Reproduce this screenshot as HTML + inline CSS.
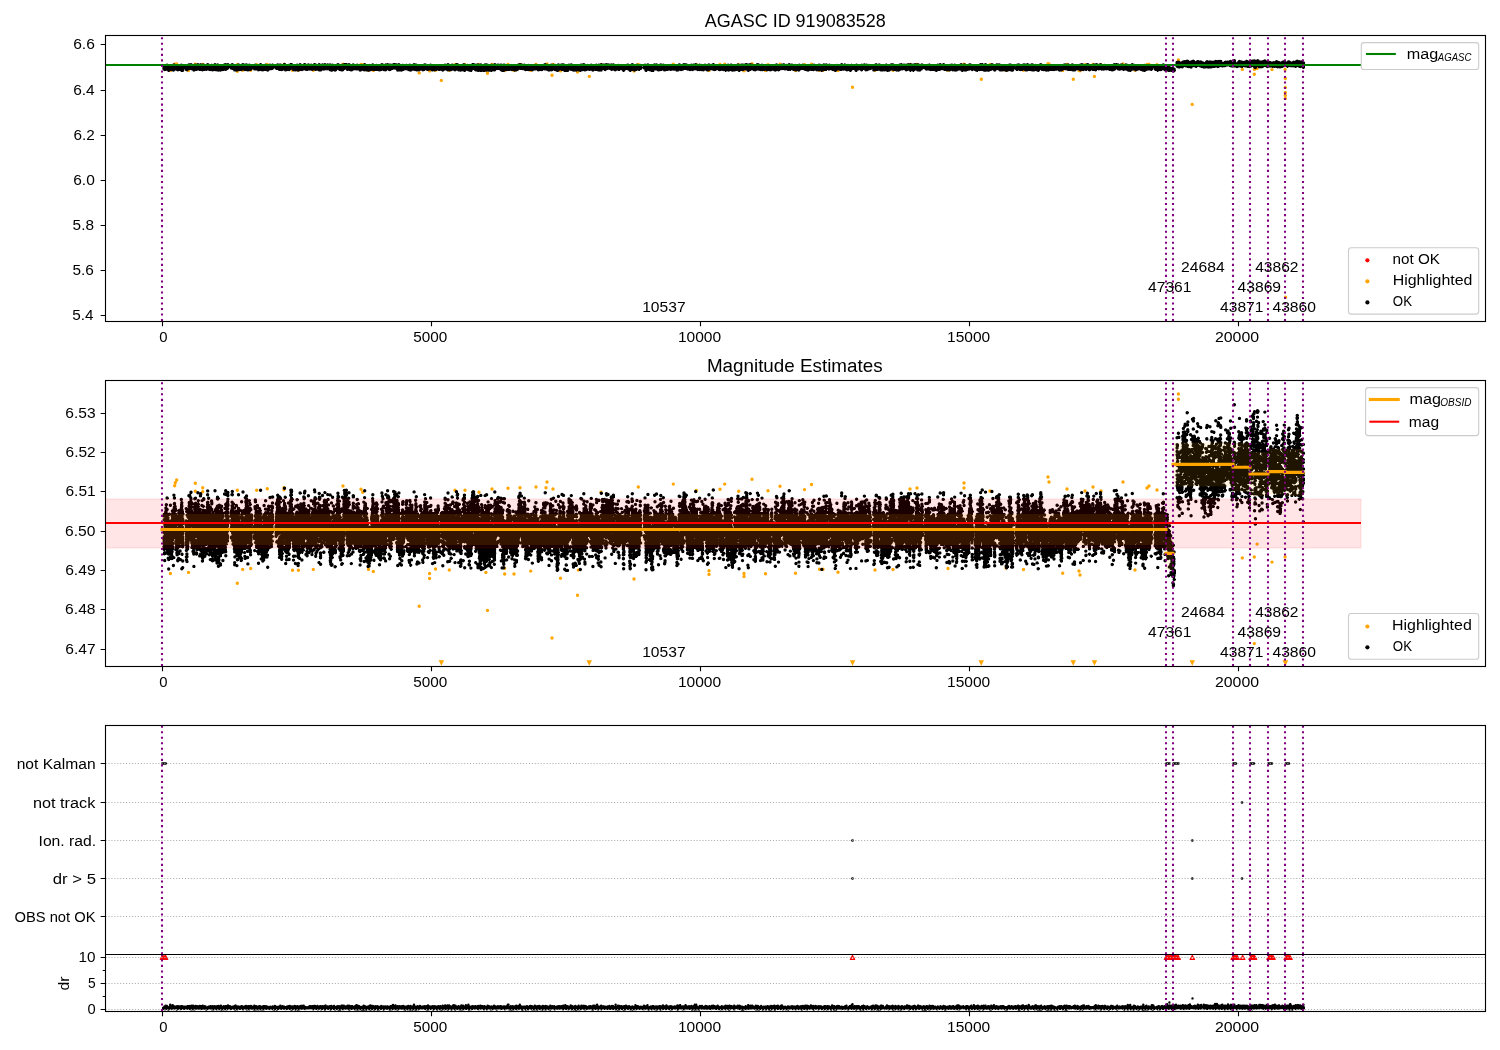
<!DOCTYPE html>
<html><head><meta charset="utf-8"><title>AGASC ID 919083528</title>
<style>html,body{margin:0;padding:0;background:#fff;overflow:hidden}svg{display:block;font-family:"Liberation Sans",sans-serif;will-change:transform}</style>
</head><body>
<svg width="1500" height="1050" viewBox="0 0 1500 1050">
<rect width="1500" height="1050" fill="#fff"/>
<text x="704.67" y="27.17" font-size="17.66" textLength="181.02" lengthAdjust="spacingAndGlyphs" fill="#000">AGASC ID 919083528</text>
<clipPath id="c1"><rect x="105.5" y="35.5" width="1380.0" height="286.0"/></clipPath>
<g clip-path="url(#c1)"><path d="M170.4 70.6h0m4.3-6.3h0m.6-.2h0m1.4-.2h0m11.8 6.6h0m6.8-6.4h0m0 .6h0m7.4-.3h0m0 .3h0m34.6-.1h0m0 6.7h0m5.4-1h0m8-.1h0m6-5.6h0m10.6-.1h0m16.7-.1h0m0 .2h0m8.5 5.7h0m5.9 0h0m14.9 0h0m29.7-6h0m18 .2h0m1.7 .2h0m5.8 5.6h0m4.8 .1h0m45.9 2.5h0m10.4-2.3h0m0 .3h0m5.9-.7h0m5.8 10.2h0m8-10.1h0m5.7-5.7h0m10 0h0m14 .1h0m6.9 5.8h0m1.6 2.7h0m4.5-8.7h0m12.7 5.7h0m0 .4h0m3.3-6.1h0m6 6.1h0m6-6.2h0m10.7 6h0m5.3-6h0m10 0h0m1-.4h0m5 11.2h0m1-10.7h0m7.5 6.4h0m17 1.2h0m.8-1.8h0m11 6.1h0m11.7-11.7h0m33 6.3h0m4.3-6.6h0m35-.2h0m23 .4h0m12.7 5.8h0m0 .2h0m11-6.1h0m4.7-.3h0m14 .5h0m5.3 5.9h0m0 .2h0m8-7h0m13.5 6.8h0m2.5-6h0m12-.3h0m15.5 6.3h0m9-6h0m7-.4h0m8 6.1h0m3.5 0h0m15 .2h0m14.5 16.8h0m22.5-17h0m18 0h0m17-5.8h0m7-.1h0m31 5.8h0m16-6.1h0m0 .3h0m17.3 14.9h0m8.7-14.6h0m16 5.5h0m17.5 .1h0m24.5-6.7h0m1 .4h0m13.7 6.6h0m4.3-6.1h0m6.3 14.8h0m5.7-8.9h0m1 .3h0m5-6h0m8-.3h0m1.4 12h0m6.6-11.7h0m22-.7h0m12 6.3h0m12-5.9h0m2-.1h0m8 .3h0m21.4-4.6h0m0 .3h0m13.8 44.1h0m50.1-35h0m12 0h0m0 4.9h0m2.8-5.7h0m14.9 1h0m13.1-.2h0m.2 9.1h0m0 8.9h0m0 5h0m0 3.1h0m0 2.9h0m.3 198.9h0" stroke="#ffa500" stroke-width="3.4" stroke-linecap="round" fill="none"/><path d="M163 66h479v1h-479zM163 67h1010v1h-1010zM163 68h66v1h-66zM163 69h21v1h-21zM164 65h20v1h-20zM164 70h2v1h-2zM167 64h1v1h-1zM168 70h7v1h-7zM168 71h1v1h-1zM173 64h2v1h-2zM177 70h7v1h-7zM181 64h1v1h-1zM181 71h2v1h-2zM185 65h44v1h-44zM185 69h43v1h-43zM186 70h2v1h-2zM188 64h4v1h-4zM193 70h4v1h-4zM194 64h11v1h-11zM199 70h6v1h-6zM206 70h1v1h-1zM207 64h2v1h-2zM209 70h15v1h-15zM211 64h1v1h-1zM214 64h5v1h-5zM223 64h6v1h-6zM225 70h1v1h-1zM230 68h44v1h-44zM231 64h3v1h-3zM231 65h21v1h-21zM232 69h20v1h-20zM234 70h8v1h-8zM238 64h2v1h-2zM241 64h7v1h-7zM244 70h2v1h-2zM247 70h4v1h-4zM249 64h1v1h-1zM254 65h20v1h-20zM254 69h19v1h-19zM255 64h1v1h-1zM258 70h2v1h-2zM259 64h3v1h-3zM260 63h1v1h-1zM261 70h8v1h-8zM265 64h1v1h-1zM269 64h5v1h-5zM275 65h93v1h-93zM275 68h367v1h-367zM276 64h6v1h-6zM276 69h15v1h-15zM279 70h4v1h-4zM283 64h3v1h-3zM284 63h1v1h-1zM285 70h2v1h-2zM288 64h5v1h-5zM288 70h2v1h-2zM290 63h2v1h-2zM292 69h45v1h-45zM293 70h7v1h-7zM297 64h1v1h-1zM299 64h3v1h-3zM301 70h2v1h-2zM303 64h3v1h-3zM306 70h2v1h-2zM307 64h2v1h-2zM311 64h1v1h-1zM312 70h1v1h-1zM313 64h8v1h-8zM314 63h1v1h-1zM315 70h1v1h-1zM318 70h4v1h-4zM322 64h12v1h-12zM329 70h8v1h-8zM337 64h3v1h-3zM338 69h7v1h-7zM339 70h5v1h-5zM342 64h8v1h-8zM344 63h1v1h-1zM346 63h1v1h-1zM346 69h47v1h-47zM347 70h1v1h-1zM349 70h3v1h-3zM352 64h2v1h-2zM356 64h3v1h-3zM359 70h3v1h-3zM363 64h3v1h-3zM363 70h9v1h-9zM371 65h8v1h-8zM372 64h2v1h-2zM373 70h9v1h-9zM375 64h3v1h-3zM381 64h3v1h-3zM381 65h59v1h-59zM383 70h4v1h-4zM385 64h15v1h-15zM389 70h2v1h-2zM396 69h123v1h-123zM397 70h7v1h-7zM402 64h2v1h-2zM406 64h2v1h-2zM408 70h4v1h-4zM409 64h2v1h-2zM413 64h4v1h-4zM414 70h6v1h-6zM422 70h3v1h-3zM424 64h3v1h-3zM427 70h1v1h-1zM430 64h2v1h-2zM432 70h5v1h-5zM439 70h1v1h-1zM441 65h98v1h-98zM442 70h2v1h-2zM444 64h5v1h-5zM447 70h5v1h-5zM451 64h3v1h-3zM454 70h2v1h-2zM455 64h5v1h-5zM458 70h8v1h-8zM462 64h4v1h-4zM464 71h1v1h-1zM467 64h1v1h-1zM467 70h5v1h-5zM469 64h13v1h-13zM471 71h1v1h-1zM475 70h21v1h-21zM478 71h1v1h-1zM480 71h2v1h-2zM483 71h2v1h-2zM484 64h5v1h-5zM491 64h1v1h-1zM491 71h1v1h-1zM494 64h8v1h-8zM500 70h5v1h-5zM502 71h2v1h-2zM503 64h2v1h-2zM506 70h4v1h-4zM511 70h7v1h-7zM518 64h4v1h-4zM520 69h88v1h-88zM524 64h1v1h-1zM525 70h8v1h-8zM528 64h2v1h-2zM535 64h2v1h-2zM537 70h6v1h-6zM540 65h25v1h-25zM543 64h5v1h-5zM547 70h6v1h-6zM550 64h4v1h-4zM554 70h5v1h-5zM555 64h1v1h-1zM557 64h8v1h-8zM557 71h1v1h-1zM561 70h8v1h-8zM564 71h4v1h-4zM567 65h11v1h-11zM568 64h5v1h-5zM571 70h16v1h-16zM579 65h44v1h-44zM580 64h5v1h-5zM580 71h1v1h-1zM587 64h1v1h-1zM589 70h1v1h-1zM590 64h2v1h-2zM592 70h2v1h-2zM595 70h7v1h-7zM596 64h1v1h-1zM598 64h21v1h-21zM604 70h2v1h-2zM610 69h31v1h-31zM611 70h1v1h-1zM614 70h2v1h-2zM618 70h2v1h-2zM622 70h3v1h-3zM623 71h1v1h-1zM624 65h18v1h-18zM626 64h3v1h-3zM629 70h8v1h-8zM630 71h1v1h-1zM631 64h3v1h-3zM635 64h3v1h-3zM639 70h1v1h-1zM640 64h1v1h-1zM643 65h24v1h-24zM643 66h372v1h-372zM643 68h510v1h-510zM644 64h2v1h-2zM645 69h156v1h-156zM645 70h2v1h-2zM646 71h1v1h-1zM647 64h2v1h-2zM649 70h5v1h-5zM651 71h3v1h-3zM654 64h4v1h-4zM657 70h5v1h-5zM660 64h4v1h-4zM664 70h4v1h-4zM668 65h8v1h-8zM670 70h1v1h-1zM671 64h1v1h-1zM676 70h3v1h-3zM678 64h3v1h-3zM678 65h55v1h-55zM680 70h2v1h-2zM682 64h5v1h-5zM689 70h2v1h-2zM690 64h10v1h-10zM692 70h1v1h-1zM697 70h7v1h-7zM701 64h5v1h-5zM706 70h3v1h-3zM708 64h2v1h-2zM712 64h3v1h-3zM713 63h1v1h-1zM714 70h2v1h-2zM718 64h2v1h-2zM719 70h2v1h-2zM723 70h14v1h-14zM725 64h1v1h-1zM725 71h1v1h-1zM727 64h2v1h-2zM730 64h2v1h-2zM734 65h35v1h-35zM737 64h2v1h-2zM738 70h6v1h-6zM739 71h1v1h-1zM741 64h12v1h-12zM747 70h4v1h-4zM748 71h1v1h-1zM753 70h3v1h-3zM756 64h4v1h-4zM760 70h5v1h-5zM761 64h3v1h-3zM766 70h6v1h-6zM771 65h2v1h-2zM774 65h97v1h-97zM774 70h3v1h-3zM775 64h3v1h-3zM778 70h2v1h-2zM781 64h4v1h-4zM786 64h7v1h-7zM788 70h1v1h-1zM790 70h1v1h-1zM793 70h7v1h-7zM795 64h1v1h-1zM799 64h1v1h-1zM801 64h4v1h-4zM802 69h62v1h-62zM805 70h5v1h-5zM811 70h3v1h-3zM812 64h3v1h-3zM816 70h11v1h-11zM818 64h2v1h-2zM821 71h1v1h-1zM823 64h5v1h-5zM829 64h2v1h-2zM832 70h5v1h-5zM835 71h1v1h-1zM837 64h1v1h-1zM840 70h2v1h-2zM841 64h5v1h-5zM846 70h6v1h-6zM848 64h1v1h-1zM850 71h1v1h-1zM851 64h1v1h-1zM855 70h2v1h-2zM856 64h1v1h-1zM856 71h1v1h-1zM858 64h1v1h-1zM861 64h7v1h-7zM861 70h2v1h-2zM865 69h6v1h-6zM865 70h3v1h-3zM869 64h1v1h-1zM873 65h51v1h-51zM873 69h49v1h-49zM873 70h5v1h-5zM874 64h7v1h-7zM880 70h10v1h-10zM886 64h1v1h-1zM887 71h1v1h-1zM890 64h5v1h-5zM893 70h7v1h-7zM899 64h21v1h-21zM905 70h3v1h-3zM909 70h6v1h-6zM910 71h1v1h-1zM913 71h1v1h-1zM917 70h4v1h-4zM921 64h2v1h-2zM925 64h1v1h-1zM925 65h41v1h-41zM925 69h73v1h-73zM927 64h3v1h-3zM930 70h10v1h-10zM936 71h1v1h-1zM937 64h8v1h-8zM944 70h7v1h-7zM950 64h6v1h-6zM952 70h6v1h-6zM960 64h6v1h-6zM961 70h7v1h-7zM962 71h1v1h-1zM968 64h4v1h-4zM968 65h5v1h-5zM972 70h1v1h-1zM975 70h16v1h-16zM976 65h31v1h-31zM977 64h10v1h-10zM977 71h1v1h-1zM982 63h1v1h-1zM991 64h3v1h-3zM994 70h2v1h-2zM996 64h5v1h-5zM999 69h15v2h-15zM1006 71h1v1h-1zM1008 64h4v1h-4zM1008 65h5v1h-5zM1016 64h4v1h-4zM1016 65h29v1h-29zM1016 66h154v1h-154zM1016 69h100v1h-100zM1016 70h2v1h-2zM1020 70h3v1h-3zM1023 64h7v1h-7zM1025 70h15v1h-15zM1031 64h3v1h-3zM1035 64h2v1h-2zM1038 71h1v1h-1zM1039 64h4v1h-4zM1042 70h13v1h-13zM1049 65h80v1h-80zM1058 70h5v1h-5zM1063 64h10v1h-10zM1068 70h8v1h-8zM1079 64h5v1h-5zM1080 70h4v1h-4zM1086 64h4v1h-4zM1086 70h1v1h-1zM1089 70h2v1h-2zM1092 64h6v1h-6zM1092 70h5v1h-5zM1099 64h3v1h-3zM1104 64h1v1h-1zM1109 70h5v1h-5zM1113 64h10v1h-10zM1116 63h1v1h-1zM1117 69h36v1h-36zM1123 70h1v1h-1zM1125 64h3v1h-3zM1127 70h5v1h-5zM1130 71h1v1h-1zM1131 64h4v1h-4zM1131 65h21v1h-21zM1135 70h2v1h-2zM1140 64h1v1h-1zM1141 70h6v1h-6zM1144 64h1v1h-1zM1144 71h1v1h-1zM1147 64h2v1h-2zM1151 70h1v1h-1zM1154 65h12v1h-12zM1154 68h21v2h-21zM1155 70h7v1h-7zM1157 71h1v1h-1zM1162 64h3v1h-3zM1164 70h2v1h-2zM1167 70h9v1h-9zM1168 71h2v1h-2zM1171 71h4v1h-4zM1176 62h28v1h-28zM1176 63h129v3h-129zM1176 66h22v1h-22zM1177 61h3v1h-3zM1177 67h6v1h-6zM1182 61h13v1h-13zM1186 60h3v1h-3zM1188 67h4v1h-4zM1192 60h2v1h-2zM1196 61h6v1h-6zM1196 67h1v1h-1zM1199 66h27v1h-27zM1201 67h14v1h-14zM1205 62h17v1h-17zM1206 61h16v1h-16zM1215 60h1v1h-1zM1217 67h2v1h-2zM1219 60h3v1h-3zM1223 62h13v1h-13zM1225 61h7v1h-7zM1230 60h1v1h-1zM1230 66h75v1h-75zM1233 60h3v2h-3zM1234 59h1v1h-1zM1236 67h2v1h-2zM1237 62h68v1h-68zM1238 61h30v1h-30zM1239 60h1v1h-1zM1242 67h1v1h-1zM1246 60h1v1h-1zM1247 67h3v1h-3zM1250 60h9v1h-9zM1254 67h3v1h-3zM1255 68h1v1h-1zM1258 67h5v1h-5zM1263 60h3v1h-3zM1267 67h1v1h-1zM1269 61h1v1h-1zM1272 67h1v1h-1zM1274 67h1v1h-1zM1275 61h3v1h-3zM1276 67h7v1h-7zM1282 61h4v1h-4zM1287 67h1v1h-1zM1288 61h2v1h-2zM1293 61h10v1h-10zM1295 67h1v1h-1zM1297 60h1v1h-1zM1299 67h2v1h-2zM1302 67h3v1h-3zM1303 68h1v1h-1z" fill="#000"/><path d="M164 68.6h0m0-.5h0m0 .7h0m.1-.4h0m0-1h0m0-.9h0m.1-.2h0m.2 2.8h0m.3 .5h0m1.2-3.7h0m.4 3.2h0m0-3.5h0m.8-.4h0m.2 3.7h0m0 .1h0m.1 0h0m0-.1h0m.8 .6h0m.5 .7h0m.7-3.9h0m1-.6h0m0 3.7h0m1.4 .1h0m.6-3.4h0m1 3.9h0m.4-.6h0m.1-4.5h0m.5 .3h0m.7 .6h0m.2 .2h0m0-.1h0m.2 .2h0m.3 2.7h0m.2-.1h0m0-2.2h0m.5 0h0m.5 2.6h0m.1 .1h0m.7 .5h0m.2-3.2h0m.1 3.1h0m.5-.1h0m.2-3.4h0m1.7 3.5h0m.8-4.3h0m.5 .2h0m0 4.7h0m.1-4.5h0m.5 .4h0m.2 2.6h0m.1 1h0m0 .5h0m.3-1.8h0m0-2.1h0m3.2-.4h0m0 2.6h0m.2 .4h0m0 .5h0m.1 .2h0m.2-3.5h0m.3 3.6h0m.9-1.1h0m1-3.6h0m.5 3.2h0m.3-3.2h0m.3 3.2h0m.7-3.1h0m.3-.4h0m.8 .8h0m.1 3.2h0m.4 0h0m.1 0h0m.4-.1h0m.2 .4h0m.9 1.1h0m.9-4.9h0m.7 0h0m.2 .3h0m.8 3.7h0m.2-.1h0m1.2-4.3h0m0 3.9h0m1.3 0h0m.5 .6h0m.9-4.4h0m.1 0h0m0 4.3h0m1.4-3.9h0m.3 4.4h0m.3-.2h0m.8-4.2h0m.3 0h0m0-.1h0m1 4.1h0m.3-3.2h0m0 0h0m.4 0h0m.1 3h0m0-.2h0m.9 .1h0m.1 .1h0m.8-.3h0m.2-3.9h0m.1-.3h0m.9 .6h0m.7 4h0m.9-3.4h0m.1 3.8h0m1.3-4.2h0m.2 .2h0m0-.1h0m.4 4.1h0m.3 .1h0m.5-3.6h0m.1 .3h0m.6 3.2h0m1.3-5h0m.3 4.9h0m.8 .1h0m.9 .2h0m.5-4.7h0m.3 .1h0m.3 0h0m.3 4.8h0m.3-.3h0m.6-3.9h0m0-.1h0m.7 .4h0m.2 3.8h0m.3 .1h0m.8-4h0m.2-.2h0m0-.1h0m.2 .4h0m.2 .1h0m.2 .1h0m.1 0h0m.5 0h0m.1 0h0m.1 3.3h0m.8-.6h0m0 0h0m.9-4.1h0m.1 4.1h0m.1-.1h0m.9-4.3h0m.1 4.7h0m.3-4.4h0m1.3 3.1h0m0 .2h0m.1-.3h0m0 .2h0m.2-.6h0m.2-2.5h0m0-.2h0m0 .8h0m.1 .1h0m.2 1.2h0m3.1-.6h0m0 1.7h0m.1-.5h0m0-1.4h0m.1 1.9h0m.4-3.1h0m.2 .6h0m.2-.8h0m.5 3.5h0m.3 .3h0m.3-2.9h0m.8 .3h0m.5 3.9h0m0 .1h0m1.2-3.8h0m.3-.4h0m.2 0h0m.5 4.3h0m.5-.4h0m.1 0h0m1-4.7h0m.7 4.6h0m.8-.1h0m.9-3.3h0m.3 3.5h0m.4-4.2h0m.7 3.3h0m0 0h0m.3-.1h0m0 .2h0m.4-4.1h0m.6 4h0m.5 0h0m.5 .4h0m.5 .4h0m.2-4.4h0m1.2-.1h0m1.1 4.4h0m.1-3.6h0m.2 4.1h0m1.4-4.6h0m.4 .2h0m.4 .1h0m.5 3.6h0m.2-3.2h0m.5 2.5h0m.1-2.1h0m0 .2h0m0-.1h0m3.1 1.6h0m0-.1h0m0-.1h0m.1 .1h0m.1 .9h0m0-2.1h0m.3-1h0m.1 .6h0m.2-1.1h0m.1 .1h0m.9 .5h0m.3 2.8h0m.3-2.9h0m.4-.1h0m.2 .1h0m.1 3.2h0m.9 .8h0m.4-3.7h0m.4 2.8h0m.2-3h0m.4 3.1h0m.7-4.4h0m.6 4.9h0m.2-3h0m.4 3h0m1 .2h0m.6-.2h0m0 .1h0m.3 0h0m.4-3.9h0m.9 3.7h0m.6-4.1h0m1.3 4h0m.1 .1h0m.4-3.4h0m.3 4.1h0m.9-4.4h0m.8 3h0m.6-3.6h0m.7 3.4h0m.6-.1h0m.2 .2h0m.7-.7h0m0 .3h0m.3-3.1h0m.1 2.3h0m0-.9h0m.1-1.4h0m3.3 2.8h0m.1-.2h0m0-.8h0m.2-1.3h0m.1 1h0m.3 1.7h0m.1-2.8h0m0 .1h0m.3 0h0m.3 2.7h0m.2-3h0m0 0h0m.1-.3h0m.5 3.4h0m.3 .2h0m.7-3.5h0m.3 4.3h0m.1-.2h0m.5-4.1h0m.5 .1h0m1.1 4.4h0m.5-.5h0m1.3-3.7h0m.2 3.4h0m.1-.1h0m.7-4.2h0m.7 .6h0m.5 4.8h0m.9-.3h0m.6-3.4h0m.4 2.7h0m.1-2.6h0m.2 2.7h0m.6-3.5h0m.6 4.1h0m0 0h0m0-.4h0m.4-.6h0m0 .1h0m0 0h0m0-.1h0m1-.4h0m.3-3.6h0m.7 0h0m.2 3.4h0m.3-.1h0m.1-2.7h0m.1 2.8h0m.4 .1h0m.3-2.1h0m.6 3.6h0m0-.3h0m.4-3.4h0m1.5 4h0m.3-4.2h0m1.4-.4h0m.7 .5h0m0-.1h0m.3 4.3h0m.2-.2h0m1.2-.3h0m.4-.5h0m.2-4.2h0m1.8 4.8h0m.6-3.9h0m.1 0h0m.1-.1h0m.5 3.3h0m.6-3.8h0m.4 3.5h0m.3-3.8h0m0 0h0m.4-.1h0m.4 3.9h0m.6-2.7h0m.1 3.3h0m.9 0h0m.2 .1h0m1.3-4.3h0m.7 4.1h0m1.2-.2h0m.9-3.6h0m.8 3.9h0m1.4-3.8h0m.2 .2h0m.1 3.3h0m.8-4.3h0m.3 .1h0m.9 4.6h0m.2-4.1h0m.1 3.9h0m.9-.1h0m1-3.5h0m1.1 4.3h0m.2-5h0m.3 .3h0m.4 0h0m.7 4.8h0m1.3-1.2h0m.6-3.7h0m1.3 4h0m.1 0h0m1-4.2h0m.4 3.7h0m.5 0h0m.4-3.1h0m1 3.3h0m.5-3.8h0m.4 .4h0m.7 3.2h0m.7 .5h0m.6-4.1h0m.2 4.7h0m.1 .1h0m.1 .1h0m.2 .1h0m.3 0h0m.5 .1h0m.5 0h0m.6-4.9h0m.7 .6h0m1.2 .2h0m.2 .1h0m.4 4.1h0m.1-4h0m1 2.5h0m.5-3h0m.3 2.5h0m0-.2h0m.1 .1h0m.8-3.2h0m.6 .3h0m.4 3.7h0m.5-3.4h0m.7 4h0m.6 .2h0m.2-3.5h0m.6 0h0m.1-.2h0m.1 4h0m.5 0h0m.2-4.8h0m.6 4.2h0m.2-.3h0m.1-.1h0m.1-.1h0m.9-4.2h0m.4 .2h0m.3 2.9h0m1-2.9h0m.1-.1h0m.2-.1h0m1 4.7h0m.9-.2h0m.8-4.3h0m.1 4.1h0m.3 .4h0m1.4-3.2h0m.5 3.8h0m1.7-.9h0m.2-4h0m.1 .1h0m1.6 3.4h0m.3-2.7h0m.4 2.8h0m.5 .2h0m.1 0h0m.5-3.2h0m.3 3.1h0m.2-3.4h0m.5 3.4h0m0 0h0m.5-3.1h0m.1 0h0m1.8 4.4h0m.1-3.9h0m.6 3.6h0m.2-3.6h0m.2 .3h0m.2 2.5h0m1.6-2.8h0m.1 .2h0m.4 2.9h0m.3-3.8h0m.4 4.3h0m.5-5.1h0m.7 1h0m.6 3.9h0m.2 .2h0m.3-3.8h0m.7 0h0m.9 4.2h0m.1 0h0m0-.1h0m.3-2.8h0m.4 .2h0m.2 2.6h0m0-.1h0m.3-2.4h0m.6 2.2h0m.1-.1h0m.4-2.1h0m.1 1.9h0m0 .2h0m0-.2h0m.4 0h0m.1-.1h0m.1-.1h0m.4-3.2h0m.6 3h0m.6-4.1h0m.5 .6h0m.2 .3h0m.4 3.8h0m1.4-4h0m.3 3.6h0m.6 .1h0m.2-3.8h0m.7 .1h0m.5 3.6h0m0-3.3h0m.4 .6h0m.5 2.7h0m.2 .2h0m.7-2.4h0m.1 2.9h0m.3-2.8h0m.1 0h0m.5 2.5h0m.3 0h0m.1-.1h0m0 0h0m.4-.5h0m.3-3h0m.4-1.2h0m.1 .6h0m.3-.4h0m0 3.7h0m.7-3.5h0m.6 3.7h0m.3 .6h0m.4 0h0m1.3 .2h0m.3-4.8h0m.8 3.6h0m.9-3.9h0m.5 .4h0m.6 .1h0m.3 4.1h0m.4-3.9h0m.2 4.2h0m.7-.2h0m.6-4h0m.2 3.5h0m1.6-.7h0m.9-3.4h0m.5 3.4h0m0-.2h0m.6-3.2h0m0 0h0m.3 0h0m.1 .3h0m.3 2.6h0m.8 .1h0m.2-2.8h0m.3 3.5h0m.1-3.1h0m.3 .1h0m0 3h0m.3 .5h0m.1 .1h0m.2 1h0m.1 0h0m.4-4.9h0m.7-.3h0m1 4.7h0m0 .4h0m.1-3.6h0m1.4 3.7h0m.3-.4h0m.1 .1h0m.6-.4h0m.2-3.7h0m.1-.2h0m.3 0h0m.3 3.8h0m.5-.1h0m.2-.2h0m1.6-2.6h0m.2 2.3h0m.3-3h0m0-.1h0m.6-.1h0m.9 3.5h0m0 .1h0m.5-3h0m0 .1h0m.1 0h0m.9 3.5h0m.4 .2h0m.3-4.5h0m.3 .1h0m.6 4.6h0m.7-.4h0m.5-3.7h0m.1-.2h0m.6 3.1h0m.1 0h0m0-.2h0m0 0h0m.2 .2h0m.1 0h0m.6 0h0m.5-4.1h0m.3 4.6h0m.1-.2h0m1.1-3.8h0m.7-.2h0m.6 4.8h0m.6-.2h0m.1-3.4h0m1.4 3.5h0m.8-4h0m.1 3.1h0m.7-3.2h0m.4 .2h0m0 .1h0m.3-.1h0m.4 .4h0m.5-.1h0m.4 0h0m0 3.4h0m.3 .2h0m.4-3.4h0m.1-.1h0m.7 3.1h0m.1-.1h0m.4-4.4h0m.9 .3h0m1.3 .3h0m.8 3.9h0m.7-.4h0m0-3.2h0m.8 3.3h0m1-.2h0m.5-3.7h0m1.9 4.7h0m.6-3.6h0m.2 3.1h0m.3 .1h0m.6-3.1h0m.5 3.4h0m.3-3.4h0m.5-.4h0m.2 .2h0m.2 .1h0m.2 3.1h0m.5-3h0m.9-.2h0m.3 2.2h0m.3-2.7h0m.1 .2h0m0 .2h0m.2-.1h0m.4 2.7h0m.4 .7h0m1.7-.3h0m.1-2.7h0m0 0h0m.2-.1h0m.3-.1h0m.2 .1h0m.3 0h0m.2 0h0m.1-.1h0m.5 3.8h0m1-.7h0m.2-3h0m.4-.4h0m.7-.7h0m0 0h0m.4 3.6h0m2.2 .9h0m.3-4.9h0m1.7 4.9h0m.5-4h0m.9 3.8h0m1-4.4h0m.8 .3h0m.2 3.4h0m.1 0h0m.9 .4h0m.4-3.4h0m.5 4h0m1.4-5.1h0m.4 4.2h0m.4-3.9h0m.4-.1h0m1 4.9h0m.6-4.2h0m1.1 .8h0m.1 3.6h0m.3-3.8h0m.1 3.8h0m.1-.4h0m.1 .3h0m2-4.6h0m.2 4.4h0m.2-4.5h0m.1 0h0m.8-.1h0m.1-.2h0m.3 5.3h0m.5-4.5h0m.5 3.5h0m1.6-3.7h0m.4 3.8h0m.3 0h0m.5-3.6h0m.5 4.2h0m.4 .1h0m.4-4.6h0m.8 .2h0m.3 4.6h0m.6-1h0m.3-3.7h0m.3-.3h0m.1 .1h0m.2 3.1h0m.1-3.4h0m.2-.3h0m.4 .1h0m0 0h0m.2-.1h0m.3 0h0m0 .2h0m.1 0h0m0 0h0m.3 3.6h0m1.7 1.3h0m.3-4.7h0m1.3 4.8h0m.4-4.9h0m.3 5.2h0m.5-4.9h0m1.2 4.6h0m.3 .2h0m.2 .1h0m.6-5.2h0m.1 5.2h0m.1 0h0m.1-.1h0m.1 .2h0m.4-4.7h0m.2 .2h0m.1 .3h0m.1-.1h0m.3 .1h0m.1 0h0m.1-.1h0m.9 4.2h0m1.5-.1h0m.2-5.1h0m1.2 5.1h0m.2-.4h0m.1-4.8h0m1.5 .5h0m.1 .3h0m.2 4.3h0m.7-4h0m.5 4h0m.1 0h0m.8-4.3h0m.9 4.5h0m.1-5h0m.8 .6h0m0 3.9h0m2 .2h0m.2-.3h0m.3-4.9h0m1 .9h0m.6 0h0m.5 3h0m.3-.2h0m.4-3.2h0m.7-.1h0m0 3.2h0m.1 0h0m.4-2.8h0m1.1-.1h0m.5 3.5h0m.2-3.5h0m.3-.2h0m.2 0h0m.2 4.5h0m.8 .5h0m1.2-4.7h0m.2-.3h0m.2 4.7h0m.1 .3h0m0-.3h0m.6-4.7h0m0 .3h0m1.1 3.5h0m.2 0h0m.2-.1h0m.5 .2h0m.2 .5h0m.6-3.5h0m0 0h0m.5-.1h0m.9 3.4h0m.1-3.7h0m.6 .1h0m.4 .4h0m.9 2.9h0m.1-2.7h0m0 2.6h0m.3-.1h0m0 0h0m.4-2.3h0m.4 2.6h0m.2 .3h0m.6-.2h0m.3-3.2h0m1.2 .3h0m.2 .1h0m.1 0h0m.4 3.6h0m.6-3.5h0m.4-.4h0m.1 0h0m.5 3.6h0m.1-.2h0m.4-3.2h0m.5 2.9h0m.2-3.1h0m.8 2.1h0m.4-3.2h0m0-.1h0m.2 2.9h0m.8-3h0m.3-.1h0m.5 3.6h0m.8-3.4h0m.3 .5h0m.6 .3h0m.4 2.8h0m.2-.2h0m0 .2h0m.3-2.7h0m.9 2.6h0m.2-3.3h0m.1 .4h0m0-.1h0m.1 0h0m.4 .2h0m.6 3.8h0m.2 0h0m.1 0h0m.2-.3h0m0 .1h0m.2-.2h0m.2 .3h0m.7-.1h0m.6-3.3h0m0 0h0m.1 3.2h0m.6 .4h0m.3-4.2h0m.5 3.7h0m1.6 .2h0m.2-3h0m1.3 3.5h0m.3-3.5h0m.2 0h0m.4 0h0m.1 2.4h0m.2 .1h0m.2 0h0m.3-2.7h0m.8-.3h0m0 2.9h0m.8 0h0m.2-3.2h0m.2 0h0m1.4 .5h0m.7 3.5h0m.2 .2h0m.3-.3h0m.3 .1h0m.1-.1h0m.4 .1h0m.4-.3h0m.4-2.3h0m.5-.4h0m.8 2.9h0m0-3.3h0m.1 3.5h0m1.2-1h0m.5-2.5h0m.3-.2h0m0-.3h0m0 0h0m.1-.1h0m.1 2.9h0m.2 0h0m.2 .2h0m.1-.1h0m.3 .2h0m.1 .2h0m.5-4.1h0m1.5 4.3h0m.7-3.6h0m.1 3.7h0m1.5 .8h0m1.1-3.9h0m.2-.4h0m.1-.1h0m.9-.4h0m.2 4.5h0m2-4.5h0m.6 3.7h0m0 .1h0m.6 .2h0m.8 .3h0m.3-4.1h0m1.1 4.7h0m.2-.2h0m.1 .4h0m.2-.1h0m.4 .1h0m.5-.5h0m.1-4.8h0m1.9 3.4h0m0 .2h0m.1-3.2h0m.2 3.1h0m.7 .4h0m.1 .4h0m.5-.1h0m.1-4.3h0m1 4.3h0m.5-4.2h0m.5 .8h0m.7 4.5h0m.6-3.4h0m.2-.2h0m.7 3.7h0m1.3-4.3h0m0 4.3h0m1.5-5h0m0-.2h0m.4 3.5h0m.1 0h0m.1 0h0m.9 .3h0m.3-3.7h0m.3 4h0m.2-4.3h0m.9 .5h0m.2 3.7h0m0-3.4h0m.4 0h0m.4 4.1h0m.1 0h0m.2 .2h0m1.4-.1h0m.5-4.2h0m.8 4.2h0m.1-4.3h0m.1 .3h0m.1 0h0m.1-.1h0m.2 0h0m1.1 3.7h0m1 .1h0m.5 .1h0m.2-3.6h0m0 0h0m.7 4.1h0m.6-5.1h0m.4 4.3h0m.4-4.3h0m.8 4.2h0m0 .1h0m1.3-4.7h0m.7 4.7h0m.5 .4h0m.7-4.2h0m.1 0h0m.9 3.5h0m.4-3.8h0m2.4 .9h0m0 3.1h0m.1-3.2h0m.5-.3h0m.2-.1h0m.2-.2h0m.5 3.1h0m.2-3.5h0m.5 .5h0m.5 3.6h0m.7-3.6h0m0 4.4h0m1.8-4.1h0m1 3.2h0m.7-3.9h0m.2 4.1h0m0-3.9h0m1.5 4.3h0m.9-4.5h0m.1 4.7h0m2 .1h0m.2-5.3h0m.3 3.9h0m.9-3.4h0m.8 3.1h0m.5-3.1h0m.5 0h0m.8 4.2h0m.5-4.1h0m.4 3.3h0m.4-3.9h0m.3 .1h0m.2 3.6h0m.1-.1h0m.3-.5h0m.7-3h0m.4 3.1h0m.6-2.7h0m.1 2.8h0m.2-2.5h0m.1-.1h0m.1 0h0m.1 .1h0m.3 2.7h0m.4-.2h0m.1-2.7h0m.3 3h0m.2-3.1h0m.4-.2h0m.1 0h0m.3 4.1h0m1.5-4.1h0m.2-.1h0m.4 4h0m0-.1h0m1.5 .9h0m.4-4.2h0m1.7 0h0m.6 3.4h0m.4-3.6h0m.1 3.7h0m.5 .3h0m.1-.1h0m.6-3h0m.9 2h0m.3 0h0m0-.1h0m.3 .1h0m.3-2.4h0m.7 .3h0m1.1 3.7h0m0-.7h0m.1 .3h0m.2 .7h0m.3-.3h0m.5-3.3h0m.5-.6h0m.1 2.3h0m0-.1h0m.3 .1h0m.5-.1h0m.3-.1h0m.1 .1h0m.1-2.4h0m0 2.4h0m.3 0h0m.3-2.8h0m0 2.8h0m.2-.1h0m.2 .5h0m.4-3.5h0m.6 3.4h0m.4-3h0m1 4.2h0m.2 .3h0m.2 .2h0m.1 0h0m.2-.3h0m.2 0h0m.7-.5h0m.7-4.2h0m.2 .1h0m.1-.5h0m.7 1.3h0m0 0h0m.6 3.4h0m.3-3.2h0m0 3.1h0m.6 .6h0m.3-3.7h0m.7-.7h0m.3 3.5h0m.3 .2h0m.2 0h0m.6-.2h0m0-3.8h0m1.7 3.8h0m0-.1h0m.2 .1h0m.1-2.9h0m0 3h0m.1 0h0m.1-.3h0m.5-2.8h0m.5 .2h0m0-.1h0m.1-.5h0m.1-.3h0m0 .9h0m0-.6h0m.1 .7h0m.1 .3h0m0 .1h0m.1-.1h0m0 1.7h0m.3-.6h0m0-.1h0m0-.3h0m3.4-.4h0m0 .9h0m.1-1.8h0m.1 1.8h0m.5-2.8h0m.1 3h0m.9 2.2h0m0-.5h0m.1-.1h0m.3 0h0m.3-.5h0m1.2-4.3h0m.3 4.1h0m.5-.1h0m.5 .7h0m1-3.4h0m.2 3.4h0m.8-3.7h0m.4 4.3h0m.1 0h0m.3-.1h0m.3 .2h0m.2-.2h0m.5 .2h0m.9-4.2h0m.1 2.7h0m.6-3.8h0m.8 3.7h0m.7-.1h0m.4 .1h0m0-3.8h0m.8 4.1h0m0-3.2h0m.2 3.4h0m.1 0h0m.9 .7h0m.6-4.2h0m1.4-.4h0m.3 4.2h0m0-4.5h0m2.5 .1h0m.2 3.8h0m.1-3.4h0m1 4.4h0m.3-.1h0m.2-.1h0m.2-3.9h0m.5 .2h0m.1 0h0m1.4 3.2h0m.5-2.3h0m0 2.2h0m.6-.2h0m.1 .2h0m.5-3h0m.2-.3h0m.5-.1h0m.8 3.3h0m.1 .2h0m.4-3.8h0m.7 .7h0m.1 3h0m.9-2.8h0m.8-.4h0m.2 3h0m0 .1h0m.3-.1h0m.2 .1h0m.1 0h0m.4 .1h0m.7-2.5h0m0 0h0m.4 .3h0m.2 0h0m.2 .3h0m.1 .1h0m.4-.1h0m0 0h0m.2 2.8h0m1.1-3.1h0m0 3h0m1.1-3.5h0m.1-1.4h0m.7 .1h0m1.2 4.5h0m.7-4h0m.8-.2h0m.2 3.6h0m.4-3.7h0m.3 3.1h0m.2-.2h0m.2-3.1h0m.1-.3h0m.3 .2h0m.6-.1h0m.1 3.3h0m.4-3.1h0m.9-.1h0m.5 3.2h0m0 0h0m.5 .5h0m.1 .2h0m.1-2.6h0m.1 2.8h0m.5-2.8h0m.2-.1h0m.1 .1h0m1-.5h0m.5 3.7h0m.7-3.9h0m.8-.3h0m.9 3.9h0m.2 .3h0m.2-.3h0m.4-3.7h0m0 0h0m.8-.2h0m1 3.4h0m0-.1h0m.8-3.9h0m.9 .7h0m.2 3.4h0m.8-3.4h0m.2 4.2h0m1.7-.1h0m.1-4.3h0m2 4.2h0m0 .1h0m.2-4.1h0m.5 4.1h0m.7-3.9h0m.3 4.1h0m1.8-4.5h0m.8 .5h0m.1 3.3h0m.2-3.2h0m1.3 4.1h0m.3-4.1h0m.4 4h0m.7-4.9h0m.7 4.1h0m.7-.2h0m.3-.3h0m.1 0h0m0 .1h0m0-.1h0m.1-2.2h0m.6 0h0m.7-.8h0m.2-.4h0m.3 3.4h0m0-.1h0m.1 .4h0m.3 .2h0m.3-4.4h0m1 4.9h0m.3-3.3h0m.3 3h0m.1-2.7h0m.7 0h0m.3-.1h0m.1 .1h0m.1 2.4h0m.2-2.4h0m.3 2h0m.2-2.2h0m.2-.1h0m.2 .1h0m.1 2.1h0m0-2.3h0m.1-.1h0m.1-.1h0m.8-.2h0m0-.1h0m.6 0h0m.2 .1h0m.1 3.8h0m.1-3.4h0m.5 3.4h0m1.5-3.8h0m0 3.3h0m.8-.1h0m.7 .3h0m.2-3.2h0m.4 3.6h0m1.6-4.1h0m.1 .1h0m.6 4.5h0m.9-4.4h0m.8 3.9h0m.6-4.3h0m.3 .2h0m.1 .1h0m.2 4.4h0m.9-.5h0m1.2-.1h0m0-4.1h0m.7-.1h0m.3 4.6h0m0-.1h0m.3 .2h0m0 .1h0m.4 .1h0m.2-.4h0m.4 .1h0m.6 0h0m.2-.1h0m.2 0h0m.4-3.5h0m.3 3.5h0m.5-.4h0m.2-3.2h0m.8 3.3h0m.4-3.5h0m.3 .2h0m.3-.3h0m.4-.6h0m.3-.2h0m.6 .2h0m.5 .6h0m0 4.4h0m1.1-1.1h0m.6-3.4h0m.1 .2h0m.3-.7h0m.7 0h0m.1 4.1h0m.5 .3h0m.8-4.5h0m1.4 3.6h0m.7 .1h0m.2-.3h0m.2-3.7h0m.9 0h0m1.1 4.5h0m.1 .7h0m.4 .2h0m.2-4.9h0m1.7-.5h0m.1 4.5h0m.6-.7h0m1.2-3.3h0m.4 3.2h0m.2-2.6h0m.1 2.6h0m.3-2.7h0m.8 3.8h0m.9-3.7h0m.5 3.8h0m.2-.2h0m.6-3.8h0m.1 0h0m0 0h0m.3 0h0m.2 3.3h0m.7-4.2h0m1 .2h0m.2 4h0m1-3.5h0m.9 4.1h0m1.4 0h0m.1-.1h0m0-4.3h0m.5 4.2h0m.2 .1h0m.2 .1h0m0-.1h0m.8-3.9h0m.5 3.7h0m1.5-3.6h0m.5 .2h0m.8 3.8h0m.9-3.6h0m.2 3.2h0m.3-3.3h0m.1 3.2h0m.9 .1h0m.4 .1h0m.2 .4h0m1-.3h0m.2 0h0m.3-3.2h0m0 0h0m0 0h0m.3-.3h0m1.6 1.1h0m.2-.2h0m.1 .1h0m.1 .1h0m0-.1h0m.1 .1h0m.2 2.3h0m.1 .2h0m.4 0h0m.7 .5h0m.1-4.3h0m.1-.3h0m1-.5h0m.4 .1h0m.4 3.9h0m.1-.1h0m.2-3.4h0m.9 4.3h0m.1-3.7h0m.9 2.9h0m.7-.8h0m0-2h0m.6-.2h0m.5 2.3h0m.2 0h0m.3-3.1h0m.1 3.4h0m.3-.1h0m1.4-3.5h0m.4-.1h0m.3 3.5h0m.8 .5h0m1.5-.3h0m.1-3.2h0m1.3 3.8h0m.4-3.7h0m.8-.9h0m.7 4.7h0m.4-.3h0m.7-.5h0m.4-3.1h0m.4 .2h0m.3-.4h0m.5 3.2h0m.9 .8h0m.5 .1h0m.7-.1h0m.3-3.7h0m1 4.4h0m.8-3.9h0m2.1 4.1h0m.1-.3h0m.3-4.5h0m.3 3.4h0m.1 .1h0m.1 0h0m1.1-.8h0m.5-2.4h0m.9 2.8h0m.5-3.1h0m.2 .2h0m.1 2.6h0m.5 .4h0m.2 .1h0m1-3.1h0m.7 3.9h0m1.3-3.2h0m.3 3.5h0m.1-3.8h0m.8 .4h0m.1 3.8h0m.8-.6h0m.9-3h0m.1 2.4h0m.4-2.8h0m1.2 3.3h0m.3-3.4h0m.6-.5h0m1 4.1h0m.6-4.3h0m.5 3.6h0m1-2.6h0m1.4 3.5h0m0-.3h0m.1-3.2h0m.6-.3h0m.4-.1h0m.6-.4h0m.3 4.3h0m.5-4.6h0m.7 .7h0m.1 .1h0m0 3.4h0m.2-3.5h0m.5 0h0m.5 .1h0m.3-.1h0m.1 4.4h0m.6-4.5h0m1.4 3.7h0m.1-4.5h0m.3 .3h0m.2 4.1h0m1.3 0h0m.6-4.4h0m.3 3.3h0m.4-2.8h0m1.8 3.2h0m.1 .3h0m.4-3.5h0m.2-.2h0m.4 .2h0m.5 .2h0m.4-.1h0m.2 .3h0m.2 2.6h0m0-.1h0m.2-2.3h0m.5 2.8h0m.1-2.9h0m.2 2.9h0m.2 .1h0m.2 0h0m.5 .4h0m.2-3.1h0m.2 .1h0m0 .1h0m.2 3h0m.3 0h0m.4 .2h0m.8 .5h0m.1-3.8h0m.5 3.6h0m.2-.4h0m.9-4.1h0m.6 3.4h0m.7-2.9h0m.5 .4h0m.7 2.5h0m.4-2.7h0m0 .1h0m.1 0h0m.4-.2h0m.2 3.3h0m1-.2h0m.1-4.2h0m.1-.2h0m1.9 4.3h0m.3-3.5h0m.3-.1h0m.1 0h0m.7-.3h0m.2-.1h0m.8 4.2h0m1 .5h0m1-.2h0m0-4.1h0m.8 .3h0m1.6 4.4h0m.7-.9h0m0-.1h0m.4-3.8h0m.1 .1h0m.1 .1h0m0 0h0m1.2 2.8h0m1.5-2.5h0m.9 2.8h0m.2 .4h0m.5 1.1h0m.6-5h0m.8 3.8h0m1.3-.3h0m.1-3.1h0m.4 .2h0m.1 0h0m0 0h0m.6 2.4h0m.2-2.5h0m.4-.1h0m.4 0h0m.3-.1h0m0 .1h0m0-.1h0m.2 0h0m0 0h0m.2 .1h0m0 4.1h0m.8-4.3h0m.4 3.1h0m.4-.6h0m1.2-2.9h0m.2 3h0m.2 0h0m.2-2.5h0m0-.1h0m.5 3h0m.3 .4h0m.1 .9h0m.8-4.4h0m.6 4.3h0m1-.7h0m.1-3h0m.5-.4h0m.7 .2h0m.3 .4h0m.1 .2h0m0 0h0m.2 2.3h0m.2-2.1h0m0 .4h0m0 1.4h0m0-.1h0m.1 0h0m0 0h0m.1 0h0m3-1.5h0m.1-.5h0m0 .1h0m.1 2.1h0m0 1.5h0m.4-4.1h0m.1 4.1h0m0-.3h0m.4-4.1h0m.6-.2h0m.9-.3h0m.1-.1h0m.2 4.2h0m0 0h0m0 .1h0m.2 .1h0m.9-3.7h0m.2 3.7h0m.1-.2h0m.1 0h0m.1-.1h0m.3-.3h0m.5-3.6h0m.7 0h0m.1 .1h0m.3 .3h0m0 0h0m.1 .1h0m.6 4.1h0m.2-3.5h0m.1 .1h0m.6 .2h0m.1 3.4h0m1-3.5h0m.1 0h0m.2 3.4h0m.3-3.6h0m.4 .4h0m.1-.1h0m.3-.1h0m.3 3.4h0m.3-3.4h0m1.1-.5h0m.4-.7h0m.1 0h0m.4 4.6h0m.6-4h0m.2 4.4h0m.2 0h0m1-4.2h0m.4 4.1h0m.3-4.1h0m.7-.6h0m.2 .1h0m.4 3.5h0m.5-4h0m.9 3.7h0m.1 0h0m.5-3.8h0m.1 .2h0m.1-.2h0m.3 .4h0m.4 4.2h0m.1-4.1h0m1 .6h0m.4 .3h0m.2 2.9h0m.1 0h0m.4 .3h0m.3 0h0m.1-3.3h0m.2 .1h0m.2 .1h0m.1-.3h0m.2 4h0m.6-3.8h0m1.1 3.7h0m.3-.6h0m.6-4.1h0m.1 4.1h0m.6-4.1h0m.2 0h0m.5 0h0m.3-.5h0m.1 3.8h0m.3-3.3h0m.3 0h0m0 3.5h0m.5-.2h0m.1 .2h0m1.3-3.7h0m1 3.5h0m.1-3.5h0m1.3 4.6h0m.4-.2h0m.9-4.5h0m.2 .1h0m.2 0h0m.6-.2h0m.1 .1h0m1.2 4.7h0m.6 .4h0m.1-5.3h0m2.3 .5h0m.4 4.8h0m.5-.4h0m1.3-4.9h0m.5 3.9h0m.1-.1h0m.1 .1h0m1.4-3.7h0m.8 4.9h0m.5-5h0m1.3 5.1h0m1.5-1.1h0m.7-4h0m.2 1.2h0m.1-.4h0m0 .5h0m0 1.5h0m.1-1.6h0m0 .3h0m0 0h0m0 1.4h0m.1 0h0m3 .1h0m.1-1.4h0m.2-.1h0m.1-.4h0m0-.4h0m.4 3.3h0m.1 .2h0m.3-.2h0m.5 0h0m.8-3.4h0m1.4-.4h0m.1 4h0m.1-3.8h0m.6 3.8h0m.7 .4h0m.7-3.6h0m1.5 3.5h0m0-3.4h0m1.3 0h0m.3 3.5h0m0-3.6h0m.4 .1h0m1.3 4.2h0m.7-.6h0m.8-4.5h0m1.5 4.3h0m.6-.3h0m.3-4.3h0m1.2 3.7h0m1.4 0h0m.7-3.6h0m.1-.1h0m.6 3.9h0m.1-2.7h0m.5 3.4h0m1.3-3.5h0m.8 3.9h0m.2-3.4h0m.8 .1h0m.5-.2h0m.6 0h0m.1 3.4h0m.4 .1h0m.1-4h0m.1 4h0m.5-4.3h0m0 0h0m.9 3.4h0m.5-3.7h0m.8 .2h0m.4 4.3h0m.1-.3h0m1.8-4.3h0m.4 4.9h0m1.4-.2h0m.2-.1h0m.4-3.4h0m.8-.5h0m.8 .1h0m0 .2h0m.1-.2h0m.2 3.1h0m.3-.3h0m.1 0h0m.4-2.8h0m.3-.2h0m1-.9h0m.1 4.5h0m1 .9h0m1-4.7h0m.6-.2h0m.5 4.4h0m.3-4.7h0m1.3 5h0m.2-.3h0m1.2-3h0m.1 2.5h0m.8-2.8h0m.4 2.6h0m0 0h0m.4 .1h0m.1-3.9h0m.5 0h0m.6-.1h0m.1-.2h0m.1 .5h0m.5 2.8h0m.2-2.8h0m1.1 4h0m0-.2h0m0 .4h0m.1-3.5h0m3 3.4h0m.1-.1h0m.1-2.6h0m.3 2.6h0m.3-2.7h0m.1 .1h0m.1 3.2h0m0-3.3h0m.3 3.3h0m.1-3.5h0m.1 3.4h0m.1 .2h0m.8-4.5h0m1.1 3.8h0m.9 .1h0m.2-4.2h0m.7-.5h0m1.5 4.6h0m.1-4.8h0m1.5 4.9h0m.4 .6h0m.4-.1h0m.3-.1h0m.7-5.2h0m0 5.3h0m.6 .1h0m.7-.4h0m0 .1h0m.2-4h0m.4 4h0m.6 .2h0m.4-3.8h0m.2 3.8h0m.3 0h0m.5-4.4h0m1.4 3.7h0m0-.1h0m1.1-4.5h0m.9 3.8h0m.1-3.3h0m.5 3.3h0m1.2 1.2h0m.1 .3h0m.2-.7h0m0-3.2h0m.6 0h0m.4 2.5h0m.5-3.5h0m.1 0h0m.6 3.5h0m.5-3.6h0m0 .1h0m1.7-.2h0m.4 3.8h0m.3 1h0m0-.2h0m.5 .1h0m.2-4h0m.9 .5h0m0 3.8h0m.1-3.6h0m.4 3.6h0m.5-.1h0m.7-.6h0m.5-3.3h0m1.2 3.8h0m.3-3.7h0m.8 .5h0m.1 3.5h0m.4 .2h0m.1-.2h0m.5 .1h0m.2 0h0m.1 0h0m.3-.4h0m.4-.2h0m.7-4.1h0m.7-.3h0m.2 4.4h0m.6-4.4h0m0 0h0m.3 .2h0m.5 4.3h0m.1 .1h0m.3 .4h0m.3-3.8h0m.1-.1h0m.1 3.7h0m.2 0h0m.2-.1h0m0-3.2h0m.1 3.5h0m.3-1h0m.3-.5h0m.1-.2h0m0-1.5h0m3.2 1.8h0m.1-1.6h0m0 1.7h0m.1-3.3h0m0 3.6h0m.1 .2h0m.5-.1h0m.2-.3h0m.4-3.5h0m.4-.3h0m0-.2h0m0 .2h0m.9 .2h0m.5 3.8h0m.6 .5h0m1.2-3.7h0m.4 3.3h0m.6-3.6h0m.4 3.3h0m.8-3.9h0m.4 3.7h0m.1-3.6h0m.4 .2h0m.6 0h0m.5 4.4h0m1.1 .2h0m.4-5h0m.4 .1h0m.2 0h0m.2 .3h0m.4 0h0m.2 4h0m.6-3.8h0m.9 3.8h0m1 .2h0m.6-4.5h0m.7-.1h0m.1 5h0m.8-4.4h0m.6 4.4h0m.3-4.2h0m.3 .2h0m.5 3.6h0m.8-4.1h0m.2 .2h0m1 .2h0m.1 4h0m1.1 .4h0m.2-.8h0m.1 0h0m.8-4h0m.1 3.1h0m.5-3.3h0m.1 .1h0m.7-.4h0m.1-.1h0m.2 .1h0m.6 .2h0m.4 4.1h0m0-3.7h0m.9 .6h0m.2 3.3h0m.4 .2h0m.1-3.5h0m.5-.1h0m.4 .4h0m1 3.3h0m.3-3h0m.1 .2h0m.6 3.1h0m0-2.8h0m.1 0h0m.2-.1h0m.4 .3h0m.7-.3h0m.3 2.9h0m2-.7h0m0-3.1h0m0-.1h0m1.3 3.3h0m.3-.2h0m.7-3.2h0m.1 .1h0m.5 3.2h0m.2 0h0m.4-2.7h0m.3 2.9h0m.9-3h0m0 0h0m.1-.3h0m0 0h0m.2 2.7h0m.6 .1h0m.2-2.9h0m.6 3h0m.5-.6h0m0-2.8h0m.2 2.8h0m.5 .1h0m.2-.2h0m.1 .1h0m.6 .3h0m.3 .1h0m0-2.9h0m.2 0h0m.4 4h0m1.4-4.2h0m.4 3.9h0m.3-.2h0m.1 0h0m1.4-.8h0m.5-3.2h0m.3-.2h0m.3 2.9h0m0 0h0m0 0h0m.8-3.1h0m0-.1h0m.2 3.3h0m.2-.1h0m.5 .6h0m.2-3.2h0m.4-.1h0m0-.1h0m1.6-.4h0m.1 4.4h0m1.2 0h0m.8-3.8h0m.9-.1h0m.3 3.7h0m.4-4.1h0m.4-.1h0m.7 4.9h0m1.5-.2h0m.1 .2h0m0-4.1h0m.4 .5h0m.3-.1h0m.8 2.6h0m.4 0h0m0 0h0m.6-2.6h0m0-.1h0m.5 .2h0m.5 2.5h0m1.8-3.3h0m0 0h0m.1 0h0m.5 4.3h0m1.2-5h0m1.3 .5h0m.2 4.3h0m1.7-3.7h0m.1-.2h0m.4 .1h0m0 0h0m0-.1h0m.4 3.3h0m.1 .3h0m.2-.1h0m.2-3.7h0m.1 0h0m.5-.5h0m.5-.2h0m.5 3.4h0m.3-3.2h0m.3 .1h0m.5 .5h0m.4 4.1h0m.1-.5h0m.6-3.5h0m.6 .2h0m.7-.1h0m.5 2.7h0m.8-2.9h0m0 3.7h0m.3-3.7h0m.3-.3h0m.5-.3h0m.5 4.2h0m1.3 .5h0m.1-.6h0m.2-.2h0m.4-4.1h0m1.3 .5h0m0 0h0m.6 3.3h0m.2-.1h0m.1 0h0m.2 .3h0m.7-3.1h0m1.1-.9h0m.1 .1h0m.4 .2h0m.7 4h0m.9-3.3h0m.9 3.3h0m.1-.1h0m0 0h0m.1 0h0m.2-3.2h0m.2 2.6h0m.1-2.6h0m.5-.3h0m.5 3h0m.2 0h0m.1 0h0m0 .1h0m.1-.2h0m.2-2.7h0m.3 .4h0m.2 2.3h0m.1 .1h0m.4 .2h0m.1-2.8h0m.3 .1h0m.5-.3h0m.4 2.6h0m.1 0h0m0-.2h0m.5-2.3h0m.1 .1h0m.3 2.7h0m.3-2.4h0m.4 3.2h0m.4-3.1h0m.7-.4h0m1.3 4h0m.7-3.9h0m.6 3.6h0m.8-5h0m.2 4.2h0m0 .2h0m.1-.1h0m.9-1.3h0m.7-3h0m.4 3.3h0m.3-3h0m.5 3.1h0m.6-3h0m.1 .2h0m.4 3.7h0m.5 .2h0m.9-.1h0m.5-3.6h0m.3 0h0m.7-.2h0m.3 3.3h0m.2-.1h0m.2-2.9h0m0 .1h0m.3-.2h0m.1 .1h0m.1-.1h0m.6 .3h0m.5 3.5h0m1.4-3.5h0m.8-.8h0m.2 3.8h0m.2 .2h0m.1 .1h0m0-.1h0m1 .1h0m.1-3.6h0m.8 .8h0m.1 3.8h0m1.6 .2h0m.4-.1h0m.1-.1h0m.3-.2h0m.6-3.5h0m.3 2.9h0m.6-.3h0m0-4.1h0m.7 .6h0m.7 .2h0m.1 3.2h0m.3-3.4h0m.9 3.7h0m.6 .3h0m.1 .4h0m.4-.6h0m.1-.1h0m0-3h0m.7 0h0m.1-.4h0m0 0h0m.8 0h0m.1 3.4h0m.8-.5h0m.6-2.5h0m.3 2.4h0m.6-2.9h0m1 3.8h0m1.3 0h0m0-2.8h0m.4 3.4h0m.1 0h0m.1-.1h0m1.2-4.4h0m.3 .2h0m.1 4.5h0m1-.7h0m.5-.1h0m1.1-3.8h0m.1 3.2h0m1.1-3.2h0m.5 3.3h0m.1-.1h0m.5-.2h0m0 .1h0m.4-2.9h0m.5 .1h0m.3 .4h0m0-.1h0m0 .1h0m.4 1.8h0m0 1.2h0m.1-2.7h0m.1 .1h0m.1 1.3h0m3.3-1.2h0m.1 1h0m0 .2h0m.1-1.7h0m.2 2.8h0m0-.5h0m.2-2.2h0m.5 2.8h0m.4-3.5h0m.1 .1h0m.4 .1h0m.6 .2h0m.4 4h0m.6-4.4h0m.7 3.8h0m1.2-3.1h0m.4 3.1h0m.2-.1h0m.6-3.2h0m.3 .1h0m0-.1h0m0 .1h0m.3 2.2h0m.4-3h0m.8-.6h0m.2 .6h0m0 0h0m.1 3.1h0m.2 .1h0m0-2.9h0m1.2 .5h0m.1 3.4h0m.2-3.2h0m1.9 .4h0m0 .2h0m.5 2.2h0m.3 .1h0m.7 1h0m.7-.5h0m.1-2.3h0m1.2 .5h0m.3 2.2h0m.1 0h0m.1-1.8h0m.8 .1h0m.1 1.8h0m.2 0h0m.2-1.7h0m.4 2.1h0m.4-2.1h0m.1 2.3h0m.1-.1h0m.4-1.3h0m.1 .2h0m0-.3h0m.1-.4h0m.1 1.5h0m0-.4h0m0-.1h0m.1 .2h0m2.7-5.6h0m.1-1.4h0m0 2h0m0 .7h0m0-2.9h0m0 2h0m0-2.6h0m.2 3.5h0m.5 .5h0m.6-4.3h0m.2 4.3h0m.3-4h0m.4 4.5h0m.7-3.7h0m.1 3.3h0m.2-3.2h0m1-.1h0m.5 0h0m.4 3.5h0m.1 0h0m.1-.6h0m.3-3.8h0m.2 0h0m.1 .2h0m.4-.6h0m1.3 3.1h0m.1-3.3h0m.4-.1h0m.2 3.9h0m.7 .3h0m1.1-4.8h0m.7 .5h0m.4 5h0m.4-.3h0m1.9-4h0m.5 4.7h0m1-1.8h0m.4-3.8h0m.9 .1h0m.2-.1h0m.1 4.1h0m.4-3h0m.2-.1h0m.5 .4h0m.1-.2h0m.1 .1h0m.1 0h0m.8 3.5h0m.6-3.4h0m.1-.2h0m.3-.4h0m0 3h0m.7-3.5h0m.7 .1h0m.1 3.2h0m1.7 .8h0m.1-.1h0m.5-3.8h0m1.3 4.6h0m.5-3.5h0m.3-.1h0m1.2 4.2h0m.6-3.2h0m.4 2.8h0m.4 .1h0m.3-3.7h0m1-1.2h0m.5-.1h0m.7 5.1h0m.2 .1h0m1.7-.1h0m.2-5h0m1 5h0m.8-4.7h0m1.5 4.2h0m.3-.2h0m.3-4h0m.5 4.1h0m.3 0h0m1.1-4.8h0m.9 4.3h0m1.1 .7h0m.1-4.7h0m.3-.2h0m.2 4.5h0m.7-4.7h0m0 4.2h0m1.1 0h0m.5-3.3h0m.1-.9h0m0 .5h0m0 0h0m.1 .9h0m.5 .4h0m.2 2.2h0m.6 .4h0m.2 0h0m.3 0h0m.1 0h0m1.3-2.6h0m.1-.1h0m.5 2.5h0m.5-.1h0m.5-3.4h0m1.1 2.8h0m.2-.1h0m.5-2.6h0m.3 2.5h0m.3-2.6h0m1.1 .2h0m.1 0h0m0-.1h0m.1 .1h0m.8 3.2h0m0 0h0m.3-4h0m.3 .5h0m1 1.2h0m.1 2.7h0m.3 .2h0m.3-.4h0m1.3-2.4h0m.1 2.6h0m.4-3.1h0m.1-2.2h0m.2 1.3h0m0 1h0m.4 2.9h0m.1 0h0m.5 0h0m.2-.1h0m.6 .2h0m.1 .2h0m.5 .4h0m.3-2.7h0m.1-.2h0m.1 2.7h0m.3-2.9h0m1-1.2h0m0 .3h0m.7-1.1h0m.3 4.3h0m0 0h0m.7 .4h0m1-3.8h0m.1-.1h0m.3 4h0m.8-3.7h0m.7 .1h0m.8 2.9h0m.1-3h0m.4 3h0m.1 .1h0m.8 .3h0m.3-4h0m.7-.4h0m0 0h0m.1 0h0m.4 .5h0m.6 4.2h0m.7-3.9h0m.8 3.9h0m.1 .1h0m.2 .2h0m1.1-5h0m.2 .1h0m.6 4.1h0m.8-4.4h0m1-.1h0m.1 .1h0m.7 4.4h0m.1-4.6h0m.5-.1h0m0 5.7h0m.7 .8h0m.2-.3h0m.2-.9h0m.6-.6h0m.2-4.1h0m1-.6h0m.1 0h0m.5 0h0m.5 .6h0m.5 4.8h0m.7 .3h0m.8-4.5h0m.3-.1h0m.7 4.5h0m.1-4.3h0m.3-.2h0m.3 4.5h0m.9-5h0m.7 3.9h0m1-4.5h0m.5 4.3h0m.8 .3h0m.3 .2h0m.1 .1h0m.3-3.8h0m.4 4.2h0m.1 .2h0m2.1-.6h0m.1-3.4h0m.4 3.5h0m.7-2.9h0m.3-.1h0m1.5 3.1h0m.3 .2h0m.7-3.5h0m0 0h0m1.3 3.4h0m.4-3.6h0m1.4-.8h0m.2 4.4h0m.4-4.2h0m.1 4.2h0m.3 .3h0m.1 .2h0m1.1-3.9h0m.3-.1h0m.6 .6h0m.3 3.4h0m.1 .2h0m.2-.1h0m.1-.1h0m.1 0h0m.3-.3h0m.1 0h0m.1 0h0m.7-3.4h0m.6 3.2h0m.4-3.9h0m.7 3.1h0m.3-3.3h0m.6-.3h0m.3 3.7h0m1.3-.3h0m0 0h0m0-1.8h0m.1 1.9h0m.5-2.1h0m.3 2.6h0m.5 .1h0m.2 .2h0m.4-3.5h0m.6-.6h0m.6 0h0m1 3.6h0m.1-2.8h0m0 2.7h0m1.5 0h0m.1 0h0m.1 .3h0m.5-2.6h0m.3-.2h0m.9 2.7h0m.1-3.5h0m1.2 3.5h0m0 0h0m.7 .5h0m.8-4.5h0m.7-.3h0m.2 0h0m0-.2h0m1.1 .6h0m.2 4h0m.6 .2h0m.4-4h0m.1-.1h0m.7 4.7h0m.6-.7h0m.5-4h0m1.9 5.4h0m0-4.4h0m.1 1.4h0m0-.9h0m0 1.7h0" stroke="#000" stroke-width="3.4" stroke-linecap="round" fill="none"/></g>
<path d="M105.5 65H1361" stroke="#008000" stroke-width="2.08"/>
<path d="M162 321.14V35.5M1166 321.14V35.5M1173 321.14V35.5M1233 321.14V35.5M1250 321.14V35.5M1268 321.14V35.5M1285 321.14V35.5M1303 321.14V35.5" stroke="#800080" stroke-width="2.08" stroke-dasharray="2.08 3.446" fill="none"/>
<rect x="105.5" y="35.5" width="1380.0" height="286.0" fill="none" stroke="#000" stroke-width="1.11"/>
<path d="M105.5 44.5h-4.86M105.5 90.5h-4.86M105.5 135.5h-4.86M105.5 180.5h-4.86M105.5 225.5h-4.86M105.5 270.5h-4.86M105.5 315.5h-4.86" stroke="#000" stroke-width="1.11"/>
<text x="73.18" y="48.80" font-size="14.72" textLength="21.69" lengthAdjust="spacingAndGlyphs" fill="#000">6.6</text>
<text x="73.18" y="94.80" font-size="14.72" textLength="21.55" lengthAdjust="spacingAndGlyphs" fill="#000">6.4</text>
<text x="73.48" y="139.80" font-size="14.72" textLength="21.29" lengthAdjust="spacingAndGlyphs" fill="#000">6.2</text>
<text x="73.22" y="184.80" font-size="14.72" textLength="21.57" lengthAdjust="spacingAndGlyphs" fill="#000">6.0</text>
<text x="72.62" y="229.80" font-size="14.72" textLength="21.34" lengthAdjust="spacingAndGlyphs" fill="#000">5.8</text>
<text x="72.54" y="274.80" font-size="14.72" textLength="21.41" lengthAdjust="spacingAndGlyphs" fill="#000">5.6</text>
<text x="72.34" y="319.80" font-size="14.72" textLength="21.28" lengthAdjust="spacingAndGlyphs" fill="#000">5.4</text>
<path d="M162.5 321.5v4.86M431.5 321.5v4.86M700.5 321.5v4.86M969.5 321.5v4.86M1238.5 321.5v4.86" stroke="#000" stroke-width="1.11"/>
<text x="159.31" y="342.00" font-size="14.72" textLength="8.27" lengthAdjust="spacingAndGlyphs" fill="#000">0</text>
<text x="413.29" y="342.00" font-size="14.72" textLength="34.07" lengthAdjust="spacingAndGlyphs" fill="#000">5000</text>
<text x="677.93" y="342.00" font-size="14.72" textLength="43.26" lengthAdjust="spacingAndGlyphs" fill="#000">10000</text>
<text x="947.04" y="342.00" font-size="14.72" textLength="43.16" lengthAdjust="spacingAndGlyphs" fill="#000">15000</text>
<text x="1214.96" y="342.00" font-size="14.72" textLength="44.15" lengthAdjust="spacingAndGlyphs" fill="#000">20000</text>
<text x="642.20" y="312.20" font-size="14.72" textLength="43.42" lengthAdjust="spacingAndGlyphs" fill="#000">10537</text>
<text x="1148.12" y="292.20" font-size="14.72" textLength="43.36" lengthAdjust="spacingAndGlyphs" fill="#000">47361</text>
<text x="1181.12" y="272.20" font-size="14.72" textLength="43.63" lengthAdjust="spacingAndGlyphs" fill="#000">24684</text>
<text x="1220.12" y="312.20" font-size="14.72" textLength="43.36" lengthAdjust="spacingAndGlyphs" fill="#000">43871</text>
<text x="1237.48" y="292.20" font-size="14.72" textLength="43.61" lengthAdjust="spacingAndGlyphs" fill="#000">43869</text>
<text x="1255.17" y="272.20" font-size="14.72" textLength="43.30" lengthAdjust="spacingAndGlyphs" fill="#000">43862</text>
<text x="1272.45" y="312.20" font-size="14.72" textLength="43.56" lengthAdjust="spacingAndGlyphs" fill="#000">43860</text>
<rect x="1361.3" y="42.6" width="117.40000000000009" height="26.9" rx="2.8" fill="#fff" fill-opacity="0.8" stroke="#ccc" stroke-width="1.11"/>
<path d="M1367 54h27.8" stroke="#008000" stroke-width="2.08" stroke-linecap="square"/>
<text x="1406.81" y="59.00" font-size="14.72" textLength="31.51" lengthAdjust="spacingAndGlyphs" fill="#000">mag</text>
<text x="1437.78" y="60.90" font-size="10.30" textLength="33.66" lengthAdjust="spacingAndGlyphs" font-style="italic" fill="#000">AGASC</text>
<rect x="1348.5" y="247.7" width="130.20000000000005" height="66.40000000000003" rx="2.8" fill="#fff" fill-opacity="0.8" stroke="#ccc" stroke-width="1.11"/>
<circle cx="1367.4" cy="260.3" r="2.1" fill="#f00"/><circle cx="1367.4" cy="281.3" r="2.1" fill="#ffa500"/><circle cx="1367.4" cy="302.4" r="2.1" fill="#000"/>
<text x="1392.47" y="264.20" font-size="14.72" textLength="47.44" lengthAdjust="spacingAndGlyphs" fill="#000">not OK</text>
<text x="1392.68" y="285.00" font-size="14.72" textLength="79.80" lengthAdjust="spacingAndGlyphs" fill="#000">Highlighted</text>
<text x="1392.87" y="306.00" font-size="14.72" textLength="19.20" lengthAdjust="spacingAndGlyphs" fill="#000">OK</text>
<text x="706.92" y="372.17" font-size="17.66" textLength="175.68" lengthAdjust="spacingAndGlyphs" fill="#000">Magnitude Estimates</text>
<clipPath id="c2"><rect x="105.5" y="380.5" width="1380.0" height="286.0"/></clipPath>
<g clip-path="url(#c2)"><path d="M170.4 573.5h0m4.3-87.8h0m.6-3h0m1.4-2.7h0m11.8 92.4h0m6.8-89.1h0m0 8h0m7.4-3.6h0m0 4h0m34.6-1.4h0m0 93h0m5.4-13.9h0m8-.9h0m6-78.2h0m10.6-1.6h0m16.7-1h0m0 2h0m8.5 80.6h0m5.9 0h0m14.9-.9h0m29.7-83.4h0m18 3.3h0m1.7 3h0m5.8 77.1h0m4.8 2.1h0m45.9 34.8h0m10.4-32.8h0m0 5h0m5.9-9.5h0m13.8 1h0m5.7-79.7h0m10 0h0m14 2h0m6.9 80.1h0m1.6 38h0m4.5-121.4h0m12.7 79.3h0m0 5.7h0m3.3-85.7h0m6 85.7h0m6-86.3h0m10.7 83.4h0m5.3-84.1h0m10 .7h0m1-5.7h0m5 156h0m1-149h0m7.5 89.3h0m17 17h0m.8-25.2h0m22.7-77.8h0m33 86.7h0m4.3-92h0m35-2.9h0m23 6.3h0m12.7 80.4h0m0 3.6h0m11-85.1h0m4.7-5.2h0m14 7.2h0m5.3 82.2h0m0 3h0m8-97.2h0m13.5 94.4h0m2.5-82.9h0m12-4.5h0m15.5 87h0m9-83.7h0m7-5.1h0m8 84.8h0m3.5 0h0m15 3h0m37-2.3h0m18-.5h0m17-80.5h0m7-1h0m31 80.5h0m16-85.5h0m0 5h0m26 3h0m16 77h0m17.5 1.5h0m24.5-92.5h0m1 5h0m13.7 91.3h0m4.3-84.3h0m12 82h0m1 4h0m5-84h0m8-4h0m8 4h0m22-9h0m12 88h0m12-82h0m2-2h0m8 4h0m21.4-96h0m0 5.3h0m63.9 158.6h0m12-.9h0m0 86.6h0m2.8-99.5h0m14.9 18h0m13.1-5.1h0" stroke="#ffa500" stroke-width="3.4" stroke-linecap="round" fill="none"/><path d="M163 514h14v1h-14zM163 515h7v1h-7zM163 516h5v1h-5zM163 519h6v1h-6zM163 520h21v1h-21zM163 529h20v1h-20zM163 530h21v1h-21zM163 531h66v1h-66zM163 532h21v1h-21zM163 536h21v2h-21zM163 539h11v2h-11zM163 541h10v1h-10zM163 542h11v2h-11zM163 546h11v4h-11zM163 552h10v2h-10zM164 513h4v1h-4zM164 521h20v4h-20zM164 525h18v1h-18zM164 526h13v1h-13zM164 527h20v2h-20zM164 533h20v2h-20zM164 535h19v1h-19zM164 538h20v1h-20zM164 544h10v1h-10zM164 545h9v1h-9zM164 550h1v1h-1zM164 554h2v1h-2zM164 559h1v1h-1zM164 560h2v2h-2zM165 504h3v1h-3zM165 505h2v1h-2zM165 507h2v1h-2zM165 508h3v3h-3zM165 511h2v2h-2zM165 517h4v2h-4zM166 497h2v1h-2zM166 498h3v1h-3zM166 506h1v1h-1zM166 550h7v2h-7zM167 554h6v1h-6zM167 558h8v1h-8zM168 557h7v1h-7zM168 559h5v1h-5zM168 560h2v1h-2zM168 568h2v2h-2zM169 505h3v1h-3zM169 513h1v1h-1zM170 504h1v1h-1zM170 506h1v1h-1zM170 556h3v1h-3zM171 511h5v1h-5zM171 515h12v3h-12zM171 518h13v1h-13zM171 555h2v1h-2zM172 510h11v1h-11zM172 512h3v1h-3zM172 513h4v1h-4zM172 519h12v1h-12zM172 565h3v1h-3zM173 494h2v2h-2zM173 498h3v1h-3zM173 503h3v2h-3zM173 506h3v2h-3zM173 508h4v2h-4zM173 564h1v1h-1zM173 566h1v1h-1zM174 496h1v1h-1zM174 497h2v1h-2zM174 502h1v1h-1zM174 505h2v1h-2zM175 540h9v2h-9zM175 543h9v1h-9zM175 544h5v1h-5zM175 546h9v1h-9zM175 547h5v1h-5zM175 548h4v1h-4zM175 549h3v2h-3zM176 539h8v1h-8zM176 542h8v1h-8zM176 545h8v1h-8zM176 551h5v1h-5zM176 552h4v3h-4zM176 555h2v1h-2zM177 558h4v1h-4zM177 559h5v1h-5zM177 560h7v1h-7zM177 561h2v1h-2zM178 511h6v4h-6zM178 526h5v1h-5zM178 557h1v1h-1zM179 550h2v1h-2zM180 499h3v1h-3zM180 504h3v1h-3zM180 507h3v3h-3zM181 498h1v1h-1zM181 500h1v2h-1zM181 502h2v2h-2zM181 505h2v2h-2zM181 547h3v1h-3zM181 553h2v2h-2zM181 568h3v1h-3zM181 569h2v1h-2zM182 544h2v1h-2zM182 555h1v1h-1zM182 561h2v1h-2zM182 566h1v1h-1zM182 567h2v1h-2zM185 508h3v1h-3zM185 520h45v2h-45zM185 524h44v3h-44zM185 527h6v1h-6zM185 528h43v2h-43zM185 530h44v1h-44zM185 533h43v2h-43zM185 535h44v2h-44zM185 539h11v1h-11zM185 541h4v2h-4zM185 544h4v2h-4zM185 550h3v1h-3zM185 557h3v1h-3zM185 560h3v1h-3zM186 507h1v1h-1zM186 509h6v1h-6zM186 510h7v2h-7zM186 512h25v1h-25zM186 514h38v2h-38zM186 523h43v1h-43zM186 532h42v1h-42zM186 537h43v1h-43zM186 538h9v1h-9zM186 540h43v1h-43zM186 543h3v1h-3zM186 546h3v4h-3zM186 551h1v1h-1zM186 553h2v4h-2zM186 558h1v1h-1zM186 559h2v1h-2zM186 561h2v2h-2zM187 513h24v1h-24zM187 516h37v2h-37zM187 522h43v1h-43zM188 495h3v2h-3zM188 502h5v1h-5zM188 503h11v1h-11zM188 505h4v1h-4zM188 506h12v1h-12zM188 518h35v1h-35zM189 494h2v1h-2zM189 501h3v1h-3zM189 504h11v1h-11zM189 507h4v1h-4zM189 508h3v1h-3zM189 519h4v1h-4zM190 491h2v3h-2zM190 497h2v4h-2zM191 541h38v1h-38zM191 542h36v2h-36zM191 544h37v1h-37zM191 545h16v1h-16zM191 547h10v1h-10zM191 548h25v1h-25zM192 527h36v1h-36zM192 546h9v1h-9zM192 550h3v2h-3zM193 549h1v1h-1zM193 552h5v3h-5zM193 565h2v2h-2zM194 498h3v1h-3zM194 499h2v1h-2zM194 505h5v1h-5zM194 507h5v1h-5zM194 508h7v1h-7zM194 509h8v1h-8zM194 510h7v2h-7zM194 519h29v1h-29zM194 567h1v1h-1zM195 497h1v1h-1zM195 502h2v1h-2zM196 549h31v1h-31zM196 550h2v1h-2zM197 492h2v1h-2zM197 493h5v1h-5zM197 500h3v1h-3zM197 501h2v1h-2zM197 538h32v1h-32zM197 539h31v1h-31zM198 502h1v1h-1zM199 496h3v1h-3zM199 550h28v1h-28zM199 555h7v2h-7zM200 494h2v2h-2zM200 551h12v1h-12zM200 553h8v1h-8zM200 554h4v1h-4zM201 500h3v1h-3zM201 504h1v1h-1zM201 505h3v1h-3zM201 506h4v1h-4zM201 552h6v1h-6zM201 557h4v1h-4zM201 561h3v1h-3zM202 499h3v1h-3zM202 501h1v1h-1zM202 510h11v1h-11zM202 511h9v1h-9zM202 546h2v1h-2zM202 547h4v1h-4zM202 558h2v1h-2zM202 559h1v1h-1zM202 560h2v1h-2zM203 497h1v1h-1zM203 498h2v1h-2zM203 507h1v1h-1zM203 509h1v1h-1zM205 554h17v1h-17zM206 494h3v1h-3zM206 502h3v1h-3zM206 504h3v1h-3zM206 506h5v1h-5zM206 507h6v1h-6zM207 490h2v2h-2zM207 495h2v1h-2zM207 498h3v1h-3zM207 501h2v1h-2zM207 503h2v1h-2zM207 505h3v1h-3zM207 508h6v2h-6zM207 547h9v1h-9zM208 497h1v1h-1zM208 499h1v1h-1zM208 545h18v2h-18zM208 555h2v1h-2zM209 552h18v1h-18zM209 559h11v1h-11zM210 501h3v1h-3zM210 553h13v1h-13zM210 558h10v1h-10zM210 560h10v1h-10zM211 500h2v1h-2zM211 502h2v3h-2zM211 555h6v1h-6zM211 556h11v1h-11zM212 511h11v1h-11zM212 512h2v2h-2zM212 557h1v1h-1zM212 561h2v1h-2zM213 551h14v1h-14zM214 490h2v2h-2zM214 509h5v1h-5zM214 510h9v1h-9zM214 557h2v1h-2zM215 508h7v1h-7zM215 512h8v1h-8zM215 513h14v1h-14zM216 497h3v1h-3zM216 498h4v1h-4zM216 506h7v1h-7zM216 507h6v1h-6zM216 561h4v2h-4zM216 563h6v1h-6zM217 496h1v1h-1zM217 499h2v1h-2zM217 505h6v1h-6zM217 557h3v1h-3zM217 566h3v1h-3zM218 547h9v1h-9zM218 548h4v1h-4zM218 565h4v1h-4zM218 567h1v1h-1zM219 504h1v1h-1zM219 555h3v1h-3zM219 564h3v1h-3zM220 509h3v1h-3zM222 560h2v2h-2zM223 494h6v1h-6zM223 548h3v1h-3zM223 559h1v1h-1zM224 493h5v1h-5zM224 507h4v1h-4zM224 508h5v2h-5zM224 512h5v1h-5zM225 490h2v1h-2zM225 491h4v1h-4zM225 495h4v1h-4zM225 503h4v4h-4zM225 514h3v1h-3zM225 515h4v1h-4zM225 516h18v1h-18zM225 519h4v1h-4zM225 555h2v2h-2zM226 502h3v1h-3zM226 510h2v1h-2zM226 511h3v1h-3zM226 517h3v2h-3zM227 492h2v1h-2zM227 496h2v1h-2zM227 498h2v4h-2zM230 511h21v1h-21zM230 512h10v2h-10zM230 514h23v1h-23zM230 515h9v1h-9zM230 523h14v1h-14zM230 526h22v1h-22zM230 527h43v1h-43zM230 530h23v1h-23zM230 531h44v1h-44zM230 537h22v2h-22zM231 491h3v1h-3zM231 494h3v1h-3zM231 495h2v1h-2zM231 501h2v2h-2zM231 505h3v2h-3zM231 507h5v2h-5zM231 509h3v2h-3zM231 517h22v1h-22zM231 518h9v4h-9zM231 522h21v1h-21zM231 524h13v1h-13zM231 525h22v1h-22zM231 528h42v1h-42zM231 529h43v1h-43zM231 536h21v1h-21zM232 490h1v1h-1zM232 492h1v2h-1zM232 503h3v1h-3zM232 504h5v1h-5zM232 532h41v1h-41zM232 533h21v1h-21zM232 534h20v2h-20zM232 539h20v3h-20zM232 543h20v1h-20zM232 544h15v1h-15zM233 542h19v1h-19zM233 545h14v1h-14zM233 546h19v1h-19zM233 549h13v1h-13zM234 547h17v2h-17zM234 550h9v2h-9zM234 552h12v1h-12zM234 556h8v1h-8zM234 557h2v1h-2zM234 562h2v3h-2zM234 565h4v1h-4zM235 505h3v2h-3zM235 510h17v1h-17zM236 553h6v2h-6zM236 555h5v1h-5zM236 559h3v1h-3zM236 566h2v1h-2zM237 494h3v1h-3zM237 507h2v1h-2zM237 508h3v2h-3zM237 558h6v1h-6zM237 560h2v1h-2zM238 495h2v1h-2zM238 557h4v1h-4zM240 559h2v1h-2zM240 560h3v1h-3zM240 561h2v1h-2zM241 501h2v2h-2zM241 512h9v2h-9zM241 515h2v1h-2zM241 518h12v3h-12zM241 521h11v1h-11zM242 491h2v2h-2zM244 497h3v1h-3zM244 509h8v1h-8zM244 551h1v1h-1zM244 553h1v1h-1zM244 556h4v1h-4zM244 557h5v1h-5zM244 558h4v1h-4zM245 496h3v1h-3zM245 498h3v2h-3zM245 500h6v1h-6zM245 501h5v1h-5zM245 502h3v3h-3zM245 505h6v1h-6zM245 506h4v1h-4zM245 507h6v2h-6zM245 515h8v2h-8zM245 523h8v2h-8zM245 555h1v1h-1zM245 559h1v1h-1zM246 495h2v1h-2zM246 551h5v1h-5zM247 550h5v1h-5zM247 552h1v1h-1zM247 563h2v2h-2zM248 545h4v1h-4zM249 502h2v2h-2zM249 504h3v1h-3zM249 549h2v1h-2zM249 552h3v1h-3zM249 554h3v1h-3zM250 544h3v1h-3zM250 553h1v1h-1zM250 555h2v1h-2zM253 526h20v1h-20zM253 535h20v1h-20zM253 536h21v1h-21zM253 537h20v1h-20zM253 538h19v1h-19zM254 499h2v1h-2zM254 500h3v2h-3zM254 506h5v1h-5zM254 507h6v1h-6zM254 508h7v1h-7zM254 509h3v1h-3zM254 515h7v1h-7zM254 516h20v1h-20zM254 520h8v1h-8zM254 521h20v3h-20zM254 524h8v1h-8zM254 525h19v1h-19zM254 530h20v1h-20zM254 533h19v1h-19zM254 534h18v1h-18zM254 539h18v1h-18zM254 542h18v1h-18zM254 549h1v1h-1zM254 550h2v2h-2zM255 502h2v1h-2zM255 510h7v1h-7zM255 511h6v2h-6zM255 513h7v2h-7zM255 517h19v2h-19zM255 519h7v1h-7zM255 540h18v1h-18zM255 541h19v1h-19zM255 543h17v1h-17zM255 545h14v1h-14zM256 505h3v1h-3zM256 546h17v1h-17zM256 547h16v1h-16zM256 548h14v1h-14zM257 504h1v1h-1zM257 544h16v1h-16zM257 550h12v1h-12zM257 551h11v2h-11zM257 563h3v1h-3zM258 549h11v1h-11zM258 553h2v1h-2zM258 554h11v1h-11zM258 562h1v1h-1zM258 564h1v1h-1zM259 490h3v1h-3zM259 509h2v1h-2zM260 489h1v1h-1zM260 491h1v1h-1zM260 558h5v2h-5zM261 553h6v1h-6zM261 555h8v1h-8zM261 556h7v2h-7zM262 560h3v1h-3zM262 561h2v1h-2zM263 505h2v2h-2zM263 514h11v1h-11zM263 515h4v1h-4zM263 519h11v2h-11zM263 524h11v1h-11zM264 500h3v1h-3zM264 504h1v1h-1zM264 509h6v1h-6zM264 513h9v1h-9zM265 501h2v1h-2zM265 508h5v1h-5zM265 512h4v1h-4zM267 506h7v1h-7zM267 510h3v1h-3zM267 511h2v1h-2zM267 566h2v2h-2zM267 568h1v1h-1zM268 505h5v1h-5zM268 507h6v1h-6zM268 515h6v1h-6zM269 497h5v1h-5zM269 498h2v1h-2zM270 496h1v1h-1zM270 545h2v1h-2zM271 502h3v1h-3zM271 508h3v1h-3zM271 509h2v4h-2zM272 496h2v1h-2zM272 503h2v1h-2zM275 503h5v2h-5zM275 513h19v1h-19zM275 516h37v1h-37zM275 517h67v1h-67zM275 519h57v1h-57zM275 520h56v1h-56zM275 521h93v2h-93zM275 525h93v1h-93zM275 526h95v1h-95zM275 527h367v1h-367zM275 528h13v1h-13zM275 529h12v1h-12zM275 530h70v2h-70zM275 532h198v1h-198zM275 533h165v1h-165zM275 534h4v1h-4zM275 535h3v1h-3zM275 536h2v1h-2zM276 499h6v1h-6zM276 500h4v1h-4zM276 501h5v1h-5zM276 502h6v1h-6zM276 505h4v1h-4zM276 507h5v1h-5zM276 508h11v1h-11zM276 509h6v1h-6zM276 510h10v2h-10zM276 512h17v1h-17zM276 514h18v2h-18zM276 518h65v1h-65zM276 523h92v1h-92zM276 524h93v1h-93zM276 537h1v1h-1zM276 541h15v1h-15zM276 542h14v1h-14zM277 494h2v2h-2zM277 496h4v2h-4zM277 498h5v1h-5zM277 506h4v1h-4zM277 540h7v1h-7zM277 543h7v1h-7zM277 546h7v1h-7zM278 539h27v1h-27zM278 544h13v1h-13zM278 545h5v1h-5zM278 547h13v1h-13zM278 550h5v2h-5zM278 557h5v1h-5zM279 536h66v1h-66zM279 537h39v1h-39zM279 538h40v1h-40zM279 548h11v2h-11zM279 552h4v1h-4zM279 553h5v1h-5zM279 554h4v3h-4zM279 558h4v1h-4zM280 535h44v1h-44zM281 534h361v1h-361zM281 559h2v1h-2zM281 560h1v1h-1zM282 500h3v1h-3zM282 507h5v1h-5zM283 488h3v1h-3zM283 501h2v1h-2zM283 503h3v3h-3zM283 509h4v1h-4zM284 487h1v1h-1zM284 489h1v1h-1zM284 497h3v1h-3zM284 502h1v1h-1zM284 506h3v1h-3zM284 550h5v2h-5zM285 496h1v1h-1zM285 498h1v1h-1zM285 540h20v1h-20zM285 543h6v1h-6zM285 545h6v2h-6zM285 552h4v1h-4zM285 556h3v1h-3zM285 559h5v1h-5zM285 562h1v1h-1zM285 563h2v2h-2zM286 553h4v1h-4zM286 555h4v1h-4zM286 557h1v1h-1zM286 560h4v1h-4zM287 503h5v1h-5zM288 502h4v1h-4zM288 554h2v1h-2zM288 558h2v1h-2zM289 504h4v1h-4zM289 505h3v1h-3zM289 506h4v1h-4zM289 508h6v2h-6zM289 510h5v1h-5zM289 511h4v1h-4zM289 528h444v1h-444zM289 529h56v1h-56zM290 489h2v1h-2zM290 490h3v3h-3zM290 493h2v1h-2zM290 494h3v2h-3zM290 496h2v1h-2zM290 498h3v1h-3zM290 499h4v1h-4zM290 500h3v2h-3zM290 507h3v1h-3zM291 497h1v1h-1zM292 541h13v1h-13zM292 543h25v1h-25zM292 544h27v1h-27zM292 556h8v1h-8zM292 560h3v1h-3zM293 542h12v1h-12zM293 545h7v1h-7zM293 546h20v1h-20zM293 547h7v1h-7zM293 548h11v2h-11zM293 550h12v1h-12zM293 555h3v1h-3zM293 557h1v1h-1zM293 559h2v1h-2zM294 551h1v1h-1zM294 563h6v1h-6zM295 505h4v1h-4zM295 506h10v2h-10zM295 513h15v1h-15zM295 514h35v1h-35zM295 515h15v1h-15zM295 562h1v1h-1zM295 564h4v1h-4zM296 499h3v1h-3zM296 500h2v1h-2zM296 511h2v1h-2zM296 512h14v1h-14zM296 551h7v1h-7zM297 504h2v1h-2zM297 508h10v1h-10zM297 552h6v1h-6zM297 553h4v1h-4zM297 554h3v2h-3zM297 557h3v1h-3zM297 565h2v2h-2zM298 509h12v1h-12zM298 558h3v1h-3zM298 562h1v1h-1zM299 492h2v1h-2zM299 493h3v1h-3zM299 510h11v2h-11zM299 559h4v1h-4zM300 503h5v2h-5zM300 505h6v1h-6zM301 545h13v1h-13zM301 547h4v1h-4zM301 560h2v1h-2zM302 553h1v1h-1zM303 492h3v2h-3zM303 496h2v1h-2zM303 497h3v2h-3zM303 499h2v1h-2zM303 502h2v1h-2zM304 490h2v2h-2zM305 553h5v1h-5zM305 554h3v1h-3zM306 542h11v1h-11zM306 547h6v2h-6zM306 551h7v1h-7zM306 552h4v1h-4zM306 555h2v2h-2zM307 495h3v1h-3zM307 496h2v1h-2zM307 505h3v1h-3zM307 539h38v1h-38zM307 540h15v2h-15zM307 549h1v2h-1zM308 506h2v1h-2zM309 507h3v1h-3zM309 508h7v1h-7zM309 549h3v1h-3zM309 550h6v1h-6zM310 500h6v2h-6zM311 509h5v1h-5zM311 512h24v1h-24zM311 513h19v1h-19zM311 515h19v1h-19zM311 554h2v2h-2zM312 502h4v1h-4zM312 504h5v1h-5zM312 510h18v1h-18zM312 511h21v1h-21zM312 552h1v2h-1zM313 490h3v1h-3zM313 503h6v1h-6zM313 516h28v1h-28zM313 548h8v1h-8zM313 549h2v1h-2zM314 489h2v1h-2zM314 491h2v2h-2zM314 497h2v1h-2zM314 498h3v2h-3zM314 505h2v2h-2zM315 507h1v1h-1zM315 545h8v2h-8zM315 547h3v1h-3zM315 552h3v1h-3zM315 553h2v4h-2zM315 557h1v1h-1zM316 551h2v1h-2zM317 502h2v1h-2zM317 507h4v1h-4zM317 549h3v1h-3zM317 550h2v1h-2zM318 493h3v1h-3zM318 497h3v1h-3zM318 499h3v1h-3zM318 504h3v1h-3zM318 505h12v1h-12zM318 506h10v1h-10zM318 508h3v1h-3zM318 509h11v1h-11zM318 542h7v1h-7zM318 562h2v1h-2zM318 563h3v1h-3zM319 492h1v1h-1zM319 494h1v1h-1zM319 496h1v1h-1zM319 498h2v1h-2zM319 500h1v1h-1zM319 547h4v1h-4zM319 552h6v1h-6zM319 553h3v1h-3zM319 557h3v1h-3zM319 561h1v1h-1zM319 564h3v1h-3zM320 537h24v1h-24zM320 538h25v1h-25zM320 544h3v1h-3zM320 554h2v3h-2zM320 558h2v1h-2zM320 565h1v1h-1zM321 495h3v1h-3zM321 543h7v1h-7zM322 494h1v1h-1zM322 496h1v1h-1zM323 501h5v2h-5zM323 507h5v1h-5zM323 508h6v1h-6zM323 540h22v1h-22zM323 541h2v1h-2zM323 551h2v1h-2zM323 553h1v1h-1zM324 491h1v1h-1zM324 492h2v2h-2zM324 499h2v1h-2zM324 500h5v1h-5zM324 503h3v1h-3zM324 504h6v1h-6zM324 544h13v1h-13zM325 535h20v1h-20zM325 545h8v1h-8zM326 541h11v2h-11zM326 546h7v1h-7zM326 547h11v1h-11zM327 493h1v1h-1zM327 494h4v1h-4zM327 495h5v1h-5zM327 499h2v1h-2zM328 498h1v1h-1zM328 552h9v1h-9zM329 543h8v1h-8zM329 548h7v2h-7zM329 550h8v2h-8zM329 553h7v1h-7zM329 554h5v1h-5zM329 555h4v1h-4zM329 557h5v1h-5zM329 558h4v1h-4zM329 560h3v3h-3zM330 503h3v1h-3zM330 556h3v1h-3zM330 559h2v1h-2zM330 563h2v1h-2zM330 564h3v2h-3zM331 496h2v1h-2zM331 497h3v1h-3zM331 502h2v1h-2zM331 513h3v1h-3zM331 566h1v1h-1zM332 498h1v1h-1zM332 505h2v1h-2zM332 506h3v1h-3zM332 514h2v1h-2zM332 515h8v1h-8zM332 520h37v1h-37zM333 509h16v1h-16zM333 519h35v1h-35zM334 508h14v1h-14zM334 510h18v1h-18zM334 511h21v1h-21zM334 546h3v1h-3zM334 566h3v1h-3zM334 567h2v1h-2zM335 545h3v1h-3zM336 504h4v2h-4zM336 507h4v1h-4zM336 512h6v1h-6zM336 513h5v1h-5zM336 514h4v1h-4zM337 492h2v2h-2zM337 495h2v1h-2zM337 496h3v2h-3zM337 498h2v2h-2zM337 500h3v1h-3zM337 501h4v1h-4zM337 502h2v2h-2zM337 506h3v1h-3zM338 494h1v1h-1zM338 541h6v1h-6zM338 548h7v2h-7zM339 542h5v2h-5zM339 544h6v2h-6zM339 546h5v2h-5zM339 550h6v1h-6zM339 556h5v1h-5zM339 557h2v2h-2zM340 551h5v1h-5zM340 552h4v1h-4zM340 553h3v1h-3zM340 554h4v2h-4zM340 559h2v2h-2zM341 497h6v1h-6zM341 563h3v1h-3zM341 564h2v1h-2zM341 565h1v1h-1zM342 496h1v1h-1zM342 498h8v1h-8zM342 562h1v1h-1zM343 490h5v1h-5zM343 499h6v2h-6zM343 501h7v3h-7zM343 504h8v1h-8zM343 505h7v1h-7zM343 506h6v2h-6zM343 512h24v1h-24zM343 513h25v2h-25zM343 515h13v2h-13zM343 517h19v1h-19zM343 518h20v1h-20zM344 489h3v1h-3zM344 491h3v1h-3zM344 492h6v2h-6zM344 494h4v2h-4zM344 496h3v1h-3zM346 529h127v1h-127zM346 530h264v1h-264zM346 531h295v1h-295zM346 535h436v1h-436zM346 536h151v1h-151zM346 538h41v2h-41zM346 540h48v1h-48zM346 541h46v1h-46zM346 543h41v1h-41zM346 555h5v1h-5zM346 556h4v1h-4zM347 537h40v1h-40zM347 542h40v1h-40zM347 544h5v2h-5zM347 552h3v1h-3zM348 497h2v1h-2zM348 546h4v1h-4zM348 549h3v2h-3zM348 551h2v1h-2zM348 553h1v1h-1zM349 547h13v1h-13zM349 548h2v1h-2zM350 554h3v1h-3zM350 563h3v1h-3zM351 553h2v1h-2zM351 562h1v1h-1zM351 564h1v1h-1zM352 495h3v3h-3zM352 503h3v1h-3zM352 505h3v2h-3zM352 507h7v2h-7zM352 548h7v1h-7zM352 549h2v1h-2zM352 551h2v2h-2zM353 502h1v1h-1zM353 504h1v1h-1zM353 509h1v1h-1zM354 544h38v1h-38zM354 545h8v1h-8zM354 546h23v1h-23zM356 499h3v1h-3zM356 503h4v2h-4zM356 505h2v1h-2zM356 511h11v1h-11zM356 549h1v1h-1zM357 498h1v1h-1zM357 500h1v1h-1zM357 506h1v1h-1zM357 509h3v1h-3zM357 510h5v1h-5zM357 515h5v2h-5zM358 502h1v1h-1zM358 551h28v1h-28zM359 549h6v1h-6zM359 550h5v1h-5zM359 552h2v1h-2zM359 558h3v2h-3zM359 564h2v2h-2zM360 555h4v1h-4zM360 556h2v2h-2zM360 560h2v2h-2zM361 554h4v1h-4zM362 548h11v1h-11zM363 497h3v1h-3zM363 501h2v1h-2zM363 502h3v1h-3zM363 507h5v1h-5zM363 508h6v1h-6zM363 509h5v1h-5zM363 510h4v1h-4zM363 515h4v2h-4zM363 545h18v1h-18zM363 547h10v1h-10zM363 552h19v1h-19zM363 553h2v1h-2zM363 561h8v1h-8zM364 490h2v2h-2zM364 498h2v1h-2zM364 503h3v4h-3zM364 517h4v2h-4zM364 560h8v1h-8zM364 562h1v1h-1zM365 557h7v2h-7zM366 549h7v1h-7zM366 550h20v1h-20zM366 556h6v1h-6zM366 559h6v1h-6zM367 554h6v2h-6zM367 562h3v1h-3zM367 565h3v2h-3zM367 567h2v1h-2zM368 553h5v1h-5zM368 563h3v1h-3zM368 564h2v1h-2zM370 509h9v1h-9zM370 523h64v1h-64zM371 508h8v1h-8zM371 510h7v3h-7zM371 513h6v1h-6zM371 514h3v1h-3zM371 515h8v7h-8zM371 522h47v1h-47zM371 524h68v1h-68zM371 525h185v1h-185zM371 526h270v1h-270zM372 494h2v2h-2zM372 497h1v1h-1zM372 498h2v5h-2zM372 503h6v2h-6zM372 505h2v2h-2zM372 507h6v1h-6zM373 559h2v2h-2zM374 549h12v1h-12zM374 553h12v1h-12zM374 561h1v1h-1zM375 502h2v1h-2zM375 514h3v1h-3zM375 547h12v2h-12zM375 554h11v1h-11zM375 555h7v1h-7zM376 505h2v2h-2zM376 556h6v1h-6zM378 546h9v1h-9zM378 557h4v1h-4zM378 558h8v1h-8zM378 564h3v1h-3zM379 559h3v1h-3zM379 565h2v1h-2zM380 509h3v1h-3zM380 515h4v1h-4zM380 520h20v2h-20zM380 560h2v1h-2zM381 492h2v2h-2zM381 496h3v1h-3zM381 501h2v2h-2zM381 508h10v1h-10zM381 510h3v1h-3zM381 512h3v2h-3zM381 514h20v1h-20zM381 516h18v1h-18zM381 517h19v1h-19zM381 519h19v1h-19zM382 494h1v2h-1zM382 497h2v3h-2zM382 506h3v1h-3zM382 507h8v1h-8zM382 511h2v1h-2zM382 518h36v1h-36zM383 505h1v1h-1zM383 545h9v1h-9zM383 557h2v1h-2zM384 552h3v1h-3zM384 559h2v1h-2zM385 494h2v1h-2zM385 495h4v1h-4zM385 502h14v1h-14zM385 503h4v2h-4zM385 509h15v2h-15zM385 513h6v1h-6zM385 515h15v1h-15zM385 560h2v2h-2zM386 490h3v1h-3zM386 505h4v1h-4zM386 506h13v1h-13zM386 511h6v1h-6zM386 512h5v1h-5zM387 491h2v1h-2zM387 496h3v3h-3zM387 501h11v1h-11zM388 499h10v2h-10zM388 538h7v2h-7zM388 553h2v2h-2zM389 537h6v1h-6zM389 542h3v1h-3zM389 543h4v1h-4zM389 546h4v1h-4zM389 547h3v2h-3zM389 555h2v1h-2zM389 556h3v1h-3zM389 557h2v3h-2zM390 549h3v1h-3zM391 550h1v1h-1zM392 491h4v1h-4zM392 498h4v1h-4zM392 505h8v1h-8zM392 507h8v1h-8zM392 513h27v1h-27zM393 490h1v1h-1zM393 492h3v1h-3zM393 497h3v1h-3zM393 503h7v2h-7zM393 508h6v1h-6zM393 511h7v1h-7zM393 512h24v1h-24zM394 493h3v1h-3zM394 494h4v2h-4zM394 496h6v1h-6zM396 537h9v1h-9zM396 539h9v1h-9zM396 542h9v1h-9zM396 543h8v1h-8zM396 544h7v2h-7zM396 546h11v2h-11zM396 548h7v2h-7zM396 550h9v2h-9zM397 497h2v1h-2zM397 538h8v1h-8zM397 541h8v1h-8zM397 552h8v1h-8zM397 564h5v1h-5zM397 565h2v2h-2zM398 492h2v2h-2zM398 540h7v1h-7zM398 553h7v2h-7zM398 555h6v1h-6zM399 557h1v1h-1zM399 558h2v1h-2zM399 559h3v1h-3zM399 563h2v1h-2zM400 562h1v1h-1zM400 565h3v1h-3zM401 504h3v1h-3zM401 510h3v1h-3zM401 517h59v1h-59zM401 519h17v1h-17zM401 520h89v1h-89zM401 521h38v1h-38zM401 556h3v1h-3zM401 560h2v2h-2zM402 501h2v3h-2zM402 505h1v1h-1zM402 509h2v1h-2zM402 511h16v1h-16zM402 514h17v1h-17zM402 515h2v1h-2zM402 516h58v1h-58zM403 500h1v1h-1zM405 502h3v3h-3zM405 508h8v1h-8zM405 515h50v1h-50zM405 545h20v1h-20zM406 500h5v1h-5zM406 501h2v1h-2zM406 505h1v1h-1zM406 507h2v1h-2zM406 509h7v2h-7zM406 537h34v1h-34zM406 538h19v1h-19zM406 544h20v1h-20zM406 548h14v2h-14zM406 550h19v2h-19zM407 539h18v1h-18zM407 540h37v1h-37zM407 543h33v1h-33zM407 552h5v1h-5zM408 554h3v1h-3zM408 560h5v1h-5zM408 561h3v2h-3zM409 499h1v1h-1zM409 501h2v2h-2zM409 504h4v2h-4zM409 507h4v1h-4zM409 541h16v1h-16zM409 553h2v1h-2zM409 555h1v1h-1zM409 559h3v1h-3zM409 563h1v1h-1zM410 503h1v1h-1zM410 506h3v1h-3zM410 542h15v1h-15zM410 546h16v1h-16zM410 547h15v1h-15zM410 564h2v2h-2zM410 566h1v1h-1zM413 491h2v2h-2zM413 552h7v1h-7zM413 553h3v1h-3zM413 555h3v1h-3zM413 556h2v1h-2zM414 554h1v1h-1zM415 496h3v1h-3zM415 497h2v1h-2zM415 499h2v2h-2zM415 501h1v1h-1zM415 503h2v3h-2zM415 506h3v2h-3zM415 508h2v3h-2zM416 562h4v2h-4zM416 564h2v1h-2zM417 561h2v1h-2zM419 505h3v3h-3zM419 510h3v1h-3zM419 519h85v1h-85zM419 522h20v1h-20zM419 553h1v1h-1zM420 508h2v1h-2zM420 509h3v1h-3zM420 511h2v1h-2zM420 514h18v1h-18zM420 518h84v1h-84zM421 512h13v1h-13zM421 513h17v1h-17zM422 548h4v1h-4zM422 549h3v1h-3zM422 552h2v2h-2zM422 554h3v1h-3zM422 559h2v4h-2zM423 494h3v1h-3zM423 510h5v2h-5zM423 555h3v1h-3zM423 556h2v3h-2zM423 563h1v1h-1zM424 495h2v1h-2zM424 498h3v1h-3zM424 501h3v1h-3zM424 502h4v2h-4zM424 504h3v2h-3zM424 506h8v1h-8zM424 507h7v1h-7zM424 508h4v2h-4zM425 499h2v1h-2zM426 538h14v2h-14zM426 542h32v1h-32zM426 557h3v1h-3zM427 541h18v1h-18zM427 544h12v1h-12zM427 545h11v1h-11zM427 546h18v1h-18zM427 547h4v1h-4zM427 551h4v1h-4zM427 552h3v1h-3zM427 556h1v1h-1zM427 558h1v1h-1zM428 553h2v1h-2zM429 511h3v1h-3zM429 550h7v1h-7zM430 497h2v2h-2zM430 504h1v1h-1zM430 505h2v1h-2zM430 510h2v1h-2zM430 549h1v1h-1zM431 509h1v1h-1zM431 563h5v1h-5zM432 547h4v1h-4zM432 551h5v1h-5zM432 553h5v1h-5zM432 557h5v1h-5zM432 562h4v1h-4zM432 564h1v1h-1zM433 548h2v1h-2zM433 549h3v1h-3zM433 552h11v1h-11zM433 554h4v3h-4zM433 558h4v1h-4zM433 559h1v1h-1zM434 510h6v1h-6zM435 509h5v1h-5zM435 511h4v2h-4zM435 523h4v1h-4zM437 505h2v3h-2zM437 508h3v1h-3zM438 547h2v3h-2zM438 550h3v1h-3zM438 551h6v1h-6zM438 556h3v1h-3zM438 557h2v1h-2zM440 513h21v1h-21zM440 514h16v1h-16zM440 521h50v1h-50zM440 522h138v1h-138zM440 524h53v1h-53zM440 553h4v1h-4zM441 512h39v1h-39zM441 523h52v1h-52zM441 533h32v1h-32zM441 537h32v1h-32zM441 554h4v1h-4zM442 511h1v1h-1zM442 543h15v1h-15zM442 544h20v1h-20zM442 545h3v1h-3zM442 547h3v1h-3zM442 565h2v2h-2zM443 508h8v1h-8zM443 509h10v1h-10zM443 538h53v1h-53zM443 539h1v1h-1zM443 548h4v1h-4zM443 549h8v1h-8zM443 550h2v1h-2zM443 555h2v1h-2zM443 556h1v1h-1zM444 497h2v2h-2zM444 499h5v1h-5zM444 503h3v1h-3zM444 506h5v1h-5zM444 507h6v1h-6zM444 510h4v1h-4zM444 511h22v1h-22zM445 500h1v1h-1zM445 502h1v1h-1zM445 504h3v1h-3zM446 505h6v1h-6zM446 539h50v1h-50zM446 540h11v1h-11zM446 545h16v1h-16zM447 492h2v2h-2zM447 500h2v1h-2zM447 541h10v1h-10zM447 546h12v1h-12zM447 550h3v1h-3zM447 561h4v1h-4zM447 562h3v1h-3zM448 547h14v2h-14zM448 551h2v2h-2zM448 553h4v1h-4zM449 504h5v1h-5zM449 554h6v1h-6zM449 560h2v1h-2zM450 510h4v1h-4zM450 558h3v1h-3zM451 496h2v1h-2zM451 497h3v1h-3zM451 503h3v1h-3zM451 557h1v1h-1zM451 559h1v1h-1zM452 501h2v1h-2zM452 502h6v1h-6zM452 549h10v1h-10zM453 506h6v1h-6zM453 555h2v1h-2zM454 505h6v1h-6zM454 507h5v1h-5zM454 553h1v1h-1zM454 562h2v2h-2zM455 491h3v2h-3zM455 503h5v1h-5zM455 504h6v1h-6zM455 561h1v1h-1zM456 493h2v1h-2zM456 494h3v2h-3zM456 498h3v1h-3zM456 509h4v1h-4zM456 510h5v1h-5zM456 550h7v1h-7zM456 551h2v1h-2zM457 496h1v2h-1zM457 499h1v1h-1zM457 508h2v1h-2zM457 514h5v1h-5zM457 515h33v1h-33zM457 562h5v1h-5zM458 541h62v1h-62zM458 563h4v1h-4zM459 540h37v1h-37zM459 542h110v1h-110zM459 543h3v1h-3zM459 551h3v2h-3zM459 560h6v1h-6zM459 561h5v1h-5zM459 566h3v1h-3zM460 546h2v1h-2zM460 553h2v2h-2zM460 559h2v1h-2zM460 564h2v2h-2zM460 567h1v1h-1zM461 516h18v2h-18zM462 498h4v1h-4zM462 499h3v2h-3zM462 504h3v1h-3zM462 508h4v1h-4zM462 509h21v1h-21zM462 510h22v1h-22zM463 495h3v1h-3zM463 497h3v1h-3zM463 501h3v1h-3zM463 502h13v1h-13zM463 503h2v1h-2zM463 505h3v1h-3zM463 506h17v1h-17zM463 507h3v1h-3zM463 513h16v1h-16zM463 514h5v1h-5zM463 546h10v1h-10zM464 494h2v1h-2zM464 496h1v1h-1zM464 545h1v1h-1zM464 547h8v2h-8zM464 567h2v2h-2zM465 553h8v2h-8zM466 503h3v1h-3zM466 549h6v2h-6zM467 504h1v1h-1zM467 508h13v1h-13zM467 511h3v1h-3zM467 543h32v1h-32zM467 544h31v2h-31zM467 551h5v2h-5zM467 555h5v2h-5zM467 557h2v1h-2zM468 505h11v1h-11zM468 507h15v1h-15zM468 561h3v1h-3zM468 564h3v2h-3zM469 501h10v1h-10zM469 504h10v1h-10zM469 514h34v1h-34zM469 560h1v1h-1zM469 562h1v2h-1zM470 503h5v1h-5zM470 567h2v2h-2zM471 495h4v1h-4zM471 497h8v1h-8zM471 498h7v1h-7zM471 499h8v1h-8zM471 511h18v1h-18zM472 491h3v4h-3zM472 496h7v1h-7zM472 500h8v1h-8zM474 529h17v1h-17zM474 532h168v1h-168zM474 533h137v1h-137zM474 537h23v1h-23zM474 551h3v1h-3zM475 546h23v1h-23zM475 548h21v2h-21zM475 550h2v1h-2zM475 552h1v1h-1zM475 561h1v1h-1zM475 562h2v1h-2zM475 563h7v1h-7zM476 547h22v1h-22zM476 564h6v1h-6zM477 495h1v1h-1zM477 502h1v1h-1zM477 503h2v1h-2zM477 565h4v1h-4zM477 566h5v1h-5zM477 567h10v1h-10zM477 568h9v1h-9zM478 550h18v4h-18zM478 558h10v1h-10zM479 554h17v3h-17zM479 557h12v1h-12zM479 559h12v1h-12zM479 560h11v1h-11zM479 561h3v1h-3zM479 562h2v1h-2zM480 494h2v2h-2zM480 496h1v1h-1zM480 569h4v1h-4zM481 504h2v3h-2zM481 508h2v1h-2zM481 512h9v1h-9zM481 513h12v1h-12zM481 516h11v1h-11zM481 517h12v1h-12zM481 570h1v1h-1zM483 561h5v1h-5zM483 562h4v1h-4zM483 563h3v1h-3zM484 495h4v1h-4zM484 496h2v1h-2zM484 505h16v1h-16zM484 506h10v1h-10zM484 507h9v1h-9zM484 508h8v1h-8zM484 564h2v1h-2zM484 565h7v1h-7zM484 566h4v1h-4zM485 494h3v1h-3zM485 504h1v1h-1zM486 509h5v1h-5zM486 510h4v1h-4zM487 501h2v2h-2zM488 504h1v1h-1zM488 564h3v1h-3zM489 558h1v1h-1zM489 561h1v1h-1zM489 562h4v1h-4zM489 563h2v1h-2zM489 566h3v1h-3zM490 498h3v1h-3zM490 504h1v1h-1zM490 567h3v1h-3zM491 497h1v1h-1zM491 499h1v1h-1zM491 515h2v1h-2zM491 520h48v1h-48zM491 521h21v1h-21zM491 561h3v1h-3zM491 568h1v1h-1zM492 557h4v1h-4zM492 560h4v1h-4zM493 529h149v1h-149zM493 558h3v2h-3zM493 563h2v1h-2zM493 564h3v1h-3zM494 491h2v2h-2zM494 500h2v1h-2zM494 501h8v1h-8zM494 502h12v1h-12zM494 503h5v2h-5zM494 508h8v1h-8zM494 509h10v5h-10zM494 515h9v1h-9zM494 516h10v2h-10zM494 523h84v1h-84zM494 524h62v1h-62zM494 565h1v1h-1zM495 499h1v1h-1zM495 506h7v2h-7zM497 497h5v1h-5zM497 498h9v1h-9zM497 499h2v1h-2zM498 496h1v1h-1zM498 540h21v1h-21zM499 536h142v1h-142zM499 539h20v1h-20zM499 550h9v1h-9zM500 499h5v1h-5zM500 500h2v1h-2zM500 537h20v2h-20zM500 543h68v1h-68zM500 544h19v1h-19zM500 549h1v1h-1zM500 551h8v1h-8zM500 560h8v1h-8zM500 561h5v1h-5zM501 555h4v1h-4zM501 557h4v1h-4zM501 567h4v2h-4zM502 545h17v2h-17zM502 547h16v1h-16zM502 552h6v2h-6zM502 554h5v1h-5zM502 556h3v1h-3zM502 558h3v1h-3zM502 559h6v1h-6zM503 501h1v1h-1zM503 503h3v1h-3zM503 548h14v1h-14zM503 549h5v1h-5zM503 562h2v3h-2zM503 565h1v1h-1zM506 510h5v1h-5zM506 511h4v1h-4zM506 515h6v1h-6zM507 508h1v1h-1zM507 509h3v1h-3zM507 514h3v1h-3zM507 516h5v1h-5zM507 517h19v2h-19zM507 519h32v1h-32zM508 504h1v1h-1zM508 505h2v1h-2zM508 506h3v1h-3zM508 512h3v2h-3zM508 556h2v2h-2zM509 507h1v1h-1zM509 549h9v1h-9zM509 552h9v1h-9zM510 550h9v2h-9zM510 553h8v1h-8zM511 554h7v1h-7zM511 555h3v1h-3zM511 558h2v1h-2zM511 559h6v1h-6zM512 510h2v1h-2zM512 511h14v1h-14zM512 556h1v2h-1zM513 512h1v1h-1zM513 515h24v1h-24zM513 516h3v1h-3zM513 521h65v1h-65zM514 560h4v1h-4zM514 562h4v1h-4zM514 563h2v4h-2zM514 567h1v1h-1zM515 512h11v1h-11zM515 555h4v1h-4zM515 561h3v1h-3zM516 513h10v1h-10zM516 514h21v1h-21zM516 556h2v1h-2zM517 510h9v1h-9zM517 516h6v1h-6zM518 495h4v1h-4zM518 496h5v1h-5zM518 497h2v2h-2zM518 501h5v1h-5zM518 503h4v3h-4zM518 506h8v2h-8zM518 508h11v2h-11zM519 492h2v3h-2zM519 499h1v1h-1zM519 500h2v1h-2zM519 502h7v1h-7zM521 537h67v1h-67zM521 538h50v2h-50zM522 540h48v1h-48zM522 541h47v1h-47zM522 544h46v1h-46zM522 545h6v2h-6zM522 547h2v1h-2zM523 497h2v1h-2zM523 498h3v1h-3zM523 503h3v2h-3zM524 501h1v1h-1zM524 505h2v1h-2zM524 516h8v1h-8zM524 549h3v1h-3zM524 558h3v1h-3zM525 547h17v1h-17zM525 548h11v1h-11zM525 550h8v2h-8zM525 552h5v1h-5zM525 553h6v1h-6zM525 554h7v2h-7zM525 556h3v1h-3zM525 557h2v1h-2zM525 559h5v1h-5zM527 510h2v1h-2zM527 513h2v1h-2zM527 517h10v1h-10zM528 500h2v2h-2zM528 518h11v1h-11zM528 549h7v1h-7zM528 558h1v1h-1zM528 560h1v1h-1zM530 513h4v1h-4zM530 545h4v1h-4zM530 546h33v1h-33zM531 562h2v1h-2zM531 563h3v1h-3zM533 511h4v2h-4zM533 516h4v1h-4zM534 506h2v3h-2zM534 509h5v1h-5zM534 510h4v1h-4zM535 501h1v1h-1zM535 502h2v2h-2zM535 513h2v1h-2zM535 545h28v1h-28zM537 508h1v1h-1zM537 548h5v1h-5zM537 549h9v2h-9zM537 551h6v2h-6zM537 553h4v4h-4zM537 557h6v3h-6zM537 560h2v1h-2zM537 561h3v1h-3zM538 562h1v1h-1zM540 510h4v1h-4zM540 512h6v1h-6zM540 516h14v2h-14zM540 520h75v1h-75zM541 509h2v1h-2zM541 511h5v1h-5zM541 513h5v1h-5zM541 518h16v1h-16zM541 519h33v1h-33zM541 560h2v1h-2zM542 504h6v1h-6zM542 508h4v1h-4zM542 515h14v1h-14zM543 502h5v1h-5zM543 503h9v1h-9zM543 505h4v1h-4zM543 506h3v2h-3zM543 547h10v1h-10zM544 492h3v1h-3zM544 493h2v1h-2zM544 514h2v1h-2zM544 548h1v1h-1zM544 551h1v1h-1zM546 548h5v1h-5zM546 552h5v2h-5zM546 554h3v1h-3zM547 549h4v1h-4zM548 550h11v2h-11zM548 558h2v1h-2zM548 559h3v1h-3zM548 565h2v2h-2zM549 504h3v1h-3zM549 505h5v2h-5zM549 507h3v2h-3zM549 509h8v1h-8zM549 510h9v1h-9zM549 511h5v1h-5zM549 513h9v1h-9zM549 514h8v1h-8zM549 564h1v1h-1zM550 499h4v1h-4zM550 512h4v1h-4zM550 554h10v1h-10zM550 560h3v1h-3zM551 498h4v1h-4zM551 500h1v1h-1zM551 555h2v1h-2zM551 561h2v1h-2zM553 497h1v1h-1zM553 549h6v1h-6zM554 547h9v1h-9zM554 548h5v1h-5zM554 552h6v1h-6zM554 553h5v1h-5zM554 558h5v1h-5zM555 500h2v2h-2zM555 502h1v1h-1zM555 557h4v1h-4zM555 559h4v1h-4zM556 511h1v2h-1zM556 555h3v2h-3zM556 560h3v3h-3zM556 563h4v1h-4zM556 564h3v2h-3zM556 566h2v2h-2zM556 568h3v3h-3zM557 496h3v1h-3zM557 504h3v2h-3zM557 571h1v1h-1zM558 495h1v1h-1zM558 497h1v1h-1zM558 516h3v1h-3zM558 517h7v1h-7zM558 518h16v1h-16zM558 524h84v2h-84zM559 501h3v1h-3zM559 506h6v2h-6zM559 508h2v1h-2zM559 510h2v1h-2zM559 511h3v1h-3zM559 512h6v2h-6zM559 514h2v2h-2zM560 500h1v1h-1zM560 502h4v1h-4zM560 548h11v1h-11zM560 549h8v2h-8zM560 556h6v1h-6zM561 494h3v1h-3zM561 495h4v1h-4zM561 551h22v1h-22zM561 554h7v1h-7zM561 555h5v1h-5zM561 557h1v1h-1zM562 493h1v1h-1zM562 503h2v1h-2zM562 505h2v1h-2zM562 508h3v2h-3zM562 514h3v3h-3zM562 553h6v1h-6zM563 496h1v1h-1zM563 504h1v1h-1zM563 510h1v2h-1zM564 545h5v1h-5zM564 546h22v1h-22zM564 547h24v1h-24zM564 552h5v1h-5zM564 557h4v1h-4zM564 568h2v1h-2zM564 569h4v1h-4zM564 570h5v1h-5zM565 558h3v2h-3zM565 564h2v1h-2zM565 565h3v1h-3zM566 511h8v1h-8zM566 515h11v1h-11zM566 571h2v1h-2zM567 510h7v1h-7zM567 512h7v2h-7zM567 514h11v1h-11zM567 516h11v2h-11zM568 498h2v1h-2zM568 499h3v1h-3zM568 500h4v1h-4zM568 501h5v1h-5zM568 502h6v1h-6zM568 503h5v1h-5zM568 506h2v1h-2zM568 507h9v1h-9zM568 508h10v1h-10zM568 509h5v1h-5zM569 504h4v2h-4zM570 495h3v1h-3zM570 550h13v1h-13zM570 555h5v1h-5zM571 494h1v1h-1zM571 496h1v1h-1zM571 506h7v1h-7zM571 554h4v1h-4zM571 556h4v1h-4zM572 538h16v1h-16zM572 540h17v1h-17zM572 541h32v1h-32zM572 542h16v2h-16zM572 544h15v1h-15zM572 552h4v1h-4zM572 553h3v1h-3zM572 557h3v1h-3zM572 563h5v2h-5zM572 565h6v1h-6zM572 567h3v1h-3zM573 539h16v1h-16zM573 545h13v1h-13zM573 548h15v1h-15zM573 549h13v1h-13zM573 558h2v1h-2zM573 566h2v1h-2zM575 505h2v1h-2zM575 509h3v2h-3zM575 513h2v1h-2zM575 562h1v1h-1zM576 566h1v1h-1zM577 552h6v1h-6zM577 559h5v1h-5zM577 560h4v1h-4zM578 512h14v1h-14zM578 553h5v2h-5zM578 556h3v1h-3zM578 558h8v1h-8zM578 561h2v2h-2zM578 563h3v1h-3zM579 511h1v1h-1zM579 513h14v1h-14zM579 519h21v1h-21zM579 555h2v1h-2zM579 557h5v1h-5zM579 564h1v1h-1zM579 569h3v1h-3zM580 498h3v2h-3zM580 514h13v2h-13zM580 516h33v1h-33zM580 517h49v1h-49zM580 518h20v1h-20zM580 521h35v1h-35zM580 522h7v1h-7zM580 523h26v1h-26zM580 568h1v1h-1zM580 570h1v1h-1zM581 497h1v1h-1zM582 556h1v1h-1zM583 493h2v2h-2zM583 500h2v1h-2zM583 501h5v1h-5zM583 502h2v3h-2zM583 508h4v1h-4zM583 509h5v3h-5zM583 559h3v1h-3zM584 507h3v1h-3zM584 550h2v2h-2zM584 561h2v4h-2zM585 505h2v2h-2zM586 502h2v1h-2zM586 553h2v2h-2zM588 522h32v1h-32zM588 556h6v1h-6zM589 504h5v1h-5zM589 506h4v3h-4zM589 509h3v3h-3zM589 542h24v1h-24zM589 555h1v1h-1zM589 557h1v1h-1zM590 498h3v1h-3zM590 503h2v1h-2zM590 505h4v1h-4zM590 537h50v1h-50zM590 538h13v1h-13zM590 543h18v1h-18zM590 546h13v2h-13zM591 497h1v1h-1zM591 499h1v1h-1zM591 539h13v1h-13zM591 540h16v1h-16zM591 544h11v2h-11zM592 548h8v1h-8zM592 549h7v1h-7zM592 550h8v1h-8zM592 555h1v1h-1zM592 557h1v1h-1zM592 566h2v2h-2zM593 551h1v1h-1zM593 565h1v1h-1zM594 509h2v1h-2zM594 510h3v1h-3zM595 499h5v1h-5zM595 511h3v1h-3zM595 513h4v1h-4zM595 514h3v1h-3zM595 551h8v1h-8zM595 554h2v1h-2zM595 555h4v1h-4zM596 498h1v1h-1zM596 500h1v1h-1zM596 501h4v1h-4zM596 502h2v2h-2zM596 512h3v1h-3zM596 515h3v1h-3zM596 556h4v1h-4zM596 557h3v2h-3zM597 559h3v1h-3zM597 562h5v1h-5zM597 563h2v1h-2zM598 500h2v1h-2zM598 552h4v1h-4zM598 553h2v1h-2zM598 560h1v1h-1zM598 564h2v1h-2zM598 565h3v1h-3zM599 511h15v1h-15zM599 566h3v1h-3zM600 493h3v1h-3zM600 510h17v1h-17zM600 512h19v1h-19zM600 514h16v1h-16zM600 515h22v1h-22zM600 561h2v1h-2zM600 567h2v1h-2zM601 492h1v1h-1zM601 494h1v1h-1zM601 499h7v1h-7zM601 501h12v1h-12zM601 505h13v1h-13zM601 506h12v1h-12zM601 507h13v2h-13zM601 509h18v1h-18zM601 518h41v2h-41zM601 548h2v1h-2zM601 550h1v1h-1zM602 498h3v1h-3zM602 500h12v1h-12zM602 502h2v1h-2zM602 504h2v1h-2zM602 513h12v1h-12zM604 544h4v1h-4zM604 545h3v1h-3zM604 557h2v2h-2zM605 493h4v1h-4zM605 502h9v1h-9zM605 538h2v1h-2zM605 541h2v1h-2zM605 546h2v3h-2zM606 494h3v2h-3zM606 503h12v1h-12zM606 504h8v1h-8zM607 523h13v1h-13zM608 538h32v1h-32zM608 539h33v1h-33zM609 543h4v1h-4zM610 497h5v1h-5zM610 498h3v2h-3zM610 540h31v2h-31zM610 544h11v1h-11zM611 496h4v1h-4zM611 530h30v1h-30zM611 553h2v2h-2zM611 555h1v1h-1zM612 495h3v1h-3zM612 533h30v1h-30zM612 545h9v1h-9zM612 547h2v2h-2zM613 494h1v1h-1zM613 546h2v1h-2zM613 549h4v1h-4zM613 550h2v3h-2zM614 516h15v1h-15zM614 543h12v1h-12zM614 563h3v1h-3zM615 504h4v1h-4zM615 507h2v1h-2zM615 508h4v1h-4zM615 511h3v1h-3zM615 542h12v1h-12zM615 548h2v1h-2zM615 562h1v1h-1zM615 564h1v1h-1zM616 520h26v1h-26zM616 521h25v1h-25zM617 501h3v1h-3zM617 505h1v1h-1zM617 513h6v1h-6zM617 546h3v1h-3zM617 551h2v1h-2zM617 552h3v1h-3zM618 500h2v1h-2zM618 514h3v1h-3zM618 553h1v1h-1zM618 554h2v5h-2zM620 508h3v1h-3zM621 509h2v1h-2zM621 512h3v1h-3zM621 522h21v2h-21zM622 511h2v1h-2zM622 544h4v1h-4zM622 545h3v5h-3zM622 553h3v3h-3zM622 558h3v1h-3zM622 559h2v1h-2zM622 563h3v2h-3zM622 568h3v1h-3zM623 550h2v3h-2zM623 557h1v1h-1zM623 562h1v1h-1zM623 565h2v1h-2zM623 569h2v1h-2zM624 509h13v2h-13zM624 515h18v1h-18zM625 506h3v2h-3zM625 511h5v3h-5zM625 514h1v1h-1zM626 501h4v2h-4zM626 508h7v1h-7zM626 545h14v1h-14zM627 496h2v2h-2zM627 514h3v1h-3zM627 544h13v1h-13zM627 546h13v1h-13zM628 500h1v1h-1zM628 503h1v1h-1zM629 542h13v2h-13zM629 547h11v2h-11zM629 549h6v3h-6zM629 552h3v1h-3zM629 553h2v1h-2zM629 554h8v1h-8zM629 555h3v2h-3zM629 557h8v1h-8zM629 560h2v4h-2zM629 564h3v1h-3zM629 565h2v3h-2zM629 568h3v1h-3zM629 569h2v1h-2zM630 558h5v1h-5zM631 493h3v1h-3zM631 494h2v1h-2zM631 498h2v2h-2zM631 500h3v2h-3zM631 506h3v1h-3zM631 507h2v1h-2zM631 511h6v1h-6zM631 512h11v1h-11zM631 513h10v1h-10zM631 514h11v1h-11zM631 516h10v2h-10zM632 502h1v1h-1zM632 505h1v1h-1zM633 552h7v2h-7zM633 555h7v1h-7zM633 556h5v1h-5zM633 559h1v1h-1zM633 565h3v1h-3zM634 504h3v1h-3zM634 564h1v1h-1zM634 566h1v1h-1zM635 503h1v1h-1zM635 505h1v1h-1zM635 508h2v1h-2zM636 500h2v2h-2zM637 499h1v1h-1zM637 551h3v1h-3zM638 511h3v1h-3zM638 549h2v1h-2zM638 550h3v1h-3zM638 554h2v1h-2zM639 501h3v1h-3zM639 505h3v1h-3zM639 506h2v1h-2zM639 510h2v1h-2zM640 500h1v1h-1zM640 502h1v1h-1zM640 504h1v1h-1zM643 510h6v2h-6zM643 514h7v1h-7zM643 515h6v2h-6zM643 517h24v3h-24zM643 522h90v1h-90zM643 523h89v1h-89zM643 524h8v1h-8zM643 526h89v1h-89zM643 527h30v1h-30zM643 529h90v1h-90zM643 536h41v1h-41zM643 537h40v1h-40zM644 497h2v2h-2zM644 505h5v2h-5zM644 507h9v1h-9zM644 508h5v2h-5zM644 512h7v1h-7zM644 513h8v1h-8zM644 520h20v1h-20zM644 521h21v1h-21zM644 525h88v1h-88zM644 530h127v1h-127zM644 531h35v1h-35zM644 538h40v2h-40zM645 504h1v1h-1zM645 532h227v2h-227zM645 540h1v1h-1zM645 542h40v1h-40zM645 543h15v6h-15zM645 549h10v1h-10zM645 550h9v2h-9zM645 552h8v1h-8zM645 553h3v1h-3zM645 555h3v1h-3zM645 557h3v2h-3zM645 560h3v2h-3zM645 562h2v1h-2zM645 569h2v2h-2zM646 534h226v1h-226zM646 541h57v1h-57zM646 554h2v1h-2zM646 556h1v1h-1zM646 559h1v1h-1zM646 563h1v1h-1zM647 494h2v2h-2zM647 504h2v1h-2zM647 540h58v1h-58zM648 493h1v1h-1zM648 559h6v1h-6zM649 553h4v2h-4zM649 556h5v1h-5zM649 558h5v1h-5zM649 560h4v1h-4zM650 508h2v1h-2zM650 516h2v1h-2zM650 555h3v1h-3zM650 557h4v1h-4zM650 561h3v1h-3zM650 564h3v1h-3zM650 567h4v1h-4zM651 562h2v2h-2zM651 568h3v3h-3zM652 524h80v1h-80zM652 566h2v1h-2zM653 495h3v1h-3zM653 510h2v1h-2zM653 511h3v1h-3zM653 516h14v1h-14zM654 494h4v1h-4zM654 496h1v1h-1zM654 501h2v2h-2zM654 512h3v1h-3zM654 513h10v1h-10zM654 514h17v1h-17zM654 515h13v1h-13zM656 493h2v1h-2zM656 506h7v1h-7zM656 507h2v1h-2zM656 551h3v1h-3zM656 554h3v1h-3zM657 549h2v2h-2zM657 552h1v1h-1zM657 553h2v1h-2zM657 564h3v1h-3zM658 505h5v1h-5zM658 565h2v1h-2zM659 499h3v1h-3zM659 504h4v1h-4zM659 509h4v1h-4zM659 512h4v1h-4zM659 555h2v2h-2zM660 494h1v1h-1zM660 495h2v2h-2zM660 498h1v1h-1zM660 500h1v1h-1zM660 503h4v1h-4zM660 507h3v1h-3zM660 510h3v1h-3zM660 511h4v1h-4zM660 557h1v1h-1zM660 558h2v2h-2zM661 508h1v1h-1zM661 543h24v1h-24zM661 544h18v1h-18zM662 497h3v1h-3zM662 498h2v1h-2zM662 502h3v1h-3zM662 549h10v1h-10zM662 550h18v1h-18zM663 501h1v1h-1zM663 545h16v1h-16zM663 548h7v1h-7zM663 551h16v2h-16zM664 506h3v1h-3zM664 546h8v1h-8zM664 547h6v1h-6zM664 553h15v1h-15zM664 555h3v2h-3zM664 560h2v5h-2zM665 505h1v1h-1zM665 507h1v1h-1zM665 509h2v1h-2zM665 510h7v1h-7zM665 511h2v2h-2zM665 513h6v1h-6zM666 554h3v1h-3zM667 521h66v1h-66zM668 506h3v2h-3zM668 509h6v1h-6zM668 511h5v2h-5zM668 515h6v1h-6zM668 516h8v1h-8zM668 517h9v4h-9zM669 505h2v1h-2zM669 508h2v1h-2zM670 500h2v2h-2zM670 554h2v1h-2zM670 555h1v1h-1zM671 502h1v1h-1zM672 508h3v1h-3zM672 513h2v2h-2zM673 507h1v1h-1zM673 546h6v1h-6zM673 547h2v1h-2zM673 548h10v1h-10zM673 549h6v1h-6zM675 527h58v1h-58zM676 547h8v1h-8zM676 554h3v1h-3zM676 555h4v2h-4zM676 557h3v2h-3zM676 562h2v1h-2zM676 563h3v2h-3zM676 565h2v2h-2zM677 559h2v1h-2zM677 561h1v1h-1zM678 496h3v1h-3zM678 506h9v1h-9zM678 514h20v1h-20zM678 515h35v1h-35zM678 516h45v1h-45zM678 517h20v1h-20zM678 518h43v1h-43zM678 519h44v1h-44zM678 520h54v1h-54zM679 495h1v1h-1zM679 497h2v1h-2zM679 502h1v1h-1zM679 503h7v3h-7zM679 507h1v1h-1zM679 509h1v1h-1zM679 510h9v1h-9zM679 511h10v1h-10zM679 513h11v1h-11zM680 531h192v1h-192zM680 544h4v1h-4zM680 545h3v1h-3zM680 546h4v1h-4zM680 558h2v2h-2zM681 501h5v2h-5zM681 507h6v1h-6zM681 512h9v1h-9zM681 549h2v2h-2zM681 560h1v1h-1zM682 500h4v1h-4zM682 508h5v1h-5zM682 509h6v1h-6zM682 551h2v2h-2zM683 492h2v2h-2zM683 494h4v1h-4zM683 495h5v1h-5zM683 496h4v1h-4zM683 497h3v3h-3zM686 536h85v1h-85zM686 537h38v1h-38zM686 538h8v1h-8zM686 539h38v1h-38zM686 542h17v1h-17zM686 543h18v1h-18zM686 544h17v1h-17zM686 547h18v2h-18zM686 549h8v2h-8zM687 545h17v2h-17zM687 552h4v2h-4zM687 554h7v1h-7zM688 507h7v1h-7zM689 506h2v1h-2zM689 508h11v1h-11zM689 509h12v1h-12zM689 551h5v1h-5zM689 555h4v1h-4zM689 557h4v1h-4zM689 558h5v1h-5zM690 500h8v1h-8zM690 503h4v1h-4zM690 504h5v1h-5zM690 505h1v1h-1zM690 510h8v2h-8zM691 499h4v1h-4zM691 512h7v2h-7zM692 501h7v1h-7zM692 502h6v1h-6zM692 505h3v1h-3zM692 552h1v1h-1zM692 553h2v1h-2zM692 559h1v1h-1zM693 506h2v1h-2zM695 490h1v1h-1zM695 491h2v2h-2zM695 538h23v1h-23zM696 549h8v1h-8zM697 550h7v1h-7zM697 551h2v1h-2zM697 559h7v1h-7zM697 560h2v2h-2zM698 498h3v1h-3zM698 558h6v1h-6zM699 497h1v1h-1zM699 499h1v1h-1zM699 510h1v1h-1zM699 517h23v1h-23zM699 557h4v1h-4zM700 511h10v1h-10zM700 512h9v1h-9zM700 513h21v1h-21zM701 500h1v1h-1zM701 501h2v2h-2zM701 552h3v3h-3zM701 556h2v1h-2zM702 503h2v2h-2zM702 514h20v1h-20zM702 551h1v1h-1zM702 560h3v1h-3zM702 561h2v1h-2zM703 505h1v1h-1zM703 507h6v1h-6zM703 509h7v1h-7zM703 510h6v1h-6zM704 498h2v2h-2zM704 506h4v1h-4zM704 508h5v1h-5zM705 500h1v1h-1zM705 505h2v1h-2zM705 542h32v1h-32zM705 546h13v1h-13zM705 550h2v1h-2zM705 551h3v1h-3zM706 540h19v1h-19zM706 541h12v1h-12zM706 543h32v1h-32zM706 544h60v1h-60zM706 545h12v1h-12zM706 547h9v3h-9zM706 552h4v1h-4zM706 553h3v1h-3zM706 564h3v1h-3zM707 554h1v1h-1zM707 556h1v1h-1zM707 557h2v2h-2zM707 562h2v1h-2zM707 563h3v1h-3zM707 565h1v1h-1zM708 494h2v2h-2zM709 550h2v1h-2zM709 551h5v1h-5zM710 512h11v1h-11zM711 497h2v1h-2zM711 498h3v1h-3zM711 502h3v4h-3zM711 507h2v2h-2zM711 509h3v2h-3zM711 511h4v1h-4zM712 489h2v1h-2zM712 490h3v1h-3zM712 506h1v1h-1zM712 550h6v1h-6zM712 552h2v1h-2zM713 554h3v1h-3zM713 558h3v1h-3zM714 553h2v1h-2zM714 555h1v1h-1zM714 557h1v1h-1zM714 559h1v1h-1zM715 515h7v1h-7zM715 551h2v1h-2zM716 510h4v1h-4zM716 511h5v1h-5zM716 547h1v1h-1zM717 504h5v1h-5zM717 505h6v1h-6zM717 506h5v1h-5zM717 507h3v1h-3zM717 508h4v1h-4zM717 509h3v1h-3zM718 503h2v1h-2zM718 558h3v1h-3zM719 538h5v1h-5zM719 541h6v1h-6zM719 545h47v1h-47zM719 546h33v1h-33zM719 548h6v1h-6zM719 549h5v2h-5zM719 557h2v1h-2zM719 559h1v1h-1zM720 547h5v1h-5zM720 551h3v1h-3zM721 552h3v1h-3zM722 509h9v1h-9zM722 510h8v1h-8zM722 553h3v1h-3zM722 554h2v2h-2zM722 559h3v1h-3zM723 558h1v1h-1zM723 560h1v1h-1zM724 502h2v2h-2zM724 504h6v1h-6zM724 505h8v1h-8zM724 507h2v1h-2zM724 508h3v1h-3zM724 511h7v1h-7zM724 512h8v2h-8zM724 514h9v2h-9zM724 516h8v1h-8zM724 517h24v1h-24zM724 518h9v1h-9zM724 519h7v1h-7zM725 506h3v1h-3zM725 538h34v1h-34zM725 539h13v1h-13zM725 566h1v1h-1zM725 567h2v2h-2zM726 537h45v1h-45zM726 540h30v2h-30zM726 547h21v1h-21zM726 548h11v2h-11zM726 550h12v1h-12zM726 551h3v1h-3zM726 553h10v2h-10zM726 555h5v1h-5zM726 556h12v1h-12zM726 560h3v1h-3zM727 499h5v2h-5zM727 503h3v1h-3zM727 552h9v1h-9zM727 559h8v1h-8zM728 498h1v1h-1zM728 502h2v1h-2zM728 557h9v1h-9zM728 558h7v1h-7zM728 564h2v2h-2zM728 566h1v1h-1zM729 508h3v1h-3zM730 498h3v1h-3zM730 501h3v1h-3zM730 506h2v1h-2zM730 507h1v1h-1zM731 497h1v1h-1zM731 502h1v1h-1zM731 551h6v1h-6zM731 560h4v1h-4zM731 561h5v2h-5zM731 563h4v1h-4zM731 564h3v4h-3zM732 555h4v1h-4zM732 568h1v1h-1zM733 512h17v1h-17zM733 524h138v1h-138zM734 511h17v1h-17zM734 513h16v1h-16zM734 516h14v1h-14zM734 518h35v3h-35zM734 521h39v1h-39zM734 523h27v1h-27zM734 525h137v1h-137zM734 526h239v1h-239zM734 527h137v2h-137zM734 529h93v1h-93zM735 510h26v1h-26zM735 522h93v1h-93zM736 507h6v1h-6zM736 508h7v1h-7zM736 509h14v1h-14zM736 514h8v1h-8zM737 495h2v3h-2zM737 498h11v1h-11zM737 499h6v1h-6zM737 502h3v1h-3zM737 506h11v1h-11zM737 515h24v1h-24zM738 500h1v2h-1zM738 503h1v1h-1zM738 553h6v1h-6zM738 568h2v2h-2zM739 505h12v1h-12zM739 539h17v1h-17zM739 543h19v1h-19zM739 548h4v2h-4zM739 550h5v1h-5zM739 551h4v1h-4zM739 552h2v1h-2zM739 554h5v1h-5zM740 542h18v1h-18zM741 504h7v1h-7zM741 555h3v1h-3zM741 556h2v1h-2zM741 560h3v1h-3zM742 497h6v1h-6zM742 503h2v1h-2zM742 559h1v1h-1zM742 561h1v1h-1zM743 496h1v1h-1zM744 548h3v1h-3zM745 492h3v2h-3zM745 500h5v2h-5zM745 502h3v2h-3zM745 507h3v1h-3zM745 508h5v1h-5zM745 514h24v1h-24zM745 549h1v1h-1zM746 494h2v3h-2zM746 499h3v1h-3zM747 554h3v1h-3zM747 555h4v1h-4zM747 556h5v1h-5zM747 564h2v3h-2zM747 567h3v1h-3zM747 568h2v1h-2zM748 547h1v1h-1zM748 548h2v2h-2zM749 493h3v1h-3zM749 504h2v1h-2zM749 516h12v1h-12zM749 517h20v1h-20zM749 553h1v1h-1zM750 492h1v1h-1zM750 494h1v1h-1zM750 547h2v1h-2zM750 557h1v1h-1zM751 499h3v1h-3zM751 513h18v1h-18zM752 498h1v1h-1zM752 500h1v1h-1zM752 506h9v4h-9zM752 511h8v1h-8zM752 512h17v1h-17zM753 505h1v1h-1zM753 550h4v1h-4zM753 551h12v1h-12zM753 559h4v2h-4zM754 547h4v1h-4zM754 548h3v2h-3zM754 552h10v1h-10zM754 553h3v1h-3zM754 556h3v3h-3zM754 561h3v1h-3zM755 505h5v1h-5zM755 546h12v1h-12zM755 554h1v2h-1zM755 562h1v1h-1zM756 493h3v1h-3zM756 499h3v1h-3zM756 500h2v1h-2zM756 504h4v1h-4zM757 492h2v1h-2zM757 494h2v1h-2zM757 495h3v1h-3zM757 498h1v1h-1zM757 503h4v1h-4zM757 539h24v1h-24zM758 496h1v1h-1zM758 540h24v1h-24zM758 541h25v1h-25zM758 550h6v1h-6zM759 502h2v1h-2zM759 542h13v2h-13zM759 547h7v1h-7zM759 553h5v1h-5zM759 560h5v1h-5zM760 538h21v1h-21zM760 554h4v1h-4zM760 559h4v1h-4zM760 561h1v1h-1zM761 497h2v2h-2zM761 548h3v1h-3zM761 557h3v2h-3zM762 549h2v1h-2zM763 503h2v2h-2zM763 508h4v1h-4zM763 509h7v1h-7zM763 510h3v2h-3zM763 515h6v2h-6zM763 523h108v1h-108zM763 555h2v1h-2zM763 556h3v1h-3zM765 505h2v2h-2zM765 507h1v1h-1zM766 550h1v1h-1zM766 551h6v1h-6zM766 552h5v1h-5zM766 561h5v2h-5zM767 510h2v2h-2zM767 547h5v1h-5zM767 553h4v1h-4zM767 554h5v1h-5zM767 555h4v2h-4zM768 544h4v1h-4zM768 545h15v1h-15zM768 546h4v1h-4zM768 548h4v1h-4zM769 549h3v2h-3zM769 557h3v1h-3zM769 558h7v1h-7zM770 513h3v2h-3zM770 516h3v1h-3zM770 520h3v1h-3zM770 559h6v1h-6zM771 508h2v2h-2zM771 510h1v1h-1zM771 512h2v1h-2zM771 515h2v1h-2zM771 517h2v1h-2zM771 518h1v1h-1zM771 519h2v1h-2zM772 530h100v1h-100zM773 536h9v1h-9zM773 537h8v1h-8zM773 542h68v1h-68zM773 543h27v1h-27zM773 546h10v1h-10zM773 547h7v1h-7zM773 548h5v2h-5zM773 550h6v1h-6zM773 551h8v1h-8zM773 553h3v3h-3zM773 557h3v1h-3zM774 502h5v1h-5zM774 507h3v1h-3zM774 512h3v1h-3zM774 516h32v3h-32zM774 519h12v1h-12zM774 544h13v1h-13zM774 552h7v1h-7zM774 556h1v1h-1zM774 560h1v1h-1zM774 566h3v1h-3zM775 496h3v1h-3zM775 501h1v1h-1zM775 503h4v1h-4zM775 506h3v1h-3zM775 508h2v1h-2zM775 509h3v1h-3zM775 513h3v1h-3zM775 514h23v2h-23zM775 565h1v1h-1zM775 567h1v1h-1zM776 495h1v1h-1zM776 497h2v2h-2zM776 504h3v2h-3zM776 510h9v1h-9zM776 520h30v1h-30zM776 521h52v1h-52zM777 511h16v1h-16zM777 562h3v1h-3zM778 561h2v1h-2zM779 512h17v1h-17zM780 507h5v3h-5zM780 513h13v1h-13zM781 497h4v2h-4zM781 501h12v2h-12zM781 503h5v1h-5zM781 506h4v1h-4zM782 496h3v1h-3zM782 499h3v2h-3zM782 504h3v2h-3zM782 547h1v1h-1zM783 493h2v3h-2zM783 535h191v1h-191zM783 538h47v1h-47zM783 539h45v1h-45zM784 536h87v1h-87zM784 537h46v1h-46zM784 540h16v1h-16zM784 541h17v1h-17zM784 549h2v2h-2zM785 545h2v1h-2zM785 546h3v1h-3zM786 510h12v1h-12zM786 547h1v1h-1zM787 503h6v1h-6zM787 508h5v1h-5zM787 519h19v1h-19zM787 554h2v1h-2zM787 555h4v1h-4zM788 490h3v1h-3zM788 491h2v1h-2zM788 500h2v1h-2zM788 504h5v3h-5zM788 507h4v1h-4zM788 509h10v1h-10zM788 553h1v1h-1zM789 544h12v1h-12zM789 550h2v1h-2zM789 551h3v1h-3zM789 556h2v1h-2zM791 498h2v2h-2zM791 500h1v1h-1zM791 545h10v1h-10zM792 546h9v4h-9zM792 554h4v1h-4zM793 550h7v2h-7zM793 553h4v1h-4zM793 555h2v2h-2zM794 502h2v2h-2zM794 508h2v1h-2zM794 511h3v1h-3zM794 513h4v1h-4zM794 552h6v1h-6zM795 557h5v1h-5zM795 558h2v1h-2zM795 563h2v2h-2zM796 562h1v1h-1zM798 500h3v1h-3zM798 504h8v1h-8zM798 505h3v1h-3zM798 553h2v4h-2zM798 561h2v2h-2zM798 565h2v2h-2zM799 499h1v1h-1zM799 501h1v1h-1zM799 511h7v1h-7zM799 512h9v1h-9zM799 513h5v1h-5zM799 514h6v1h-6zM799 515h7v1h-7zM799 567h1v1h-1zM801 503h4v1h-4zM801 509h4v2h-4zM802 499h2v2h-2zM802 502h4v1h-4zM802 540h26v1h-26zM802 541h39v1h-39zM802 543h42v1h-42zM803 501h3v1h-3zM803 505h2v1h-2zM803 506h3v2h-3zM803 544h41v1h-41zM803 545h13v2h-13zM804 508h1v1h-1zM804 547h12v1h-12zM804 548h13v2h-13zM804 550h18v1h-18zM804 551h5v2h-5zM804 554h5v2h-5zM804 556h3v2h-3zM805 553h4v1h-4zM806 508h3v1h-3zM806 513h3v1h-3zM806 561h3v2h-3zM807 507h1v1h-1zM807 509h1v1h-1zM807 514h19v1h-19zM807 563h2v1h-2zM807 566h2v2h-2zM808 515h28v1h-28zM808 520h7v1h-7zM808 558h4v1h-4zM808 559h2v1h-2zM808 565h1v1h-1zM809 511h3v1h-3zM809 516h26v1h-26zM809 517h25v1h-25zM809 518h16v1h-16zM809 519h6v1h-6zM810 510h5v1h-5zM810 512h1v1h-1zM810 513h3v1h-3zM810 557h3v1h-3zM811 502h3v1h-3zM811 506h4v1h-4zM811 509h2v1h-2zM811 551h15v1h-15zM811 552h3v1h-3zM811 554h3v1h-3zM811 555h4v1h-4zM811 556h3v1h-3zM812 501h3v1h-3zM812 503h1v1h-1zM812 505h2v1h-2zM812 507h2v1h-2zM812 553h2v1h-2zM812 560h3v1h-3zM813 499h2v2h-2zM813 511h2v1h-2zM813 559h1v1h-1zM813 561h1v1h-1zM814 512h1v1h-1zM815 513h12v1h-12zM815 553h5v1h-5zM816 509h8v1h-8zM816 512h18v1h-18zM816 519h17v1h-17zM816 520h12v1h-12zM816 552h6v1h-6zM816 554h4v1h-4zM816 558h2v2h-2zM816 562h4v2h-4zM817 503h3v1h-3zM817 508h16v1h-16zM817 510h10v1h-10zM817 511h16v1h-16zM818 499h3v1h-3zM818 502h1v1h-1zM818 504h1v1h-1zM818 507h9v1h-9zM818 547h9v1h-9zM818 548h7v1h-7zM818 549h5v1h-5zM818 555h3v1h-3zM819 498h1v1h-1zM819 500h1v1h-1zM819 556h2v1h-2zM819 557h3v1h-3zM820 558h1v1h-1zM821 545h23v1h-23zM821 546h9v1h-9zM821 568h2v2h-2zM821 570h1v1h-1zM822 506h10v1h-10zM823 495h4v1h-4zM823 496h5v1h-5zM823 497h1v1h-1zM823 499h2v1h-2zM823 500h3v1h-3zM823 557h4v2h-4zM823 559h2v1h-2zM824 552h2v2h-2zM824 556h2v1h-2zM825 502h6v2h-6zM825 505h2v1h-2zM825 509h2v1h-2zM826 518h7v1h-7zM827 501h1v1h-1zM828 499h3v1h-3zM828 505h4v1h-4zM828 509h5v2h-5zM828 513h7v1h-7zM828 514h21v1h-21zM828 529h43v1h-43zM828 547h2v1h-2zM828 550h2v2h-2zM829 500h2v2h-2zM829 507h3v1h-3zM829 520h43v2h-43zM829 552h1v1h-1zM830 504h2v1h-2zM830 522h4v1h-4zM830 539h22v1h-22zM830 540h14v1h-14zM831 537h39v1h-39zM831 546h10v2h-10zM831 548h6v1h-6zM831 549h11v1h-11zM831 550h10v1h-10zM831 551h7v1h-7zM832 538h37v1h-37zM832 552h4v1h-4zM832 557h3v2h-3zM833 555h4v1h-4zM833 556h3v1h-3zM833 562h3v1h-3zM834 519h37v1h-37zM834 553h2v2h-2zM834 559h3v1h-3zM834 561h3v1h-3zM834 568h3v1h-3zM835 518h36v1h-36zM835 522h37v1h-37zM835 560h2v1h-2zM835 564h1v1h-1zM835 565h2v2h-2zM835 567h1v1h-1zM835 569h1v1h-1zM836 502h2v2h-2zM837 504h1v1h-1zM837 510h4v1h-4zM837 513h30v1h-30zM837 515h12v1h-12zM837 516h34v1h-34zM837 517h9v1h-9zM838 509h1v1h-1zM838 511h4v1h-4zM838 512h15v1h-15zM839 548h9v1h-9zM839 557h3v1h-3zM840 495h3v1h-3zM840 555h3v1h-3zM840 556h2v1h-2zM840 558h1v1h-1zM841 492h2v2h-2zM841 494h1v1h-1zM841 496h2v1h-2zM841 554h6v1h-6zM842 541h1v2h-1zM842 546h10v1h-10zM842 547h6v1h-6zM842 553h3v1h-3zM843 502h3v1h-3zM843 503h6v1h-6zM843 504h4v2h-4zM843 506h3v2h-3zM843 508h6v2h-6zM843 510h2v1h-2zM843 511h3v1h-3zM843 552h1v1h-1zM844 496h3v1h-3zM844 497h2v3h-2zM845 540h7v3h-7zM845 543h14v1h-14zM845 545h7v1h-7zM845 550h7v2h-7zM845 555h7v2h-7zM846 544h2v1h-2zM846 549h6v1h-6zM846 562h2v2h-2zM847 502h2v1h-2zM847 517h25v1h-25zM847 559h2v2h-2zM847 561h1v1h-1zM848 506h5v2h-5zM849 568h3v1h-3zM850 502h3v1h-3zM850 505h3v1h-3zM850 508h6v1h-6zM850 509h5v1h-5zM850 515h21v1h-21zM850 544h8v1h-8zM850 547h2v2h-2zM850 552h2v3h-2zM850 557h1v1h-1zM850 567h1v1h-1zM850 569h1v1h-1zM851 501h2v1h-2zM851 503h2v2h-2zM851 510h2v1h-2zM851 511h1v1h-1zM851 514h16v1h-16zM853 539h11v1h-11zM854 507h1v1h-1zM854 512h17v1h-17zM854 540h7v1h-7zM854 541h5v2h-5zM854 545h4v1h-4zM854 547h6v1h-6zM854 552h5v1h-5zM855 499h3v1h-3zM855 505h8v1h-8zM855 546h5v1h-5zM855 548h3v2h-3zM855 551h4v1h-4zM855 553h1v1h-1zM855 567h2v2h-2zM856 498h1v1h-1zM856 500h1v1h-1zM856 506h15v1h-15zM856 511h1v1h-1zM856 550h1v1h-1zM856 569h1v1h-1zM858 503h5v2h-5zM858 507h12v1h-12zM858 508h8v1h-8zM859 509h11v2h-11zM859 511h12v1h-12zM860 502h6v1h-6zM861 501h5v1h-5zM861 560h2v2h-2zM862 543h8v1h-8zM862 544h7v1h-7zM862 545h1v1h-1zM863 495h2v1h-2zM863 496h3v1h-3zM864 500h4v1h-4zM864 503h2v1h-2zM865 504h1v1h-1zM865 539h6v1h-6zM865 540h7v3h-7zM865 545h6v1h-6zM865 546h7v1h-7zM865 547h6v1h-6zM865 548h4v2h-4zM865 560h4v1h-4zM865 561h3v1h-3zM866 499h2v1h-2zM866 505h2v1h-2zM866 550h4v1h-4zM866 551h3v1h-3zM867 508h3v1h-3zM867 552h1v1h-1zM867 559h1v1h-1zM868 502h2v2h-2zM868 513h3v1h-3zM869 504h1v1h-1zM869 505h2v1h-2zM869 514h2v1h-2zM872 519h10v1h-10zM872 525h101v1h-101zM872 529h143v1h-143zM873 507h3v1h-3zM873 509h3v1h-3zM873 510h4v2h-4zM873 512h12v1h-12zM873 513h11v1h-11zM873 514h39v1h-39zM873 515h14v1h-14zM873 518h3v1h-3zM873 520h14v1h-14zM873 523h8v1h-8zM873 524h50v1h-50zM873 527h101v1h-101zM873 528h100v1h-100zM873 530h101v1h-101zM873 531h141v1h-141zM873 532h50v1h-50zM873 533h51v2h-51zM873 536h50v1h-50zM873 537h18v1h-18zM873 538h6v2h-6zM873 540h5v1h-5zM873 541h20v1h-20zM873 542h19v2h-19zM873 544h18v2h-18zM873 546h20v1h-20zM873 547h21v1h-21zM873 551h6v2h-6zM873 560h3v1h-3zM873 561h2v1h-2zM873 563h3v1h-3zM873 564h2v2h-2zM874 500h3v1h-3zM874 501h2v1h-2zM874 502h7v2h-7zM874 504h8v1h-8zM874 505h2v2h-2zM874 508h2v1h-2zM874 516h13v2h-13zM874 521h34v1h-34zM874 522h7v1h-7zM874 548h2v1h-2zM874 553h5v1h-5zM874 562h1v1h-1zM875 494h2v1h-2zM875 495h3v2h-3zM875 499h1v1h-1zM875 554h4v1h-4zM876 550h2v1h-2zM876 555h3v1h-3zM876 556h2v1h-2zM877 518h5v1h-5zM877 548h2v1h-2zM878 497h3v2h-3zM878 501h2v1h-2zM878 505h3v7h-3zM879 496h1v1h-1zM879 499h1v1h-1zM880 538h42v1h-42zM880 539h13v1h-13zM880 540h41v1h-41zM880 555h10v1h-10zM880 558h4v1h-4zM880 560h3v1h-3zM880 561h2v1h-2zM880 562h8v1h-8zM881 548h13v1h-13zM881 549h11v3h-11zM881 552h10v2h-10zM881 554h9v1h-9zM881 556h9v1h-9zM881 557h3v1h-3zM881 559h2v1h-2zM881 563h7v1h-7zM881 564h2v1h-2zM882 523h41v1h-41zM883 511h1v1h-1zM883 518h41v1h-41zM883 519h4v1h-4zM883 522h82v1h-82zM884 561h1v1h-1zM885 497h2v1h-2zM885 498h3v2h-3zM885 504h2v2h-2zM885 506h3v1h-3zM885 507h4v1h-4zM885 508h9v1h-9zM885 509h11v1h-11zM886 500h1v1h-1zM886 513h27v1h-27zM886 557h4v1h-4zM886 567h4v1h-4zM887 568h3v1h-3zM888 510h27v1h-27zM888 517h8v1h-8zM888 520h20v1h-20zM888 558h1v1h-1zM888 566h2v1h-2zM889 501h6v1h-6zM889 502h5v1h-5zM889 503h6v1h-6zM889 505h6v1h-6zM889 511h25v2h-25zM889 515h25v1h-25zM889 516h34v1h-34zM889 519h24v1h-24zM890 495h4v1h-4zM890 499h5v1h-5zM890 504h5v1h-5zM890 506h5v2h-5zM891 494h3v1h-3zM891 496h3v1h-3zM891 498h3v1h-3zM891 500h4v1h-4zM892 493h2v1h-2zM892 497h2v1h-2zM892 559h5v1h-5zM893 537h29v1h-29zM893 558h4v1h-4zM894 539h27v1h-27zM894 541h28v1h-28zM894 552h3v1h-3zM894 554h5v2h-5zM895 542h27v1h-27zM895 546h26v1h-26zM895 547h8v2h-8zM895 549h5v1h-5zM895 550h4v1h-4zM895 551h3v1h-3zM895 553h1v1h-1zM895 556h5v1h-5zM895 557h6v1h-6zM896 543h8v1h-8zM896 544h7v2h-7zM896 566h3v1h-3zM896 567h2v1h-2zM897 517h26v1h-26zM897 565h3v1h-3zM898 499h7v1h-7zM898 506h14v1h-14zM898 564h1v1h-1zM899 498h6v1h-6zM899 500h6v1h-6zM899 501h10v1h-10zM899 502h11v4h-11zM899 507h15v3h-15zM899 558h2v1h-2zM900 493h3v1h-3zM900 497h10v1h-10zM901 492h1v1h-1zM901 494h1v1h-1zM901 496h1v1h-1zM901 549h6v1h-6zM902 550h1v1h-1zM903 496h7v1h-7zM904 545h7v1h-7zM904 547h17v1h-17zM905 543h7v1h-7zM905 548h12v1h-12zM905 550h2v1h-2zM905 561h3v1h-3zM905 562h2v1h-2zM906 500h3v1h-3zM906 544h5v1h-5zM906 551h5v1h-5zM906 552h2v1h-2zM906 557h2v2h-2zM906 559h1v1h-1zM907 493h5v1h-5zM907 495h3v1h-3zM907 498h3v1h-3zM907 499h2v1h-2zM908 494h4v1h-4zM908 554h3v1h-3zM909 549h6v1h-6zM909 550h2v1h-2zM909 552h2v2h-2zM909 555h2v1h-2zM909 560h2v2h-2zM909 562h1v1h-1zM909 567h6v1h-6zM910 520h2v1h-2zM910 521h13v1h-13zM910 556h1v1h-1zM910 566h1v1h-1zM910 568h1v1h-1zM912 499h1v1h-1zM912 500h2v1h-2zM912 501h6v1h-6zM912 545h9v1h-9zM912 550h3v1h-3zM912 555h3v3h-3zM913 543h4v2h-4zM913 551h2v1h-2zM913 552h1v1h-1zM913 554h2v1h-2zM913 558h2v1h-2zM913 560h2v2h-2zM913 566h1v1h-1zM913 568h1v1h-1zM914 493h2v2h-2zM914 502h5v1h-5zM914 519h9v2h-9zM915 492h1v1h-1zM915 498h4v1h-4zM915 503h4v2h-4zM915 507h4v1h-4zM915 508h8v1h-8zM915 511h4v1h-4zM915 512h5v2h-5zM915 514h8v1h-8zM915 515h9v1h-9zM916 495h4v1h-4zM916 496h2v2h-2zM916 499h3v1h-3zM916 505h4v2h-4zM916 509h7v2h-7zM917 494h6v1h-6zM917 500h1v1h-1zM917 564h3v1h-3zM917 565h4v1h-4zM918 543h3v2h-3zM918 548h3v1h-3zM918 549h5v1h-5zM918 550h4v1h-4zM918 554h3v2h-3zM918 561h2v1h-2zM918 562h3v1h-3zM918 563h1v1h-1zM919 551h1v1h-1zM919 553h2v1h-2zM919 556h1v1h-1zM919 566h2v1h-2zM920 500h3v1h-3zM920 511h4v1h-4zM921 493h2v1h-2zM921 499h2v1h-2zM921 503h2v3h-2zM921 506h3v1h-3zM921 507h2v1h-2zM921 512h3v1h-3zM921 513h2v1h-2zM924 516h11v1h-11zM924 520h41v1h-41zM924 521h42v1h-42zM924 523h32v2h-32zM924 536h50v1h-50zM925 502h6v1h-6zM925 503h4v1h-4zM925 504h3v1h-3zM925 509h22v1h-22zM925 510h5v1h-5zM925 511h6v2h-6zM925 513h5v3h-5zM925 517h10v1h-10zM925 519h40v1h-40zM925 532h60v1h-60zM925 533h49v2h-49zM925 537h49v1h-49zM925 538h48v1h-48zM925 539h70v1h-70zM925 540h48v1h-48zM925 541h45v2h-45zM925 543h34v1h-34zM925 544h13v1h-13zM925 545h3v1h-3zM925 546h2v1h-2zM925 547h3v3h-3zM925 550h4v2h-4zM925 552h6v1h-6zM926 518h39v1h-39zM926 553h1v1h-1zM927 508h9v1h-9zM928 497h3v1h-3zM928 500h3v1h-3zM928 507h1v1h-1zM928 553h3v1h-3zM929 496h1v1h-1zM929 498h1v1h-1zM929 499h2v1h-2zM929 501h2v1h-2zM929 545h9v1h-9zM930 546h7v1h-7zM930 547h8v1h-8zM930 548h11v1h-11zM930 549h10v1h-10zM930 550h8v2h-8zM930 555h2v1h-2zM930 556h4v1h-4zM930 557h6v2h-6zM930 559h1v1h-1zM932 510h4v1h-4zM932 514h3v2h-3zM933 552h8v1h-8zM934 507h2v1h-2zM935 553h6v1h-6zM935 555h3v1h-3zM935 556h5v1h-5zM935 567h3v1h-3zM935 568h2v1h-2zM936 517h11v1h-11zM936 554h3v1h-3zM936 560h2v2h-2zM937 496h2v2h-2zM937 507h8v1h-8zM937 508h11v1h-11zM937 510h2v1h-2zM937 513h8v2h-8zM937 559h1v1h-1zM938 503h4v1h-4zM938 504h5v2h-5zM938 506h6v1h-6zM938 512h7v1h-7zM938 515h25v1h-25zM938 516h18v1h-18zM938 557h3v1h-3zM939 492h2v1h-2zM939 493h3v1h-3zM939 511h4v1h-4zM939 547h1v1h-1zM940 510h5v1h-5zM940 544h18v1h-18zM941 545h3v1h-3zM942 492h3v1h-3zM942 494h3v1h-3zM942 499h3v1h-3zM943 493h2v1h-2zM943 495h2v1h-2zM943 498h1v1h-1zM943 500h1v1h-1zM943 547h3v1h-3zM943 548h2v1h-2zM944 556h2v2h-2zM946 507h1v1h-1zM946 545h24v1h-24zM946 546h4v1h-4zM946 549h13v1h-13zM946 550h6v1h-6zM946 551h2v1h-2zM946 554h4v1h-4zM946 562h5v2h-5zM947 514h15v1h-15zM947 547h4v2h-4zM947 553h1v1h-1zM947 555h3v1h-3zM947 561h4v1h-4zM948 513h14v1h-14zM948 517h8v1h-8zM949 502h7v1h-7zM949 503h3v1h-3zM949 506h2v2h-2zM949 508h7v5h-7zM949 560h1v1h-1zM950 499h3v1h-3zM950 504h1v1h-1zM950 551h13v1h-13zM951 498h2v1h-2zM951 500h2v1h-2zM951 501h5v1h-5zM952 546h18v3h-18zM952 556h6v1h-6zM952 557h2v1h-2zM952 560h2v2h-2zM953 503h3v1h-3zM953 505h3v2h-3zM953 550h7v1h-7zM953 552h7v1h-7zM953 553h5v1h-5zM954 496h2v2h-2zM954 504h2v1h-2zM954 507h2v1h-2zM954 565h2v2h-2zM955 554h3v2h-3zM955 562h3v1h-3zM956 557h2v3h-2zM956 560h1v1h-1zM956 561h2v1h-2zM956 563h1v1h-1zM957 505h4v2h-4zM957 523h16v2h-16zM958 507h4v1h-4zM958 508h5v3h-5zM958 511h6v1h-6zM958 512h4v1h-4zM958 516h4v1h-4zM959 517h3v1h-3zM960 492h2v2h-2zM960 555h8v1h-8zM961 543h8v1h-8zM961 544h9v1h-9zM961 550h9v1h-9zM961 552h9v1h-9zM961 554h1v1h-1zM961 556h6v1h-6zM961 561h7v1h-7zM961 568h3v1h-3zM962 502h3v1h-3zM962 549h8v1h-8zM962 557h5v1h-5zM962 560h5v1h-5zM962 562h1v1h-1zM962 567h1v1h-1zM962 569h1v1h-1zM963 499h1v1h-1zM963 500h2v2h-2zM963 503h1v1h-1zM963 505h2v2h-2zM963 553h7v1h-7zM963 554h6v1h-6zM964 495h2v2h-2zM964 504h1v1h-1zM964 562h1v1h-1zM965 551h5v1h-5zM965 558h2v1h-2zM965 565h2v2h-2zM966 519h7v1h-7zM966 562h1v1h-1zM967 515h5v2h-5zM967 518h6v1h-6zM967 520h6v2h-6zM968 498h4v2h-4zM968 510h5v1h-5zM968 511h6v1h-6zM968 513h5v2h-5zM968 517h5v1h-5zM968 522h5v1h-5zM969 495h3v1h-3zM969 496h2v1h-2zM969 497h3v1h-3zM969 500h3v4h-3zM969 504h2v1h-2zM969 505h3v1h-3zM969 508h3v1h-3zM969 509h4v1h-4zM969 512h4v1h-4zM970 494h1v1h-1zM970 506h2v2h-2zM971 541h2v3h-2zM971 547h2v1h-2zM971 548h3v1h-3zM971 554h3v1h-3zM971 556h2v1h-2zM971 557h18v1h-18zM971 559h3v2h-3zM972 553h1v1h-1zM972 555h1v1h-1zM972 558h1v1h-1zM974 521h10v1h-10zM974 528h39v1h-39zM974 540h20v2h-20zM974 542h7v1h-7zM974 544h7v2h-7zM974 549h6v1h-6zM974 553h18v1h-18zM974 558h16v1h-16zM975 519h9v2h-9zM975 522h9v1h-9zM975 524h9v1h-9zM975 526h37v2h-37zM975 530h13v1h-13zM975 533h10v1h-10zM975 534h39v3h-39zM975 537h40v1h-40zM975 538h39v1h-39zM975 543h6v1h-6zM975 546h16v2h-16zM975 548h5v1h-5zM975 550h5v2h-5zM975 552h3v1h-3zM975 554h5v3h-5zM975 559h6v1h-6zM975 560h3v1h-3zM975 564h3v2h-3zM976 514h8v5h-8zM976 523h8v1h-8zM976 525h10v1h-10zM976 561h2v1h-2zM976 563h2v1h-2zM976 566h2v2h-2zM977 503h7v2h-7zM977 509h8v1h-8zM977 510h7v1h-7zM977 513h7v1h-7zM977 568h1v1h-1zM978 511h6v1h-6zM979 492h3v1h-3zM979 499h4v4h-4zM979 505h4v1h-4zM979 506h3v1h-3zM979 508h5v1h-5zM979 512h5v1h-5zM979 552h13v1h-13zM980 493h2v1h-2zM980 496h2v1h-2zM980 497h3v1h-3zM980 498h4v1h-4zM980 507h3v1h-3zM981 489h2v1h-2zM981 490h3v1h-3zM981 491h1v1h-1zM981 551h11v1h-11zM982 542h14v3h-14zM982 545h16v1h-16zM982 548h10v1h-10zM983 549h9v2h-9zM983 554h9v3h-9zM983 559h7v1h-7zM983 561h6v2h-6zM983 565h7v2h-7zM983 567h6v1h-6zM984 492h3v1h-3zM984 560h4v1h-4zM984 563h3v2h-3zM985 491h2v1h-2zM985 512h5v1h-5zM985 522h3v1h-3zM985 523h21v1h-21zM986 506h2v2h-2zM986 513h3v1h-3zM986 516h18v1h-18zM986 517h3v1h-3zM986 532h28v1h-28zM986 533h166v1h-166zM987 508h1v1h-1zM987 518h1v1h-1zM987 524h27v1h-27zM987 525h28v1h-28zM988 504h3v1h-3zM988 511h1v1h-1zM989 505h2v1h-2zM989 508h6v1h-6zM989 515h16v1h-16zM989 530h16v1h-16zM990 509h12v1h-12zM990 517h14v1h-14zM990 518h13v1h-13zM990 519h14v1h-14zM990 520h10v2h-10zM990 522h16v1h-16zM991 490h1v1h-1zM991 491h2v2h-2zM991 506h9v1h-9zM991 507h4v1h-4zM991 510h12v3h-12zM992 498h2v2h-2zM992 505h2v1h-2zM992 513h13v1h-13zM993 497h1v1h-1zM993 514h12v1h-12zM993 546h21v1h-21zM993 547h3v1h-3zM993 549h3v1h-3zM993 553h3v1h-3zM993 562h3v1h-3zM994 548h2v1h-2zM994 550h1v1h-1zM994 551h2v2h-2zM994 554h2v4h-2zM994 561h2v1h-2zM994 565h2v2h-2zM995 497h5v2h-5zM995 502h5v1h-5zM995 505h6v1h-6zM996 496h3v1h-3zM996 501h4v1h-4zM996 503h6v2h-6zM996 507h6v1h-6zM996 508h9v1h-9zM997 495h3v1h-3zM997 499h3v2h-3zM998 494h3v1h-3zM998 539h16v1h-16zM999 540h28v1h-28zM999 542h16v1h-16zM999 543h24v1h-24zM999 544h15v1h-15zM999 547h15v2h-15zM999 549h3v1h-3zM999 554h11v1h-11zM999 555h3v1h-3zM999 558h4v2h-4zM999 560h3v1h-3zM999 561h10v1h-10zM1000 541h14v1h-14zM1000 557h3v1h-3zM1000 562h8v1h-8zM1000 563h3v1h-3zM1001 521h4v1h-4zM1001 545h17v1h-17zM1001 551h7v2h-7zM1001 553h9v1h-9zM1001 564h2v1h-2zM1002 520h3v1h-3zM1002 550h12v1h-12zM1003 507h2v1h-2zM1003 549h11v1h-11zM1004 509h3v1h-3zM1004 510h2v1h-2zM1004 555h9v1h-9zM1004 556h10v1h-10zM1004 557h9v1h-9zM1005 517h2v2h-2zM1005 558h7v1h-7zM1005 559h8v1h-8zM1005 560h4v1h-4zM1005 565h3v1h-3zM1005 566h4v2h-4zM1006 516h1v1h-1zM1006 530h8v1h-8zM1006 563h2v2h-2zM1006 568h2v1h-2zM1008 497h4v1h-4zM1008 500h4v4h-4zM1008 506h3v1h-3zM1008 511h5v1h-5zM1008 515h4v3h-4zM1008 518h6v2h-6zM1008 520h5v1h-5zM1008 521h7v1h-7zM1008 522h6v2h-6zM1009 496h2v1h-2zM1009 498h3v2h-3zM1009 504h2v1h-2zM1009 505h1v1h-1zM1009 507h3v4h-3zM1009 512h4v3h-4zM1010 552h4v1h-4zM1010 560h3v1h-3zM1010 561h2v1h-2zM1010 567h4v1h-4zM1011 551h3v1h-3zM1011 553h3v2h-3zM1011 563h3v2h-3zM1011 565h2v1h-2zM1011 566h3v1h-3zM1012 562h1v1h-1zM1015 524h32v1h-32zM1015 528h114v1h-114zM1015 541h13v1h-13zM1015 546h3v3h-3zM1016 502h4v1h-4zM1016 503h2v1h-2zM1016 516h23v1h-23zM1016 517h27v1h-27zM1016 522h31v2h-31zM1016 525h137v2h-137zM1016 527h32v1h-32zM1016 529h113v3h-113zM1016 532h66v1h-66zM1016 534h11v3h-11zM1016 537h66v1h-66zM1016 539h11v1h-11zM1016 542h24v1h-24zM1016 544h7v1h-7zM1016 549h2v1h-2zM1016 550h8v1h-8zM1016 552h2v1h-2zM1016 553h7v1h-7zM1016 554h3v1h-3zM1016 555h2v1h-2zM1016 556h1v1h-1zM1017 494h3v1h-3zM1017 497h3v1h-3zM1017 500h3v2h-3zM1017 504h2v1h-2zM1017 505h3v3h-3zM1017 508h13v2h-13zM1017 510h4v1h-4zM1017 511h3v1h-3zM1017 513h3v1h-3zM1017 514h29v2h-29zM1017 518h4v1h-4zM1017 519h30v3h-30zM1017 538h10v1h-10zM1017 551h7v1h-7zM1018 493h1v1h-1zM1018 495h1v2h-1zM1018 498h2v1h-2zM1018 499h3v1h-3zM1018 512h2v1h-2zM1019 545h22v1h-22zM1019 546h17v1h-17zM1019 547h6v1h-6zM1019 552h4v1h-4zM1019 559h2v1h-2zM1019 560h3v1h-3zM1020 548h4v2h-4zM1021 505h8v1h-8zM1021 554h2v2h-2zM1022 504h8v1h-8zM1022 510h7v1h-7zM1022 511h23v1h-23zM1022 512h12v1h-12zM1022 513h22v1h-22zM1022 518h24v1h-24zM1023 494h1v1h-1zM1023 495h2v1h-2zM1023 496h6v1h-6zM1023 497h2v1h-2zM1023 498h6v2h-6zM1023 500h7v1h-7zM1023 501h3v2h-3zM1023 503h8v1h-8zM1023 506h6v1h-6zM1023 507h3v1h-3zM1025 543h15v2h-15zM1025 560h2v3h-2zM1026 494h2v1h-2zM1026 495h3v1h-3zM1026 553h5v1h-5zM1026 563h2v2h-2zM1027 497h2v1h-2zM1027 501h3v1h-3zM1027 507h2v1h-2zM1027 547h13v1h-13zM1027 552h4v1h-4zM1027 554h4v1h-4zM1027 555h5v1h-5zM1028 502h2v1h-2zM1028 534h88v1h-88zM1028 535h124v1h-124zM1028 536h54v1h-54zM1028 538h54v2h-54zM1028 548h12v2h-12zM1028 556h3v1h-3zM1029 540h52v1h-52zM1029 541h3v1h-3zM1029 550h11v1h-11zM1029 551h3v1h-3zM1030 557h2v2h-2zM1031 494h3v2h-3zM1031 496h2v1h-2zM1031 505h6v1h-6zM1031 506h7v1h-7zM1031 509h7v1h-7zM1031 510h15v1h-15zM1031 559h1v1h-1zM1031 564h4v1h-4zM1032 503h5v2h-5zM1032 507h6v1h-6zM1032 508h5v1h-5zM1032 563h3v1h-3zM1033 502h4v1h-4zM1033 541h47v1h-47zM1033 554h3v2h-3zM1033 556h1v1h-1zM1033 565h1v1h-1zM1034 551h6v1h-6zM1034 552h2v2h-2zM1034 558h2v2h-2zM1035 500h1v1h-1zM1035 501h2v1h-2zM1035 512h9v1h-9zM1036 562h2v1h-2zM1036 563h3v1h-3zM1037 546h18v1h-18zM1037 557h3v1h-3zM1037 568h3v1h-3zM1037 569h2v1h-2zM1038 501h3v1h-3zM1038 502h5v1h-5zM1038 552h2v1h-2zM1038 556h1v1h-1zM1038 558h2v1h-2zM1039 498h3v2h-3zM1039 500h2v1h-2zM1039 503h4v1h-4zM1039 504h3v3h-3zM1039 507h4v2h-4zM1039 509h6v1h-6zM1040 492h2v4h-2zM1040 496h3v2h-3zM1040 516h3v1h-3zM1041 542h7v1h-7zM1041 543h23v1h-23zM1041 544h22v1h-22zM1041 547h36v1h-36zM1041 549h16v2h-16zM1041 551h22v2h-22zM1041 553h16v1h-16zM1041 554h14v1h-14zM1042 545h22v1h-22zM1042 548h22v1h-22zM1042 555h13v1h-13zM1042 556h6v1h-6zM1042 557h5v1h-5zM1042 560h7v1h-7zM1043 558h1v1h-1zM1043 559h7v1h-7zM1043 561h4v1h-4zM1045 558h2v1h-2zM1045 562h1v1h-1zM1045 566h4v1h-4zM1046 565h4v1h-4zM1049 510h5v1h-5zM1049 511h8v1h-8zM1049 512h10v1h-10zM1049 519h6v1h-6zM1049 520h62v1h-62zM1049 521h80v1h-80zM1049 522h104v1h-104zM1049 523h80v1h-80zM1049 524h79v1h-79zM1049 527h104v1h-104zM1049 542h30v1h-30zM1050 509h4v1h-4zM1050 513h1v1h-1zM1050 517h79v1h-79zM1050 518h6v1h-6zM1050 556h4v2h-4zM1051 516h1v1h-1zM1053 558h2v2h-2zM1054 513h6v4h-6zM1055 510h6v1h-6zM1056 505h3v1h-3zM1057 504h1v1h-1zM1057 506h1v1h-1zM1057 519h4v1h-4zM1057 546h19v1h-19zM1058 508h2v2h-2zM1058 518h71v1h-71zM1058 549h5v2h-5zM1058 565h3v1h-3zM1059 553h4v1h-4zM1059 566h2v1h-2zM1060 506h2v2h-2zM1060 554h3v5h-3zM1060 559h2v1h-2zM1060 560h3v2h-3zM1062 513h33v1h-33zM1062 519h49v1h-49zM1063 499h2v1h-2zM1063 500h5v1h-5zM1063 501h2v1h-2zM1063 502h5v3h-5zM1063 505h10v1h-10zM1063 511h6v2h-6zM1063 514h66v2h-66zM1063 516h47v1h-47zM1064 495h2v3h-2zM1064 498h1v1h-1zM1064 506h5v1h-5zM1064 507h2v1h-2zM1064 508h4v1h-4zM1064 509h5v2h-5zM1065 543h12v3h-12zM1065 548h7v2h-7zM1066 501h2v1h-2zM1067 495h3v1h-3zM1067 496h2v1h-2zM1067 557h4v1h-4zM1068 550h4v1h-4zM1068 551h3v1h-3zM1068 552h4v1h-4zM1068 553h5v1h-5zM1068 556h1v1h-1zM1068 558h3v1h-3zM1069 504h3v1h-3zM1070 502h4v1h-4zM1070 503h3v1h-3zM1070 554h3v1h-3zM1071 495h3v1h-3zM1071 496h2v3h-2zM1071 501h3v1h-3zM1071 506h5v2h-5zM1071 508h4v1h-4zM1071 509h3v1h-3zM1072 494h1v1h-1zM1072 500h1v1h-1zM1072 510h2v1h-2zM1072 511h23v1h-23zM1072 512h22v1h-22zM1072 563h4v2h-4zM1073 548h6v1h-6zM1073 549h7v1h-7zM1073 550h6v1h-6zM1073 551h3v2h-3zM1073 562h3v1h-3zM1074 561h2v1h-2zM1074 565h1v1h-1zM1076 510h19v1h-19zM1079 502h4v2h-4zM1079 504h11v1h-11zM1079 506h12v1h-12zM1079 562h3v1h-3zM1080 499h4v1h-4zM1080 501h4v1h-4zM1080 505h11v1h-11zM1080 507h30v1h-30zM1080 563h2v1h-2zM1081 492h2v2h-2zM1081 498h3v1h-3zM1081 500h3v1h-3zM1081 508h43v1h-43zM1081 509h28v1h-28zM1082 546h3v1h-3zM1082 560h3v1h-3zM1083 536h70v1h-70zM1083 537h3v2h-3zM1083 539h33v1h-33zM1083 540h32v1h-32zM1083 541h4v2h-4zM1083 545h1v1h-1zM1083 547h1v1h-1zM1083 559h1v1h-1zM1083 561h1v1h-1zM1084 532h69v1h-69zM1085 502h3v1h-3zM1085 503h5v1h-5zM1085 543h2v2h-2zM1085 550h2v2h-2zM1085 554h2v3h-2zM1086 493h3v1h-3zM1086 495h3v1h-3zM1086 496h4v1h-4zM1086 501h3v1h-3zM1087 492h1v1h-1zM1087 494h1v1h-1zM1087 497h3v1h-3zM1087 498h2v2h-2zM1087 500h3v1h-3zM1088 537h65v2h-65zM1088 541h3v1h-3zM1088 542h2v2h-2zM1088 544h12v1h-12zM1088 545h3v2h-3zM1088 549h3v1h-3zM1088 554h3v1h-3zM1088 561h3v1h-3zM1089 547h2v2h-2zM1089 553h1v1h-1zM1089 555h1v1h-1zM1089 560h2v1h-2zM1091 543h2v1h-2zM1092 499h3v1h-3zM1092 502h1v1h-1zM1092 503h2v3h-2zM1092 545h1v1h-1zM1092 554h5v1h-5zM1092 555h3v1h-3zM1092 556h2v1h-2zM1093 495h2v2h-2zM1093 498h1v1h-1zM1093 500h1v1h-1zM1093 506h1v1h-1zM1093 541h23v1h-23zM1093 547h7v1h-7zM1093 548h10v1h-10zM1093 549h4v2h-4zM1094 543h6v1h-6zM1094 545h6v1h-6zM1094 546h5v1h-5zM1094 551h2v1h-2zM1094 553h3v1h-3zM1094 561h3v1h-3zM1095 493h3v1h-3zM1095 505h7v1h-7zM1095 506h11v1h-11zM1095 542h21v1h-21zM1095 552h2v1h-2zM1095 560h1v1h-1zM1095 562h1v1h-1zM1096 492h1v1h-1zM1096 494h1v1h-1zM1096 499h3v3h-3zM1096 502h6v1h-6zM1096 504h6v1h-6zM1096 510h13v1h-13zM1096 511h14v1h-14zM1096 512h15v1h-15zM1096 513h10v1h-10zM1097 503h5v1h-5zM1098 549h1v1h-1zM1099 492h3v1h-3zM1099 497h3v1h-3zM1100 493h2v2h-2zM1100 495h1v1h-1zM1100 496h2v1h-2zM1100 498h2v2h-2zM1101 500h1v1h-1zM1101 543h13v2h-13zM1101 549h2v1h-2zM1101 552h4v2h-4zM1103 550h2v2h-2zM1104 501h1v1h-1zM1104 502h2v2h-2zM1104 505h5v1h-5zM1104 545h10v2h-10zM1105 504h4v1h-4zM1105 547h5v1h-5zM1106 548h2v1h-2zM1107 513h5v1h-5zM1108 506h2v1h-2zM1109 556h2v2h-2zM1109 558h1v1h-1zM1110 509h9v1h-9zM1110 549h6v2h-6zM1111 548h5v1h-5zM1111 554h3v1h-3zM1111 555h2v1h-2zM1111 564h3v1h-3zM1112 510h7v1h-7zM1112 516h17v1h-17zM1112 547h3v1h-3zM1112 551h4v1h-4zM1112 560h3v1h-3zM1112 563h1v1h-1zM1112 565h1v1h-1zM1113 490h5v1h-5zM1113 491h4v1h-4zM1113 519h15v2h-15zM1113 559h1v1h-1zM1113 561h1v1h-1zM1114 499h6v1h-6zM1114 500h9v1h-9zM1114 504h4v3h-4zM1114 507h10v1h-10zM1114 511h6v1h-6zM1114 512h10v2h-10zM1114 552h2v1h-2zM1115 498h8v1h-8zM1115 501h9v1h-9zM1115 502h3v2h-3zM1116 489h1v1h-1zM1116 494h2v1h-2zM1116 495h3v1h-3zM1117 493h1v1h-1zM1117 496h2v2h-2zM1117 534h35v1h-35zM1117 539h7v1h-7zM1117 540h5v1h-5zM1117 550h4v1h-4zM1118 541h4v1h-4zM1118 542h5v4h-5zM1118 549h1v1h-1zM1118 551h3v1h-3zM1118 552h2v1h-2zM1119 546h2v1h-2zM1119 553h1v1h-1zM1120 502h4v1h-4zM1120 506h6v1h-6zM1121 497h2v1h-2zM1121 503h3v1h-3zM1121 504h2v1h-2zM1121 505h5v1h-5zM1121 509h6v1h-6zM1121 510h5v1h-5zM1121 511h3v1h-3zM1123 553h2v2h-2zM1124 545h27v1h-27zM1125 494h2v2h-2zM1125 539h28v1h-28zM1125 540h27v1h-27zM1125 541h15v2h-15zM1125 544h10v1h-10zM1125 546h10v1h-10zM1125 547h26v1h-26zM1125 548h14v1h-14zM1125 549h12v1h-12zM1125 550h9v1h-9zM1125 551h8v2h-8zM1126 500h3v1h-3zM1126 543h10v1h-10zM1127 501h2v1h-2zM1127 513h7v1h-7zM1127 557h5v1h-5zM1127 565h5v1h-5zM1128 512h1v1h-1zM1128 553h5v3h-5zM1128 556h4v1h-4zM1128 558h4v2h-4zM1128 560h3v1h-3zM1128 563h3v1h-3zM1128 564h4v1h-4zM1129 561h3v2h-3zM1129 566h3v1h-3zM1129 567h2v3h-2zM1130 514h12v1h-12zM1130 521h22v1h-22zM1130 523h22v2h-22zM1130 528h23v4h-23zM1131 493h3v1h-3zM1131 507h3v1h-3zM1131 512h3v1h-3zM1131 518h22v2h-22zM1131 520h21v1h-21zM1132 492h1v1h-1zM1132 494h1v1h-1zM1132 500h2v1h-2zM1132 501h3v1h-3zM1132 505h2v2h-2zM1132 508h1v1h-1zM1132 510h2v2h-2zM1132 515h10v2h-10zM1132 517h20v1h-20zM1133 502h2v3h-2zM1134 551h5v1h-5zM1134 552h14v1h-14zM1134 553h5v1h-5zM1134 557h3v1h-3zM1135 510h6v2h-6zM1135 550h2v1h-2zM1135 554h3v1h-3zM1135 555h2v2h-2zM1135 558h1v1h-1zM1135 562h2v2h-2zM1136 504h2v1h-2zM1136 505h5v1h-5zM1136 512h6v2h-6zM1136 544h15v1h-15zM1136 546h15v1h-15zM1137 506h2v1h-2zM1137 543h15v1h-15zM1139 504h3v1h-3zM1139 507h2v3h-2zM1140 503h1v1h-1zM1140 548h11v1h-11zM1140 549h10v1h-10zM1140 550h7v2h-7zM1140 557h4v1h-4zM1140 558h7v1h-7zM1141 553h6v4h-6zM1142 541h10v1h-10zM1142 559h5v1h-5zM1142 563h2v4h-2zM1143 502h2v1h-2zM1143 503h7v2h-7zM1143 505h3v1h-3zM1143 509h6v1h-6zM1143 512h9v1h-9zM1143 513h2v1h-2zM1143 514h9v1h-9zM1143 542h9v1h-9zM1144 508h1v1h-1zM1144 510h1v1h-1zM1144 511h2v1h-2zM1144 567h2v2h-2zM1144 569h1v1h-1zM1145 515h6v2h-6zM1145 557h3v1h-3zM1146 513h6v1h-6zM1147 505h2v1h-2zM1147 506h4v2h-4zM1147 508h5v1h-5zM1147 510h2v2h-2zM1148 550h2v1h-2zM1150 509h1v1h-1zM1150 556h3v1h-3zM1151 555h1v1h-1zM1151 557h1v1h-1zM1154 513h12v1h-12zM1154 514h15v1h-15zM1154 517h15v1h-15zM1154 518h14v1h-14zM1154 519h15v1h-15zM1154 520h14v2h-14zM1154 522h12v2h-12zM1154 524h14v1h-14zM1154 525h17v2h-17zM1154 527h14v2h-14zM1154 529h16v2h-16zM1154 533h17v2h-17zM1154 535h18v2h-18zM1154 537h17v2h-17zM1154 545h21v1h-21zM1154 546h20v1h-20zM1154 553h8v1h-8zM1155 505h5v1h-5zM1155 506h3v1h-3zM1155 515h13v2h-13zM1155 531h16v1h-16zM1155 532h15v1h-15zM1155 539h16v2h-16zM1155 541h8v1h-8zM1155 542h18v2h-18zM1155 544h19v1h-19zM1155 547h11v1h-11zM1155 552h7v1h-7zM1155 554h2v1h-2zM1156 504h4v1h-4zM1156 507h3v1h-3zM1156 508h4v4h-4zM1156 512h8v1h-8zM1156 548h6v1h-6zM1157 549h5v1h-5zM1157 557h5v2h-5zM1157 559h4v1h-4zM1157 566h1v1h-1zM1157 567h2v2h-2zM1159 550h3v2h-3zM1160 554h2v1h-2zM1160 555h1v1h-1zM1161 503h4v1h-4zM1161 508h4v1h-4zM1161 556h1v1h-1zM1162 493h3v1h-3zM1162 494h2v1h-2zM1162 502h3v1h-3zM1162 509h3v1h-3zM1162 510h2v2h-2zM1163 501h1v1h-1zM1163 504h1v1h-1zM1163 506h1v1h-1zM1163 507h2v1h-2zM1164 541h8v1h-8zM1164 548h2v1h-2zM1164 549h9v1h-9zM1164 554h2v1h-2zM1164 555h5v1h-5zM1164 560h3v1h-3zM1164 561h2v1h-2zM1165 553h1v1h-1zM1167 547h6v2h-6zM1167 554h7v1h-7zM1167 556h8v3h-8zM1167 559h2v1h-2zM1168 550h5v1h-5zM1168 551h7v1h-7zM1168 567h6v1h-6zM1168 575h7v1h-7zM1168 576h2v1h-2zM1169 552h6v1h-6zM1169 553h5v1h-5zM1169 566h5v1h-5zM1170 563h5v3h-5zM1170 568h4v1h-4zM1170 572h6v2h-6zM1170 574h5v1h-5zM1171 555h3v1h-3zM1171 559h4v4h-4zM1171 569h4v1h-4zM1172 571h4v1h-4zM1172 576h3v2h-3zM1172 582h2v2h-2zM1172 584h3v2h-3zM1172 586h2v1h-2zM1173 570h3v1h-3zM1173 578h2v1h-2zM1173 579h3v1h-3zM1174 580h1v1h-1zM1176 437h4v2h-4zM1176 444h3v3h-3zM1176 447h2v2h-2zM1176 451h17v1h-17zM1176 452h18v1h-18zM1176 454h4v2h-4zM1176 458h24v1h-24zM1176 462h3v1h-3zM1176 465h60v1h-60zM1176 470h72v1h-72zM1176 471h3v1h-3zM1176 474h6v1h-6zM1176 475h5v1h-5zM1176 478h21v1h-21zM1176 481h10v1h-10zM1176 482h18v1h-18zM1176 483h3v2h-3zM1176 485h7v3h-7zM1176 497h6v2h-6zM1177 433h3v1h-3zM1177 450h1v1h-1zM1177 453h4v1h-4zM1177 456h12v1h-12zM1177 457h23v1h-23zM1177 459h1v1h-1zM1177 460h2v2h-2zM1177 463h2v1h-2zM1177 464h31v1h-31zM1177 466h42v1h-42zM1177 476h11v1h-11zM1177 477h48v1h-48zM1177 479h6v2h-6zM1177 488h6v3h-6zM1177 501h7v2h-7zM1177 504h2v2h-2zM1177 506h3v2h-3zM1178 432h1v1h-1zM1178 434h1v1h-1zM1178 436h2v1h-2zM1178 467h33v2h-33zM1178 469h70v1h-70zM1178 491h2v1h-2zM1178 499h4v1h-4zM1178 500h2v1h-2zM1178 503h2v1h-2zM1178 508h3v1h-3zM1178 515h3v1h-3zM1178 516h2v1h-2zM1179 492h5v1h-5zM1179 493h2v1h-2zM1179 496h2v1h-2zM1179 509h2v1h-2zM1180 450h13v1h-13zM1180 471h48v1h-48zM1180 472h3v1h-3zM1180 473h2v1h-2zM1180 483h13v1h-13zM1180 484h7v1h-7zM1181 455h7v1h-7zM1181 459h26v1h-26zM1181 460h34v2h-34zM1181 463h27v1h-27zM1181 491h6v1h-6zM1181 512h2v1h-2zM1181 513h3v1h-3zM1182 428h3v1h-3zM1182 432h4v1h-4zM1182 435h6v1h-6zM1182 436h4v3h-4zM1182 439h5v1h-5zM1182 440h6v1h-6zM1182 441h5v2h-5zM1182 443h2v1h-2zM1182 444h6v1h-6zM1182 445h7v1h-7zM1182 446h6v2h-6zM1182 448h7v1h-7zM1182 449h21v1h-21zM1182 453h8v1h-8zM1182 454h7v1h-7zM1182 462h27v1h-27zM1182 493h1v1h-1zM1182 514h1v1h-1zM1183 427h2v1h-2zM1183 429h1v1h-1zM1183 431h6v1h-6zM1183 433h5v2h-5zM1183 475h14v1h-14zM1184 424h5v2h-5zM1184 426h2v1h-2zM1184 472h68v1h-68zM1184 473h22v2h-22zM1184 490h3v1h-3zM1185 423h1v1h-1zM1185 479h8v1h-8zM1185 480h7v1h-7zM1185 488h7v1h-7zM1185 489h10v1h-10zM1185 495h7v1h-7zM1185 496h3v1h-3zM1185 497h2v1h-2zM1186 412h3v1h-3zM1186 413h2v1h-2zM1186 443h1v1h-1zM1186 494h6v1h-6zM1187 421h2v2h-2zM1187 423h1v1h-1zM1187 429h2v2h-2zM1187 432h2v1h-2zM1187 481h6v1h-6zM1187 486h6v1h-6zM1187 493h5v1h-5zM1187 500h3v1h-3zM1187 501h2v1h-2zM1187 508h2v1h-2zM1187 509h3v1h-3zM1188 485h5v1h-5zM1188 487h5v1h-5zM1188 490h7v1h-7zM1188 491h4v2h-4zM1188 502h1v1h-1zM1188 503h2v2h-2zM1189 484h4v1h-4zM1189 496h3v1h-3zM1190 434h2v1h-2zM1190 435h5v1h-5zM1190 439h9v1h-9zM1190 455h2v1h-2zM1190 456h11v1h-11zM1190 476h52v1h-52zM1190 497h2v3h-2zM1190 515h2v2h-2zM1191 419h3v1h-3zM1191 436h5v1h-5zM1191 438h5v1h-5zM1191 440h9v1h-9zM1191 448h12v1h-12zM1191 500h1v1h-1zM1192 418h3v1h-3zM1192 420h3v2h-3zM1192 428h2v1h-2zM1192 429h3v1h-3zM1192 437h4v1h-4zM1192 441h9v2h-9zM1192 445h7v1h-7zM1192 453h11v1h-11zM1193 417h1v1h-1zM1193 443h5v2h-5zM1193 446h11v1h-11zM1193 454h8v2h-8zM1193 491h1v1h-1zM1194 447h10v1h-10zM1194 450h8v1h-8zM1194 451h9v1h-9zM1194 479h4v1h-4zM1195 452h9v1h-9zM1195 480h18v1h-18zM1195 483h27v1h-27zM1195 484h3v1h-3zM1195 501h2v2h-2zM1196 423h3v1h-3zM1196 431h2v2h-2zM1196 481h16v1h-16zM1196 482h18v1h-18zM1196 485h2v1h-2zM1196 500h1v1h-1zM1197 422h1v1h-1zM1197 424h2v2h-2zM1197 426h4v1h-4zM1197 438h3v1h-3zM1198 427h4v1h-4zM1198 437h1v1h-1zM1198 475h7v1h-7zM1199 443h3v1h-3zM1199 479h29v1h-29zM1199 484h26v1h-26zM1199 488h27v1h-27zM1199 489h7v1h-7zM1199 493h8v1h-8zM1199 494h9v1h-9zM1199 495h4v1h-4zM1200 428h2v1h-2zM1200 478h25v1h-25zM1200 485h6v1h-6zM1200 486h7v1h-7zM1200 487h8v1h-8zM1201 490h4v1h-4zM1201 491h3v1h-3zM1201 492h4v1h-4zM1201 496h11v1h-11zM1201 500h5v4h-5zM1201 507h5v2h-5zM1202 444h2v2h-2zM1202 457h8v1h-8zM1202 458h5v1h-5zM1202 499h5v1h-5zM1202 504h4v1h-4zM1203 497h7v1h-7zM1203 498h13v1h-13zM1203 505h2v1h-2zM1203 506h3v1h-3zM1203 509h3v1h-3zM1203 516h2v2h-2zM1204 510h2v2h-2zM1204 513h3v1h-3zM1205 447h1v1h-1zM1205 448h3v2h-3zM1205 452h16v1h-16zM1205 456h17v1h-17zM1205 495h2v1h-2zM1205 512h2v1h-2zM1206 425h3v1h-3zM1206 426h5v1h-5zM1206 427h2v2h-2zM1206 438h2v2h-2zM1206 450h2v1h-2zM1206 451h7v1h-7zM1206 453h1v1h-1zM1207 424h1v1h-1zM1207 473h45v1h-45zM1207 475h76v1h-76zM1207 489h12v1h-12zM1207 490h13v1h-13zM1207 491h1v1h-1zM1207 502h9v2h-9zM1207 514h5v2h-5zM1207 516h2v1h-2zM1208 445h2v1h-2zM1208 446h8v1h-8zM1208 447h1v1h-1zM1208 455h13v1h-13zM1208 458h2v1h-2zM1208 459h3v1h-3zM1208 474h72v1h-72zM1208 485h18v1h-18zM1208 500h7v2h-7zM1208 506h7v1h-7zM1208 507h6v1h-6zM1209 427h2v1h-2zM1209 487h17v1h-17zM1209 499h11v1h-11zM1209 510h3v1h-3zM1209 513h3v1h-3zM1210 439h3v1h-3zM1210 440h4v1h-4zM1210 450h4v1h-4zM1210 454h5v1h-5zM1210 462h5v1h-5zM1210 463h3v1h-3zM1210 464h2v1h-2zM1210 486h16v1h-16zM1210 494h9v1h-9zM1210 495h10v1h-10zM1210 504h2v1h-2zM1210 505h4v1h-4zM1210 508h2v1h-2zM1210 509h1v1h-1zM1210 511h2v2h-2zM1211 431h4v2h-4zM1211 436h1v1h-1zM1211 437h2v2h-2zM1211 441h3v3h-3zM1211 444h2v1h-2zM1211 445h6v1h-6zM1211 447h9v1h-9zM1211 448h10v1h-10zM1211 449h3v1h-3zM1211 453h11v1h-11zM1212 459h3v1h-3zM1212 467h2v2h-2zM1212 491h14v1h-14zM1212 492h11v1h-11zM1212 493h5v1h-5zM1213 457h18v1h-18zM1213 458h3v1h-3zM1213 496h3v2h-3zM1214 433h1v1h-1zM1214 438h8v2h-8zM1214 463h23v1h-23zM1214 464h18v1h-18zM1214 504h1v1h-1zM1215 420h2v2h-2zM1215 444h3v1h-3zM1215 449h7v1h-7zM1215 451h7v1h-7zM1215 467h4v1h-4zM1215 480h12v1h-12zM1215 481h11v1h-11zM1216 440h5v1h-5zM1216 443h6v1h-6zM1216 468h51v1h-51zM1216 482h7v1h-7zM1217 422h3v2h-3zM1217 425h5v2h-5zM1217 441h4v1h-4zM1217 450h8v1h-8zM1217 454h6v1h-6zM1217 462h16v1h-16zM1217 498h2v1h-2zM1217 500h3v1h-3zM1217 506h1v1h-1zM1217 507h2v2h-2zM1218 418h4v1h-4zM1218 419h2v1h-2zM1218 424h3v1h-3zM1218 442h4v1h-4zM1218 445h4v1h-4zM1218 446h3v1h-3zM1218 458h4v1h-4zM1218 459h15v3h-15zM1218 496h1v1h-1zM1219 417h3v1h-3zM1219 437h2v1h-2zM1219 444h3v1h-3zM1220 427h2v1h-2zM1220 428h1v1h-1zM1220 434h2v2h-2zM1220 436h1v1h-1zM1220 489h3v1h-3zM1221 466h61v1h-61zM1221 467h46v1h-46zM1221 490h6v1h-6zM1221 495h3v2h-3zM1222 494h2v1h-2zM1223 447h8v1h-8zM1223 449h2v1h-2zM1223 455h8v1h-8zM1223 456h9v1h-9zM1223 458h63v1h-63zM1224 443h7v1h-7zM1224 446h1v1h-1zM1224 448h7v1h-7zM1224 451h11v1h-11zM1224 452h2v1h-2zM1224 453h3v1h-3zM1224 454h7v1h-7zM1224 489h2v1h-2zM1225 429h2v1h-2zM1225 430h4v1h-4zM1225 442h2v1h-2zM1226 432h4v1h-4zM1226 438h6v1h-6zM1226 446h4v1h-4zM1226 477h7v1h-7zM1226 478h19v1h-19zM1227 431h2v1h-2zM1227 433h4v1h-4zM1227 439h4v1h-4zM1227 444h3v2h-3zM1227 449h6v2h-6zM1227 452h9v1h-9zM1228 434h3v1h-3zM1228 435h2v2h-2zM1228 437h4v1h-4zM1228 440h3v1h-3zM1228 453h4v1h-4zM1229 421h3v1h-3zM1229 441h2v2h-2zM1229 479h24v1h-24zM1229 489h11v1h-11zM1229 490h3v1h-3zM1230 420h2v1h-2zM1230 427h2v2h-2zM1230 429h1v1h-1zM1230 471h20v1h-20zM1230 480h20v1h-20zM1230 481h19v1h-19zM1230 482h6v1h-6zM1230 483h7v1h-7zM1230 488h10v1h-10zM1231 484h16v1h-16zM1231 485h10v1h-10zM1231 493h10v1h-10zM1231 495h6v2h-6zM1231 497h7v1h-7zM1231 499h3v1h-3zM1231 500h2v1h-2zM1232 486h1v2h-1zM1232 492h2v1h-2zM1232 494h9v1h-9zM1232 498h1v1h-1zM1233 404h3v1h-3zM1233 405h2v1h-2zM1233 427h3v1h-3zM1233 441h2v1h-2zM1233 442h3v1h-3zM1233 446h3v1h-3zM1233 453h16v1h-16zM1233 455h3v1h-3zM1233 456h29v1h-29zM1233 464h2v1h-2zM1233 490h7v1h-7zM1234 426h1v1h-1zM1234 428h1v1h-1zM1234 443h2v3h-2zM1234 447h1v1h-1zM1234 454h2v1h-2zM1234 457h28v1h-28zM1234 459h16v1h-16zM1234 462h26v1h-26zM1234 477h8v1h-8zM1234 487h6v1h-6zM1235 460h15v2h-15zM1235 499h3v1h-3zM1236 486h4v1h-4zM1236 491h4v2h-4zM1236 498h3v1h-3zM1236 500h2v1h-2zM1236 504h3v1h-3zM1236 506h2v2h-2zM1237 452h12v1h-12zM1237 454h11v1h-11zM1237 455h23v1h-23zM1237 464h12v1h-12zM1237 465h7v1h-7zM1237 503h1v1h-1zM1237 505h1v1h-1zM1238 418h3v1h-3zM1238 431h2v1h-2zM1238 432h5v1h-5zM1238 435h5v1h-5zM1238 436h6v1h-6zM1238 437h10v2h-10zM1238 439h7v1h-7zM1238 443h5v2h-5zM1238 445h30v1h-30zM1238 447h1v1h-1zM1238 448h5v2h-5zM1238 450h12v1h-12zM1238 451h11v1h-11zM1238 463h22v1h-22zM1238 482h17v1h-17zM1239 417h1v1h-1zM1239 419h1v1h-1zM1239 433h4v2h-4zM1239 440h4v1h-4zM1239 483h10v1h-10zM1239 500h3v1h-3zM1240 499h1v1h-1zM1240 501h3v1h-3zM1241 441h2v1h-2zM1241 442h1v1h-1zM1241 446h1v2h-1zM1241 488h2v1h-2zM1241 489h7v1h-7zM1241 496h2v2h-2zM1241 502h2v2h-2zM1242 485h5v1h-5zM1242 486h7v1h-7zM1242 490h4v1h-4zM1242 495h1v1h-1zM1243 446h25v1h-25zM1243 476h10v1h-10zM1243 477h2v1h-2zM1244 444h5v1h-5zM1244 447h4v2h-4zM1244 449h5v1h-5zM1244 487h5v1h-5zM1244 491h2v1h-2zM1244 492h6v1h-6zM1244 497h3v1h-3zM1245 419h3v3h-3zM1245 427h3v1h-3zM1245 428h4v1h-4zM1245 429h3v2h-3zM1245 432h4v1h-4zM1245 433h5v1h-5zM1245 443h4v1h-4zM1245 493h13v1h-13zM1245 496h1v1h-1zM1245 498h1v1h-1zM1246 431h2v1h-2zM1246 436h3v1h-3zM1246 439h1v1h-1zM1246 442h2v1h-2zM1246 465h4v1h-4zM1246 477h7v1h-7zM1246 478h19v1h-19zM1246 488h3v1h-3zM1247 434h12v1h-12zM1247 435h2v1h-2zM1247 494h1v1h-1zM1247 501h3v1h-3zM1247 502h4v2h-4zM1248 495h2v1h-2zM1248 496h3v1h-3zM1248 497h2v2h-2zM1248 499h3v2h-3zM1248 507h3v1h-3zM1249 421h3v1h-3zM1249 504h1v1h-1zM1249 508h2v1h-2zM1250 420h2v1h-2zM1250 422h5v1h-5zM1250 426h5v1h-5zM1250 427h2v1h-2zM1250 430h4v2h-4zM1250 435h8v1h-8zM1250 436h9v1h-9zM1250 447h2v2h-2zM1250 452h6v1h-6zM1250 453h10v1h-10zM1250 454h9v1h-9zM1250 469h3v2h-3zM1250 483h2v1h-2zM1250 489h2v1h-2zM1250 490h3v1h-3zM1251 416h4v1h-4zM1251 429h8v1h-8zM1251 433h3v1h-3zM1251 439h8v1h-8zM1251 442h9v1h-9zM1251 449h1v1h-1zM1251 461h17v1h-17zM1251 464h2v1h-2zM1251 465h6v1h-6zM1251 492h1v1h-1zM1251 494h11v1h-11zM1252 414h3v1h-3zM1252 415h2v1h-2zM1252 417h3v2h-3zM1252 425h3v1h-3zM1252 428h4v1h-4zM1252 432h2v1h-2zM1252 437h1v1h-1zM1252 438h2v1h-2zM1252 440h6v2h-6zM1252 443h2v1h-2zM1252 444h16v1h-16zM1252 451h19v1h-19zM1253 411h6v1h-6zM1253 412h2v2h-2zM1253 419h1v1h-1zM1253 423h2v2h-2zM1253 427h1v1h-1zM1253 447h13v1h-13zM1253 449h7v1h-7zM1253 450h5v1h-5zM1253 459h33v1h-33zM1253 460h15v1h-15zM1253 483h3v1h-3zM1254 410h1v1h-1zM1254 472h31v1h-31zM1254 473h30v1h-30zM1254 476h30v1h-30zM1254 477h42v1h-42zM1254 479h2v1h-2zM1254 480h3v1h-3zM1254 481h2v1h-2zM1254 484h2v1h-2zM1254 488h3v4h-3zM1254 497h2v1h-2zM1254 498h3v2h-3zM1254 502h2v1h-2zM1254 503h3v2h-3zM1254 510h2v2h-2zM1254 518h3v1h-3zM1254 523h2v1h-2zM1254 524h3v1h-3zM1255 421h4v1h-4zM1255 432h8v1h-8zM1255 433h9v1h-9zM1255 437h4v2h-4zM1255 448h11v1h-11zM1255 464h12v1h-12zM1255 469h3v2h-3zM1255 471h8v1h-8zM1255 485h1v1h-1zM1255 487h9v1h-9zM1255 492h7v1h-7zM1255 519h2v1h-2zM1256 412h3v1h-3zM1256 417h3v1h-3zM1256 420h1v1h-1zM1256 422h4v1h-4zM1256 430h2v2h-2zM1257 410h2v1h-2zM1257 413h1v1h-1zM1257 416h2v1h-2zM1257 424h2v4h-2zM1257 443h4v1h-4zM1257 452h3v1h-3zM1258 423h2v1h-2zM1258 486h5v1h-5zM1258 491h5v1h-5zM1258 495h6v1h-6zM1258 505h2v2h-2zM1259 450h1v1h-1zM1259 465h22v1h-22zM1259 469h8v1h-8zM1259 470h4v1h-4zM1259 479h4v1h-4zM1259 481h9v1h-9zM1259 482h37v1h-37zM1259 483h33v1h-33zM1259 484h11v1h-11zM1259 485h3v1h-3zM1259 493h3v1h-3zM1259 504h1v1h-1zM1259 510h4v1h-4zM1259 511h2v1h-2zM1260 430h8v1h-8zM1260 431h3v1h-3zM1260 434h6v1h-6zM1260 480h3v1h-3zM1260 490h9v1h-9zM1260 496h3v2h-3zM1261 441h7v1h-7zM1261 442h2v1h-2zM1261 450h5v1h-5zM1261 452h21v1h-21zM1261 489h7v1h-7zM1261 498h2v1h-2zM1261 502h2v2h-2zM1261 508h2v1h-2zM1261 509h3v1h-3zM1262 421h3v1h-3zM1262 440h6v1h-6zM1262 443h2v1h-2zM1262 449h4v1h-4zM1262 453h6v3h-6zM1262 488h2v1h-2zM1263 420h1v1h-1zM1263 422h1v1h-1zM1263 428h3v1h-3zM1263 429h5v1h-5zM1263 435h3v2h-3zM1263 437h4v2h-4zM1263 456h5v1h-5zM1263 457h4v1h-4zM1263 462h14v2h-14zM1264 411h2v2h-2zM1264 424h2v2h-2zM1264 427h2v1h-2zM1264 486h4v1h-4zM1265 439h2v1h-2zM1265 480h12v1h-12zM1265 485h3v1h-3zM1265 487h3v2h-3zM1265 491h4v1h-4zM1265 494h4v3h-4zM1266 431h2v3h-2zM1266 442h1v1h-1zM1266 443h2v1h-2zM1266 478h18v1h-18zM1266 479h23v1h-23zM1266 492h2v2h-2zM1266 497h5v1h-5zM1266 504h3v1h-3zM1266 507h3v1h-3zM1267 503h1v1h-1zM1267 505h1v1h-1zM1267 506h2v1h-2zM1268 470h12v1h-12zM1268 471h17v1h-17zM1269 437h2v2h-2zM1269 439h1v1h-1zM1269 450h11v1h-11zM1269 453h14v1h-14zM1269 457h16v1h-16zM1269 460h16v2h-16zM1269 464h12v1h-12zM1269 467h14v1h-14zM1269 468h15v2h-15zM1269 498h4v1h-4zM1269 499h5v1h-5zM1270 446h2v2h-2zM1270 448h5v1h-5zM1270 449h2v1h-2zM1270 454h7v2h-7zM1270 456h10v1h-10zM1271 481h6v1h-6zM1271 484h21v1h-21zM1271 485h5v2h-5zM1271 487h16v1h-16zM1271 488h17v1h-17zM1272 442h8v2h-8zM1272 451h9v1h-9zM1272 500h1v1h-1zM1272 502h7v1h-7zM1272 503h4v1h-4zM1272 504h2v1h-2zM1273 449h4v1h-4zM1273 489h12v1h-12zM1273 490h13v1h-13zM1273 491h10v1h-10zM1273 492h7v1h-7zM1274 438h3v1h-3zM1274 446h5v1h-5zM1274 447h6v1h-6zM1274 493h1v1h-1zM1274 495h2v1h-2zM1274 496h9v1h-9zM1274 497h1v1h-1zM1274 501h5v1h-5zM1275 425h3v1h-3zM1275 437h1v1h-1zM1275 439h2v1h-2zM1275 440h5v2h-5zM1276 424h1v1h-1zM1276 426h1v1h-1zM1276 429h3v1h-3zM1276 435h2v2h-2zM1276 444h2v1h-2zM1276 506h6v1h-6zM1277 428h1v1h-1zM1277 430h1v1h-1zM1277 448h3v1h-3zM1277 493h3v1h-3zM1277 494h7v1h-7zM1277 495h6v1h-6zM1277 497h5v1h-5zM1277 507h4v1h-4zM1277 510h5v3h-5zM1278 449h2v1h-2zM1278 454h22v1h-22zM1278 463h4v1h-4zM1278 485h15v1h-15zM1278 500h1v1h-1zM1279 462h6v1h-6zM1279 481h5v1h-5zM1279 486h25v1h-25zM1279 503h4v1h-4zM1279 504h3v2h-3zM1279 508h3v2h-3zM1279 513h2v2h-2zM1280 455h19v1h-19zM1280 480h17v1h-17zM1281 444h4v1h-4zM1281 445h2v2h-2zM1281 456h18v1h-18zM1281 474h3v1h-3zM1281 492h2v2h-2zM1281 502h3v1h-3zM1282 433h2v2h-2zM1282 437h3v1h-3zM1282 438h2v1h-2zM1282 439h3v2h-3zM1282 443h4v1h-4zM1282 448h3v2h-3zM1282 450h8v1h-8zM1282 470h20v1h-20zM1283 424h2v1h-2zM1283 425h3v1h-3zM1283 430h2v3h-2zM1283 435h2v1h-2zM1283 436h3v1h-3zM1283 442h2v1h-2zM1283 447h2v1h-2zM1283 451h7v1h-7zM1283 452h4v1h-4zM1283 463h21v1h-21zM1284 453h15v1h-15zM1284 491h1v1h-1zM1285 464h2v1h-2zM1285 465h17v2h-17zM1285 469h20v1h-20zM1285 473h20v1h-20zM1285 474h19v1h-19zM1285 475h20v1h-20zM1285 478h4v1h-4zM1285 481h12v1h-12zM1286 449h5v1h-5zM1286 468h19v1h-19zM1286 471h17v1h-17zM1286 472h18v1h-18zM1286 476h10v1h-10zM1286 494h3v2h-3zM1286 496h2v1h-2zM1286 497h3v1h-3zM1286 501h3v1h-3zM1287 429h3v1h-3zM1287 436h3v1h-3zM1287 439h3v1h-3zM1287 440h4v1h-4zM1287 443h4v1h-4zM1287 447h4v2h-4zM1287 459h9v1h-9zM1287 460h17v2h-17zM1287 462h18v1h-18zM1287 467h15v1h-15zM1287 489h7v1h-7zM1287 490h6v1h-6zM1287 498h1v1h-1zM1287 500h2v1h-2zM1288 427h2v2h-2zM1288 430h2v1h-2zM1288 433h2v3h-2zM1288 437h2v1h-2zM1288 441h3v1h-3zM1288 442h4v1h-4zM1288 444h2v1h-2zM1288 446h12v1h-12zM1288 452h11v1h-11zM1288 457h8v1h-8zM1288 458h7v1h-7zM1288 464h14v1h-14zM1289 445h1v1h-1zM1289 488h8v1h-8zM1289 491h3v1h-3zM1290 479h3v1h-3zM1290 487h7v1h-7zM1290 492h1v1h-1zM1291 450h4v1h-4zM1291 495h2v2h-2zM1292 445h1v1h-1zM1292 447h9v1h-9zM1292 449h8v1h-8zM1292 451h3v1h-3zM1292 478h5v1h-5zM1292 494h4v1h-4zM1293 432h8v3h-8zM1293 441h8v1h-8zM1293 442h2v1h-2zM1293 443h3v1h-3zM1293 448h8v1h-8zM1293 483h2v1h-2zM1293 492h3v2h-3zM1294 444h1v1h-1zM1294 479h3v1h-3zM1294 491h2v1h-2zM1294 495h8v1h-8zM1295 424h4v1h-4zM1295 429h6v1h-6zM1295 435h6v1h-6zM1295 438h4v2h-4zM1295 440h8v1h-8zM1295 489h2v1h-2zM1295 490h1v1h-1zM1295 496h1v1h-1zM1295 501h2v2h-2zM1296 415h3v1h-3zM1296 416h2v1h-2zM1296 417h3v2h-3zM1296 421h3v3h-3zM1296 425h4v1h-4zM1296 428h2v1h-2zM1296 430h5v2h-5zM1296 436h5v1h-5zM1296 437h4v1h-4zM1296 444h9v1h-9zM1296 445h8v1h-8zM1296 450h4v1h-4zM1296 451h7v1h-7zM1297 414h1v1h-1zM1297 419h1v2h-1zM1297 442h3v1h-3zM1297 443h4v1h-4zM1297 457h6v1h-6zM1297 485h7v1h-7zM1298 426h3v1h-3zM1298 458h6v1h-6zM1298 459h7v1h-7zM1298 476h6v1h-6zM1298 477h2v1h-2zM1298 494h5v1h-5zM1298 496h4v1h-4zM1298 499h6v1h-6zM1299 427h4v2h-4zM1299 479h6v2h-6zM1299 481h5v1h-5zM1299 482h6v1h-6zM1299 484h5v1h-5zM1299 487h4v1h-4zM1299 488h3v1h-3zM1299 492h5v2h-5zM1299 498h5v1h-5zM1299 500h1v1h-1zM1299 509h3v1h-3zM1300 456h3v1h-3zM1300 478h5v1h-5zM1300 483h5v1h-5zM1300 489h2v2h-2zM1300 491h4v1h-4zM1300 497h2v1h-2zM1300 508h1v1h-1zM1300 510h1v1h-1zM1301 439h2v1h-2zM1301 450h2v1h-2zM1301 452h3v1h-3zM1301 477h3v1h-3zM1302 453h3v1h-3zM1302 522h3v1h-3zM1303 443h1v1h-1zM1303 454h1v1h-1zM1303 521h2v1h-2z" fill="#000"/><path d="M164 546.7h0m0-7.3h0m0 9.8h0m.1-5.9h0m0-13.6h0m0-13.6h0m.1-1.7h0m0 16.9h0m0 5.3h0m0-16.8h0m0 22h0m.1-1.3h0m.1 8.2h0m0 5h0m.1-20.9h0m.1 19.9h0m.1-7.6h0m0 15.4h0m.2-22.9h0m0-14.3h0m0-.7h0m0 2.2h0m.2-1.3h0m0 1.9h0m0 1h0m.1 7.7h0m.1-6.6h0m0 1.1h0m0 0h0m.4-16.5h0m.2-4.2h0m.2 3.8h0m0 1.4h0m0-3.2h0m0 3.4h0m.1 3.9h0m.1 35.8h0m0-48.3h0m.6 11.1h0m.2-.5h0m0-5.9h0m0 10.6h0m0-22h0m.1 20.9h0m.1 31h0m0 2h0m.1-1.2h0m.6-33h0m.2 40.5h0m.4-4.2h0m0 4.7h0m.1 10.3h0m0-9.4h0m.7-45.4h0m.2 7.1h0m.4-.4h0m.4-15.7h0m0 51.8h0m.6-3.2h0m.8 4.8h0m.1-3h0m0-3.3h0m.1-1.3h0m.1 .5h0m0-11.3h0m0 7.6h0m.1-1.9h0m0-2h0m.1 5.2h0m0-9.7h0m0-23.2h0m.1-5.3h0m.2 7.1h0m0 1.5h0m.1-5.7h0m0 25h0m.2-.6h0m.1 5h0m0-5h0m.2-25.5h0m.2 52.8h0m.4-7.9h0m.1-48.4h0m0-14.1h0m.3 18.2h0m.1-6.2h0m0-3.1h0m.1-6h0m.1 5.5h0m.5 10.5h0m.1-7.6h0m.2 3.1h0m0-.9h0m.2 6.3h0m0-.8h0m0-3.5h0m.2 14.3h0m0 13.1h0m.1-10.8h0m0 22.3h0m0-24.5h0m0 2.3h0m.1 13.9h0m0 0h0m.1 6.1h0m.2-3.4h0m.2-19.5h0m.1 21.9h0m.1-22h0m.1 16h0m.1 9.5h0m.1 2.8h0m.1 .8h0m.1 1.4h0m.1-6.3h0m.5 11.6h0m.1 .6h0m.3-.9h0m.1-12.9h0m0 5.1h0m0-7.3h0m.1-16.4h0m.2-3.6h0m0 29h0m.1 4.8h0m.2-42.9h0m0-2.3h0m0-2.6h0m.1 17.1h0m.6 15h0m.6 8.2h0m.4 8.6h0m.2-49.7h0m.1 32.8h0m.3 3.5h0m0-19.9h0m.2-26.8h0m0 9.1h0m.2-1.6h0m.1 2.2h0m0-4.4h0m.1 .9h0m.1-2.9h0m0 65.9h0m.1-62.5h0m.1 48.1h0m0-38h0m0-6.4h0m0 8.1h0m.1-1.6h0m0 .2h0m0 17.6h0m.1 6.4h0m.1-11.9h0m.1-1.4h0m0-15.6h0m0 7.1h0m.1 19.8h0m0-5.9h0m.1-12h0m0 16h0m0 10.1h0m0-23.1h0m0 8h0m.1 11.2h0m0 18.1h0m0-27.2h0m0 33.8h0m0-29.8h0m0 4.5h0m.1 3.5h0m0-26h0m.2 11.6h0m0 12h0m0-29.3h0m0 9.3h0m0-1.3h0m0 .8h0m.1 .7h0m3.1 1.3h0m0 14.5h0m0-18.5h0m0-12.3h0m0 36.3h0m.1-13.3h0m0-4.4h0m0 14.8h0m.1-11.7h0m0 3.5h0m0 16.6h0m0 6.6h0m.1-14.8h0m0 17.7h0m0-23.6h0m0 .2h0m.1-7.6h0m0 6.3h0m0-10.4h0m0 15.3h0m.1-28.7h0m0 31.8h0m0-4.1h0m0-6.2h0m.1-.8h0m0 .4h0m0 15.3h0m0-3.7h0m.1-6.3h0m0-.6h0m0 3.2h0m0 13.6h0m.1 7.6h0m0-4.9h0m0-10.6h0m.1-31h0m.5 8.7h0m0 23.6h0m0 1.7h0m.1-5.3h0m.1-.7h0m.1 3.5h0m0-4.1h0m.1-25.7h0m.2-6.8h0m.1 3.5h0m.2 4h0m.2 3.6h0m.2-25.4h0m.2 10.3h0m.2-3.5h0m.1 1.1h0m.3 15.9h0m0-24.2h0m0 12.7h0m.3 31.9h0m.1-11.8h0m.6-30.5h0m.1 4.2h0m.2-9.6h0m0 7h0m0 9.4h0m.1 17h0m.1-23.4h0m.2 8.3h0m0-6.4h0m.1 21.3h0m0-21.5h0m0 15h0m0 .9h0m0-13.1h0m.1 12.5h0m.2-16h0m0 39.5h0m0-1.9h0m.1 6.6h0m.2-35.9h0m.2 35.8h0m.1-2.5h0m.4-16h0m0-7.9h0m0 25.8h0m.2 4.7h0m.4-3.5h0m.1 2.6h0m.2 2.8h0m.1 .7h0m0-2.2h0m.1-14.6h0m0 14.9h0m0 14.3h0m.1-27.1h0m.4-26.2h0m.2-6.2h0m0 33.1h0m0-36h0m.1 5.1h0m0-4.8h0m0 4.4h0m.1 9.7h0m0-.2h0m0-19.5h0m.1 7.4h0m.2 13.2h0m.4-8.9h0m0-12.1h0m.1 14h0m0-2h0m.1-7.1h0m.1 44.6h0m.7 6.3h0m0-1.1h0m.2 .7h0m.1-13h0m0 8.3h0m.1 .5h0m0-13.1h0m1 1.2h0m0-44.8h0m.3 13.9h0m0-2.7h0m.1-3.4h0m.4 8.8h0m.5 37.7h0m.5 2.4h0m0 6.4h0m.6-46.5h0m.1-13.5h0m.2-2.1h0m.1 .7h0m0 59.4h0m.1-3.6h0m0-5.9h0m.1 4.8h0m.4-36.5h0m.1 31.8h0m.5-39.1h0m.2-4.8h0m.3 50.3h0m0 6.4h0m0 3.8h0m.1-3.5h0m.1-.5h0m0-3.4h0m0 .4h0m0-1.1h0m.1 5.4h0m.1-11.9h0m0 .6h0m.4-40.9h0m.1 3.9h0m.2-10.6h0m.3-.2h0m0-.7h0m.4 46h0m.6 11.6h0m0-8.3h0m0 5h0m.7-42.2h0m.1 38h0m0 4.2h0m.2-8.8h0m.2 .2h0m.5 6.7h0m.1 2.7h0m.6-46.6h0m.2 41.4h0m.1-41.9h0m0-4h0m.1-7.8h0m0 9.8h0m.1-13.7h0m0 15.3h0m.1 2.3h0m.1-6.2h0m.7 2.9h0m0-6.9h0m.4 47.8h0m.3 8.6h0m0-3.4h0m.1-.2h0m.4-37.8h0m0-2.4h0m.4-4h0m.1 52.7h0m.5-7.4h0m.1-.9h0m.6-36.3h0m.1-14h0m.1 8.2h0m.1-5.5h0m0-.8h0m.2 46.9h0m.4 3.8h0m0 2.4h0m.1 4.8h0m0-1.9h0m.1-3.1h0m.4-43.9h0m.1 3h0m.6 45.2h0m.5-8.2h0m.2-2.6h0m.2-.3h0m.4-58.3h0m.3 67.3h0m.1-11.4h0m.2-36.8h0m.3-.6h0m.1 1.5h0m0 2.8h0m.1 41.8h0m0 5h0m.1-10h0m.2-41.8h0m.1 45.7h0m.5 8.8h0m.1-17h0m.2-39.5h0m.1 4h0m0-2.2h0m0-9.6h0m.1-1.4h0m0 1.1h0m.2 9.6h0m.1-2.1h0m0-6.8h0m.3-.9h0m.3 68h0m0-7.7h0m.1 1.8h0m0-3h0m.1-3.8h0m.1 8.5h0m0-14.5h0m0-.4h0m.2 12.6h0m.1-10.6h0m.3-41.7h0m0-2.1h0m.7 5.8h0m.1 44.8h0m.1 7.9h0m.2-15.6h0m.1 16.8h0m0-16.3h0m.2 4.9h0m.4-.5h0m.2-43.3h0m.2-3.2h0m0-.5h0m.1 12.6h0m.1-7.7h0m.2 1.8h0m.1 7.4h0m.4 30.2h0m.3-36.2h0m.1-.7h0m0 3.7h0m.1 3.7h0m0-4.3h0m0 43.9h0m.4-13.2h0m.4 4.8h0m0-2.3h0m.3-1.6h0m.5-27.5h0m.1-26.7h0m.1 52h0m.2-37.8h0m0 12.6h0m.3 29h0m0-.9h0m.1-1.8h0m0-2.5h0m.1-32h0m.3 39.1h0m0-60.9h0m0 13.7h0m.1 51.3h0m.1-13.4h0m.2-27h0m0-20.9h0m0 49.5h0m0-10h0m.1-.8h0m.1-19.8h0m.1 2.9h0m.1-7.1h0m.1-2.3h0m0 12.5h0m.3 9.1h0m0-25.3h0m0 26.8h0m0-12.4h0m.2 17.2h0m0-6.8h0m0-13.3h0m0 2.3h0m.1 19.8h0m0-25.3h0m.1 19.8h0m0 5.7h0m.1-25.1h0m0 26.2h0m0 3h0m0-15.4h0m.1 10.2h0m0 2.6h0m0-13.9h0m.2-6h0m0 12.5h0m0-14.8h0m0-14.9h0m0 1.9h0m.1 5.4h0m.1-13.2h0m0 3.6h0m0-6.5h0m0 12h0m.1 .6h0m0 14.6h0m0-7.1h0m.2 7.4h0m0 2.3h0m0-1.3h0m.1-4.6h0m3-2.6h0m0 2.5h0m0 20.8h0m.1-22.1h0m0 15.7h0m0-7.4h0m0-12.1h0m0 15.7h0m.1-14.9h0m0 15.5h0m0 10.4h0m0-10.4h0m.1-.9h0m0 3.2h0m0 .1h0m0-6.3h0m.1-2.6h0m0 3h0m0 .4h0m.1-4.5h0m.1-25.4h0m.1 26.9h0m0-12.3h0m0 .3h0m.1 7.3h0m0-11.2h0m0-3.4h0m.1 4h0m.1-14.8h0m0 3.3h0m.1 12.6h0m0 9.6h0m0-6.3h0m0-4.3h0m0 3.7h0m.1 7.9h0m.1 15.2h0m.2 7.6h0m0-4.8h0m.3 8.4h0m.1-32.7h0m.2-7.7h0m.1 37.6h0m0-6.8h0m.7-26.6h0m.2 37.6h0m0 3.3h0m.1 .6h0m.2 13h0m0 2.2h0m0-12.9h0m0-4.8h0m.1-.6h0m.1 10.4h0m1-45.7h0m.3-5.3h0m.2-.5h0m.4 48.1h0m.1 12.1h0m0-10.3h0m.5 4.5h0m.1-.4h0m.7-47.1h0m.2 8.9h0m.1-1.7h0m0-10.4h0m0 7.4h0m0-21.7h0m.1 19.1h0m0 4.8h0m0-10.2h0m.1 1.2h0m0-.6h0m.5 48.9h0m.3-1.5h0m.2-1.1h0m.1-.7h0m.5 1.7h0m.1-2.8h0m.2-30.6h0m.1-5.9h0m.2-6.4h0m.3 49.9h0m.1-.4h0m0-10.2h0m0 1.2h0m.1 7h0m0-6h0m.2-50.4h0m.2 14.4h0m0-1.6h0m.1 4.4h0m0 2.3h0m.5-.8h0m.2-8.5h0m0 36.7h0m.1-24.1h0m.1-10.9h0m.1 .1h0m0 11.3h0m.1-33.1h0m.1 18.9h0m.1 6.8h0m.3 8.2h0m.3-15.1h0m.6 11.3h0m0 3.9h0m.2 26.6h0m.2-4.1h0m.1 7.9h0m.2 2h0m.2-48.7h0m0-12.1h0m.3 28.2h0m0 18h0m.1 4.2h0m.1-2.7h0m.1-43.8h0m0 15.7h0m0-15h0m.1 23.2h0m.1-10.9h0m0-6.7h0m0-6.4h0m.1 14.5h0m.1-16.1h0m0 3.4h0m.1 1.8h0m0 .5h0m0 19h0m.1-28.6h0m.1 3h0m.2 47.8h0m.5 .9h0m0-5.1h0m.3 15h0m0-6.2h0m.1-45h0m.2 57.6h0m.1-21.4h0m.9-30.8h0m0 1h0m.3-1.2h0m.1-10.9h0m0 45.1h0m.1 2.5h0m.1-37.6h0m.2-7.3h0m.1 46.8h0m.3-41.9h0m0-3.6h0m.1 45.3h0m.1 2.1h0m.1-10.4h0m.2 3.8h0m0 9.4h0m0-19.2h0m.1 7.7h0m.1-2.8h0m0-30.8h0m.1 11.7h0m.1 17.8h0m.1-2.9h0m0 8.8h0m0-7.8h0m0-6.4h0m.1-.9h0m0-6.2h0m.1 3.9h0m0 16.3h0m0-20.6h0m0-3.9h0m0 5.9h0m.1-4.6h0m0 9.8h0m0-15.7h0m0 2.8h0m0-.7h0m0 16.2h0m0-1.7h0m.1-12.8h0m3 19.8h0m0-2.9h0m0-6.1h0m0-3.4h0m0 11.9h0m0-1.1h0m.1-5.1h0m0-5.5h0m0 11h0m.1-4.5h0m0 17.8h0m0-29.9h0m0 12h0m.1 2.4h0m.2-28.3h0m.1 9.1h0m.1 .4h0m0-7.5h0m.1-8.9h0m.1 22.8h0m0 1.5h0m0-22.4h0m0 22.2h0m.1 18.6h0m.2-3.8h0m.4-20.9h0m0-5.6h0m0 1.8h0m.1 5.6h0m.1-11.7h0m.2 3h0m0 34.6h0m.1-5.1h0m0 6.8h0m.3-40h0m.4-1.8h0m.2 1.6h0m.1 44.3h0m.5-8.3h0m.2 4.9h0m.2 15.2h0m.1-9.4h0m.3-42.6h0m.4 39h0m.2-41.6h0m.4 42.9h0m.3-40.7h0m.2 9.2h0m.2-29.7h0m0 28.9h0m.1-5.6h0m.1 12.1h0m.1-2.2h0m.3 35.4h0m.2-41.9h0m.1 5.5h0m.3 32h0m0 4.6h0m.5-6.1h0m.3 3.8h0m.2 4.2h0m.6-3h0m.3 2.1h0m.2-34.7h0m0-4.5h0m0-2.1h0m0 2.3h0m.1-6.1h0m.1-9.5h0m.1 18.1h0m0-8.6h0m.2 5.1h0m.2-5.6h0m.4 42.5h0m.5-47.9h0m.1-8.4h0m.1 12.4h0m0-.4h0m.5 39.3h0m0-35h0m.1-3.1h0m.7 43.1h0m0-6.8h0m.4-40.9h0m0 45.8h0m.1-5h0m.2 17.1h0m.2-21.6h0m.2-33.6h0m.1 36.3h0m.4-34.9h0m0-7.2h0m.2 3.2h0m.6 6.1h0m0 32h0m.6-50h0m.5 8.9h0m.2 37.9h0m.1-4.3h0m0-1.7h0m.2-2.8h0m.1-2.3h0m.2 10.7h0m0-11h0m.2 13.6h0m0-33.4h0m.2 11.7h0m.1-13.3h0m0-1.1h0m0-4.3h0m.1 21.2h0m0-.7h0m.1 10.2h0m0-8.9h0m.1 4.3h0m.1 4.2h0m0 4.6h0m.1-9.3h0m0-12.9h0m0 5.4h0m0-16.1h0m0 21h0m.1-5.4h0m0-.9h0m.1-16.2h0m0 14.5h0m0-6.3h0m0-11.9h0m0-5.9h0m0 22.4h0m.1 2.6h0m0 7.7h0m0-13.2h0m.1-19.4h0m0 24.1h0m3.3 15.1h0m0-9.4h0m.1 6.7h0m0-5.6h0m0-6h0m.1 9.9h0m0-9.4h0m.1-2.6h0m0-16h0m0 31.6h0m0-10.1h0m.1-7.9h0m.1-3.8h0m0 16.6h0m.1 .7h0m0-15h0m.1 25.9h0m.1-39.1h0m0 1.6h0m.1 8.5h0m.1 21.9h0m0-10.2h0m0-12.8h0m0 12.4h0m.3-13.1h0m0-3.4h0m.1 33.5h0m.1-34h0m.1-7.3h0m0 9.9h0m0-9.1h0m.1-5.4h0m.1 10.3h0m0 .3h0m.2-7.2h0m.2-.7h0m0 45.3h0m.3 3h0m0-12.7h0m.3-33h0m.2 4.3h0m0-1.9h0m.1 3.7h0m.1-9.9h0m.2 42.3h0m.1 11h0m0-11.1h0m0 18.4h0m.1-5.9h0m0-4.3h0m0 7h0m.1-1.9h0m.3-15.2h0m0 11.5h0m.1-40.3h0m0-10.6h0m.1 4.4h0m.4-3.6h0m.3 11h0m.1 26.8h0m.3-3.3h0m.3 23.7h0m.1 2.6h0m.1-2.8h0m0-11.4h0m.1-9.9h0m0 15.4h0m.1 2.6h0m.2 .4h0m.3-12.9h0m.1-29.2h0m.4 32.5h0m.1-35.9h0m0 0h0m.4-7.4h0m.2 48.2h0m.1-1.5h0m0-5.1h0m.4-3.6h0m.2-33.6h0m.1 4.9h0m0-21.7h0m.1 15.2h0m.3 8.1h0m.1-5.9h0m.2 1.3h0m0 5.3h0m0-6.3h0m0-8.7h0m.4 53.7h0m.1 12.5h0m.1-54.3h0m.2 19.2h0m.1 23.6h0m.1-11.7h0m0 4.5h0m.2 1.5h0m.1 10h0m.1 3.4h0m0-7.5h0m0-9h0m0 .5h0m.2 8.6h0m.3-25.1h0m.1 3.6h0m0-17.7h0m.7 39.2h0m.5-3.7h0m0 .9h0m.1-46.5h0m.6 56.6h0m0-.3h0m0-5h0m.1-9.8h0m.1-3.2h0m.2 2.5h0m0 2.9h0m0 .6h0m0 .1h0m0-.9h0m.1-35.8h0m.1 0h0m.1 18.1h0m.2-25.4h0m.1 2.7h0m0 2.8h0m.4 31.2h0m.1-39.5h0m.1-5.4h0m.1-5.1h0m.1 13.7h0m0 3.1h0m.2-14.6h0m.1 2.1h0m0 6.7h0m.1 10.1h0m.1-6.5h0m0-9.9h0m.1 12.3h0m0-16.9h0m0 10.1h0m0-2.1h0m.1-6.6h0m.1 18.8h0m.4-11.1h0m.5 14.5h0m.2 1h0m0-5.9h0m.1 .5h0m0 7h0m.1 24.1h0m.3 3.3h0m.2 16.3h0m0-3.9h0m.1-13.3h0m0 4h0m.1-1.2h0m0 3.8h0m.1-2.6h0m.1-38h0m.4 41.6h0m.7 5.6h0m.4 7.4h0m.3-57.2h0m.5 7.3h0m0 1.4h0m.1 .4h0m.5-2.7h0m.1-6.7h0m.1 6.3h0m.1-12.6h0m.4 51.4h0m.3-43.6h0m0-2.2h0m.3 60.2h0m0-13.4h0m0 .5h0m.1 1.5h0m.1-6.3h0m0 9.6h0m0 6h0m0-6.5h0m.1-1.1h0m0-.9h0m.3-8.8h0m0 7.7h0m.7-44.4h0m.1 48.8h0m.1-8.8h0m.3 2.7h0m.2-40.1h0m0-19h0m.3 18.4h0m0-4.4h0m.4-3.1h0m.9 44.3h0m.1-1.5h0m0-2.3h0m.1 15.6h0m.1-7.9h0m1.2-2.1h0m.1-3.1h0m.1-5h0m.1-1.5h0m.1-.5h0m.2-.6h0m0-42.4h0m.1 6.2h0m0 5.2h0m.2-9.5h0m0 6.9h0m.1 40.5h0m.3-53.1h0m0 4.5h0m0-5.2h0m.4-1.2h0m.5 46.6h0m.5-28.9h0m.1 45.5h0m.4-16.6h0m.1 5.6h0m.4 8.1h0m0 3h0m.2 1.3h0m.1-7.8h0m0-9.5h0m.1 4.8h0m.1 5.1h0m.5-7h0m.5-45.7h0m0 16.8h0m0 2.2h0m.1 1.9h0m0-2.3h0m.1-3.7h0m0-5h0m.2 6h0m.2 36.5h0m0-37.1h0m.1 41.6h0m1.2-1.9h0m.1-1.5h0m0-.6h0m.2-40.5h0m0 9.3h0m.6-16.7h0m.3 13.9h0m.5 40h0m.1-3.3h0m.1-5.5h0m0-28h0m.1-8.8h0m.2 3.5h0m.6-3.1h0m.1 0h0m.2-7.4h0m.1 7.5h0m.1-5.6h0m.1 46.1h0m.2-49h0m.2 48.3h0m.1-48.2h0m0 14.9h0m.1 .2h0m.1 27.5h0m.1-53.8h0m.3 12.6h0m0-10.7h0m.1 12.4h0m0-5.5h0m.1 7.5h0m.1 3h0m0-11.5h0m.2 5.9h0m0 .4h0m.1 6.4h0m.2 35.8h0m.1-3.6h0m0 13.6h0m.2-57.5h0m.1 54.6h0m.7-5.4h0m0-10.9h0m.2 14.5h0m.2-13.1h0m.4 7.4h0m.2-10.2h0m.2-32.4h0m.1 7.2h0m0 34.6h0m.1-5.5h0m0 9.7h0m.3-41.5h0m.1 33.6h0m.5 21.3h0m.2-69.2h0m.1 42.3h0m.1-30.6h0m.1 1h0m0-8.8h0m0 1.9h0m.2 8.5h0m.2-9.8h0m.4 48.7h0m.1 1.2h0m.1 5.1h0m0 4h0m0-3.2h0m0 4h0m0-20.9h0m.1 27.5h0m0-8.3h0m.1-46.1h0m.1 31.7h0m0-3.7h0m.4 1.4h0m0 0h0m0 7.7h0m.2-2.2h0m.3-.8h0m0-5.3h0m.2 8h0m.5-36.7h0m0 23.9h0m0-28.3h0m.1-10.1h0m1.2 43.7h0m0 2.9h0m.1 10.2h0m.1 0h0m.1-15.6h0m.2-34.9h0m.1 5.3h0m.3-2.9h0m.1-4h0m0 .7h0m.2-8.3h0m.4 52h0m.1-10.6h0m.2 5.6h0m.1-4.3h0m.1 9.6h0m.2-41.3h0m.1-2.2h0m.1-.5h0m0 1.3h0m.2 4.2h0m.4 33.8h0m.1 1.5h0m.3 5.1h0m0-4.4h0m.5-47.8h0m0 14h0m.4 1.8h0m0-11h0m.4 5.5h0m.1 10.9h0m.1-1.9h0m.1 27.5h0m0 3.6h0m.2-3.5h0m.1-20.7h0m.3-9.6h0m.1 40.9h0m.1-10.5h0m.5 7.3h0m0 .6h0m0-54.6h0m.2 65.6h0m.1-2.7h0m0-7.7h0m0-7.9h0m0 18.9h0m0-7.4h0m0 1.3h0m0-1h0m.1 8.1h0m.2-3.4h0m0 5.4h0m0-4.1h0m.1-3.1h0m.2 6.9h0m.1-46.5h0m0 1.3h0m.1-6.8h0m.2 32.4h0m0-41.3h0m0 19.1h0m.1 43.3h0m.1-8.9h0m.1-44.2h0m.1 31.8h0m.1 3h0m.1 17.8h0m.2-10.5h0m0 3.3h0m.4-60.3h0m.5 24.3h0m.1-8.9h0m0 3.4h0m0-1.1h0m.1-9.1h0m.5 9.7h0m.5 3.5h0m0-.1h0m0 28.7h0m.2-38.7h0m.1 34.8h0m.1-33.3h0m.4 56.3h0m.1-56.2h0m0 36.9h0m.1 2.6h0m0 1.8h0m0 .8h0m0-12h0m.1 10.5h0m0-.8h0m.1-3.8h0m.3-3.5h0m.1 .5h0m.1-3.7h0m.2 5.7h0m.5-30.8h0m0-10h0m.9 3.8h0m0-1h0m0 5.3h0m0-12.4h0m.1 3.5h0m.2-10.7h0m0 5.1h0m0 3.6h0m.2-1.6h0m0-4.1h0m.4 .5h0m0 8.6h0m.1-1.2h0m0 4.1h0m.1-1.9h0m0 34.1h0m.2 8h0m.5-47.4h0m.1 15.4h0m.1-3.2h0m.1 5.3h0m0 30.9h0m.1-4.9h0m0-1.3h0m.1 4h0m0-4.3h0m.1 13.6h0m0-14.5h0m0 8.1h0m.1 7.6h0m0-40.5h0m.2 29.5h0m.4 13.1h0m.4-6.3h0m.1 .3h0m.1-1h0m0 .7h0m.1-2.2h0m.1-40.2h0m.1-2.3h0m.1 55.4h0m.2-8.6h0m.2-1.6h0m.1 9.5h0m.2-66.3h0m0 22.9h0m.3 26.5h0m.1 5.3h0m.1-15.1h0m.1 .8h0m0 17.5h0m0-18.1h0m.1 5.2h0m0 2.6h0m0-8.8h0m0 13.4h0m0-5.2h0m.1 6.8h0m0-10.5h0m.1-2.5h0m0-8.1h0m0 20.1h0m.1-1.7h0m.1-18.5h0m.1 10h0m.1-7.8h0m.1-13.5h0m0-4h0m0-15.8h0m0 5.5h0m0 12h0m.1-1.1h0m0 .6h0m0 2.3h0m.1-10.7h0m0-1.3h0m0-1.6h0m0-3.3h0m.2 1.7h0m.1 9.3h0m0-21.8h0m.4 2.5h0m.1 1.3h0m.2 39.7h0m0-5.8h0m.5-32.2h0m0 .8h0m.6 2h0m0-6.6h0m.1 3.4h0m.1-5.4h0m.1 4.9h0m.3 37.5h0m.2-24.2h0m0 .6h0m0 27.4h0m.1 3.2h0m0-10.4h0m0 1.7h0m.3 9.4h0m0 .8h0m0-1.9h0m0 16.6h0m0-12.3h0m.7-41.8h0m0 5h0m.1 38.6h0m.1 7.4h0m.1-42.5h0m.4-5.1h0m0-6.7h0m.3-5.6h0m0 9.4h0m.1 47.9h0m.1-45.6h0m.2 51.2h0m0-5.3h0m.1-1.1h0m.2-2.2h0m1.1-2.6h0m0-33.5h0m.3 33h0m.2 3.1h0m0 16.6h0m.2-9.6h0m1.2-11.3h0m.2 5.9h0m.1 3.4h0m.2-40.1h0m0-3.7h0m0-2.4h0m0-10h0m0 12.3h0m.1-4.8h0m0 3.8h0m0-10.2h0m0 9.7h0m.1-.5h0m.6 6.3h0m.2 3.1h0m.5-2.5h0m.2 31.4h0m.3-36.7h0m.3 10h0m.1 28.7h0m.6 2h0m.5-44h0m.3 43.1h0m0-29.8h0m.2-18.2h0m.2 15.3h0m0-3.9h0m.1-3.4h0m.2 39.7h0m.3-39.4h0m0 1.5h0m.2-5.4h0m.1-.3h0m.1 6.7h0m.2-.4h0m.8 41.2h0m.2-1h0m.2-3.8h0m.1-.1h0m.1 5.4h0m.1 13.4h0m.1-53.8h0m0 47.8h0m.2-.5h0m.3-13.2h0m.1 12.9h0m0 2.5h0m0-14.1h0m.1 8.8h0m.1-43.9h0m.2 3.2h0m.2 3.2h0m0 32.3h0m1.6-38.3h0m.4 8h0m.1 28.8h0m0 5.6h0m0-10.7h0m.2 3.4h0m.1 .9h0m0-45.8h0m.3 49.7h0m.1 9.7h0m0-15.9h0m.2-29.4h0m.1 3.1h0m0-9.7h0m.1 6.5h0m0-8.4h0m0-10.1h0m.1-6.9h0m0 16.9h0m0-.1h0m.2-1.7h0m.2-1.7h0m.1 14.3h0m.1 0h0m0 0h0m0-12h0m.1 .8h0m0-2.5h0m0-1.1h0m0 8.1h0m.1 .4h0m0-1.1h0m.1 6.1h0m.4 35h0m0 5.8h0m.2 3h0m.1-46.7h0m.1 34h0m.1-25.7h0m0-14h0m.1 5.1h0m.2 4.1h0m0 7h0m.2-4h0m.2-.7h0m0-11.6h0m.1 15.7h0m.1 32.4h0m0-5.6h0m.1-1.4h0m.1 1.3h0m.3 11.4h0m.2 4.3h0m.1-.2h0m0-.2h0m.3-39.2h0m.1 27.8h0m.1-1.7h0m.1-.1h0m.3 13.1h0m0-2.2h0m.3-2.2h0m.6-.7h0m.1-1.5h0m.5 .5h0m0-2.3h0m.3-.9h0m.1 .2h0m0-1.7h0m.1-.1h0m.1-.8h0m0-5.1h0m.1 3.8h0m0-5.4h0m0-.2h0m0-20.2h0m.2-3.8h0m.1-14h0m.1 14.5h0m0-5.1h0m0-2.1h0m0 3.1h0m0-1.5h0m.1 28.8h0m0-27.9h0m.2 6.6h0m0-5h0m.1 .2h0m0 3.7h0m.1-2.7h0m0-7.2h0m0 36.7h0m.1-38.6h0m0 9.7h0m.2-14.2h0m.1 2.8h0m0-12.6h0m.1 8.4h0m.1-6.1h0m0-6.2h0m.1 10.6h0m.1-2.7h0m0 2.3h0m0 9.5h0m.2 31h0m0-29.8h0m.1-12.2h0m.2 4.1h0m.4 52.8h0m.2-14.7h0m.3-.2h0m.2 7h0m.2-2h0m.5-46.3h0m0 8.2h0m.3 41.5h0m.2-5h0m.1-2.1h0m.3-34.3h0m0 43h0m.2-52.5h0m0 4.4h0m.1 7.4h0m.4 29.6h0m.1-32.7h0m.1-7.2h0m0 15h0m0 .9h0m.1 .5h0m.1-.6h0m.3-11.4h0m.1 10h0m0 2.9h0m.3-5.5h0m.7 41h0m.4-12.3h0m.2 13.3h0m0-10.9h0m.2 17.5h0m.7-18.2h0m0-.1h0m.2 13.3h0m.2-4h0m0-.2h0m.1 4.2h0m0-5.2h0m.1 3.7h0m0 0h0m.3-5.5h0m0-30.2h0m.1 20.9h0m0-22.4h0m.3-6h0m0-5.8h0m.2 10.8h0m.2-4.4h0m0-22.7h0m.1 8.9h0m.1 7.1h0m.1 7.7h0m0-4.3h0m0 3.8h0m.1-20h0m0 50.8h0m.4-35.6h0m.1 .8h0m.1 2.6h0m0 2.7h0m.1-1.9h0m0-7.7h0m0-9.1h0m.1 19.2h0m.2-11.3h0m.1-.5h0m.2 44.5h0m.3-5.6h0m0 9h0m0 3.9h0m.1-40.8h0m.3 41.2h0m.1-4.3h0m.3-3.9h0m.4 1.9h0m.1-5.4h0m.3 1.2h0m.1 13h0m0-23h0m.2 3.8h0m0-1.7h0m.1-45.2h0m0 8.3h0m0 5.2h0m0 5.8h0m0-11.4h0m.3 1.9h0m.1 9h0m0-3.1h0m.2 4.4h0m.2 29.6h0m0-8.5h0m.3 4.7h0m.3-33.5h0m.3-16.5h0m0 7h0m.4 4.2h0m0 .9h0m.1-6.9h0m.4 9.6h0m.1 35.1h0m0-38.9h0m.1 38.7h0m0-43.1h0m.1 43.7h0m.2-4.8h0m0 18h0m0-52.9h0m0 5.8h0m.4-7.1h0m.1 6.3h0m0 39.5h0m.1-6.3h0m0-.9h0m0 20.1h0m.1-14.4h0m.3 3.2h0m.3-45.6h0m0 54.4h0m0-14.3h0m0-27.8h0m.1-3.3h0m.1-1.7h0m.1 33.5h0m.3-42.2h0m.2 39.3h0m0 9.4h0m.1-5.8h0m0 3h0m1.5-40.2h0m0 33.4h0m.2-25.2h0m.4-8.3h0m.1-7.4h0m.1 3.9h0m.1-11.2h0m0 17.7h0m0 1.1h0m.1 1h0m.4 27.7h0m0-2.9h0m.2-23.2h0m0-.3h0m.1-7.9h0m.2-7.5h0m0-2.7h0m.1-2.3h0m0 .1h0m.1 7.2h0m.2-7.2h0m.1 4.1h0m1.3-1.7h0m.3 48.2h0m.1-6.5h0m0-36.1h0m.3 .7h0m0 42.7h0m.2 .2h0m.1 5.8h0m0-10.6h0m.1 8.8h0m0 3.7h0m0-4.6h0m.1-1.5h0m.1 20.2h0m.1-.2h0m.2-23.2h0m.1-26.8h0m0 26.7h0m.1-45.4h0m0 10.7h0m.1 3.6h0m0-7.6h0m.1 1.7h0m0-1h0m0 17.1h0m.2-11.4h0m0 7.5h0m.1 22.6h0m.1-20.2h0m.1-1.2h0m0 4.3h0m0-8.5h0m0-21.4h0m.6 30.3h0m.1 30h0m0 1.9h0m.3 3.4h0m0 5.1h0m.1-50.2h0m1.4 51.6h0m0-15.6h0m.3 11.2h0m.1 .1h0m.1-38.7h0m.1-3.4h0m.1 25.6h0m.2-32h0m0 5.2h0m.1 2.1h0m0-1.6h0m0 38.2h0m0-42.2h0m.1 6.7h0m.1-10.6h0m0-5.7h0m0 42.8h0m.1-4.1h0m0-32.3h0m0 6.2h0m0-14.8h0m.1 12.5h0m.2-13h0m.3 52.6h0m0-11.9h0m0 .2h0m.1-4.3h0m0 2.2h0m0-2.9h0m.1 1.1h0m0 8.5h0m0-6.2h0m0-28.6h0m.1 24.5h0m.2 15.5h0m.1-34.9h0m.1 33.3h0m0-14.4h0m1.6-22.4h0m.2 32.7h0m.3-42.1h0m0-1.7h0m0 8.5h0m0 24.8h0m.3-20.8h0m0-7.3h0m.2 .2h0m.1-7.4h0m.3 37.2h0m0-30.1h0m.6 40.9h0m0-4.2h0m0 5.8h0m0 .7h0m.1-2.4h0m.7-8.6h0m.3 4.5h0m.4 15.9h0m.2-5.9h0m.1-14.7h0m.1 22.5h0m.2-54.2h0m.1-7.8h0m.2 51.7h0m.1-50.5h0m0 3.4h0m.4 36.5h0m.1 6.4h0m.1 17.2h0m.1-23.3h0m0 .2h0m.3 9.5h0m.1-5.7h0m0 .8h0m.2 13.3h0m0-8.6h0m.3-41.6h0m0 1h0m.2-2.9h0m.1-2.5h0m2.1-13.4h0m0 20.2h0m.3 43.6h0m.1-3.9h0m0 1.8h0m.6-1.3h0m.5-52h0m.2 5h0m0 4.2h0m.1 .8h0m0-6.3h0m0-.2h0m.2 2.4h0m.1 4.7h0m0-3.5h0m.1-10.6h0m.1 21.9h0m.1 4.2h0m.4 41.1h0m.6-2.1h0m0-9.8h0m.1-38.1h0m.2 6.4h0m.2 .4h0m.2 28h0m0-32.1h0m.4 33.1h0m.4 2.4h0m0 10.8h0m.2-38.8h0m.4 22.3h0m.2-40.2h0m.1 44.4h0m0-27.6h0m.3-7.5h0m.2 4h0m.2-13.8h0m0 4.8h0m0 7.1h0m.3-2.6h0m.1-6.5h0m0 1h0m.3-.5h0m.4 4.9h0m.5-1.2h0m.1 34.1h0m.3 .9h0m0 12.1h0m0-7.1h0m.1-4.6h0m.1-.7h0m0 3.9h0m.1 2.4h0m0 8.5h0m.6-23.5h0m.2 .9h0m.1-.6h0m0 12.2h0m0-10.4h0m.3-4.1h0m0 20.7h0m.1-11.4h0m0-5.8h0m0 3.9h0m0 4.7h0m0 6.4h0m.1-14.7h0m.1 2.7h0m0 3.1h0m0-3h0m.2-33h0m0-15.8h0m0 16.9h0m.1-9.6h0m0 5.1h0m0-2h0m.1 2.9h0m.5-2.1h0m.1-1.7h0m.1-5.5h0m.3 7.6h0m.7 1.8h0m.3 2.9h0m0-8.4h0m.1 7.2h0m.1 28.2h0m.1-26h0m.1 30.4h0m0-2.5h0m0-1.4h0m.1 .3h0m.3 18.9h0m.1-13h0m.1-4.2h0m.1 1.1h0m.4 10.3h0m0-45h0m.2 40.2h0m.6 5.5h0m0-5.5h0m.5-33.7h0m.5 37.2h0m.3-39.1h0m.2-5.2h0m0-8.2h0m0 14.3h0m.1-.3h0m.2-6.6h0m0 5.2h0m.4 35h0m1.2 18h0m.1-40.3h0m.4 23.1h0m.1-23.9h0m0-8.9h0m.2 43.6h0m.1-6h0m0-3.6h0m0 6h0m.1-3.4h0m.1 8.1h0m.1-5.1h0m.1 2h0m.8-8.5h0m.1-.1h0m0 16h0m0-12.6h0m.1 .8h0m.3 .6h0m.1-29.2h0m.2 2.7h0m.1-14.9h0m.1 36.2h0m.1-33.8h0m.2 11.4h0m.2 33.9h0m0-3.1h0m.1-2.4h0m.1-6.6h0m.3-30.7h0m0 .3h0m.6 8.4h0m.3 .7h0m0-11.7h0m.1 9h0m.1-.5h0m.1 22.1h0m0-23h0m.1-.3h0m.1-3.5h0m.1-10.5h0m0 19h0m.1-16.6h0m0 2.3h0m.2-1h0m.1 29.8h0m.1-5.2h0m0 9h0m.1-26.6h0m0 16h0m.1 14.7h0m.1-10.2h0m.2 .3h0m0 11.2h0m.1 3h0m0 5.2h0m0-6.6h0m0-3.3h0m.1-11.7h0m1.6 17.4h0m.1-32.7h0m0-4.3h0m0 0h0m0 25.1h0m.2-26.6h0m.1 27.4h0m.1-19.2h0m.1 2.5h0m0-11.7h0m.2 11.5h0m.1-1.5h0m.2 13h0m.1-2.4h0m0-.2h0m.2-21h0m0 41.2h0m.1-1.9h0m.1-14.7h0m0 9.1h0m.1 7.5h0m.2 12h0m0-22.8h0m.4 1h0m.1 2.8h0m0-5.4h0m0 2.3h0m.4 6.3h0m0-4.3h0m.1-7.4h0m0 .1h0m0 17h0m0-5.1h0m.6-41.4h0m.1 33.7h0m.3-30.5h0m.3-5.3h0m0-8.6h0m0 5.1h0m0-4h0m.2 44.6h0m.1-5.7h0m.1 10.8h0m1.1-42.7h0m.1 33.3h0m.2-28.6h0m.1 .2h0m.4 34.1h0m.2-3h0m.1 7.8h0m0-44.5h0m0 56.3h0m.2-62.1h0m.1-6.7h0m.3 15.4h0m.2 38.1h0m.3 .2h0m.2 5.1h0m.2 1.7h0m0-41h0m.2 36.6h0m.2-40.9h0m.1 53.1h0m.5-56.3h0m.2 4.7h0m.3 44.3h0m.1-6.2h0m.3 10.5h0m1-48.6h0m0-12.7h0m.3 13.8h0m0-7.4h0m.5-1.4h0m.2 47h0m1 5.6h0m.3-40h0m.1-2.9h0m0-5.3h0m.3 10.6h0m.2 45.6h0m.4-14.2h0m.1-7.1h0m.5-34.3h0m0-3.5h0m.1 38.7h0m.2-39.3h0m.1-11.2h0m0 19.4h0m.3 27.9h0m.1 11.9h0m.4-55.6h0m0 14.7h0m.1 3.5h0m0-7.1h0m0 10h0m.1-9.1h0m0-.4h0m.1-8.8h0m.1-3.8h0m0 13.4h0m0-4h0m.1 12.1h0m0-8h0m.1 37.3h0m0-30.6h0m.3 35h0m.3-1.6h0m.2 14.7h0m.5-45h0m.1 23.9h0m0-37.2h0m.2 5.7h0m.5 34.8h0m.1 7.2h0m0-7.2h0m.2-1.6h0m0-24.4h0m.1-4.1h0m.1 30.1h0m0 21.4h0m0-18.5h0m0 2.3h0m0-31.3h0m.1 30.6h0m.1 11.2h0m.1-48.2h0m0 31h0m.1 3.2h0m0 19.5h0m.1-6h0m0 .6h0m0-14.5h0m0 7h0m.1 10.6h0m0-10.3h0m0-1.5h0m.1 1.6h0m.1-2.8h0m1.2-33.3h0m.2-.3h0m.1-8.4h0m.3-8.7h0m0 16.2h0m.2 25.2h0m0 19.3h0m.1-49.5h0m.1 4.8h0m0-17.3h0m0 12.7h0m.1-12.3h0m.1 5.4h0m.1 .1h0m.4 7.9h0m.1-13.7h0m0-1.1h0m0 10.3h0m.1 6.6h0m0-17.1h0m0 8.6h0m.1-7.3h0m0-3.7h0m0 7h0m.1 5.6h0m0 3.5h0m.1 35.4h0m.1-4.9h0m0 26h0m0-19.7h0m0-.3h0m.5-41.6h0m.5 3.9h0m0 44h0m1-4.7h0m.2 .2h0m.1-3h0m0-33h0m.3 2.4h0m0-12.7h0m.4 47.6h0m0 4.6h0m.1-12h0m.2 2.6h0m0 10.5h0m0-44.1h0m.1-3.6h0m.1 1.9h0m.1 41.8h0m.2-46.3h0m.3 3.8h0m.2 54.4h0m.4-3.2h0m0 3.9h0m.4-9.3h0m0-42.5h0m0 2.4h0m0-13.7h0m.3 12.5h0m.2-9.5h0m.1 4.2h0m.2 42.7h0m0-47.5h0m.3 63.7h0m0-18.7h0m.1 5.8h0m.1-6.6h0m.3-2.3h0m.1-14.3h0m0 21.8h0m.2-25.4h0m.1 7.5h0m0-33.4h0m.1 29.2h0m.1 3.2h0m.1-23.2h0m0-13.4h0m.1 1.2h0m.3-3.6h0m.2 35.2h0m0-36.5h0m0-2.3h0m.4 1.4h0m0-.3h0m.2-1.6h0m.3 .1h0m0 3h0m.1-.2h0m0-.4h0m0 9.7h0m.3 40.3h0m.1-41.6h0m0 32.3h0m.2 3.5h0m.1-8.1h0m.1-28.5h0m.1 32.9h0m.1 2.1h0m.1-.4h0m0-5h0m.2-1.7h0m.3 2.1h0m.3 19.3h0m.1 11.4h0m0-17.3h0m.3-48.1h0m0 8.4h0m.1 43h0m.4-50.9h0m.3 50h0m.4-46.7h0m.1 63.1h0m.2-47.4h0m.2-1h0m0-12h0m0-7.2h0m.1 3.8h0m.2 66.4h0m0 1h0m.3-53h0m.1-8h0m0 8.4h0m.1-14.6h0m.1 7.1h0m.1 10.8h0m.2 32.1h0m.1-39h0m.2 41.1h0m.1 5.7h0m.3-1.7h0m.1 7.9h0m.1-9.2h0m0 1.5h0m.3 4h0m0 2h0m.4-48.1h0m.3-19.3h0m0 23.5h0m0-8.6h0m.1 53.3h0m0 4.9h0m.2-1.2h0m.1 2.3h0m.1-9.2h0m.3-55.8h0m.2 2.9h0m0 8.3h0m.1 0h0m.1-3.1h0m0 3.6h0m0 1.3h0m.5-7.3h0m.9 58.3h0m0-8.8h0m0-.1h0m1.1 3.5h0m0-1h0m.2 2.3h0m.2 3h0m.1-61.9h0m.1 6.9h0m0-16.9h0m.1 12.2h0m1 50.3h0m.1 .2h0m0 8.2h0m.2-5.3h0m.1-66.5h0m.1 15.3h0m1.4-8.1h0m.1 3.7h0m0 10.9h0m0-1.8h0m.2 50.3h0m.1-52.8h0m.1 6.7h0m.3 3h0m.2-8.6h0m0-4.2h0m0 50.5h0m.4-2.4h0m.1 8.7h0m.1-.8h0m.1-2.3h0m.1-6.1h0m.1 6.5h0m.5-57.9h0m.3 25.5h0m.1-3.3h0m.3-20h0m0 20.1h0m0-10.5h0m.2 50.5h0m.1-69h0m0 15.7h0m.1 4h0m0-4.4h0m.1 .1h0m.1 5.3h0m.1 2.7h0m0 2.9h0m.1-4.9h0m.1-5.8h0m0 12.9h0m.2-20.6h0m0 54.9h0m0-30.4h0m.3-9.3h0m0-2.7h0m.2 37.5h0m.4-25.9h0m.8-2.6h0m.2 30.2h0m0 .2h0m0 0h0m.1-6.1h0m0 11.9h0m.1-7.6h0m.1 3.4h0m0-11.2h0m0 6h0m0-3.8h0m.1-1.6h0m.1 3.8h0m0-12.8h0m0-.4h0m0-28h0m0-.1h0m0 4h0m.1 1.3h0m0-12.5h0m0-12.7h0m.1 22.2h0m0-10.4h0m.1 21.5h0m0-16.4h0m0-8.3h0m.1 21.7h0m0 16.3h0m.1-33.7h0m0 36.9h0m.1-39.6h0m.1 20.9h0m.1-.2h0m.1-.1h0m.1 13.9h0m.4-29.5h0m.5 28.2h0m.3 11h0m.3-3.1h0m0-38.6h0m.2 0h0m.2-6.3h0m.4 4.5h0m.2-1.3h0m.1 4.8h0m0-8.9h0m0 44h0m.1-6.7h0m0 6.8h0m.4-39.3h0m.2 4.2h0m.9 29.2h0m0-34.3h0m.4 38.6h0m.1 10.1h0m.1-48h0m.1-1.1h0m.3-2.8h0m.1 45.8h0m0-7.5h0m.1-29.1h0m0-8.2h0m.1 38.2h0m.1 23.5h0m.1-45.7h0m.2-.7h0m0-4.3h0m.5 57.7h0m.3-54.6h0m0 5.3h0m0-1.8h0m.1 38.4h0m0 2.3h0m.1-40.2h0m0-6.1h0m.1 43h0m0 6.4h0m0-13.5h0m.1-.5h0m0 4.4h0m.1 7.6h0m.1-48.3h0m.3-7.8h0m0 50.9h0m0-3.2h0m.2-29.7h0m0-21.9h0m.1 59.5h0m.1 3.2h0m0 3h0m0-4.9h0m0 4h0m0-8.4h0m.1 12.7h0m0-19.4h0m0 16h0m.1-7.1h0m0-2.4h0m.1 2.2h0m.4-58.3h0m0 4.3h0m1.1 18.4h0m.9 32h0m.1-4.2h0m.1 10.7h0m.1-8.4h0m0-3.6h0m.5-37.2h0m0 9.7h0m0-9.4h0m.4 4.3h0m.1-5.7h0m0 10.5h0m0 27.3h0m.1-29.5h0m.1 1.9h0m.2-2.2h0m.5 39.4h0m.1-51.5h0m.4 7.8h0m.2-2.9h0m0-4.1h0m.4 6.5h0m.6 36.1h0m.2-27.9h0m.1 31.6h0m.1-36.7h0m0 35.2h0m.7-33.3h0m.4 37.2h0m.1-31.6h0m.1 35.4h0m.6-3.3h0m.3-44.2h0m.9 9.2h0m.3-4.4h0m.1 6h0m.2-5.8h0m.3 43.6h0m.1 6.4h0m0-2.7h0m.2-10.3h0m.4-34.9h0m.1 34.9h0m.3-41.3h0m.1 .4h0m.5 49.7h0m0-15.1h0m.1 2.6h0m0 5.7h0m0 5.2h0m0-5.4h0m.2-1.6h0m.2-38.8h0m.5 36.6h0m0 3.9h0m.1-10.7h0m0 1.1h0m.1 5.4h0m0-39h0m.4 28.5h0m.1-22.8h0m.1-.1h0m.2 23.8h0m.1-2.9h0m.1-27.7h0m.2-13.2h0m0 7.3h0m0-8.5h0m0 8.4h0m.1-.5h0m0 0h0m.1 32.5h0m0-28.1h0m.1-3.2h0m0 2h0m0 1h0m.3-7.2h0m.4-.9h0m0-5.3h0m.3 7.2h0m0-9h0m.1 11.7h0m.1-.3h0m.3 38.2h0m.1-40.8h0m.1 1.5h0m.4 32.1h0m.1-20.1h0m0 .3h0m.1-20h0m.1 10.8h0m.2-4.6h0m0 15.3h0m.6-10.1h0m.1 30.9h0m.1 1.4h0m.2 1.5h0m0 5.5h0m.1-6.8h0m.1 3.8h0m0 2.5h0m1.4-48h0m.1 13h0m0-7.2h0m0-1.7h0m.1 1h0m.1 8.3h0m0 3.8h0m0-9.3h0m0 1.2h0m0 4.7h0m.1-2.2h0m.1 6.8h0m0 1.2h0m.1-5.5h0m0-7.2h0m0 9.1h0m.1 2.9h0m0-8.3h0m.2 10.8h0m.3 26.7h0m0 .2h0m0 12.1h0m.1-9h0m.1 7.1h0m0-6.4h0m0 8.5h0m.1-.2h0m.1-8.7h0m0-3.2h0m.1 2.7h0m0 5.6h0m0 .4h0m0-2h0m0-6h0m.1 2.7h0m0-.7h0m0-2h0m.3 3.8h0m0-.2h0m0 5.6h0m.2-36.3h0m.3 25.7h0m.1 0h0m.1 9.8h0m.4-8.4h0m.1-26.9h0m.1-11.1h0m0 .1h0m.1 6.9h0m0 38.5h0m.1-40.7h0m0 30h0m.1 3.9h0m.4 11.5h0m.2-11.5h0m.1-47.2h0m.4 17.8h0m.1 35.1h0m.4-4.1h0m.1 .9h0m.8-33.5h0m.2 26.9h0m.1 11.2h0m.2-40.7h0m.1 .8h0m.2 30.9h0m.2 4.9h0m0-32.4h0m.8 44.5h0m.3-49.1h0m.6 .7h0m.1 32.1h0m.2-2.7h0m.2 4.4h0m0-30.6h0m.3-6.5h0m.8-4.5h0m0 41h0m.3-32.8h0m.5 31.8h0m0-37.5h0m0 34.8h0m.2-41.6h0m0 8.7h0m.1 6h0m0-2.1h0m0-2.9h0m.1-9.6h0m.5 15.7h0m.9 2.9h0m0-11.9h0m.4 42.4h0m.2-33h0m0 37.3h0m.1-4.5h0m0 1.3h0m0 5.7h0m0-5.1h0m.1 5.7h0m.1-5h0m0 3.6h0m0 3.5h0m.1-12.9h0m0 1h0m.2-.7h0m.8 9.9h0m.1-5.5h0m.3 1.8h0m.4-33h0m.2 29.7h0m0-4.5h0m.3-30.4h0m.3 4.8h0m.5-8.6h0m0 7.8h0m0 37h0m0-47.2h0m.1 49.2h0m.1-7.9h0m.3-34.1h0m.1 32.1h0m.1-31.3h0m.5-2.6h0m.1 0h0m0 29.6h0m.3-29.5h0m.1-3.5h0m.1-1.1h0m.3-3.5h0m0-3.2h0m0-.9h0m.1-.5h0m.5 43h0m.4 1h0m0-35h0m.1 37.8h0m.2-42.2h0m.1 5h0m0-.7h0m.2-19.5h0m.4 10.1h0m0 12.7h0m.2-10.3h0m.9 48h0m.4-5.4h0m.3-44.6h0m.1 50.7h0m.2-38h0m.5 33h0m.4 .7h0m.2 1.1h0m.2 14.7h0m.1-6.3h0m.3-6.9h0m.1-4h0m.6-37.2h0m0 .2h0m0 3.9h0m.1-1h0m.1-8.3h0m0 4.1h0m.1-5.9h0m.1 4h0m0 1h0m0-4.2h0m.1 2.3h0m0 .9h0m.3 5.1h0m.4-13.9h0m.1 55.7h0m.1 5.9h0m0-9.9h0m.5-4.6h0m.7-40.5h0m.3 6.5h0m0-2.2h0m.4 5.4h0m.1 2.7h0m0-20.1h0m.6 52.4h0m0 .9h0m0-41.4h0m.1 14h0m.1 1.1h0m.1 21.5h0m.2 2.3h0m.1-33.8h0m0 39h0m.2-1.3h0m.6 5.5h0m.1-44h0m.1 4.6h0m0-5.2h0m.1 13.1h0m0-25.6h0m0 12.6h0m.7 8.5h0m0-11.9h0m0 3.2h0m.4 45.8h0m0 7.1h0m.1-11.7h0m.1 9.4h0m.1 6.1h0m.1-14.6h0m0 1.3h0m.1 5h0m0 6.1h0m.1-45.3h0m.1 39h0m.1-11.7h0m0 7.1h0m0-9.5h0m0 12.1h0m.1 5.2h0m0-15.9h0m0 11.5h0m0 8.8h0m.1-11.9h0m0-7.3h0m0 12.2h0m.1-2.9h0m0-5.5h0m.2-1.7h0m0 2.6h0m.1 8.4h0m.1-66.9h0m0 8.3h0m0 42h0m.3-20.2h0m.3-2.2h0m0-5.5h0m.5-1.9h0m.1-.2h0m.1-8.9h0m.1 6.2h0m.1 1.2h0m0-2.2h0m0-6.2h0m0 5.7h0m0-1.2h0m.3 2.1h0m.1-2.2h0m.1-9.8h0m.9 47h0m0 1.7h0m.1 6.1h0m.1-6.1h0m.2-2.2h0m0-.8h0m.1-2.5h0m.1 4.2h0m0 5.7h0m.1-60h0m.4 23h0m.2 31.8h0m0-36.2h0m.2 37.7h0m.2-47.8h0m0 51.2h0m.1-47.2h0m.1-1.1h0m0 8.1h0m.1-6.2h0m.1 1.3h0m0 5h0m0-1.9h0m0 4.4h0m.1-1.7h0m0-19.5h0m0 19.8h0m0-1.6h0m.1 30.1h0m.1-35.3h0m.1 8.9h0m.2-4.6h0m0-5.6h0m.7 62.1h0m0-16.1h0m.1 3.4h0m.2-10.5h0m.4 1.9h0m0 6.7h0m.1-35.1h0m.6 39h0m.1 6.5h0m0 5.4h0m.7-26.5h0m0 8.5h0m.1 1h0m0-4h0m0-5.2h0m0 14h0m0-7.5h0m0-.7h0m.1-5.4h0m0 9.2h0m0-.1h0m0-9.5h0m.1-1.6h0m0 8.5h0m.1-5.6h0m.2-34.1h0m0 59h0m0-55h0m.2 .2h0m0 36.1h0m.1-33.3h0m.3 22.9h0m0-27.6h0m.1 33.4h0m.2-29.7h0m.6-16.6h0m0-1.8h0m.1 7.8h0m0-4.1h0m0 6.3h0m.4 30.5h0m0 7.7h0m.1 .7h0m.8-43.7h0m0 32.8h0m.1 14h0m.1-4.2h0m.2-46.4h0m.3 55h0m.2-59.8h0m.3 8.9h0m.3 3.7h0m.1-3.2h0m.2-2.4h0m0 14.7h0m0 .2h0m.1 .9h0m.1 36.2h0m0-48.2h0m.4 4.4h0m0 .7h0m0 2.8h0m0-6.9h0m0 34.9h0m.1-22.3h0m0-8h0m0 31.2h0m0-5.1h0m.1 14h0m0 3.8h0m.2-8.3h0m0 16.4h0m.1 .8h0m0-20.4h0m0 6.1h0m0 7h0m.1-17h0m.1 17.3h0m0 9.2h0m.1-13.9h0m.1-.5h0m0-12.3h0m.1-25.1h0m0 32.7h0m.2 8.4h0m0-35.4h0m0 28.7h0m.3-34.4h0m.3 36.8h0m.2-35.8h0m.3-8h0m.1 55.1h0m.2-56.1h0m.8 58.2h0m.1-56.3h0m0 5h0m0 0h0m0-8.1h0m.1 3.2h0m0 11.6h0m0 1.5h0m.1-1.5h0m0-4.1h0m0-6.7h0m.1-1.9h0m0 15.7h0m.2-15.2h0m0 13.4h0m.2 2.6h0m.6 27h0m.3 7.8h0m.6-34h0m.4 36.2h0m.4-8h0m.1 9.8h0m.1-7.5h0m.1 .2h0m0-43.6h0m0 7.6h0m0-7.1h0m.5 44.9h0m0 1.6h0m0-4.7h0m.2 14.7h0m.2-45.4h0m.2-2.4h0m.2-8.3h0m0-15h0m0 20h0m.4 39.9h0m.1-42.1h0m0-.5h0m.1-2.1h0m.2-14.6h0m.2 52.1h0m0 2.7h0m.6 3.3h0m0 1h0m1.2-54h0m.1-10.4h0m.2 17.9h0m0-.6h0m0-9.9h0m0 7.5h0m.1-7.5h0m.4 58h0m.1-10.1h0m.3-2.9h0m0 4.6h0m0 11.5h0m.1 1.8h0m.6-20h0m.1-38.1h0m.1 2.6h0m0-2.5h0m.1 2.6h0m.3 28.7h0m0-.2h0m.1-.3h0m0-27.4h0m.1 33.9h0m.1-22.8h0m0 3.1h0m0 24.2h0m.1-6.2h0m0-5.9h0m.1 18.4h0m.3-30.1h0m0-12.2h0m.1-10.1h0m.3 37.9h0m1.7-18.4h0m.1 1.3h0m.1 13h0m.2 21h0m.1-43.5h0m.2 28.8h0m.3-32.9h0m.1-.7h0m.1 .1h0m0-1.8h0m.1 4.8h0m.1-7.2h0m.3 6.1h0m0 0h0m.1 2.8h0m0 24.3h0m.1 9.8h0m0-38.1h0m.1 32.6h0m.1-43.2h0m.2 9.4h0m0 6.9h0m.2 23.8h0m0 5.2h0m.1-37.5h0m.3 7.5h0m.1 25.8h0m.1 16.9h0m.1-11.8h0m0 .3h0m.6-40h0m0 61.6h0m.2-16.1h0m.2-1.6h0m.1-.2h0m.1-31.8h0m1.2-7.1h0m1 45.3h0m0-44.5h0m.3 40h0m.2-34h0m0-2.8h0m.1 2.9h0m.1-17.2h0m0 51.3h0m.2 7h0m0-55.2h0m.9 10h0m0 .2h0m0 3.4h0m.4 34.5h0m.1 7h0m.1 5.4h0m.1-11.5h0m.1 7.7h0m0-10.6h0m.1 7.7h0m.5-8.9h0m0 4.2h0m.1-51.3h0m.1 52.3h0m0 12.6h0m.1-48h0m.1 3h0m1.2-8.6h0m.4 50.4h0m.2 4.8h0m0-22.1h0m.1-23.8h0m0 30.3h0m.1-36.1h0m0-21.8h0m.1 54.5h0m.2-.7h0m.1-8.7h0m.3-30.9h0m.4 11.3h0m.1-8.4h0m0-3.5h0m0 2.8h0m0-10.3h0m.1 2h0m0 3.7h0m0 14.4h0m.4-5.9h0m.1 26.3h0m.2 3.2h0m.1-41.5h0m.3 34.9h0m.6-37.1h0m.5 6.4h0m.3 52.1h0m0-34.8h0m0 22.1h0m.1-22.5h0m.4-21.7h0m.3 40h0m.1 7h0m0-2.4h0m.1-20.1h0m0 11.9h0m.2-37.5h0m.1-6.2h0m.1 8.6h0m.2-7.3h0m0 9.6h0m.2 39.7h0m.1-1.7h0m0-20.6h0m.4-21.8h0m.6-5.8h0m.4 42.7h0m0-7h0m.1-7h0m0 6.9h0m0 1.3h0m.1-1.1h0m.4-29.5h0m.1 38.1h0m.2-9.7h0m.6 13.3h0m.4-2.9h0m0-4.4h0m0-2.6h0m.4 10.7h0m.2-43.2h0m.2 28.8h0m.2-31.2h0m.1-.6h0m.1 2.2h0m.2 55.1h0m.1-52.2h0m.1-3.8h0m.1 8.3h0m0-4h0m0 4.7h0m0-8.6h0m.2 1.6h0m.1 15.3h0m.1-10.3h0m0 2.6h0m.1 36.3h0m.1-14.1h0m.1 17.9h0m.2-34.2h0m.2-10.5h0m0 6.4h0m0 3.2h0m0 8.3h0m.1-24.2h0m0 23.4h0m0-.5h0m0 13.6h0m.1 .5h0m0-24.4h0m0 9h0m0 3.6h0m.1 18.7h0m0-45.6h0m.4 50.5h0m0 5.6h0m0-1.4h0m1.3-34.8h0m0 3.4h0m.2 25.4h0m0 19.4h0m.2-46.1h0m0-7.4h0m0 31.8h0m0 0h0m.2-37.6h0m0 40.3h0m.1-2.3h0m.1 7h0m0-41h0m.1 3.6h0m.2 11h0m.1-3.6h0m.5 2.6h0m0-.8h0m0-1.4h0m.3 25.8h0m0 0h0m.1-32.8h0m.2-8.2h0m0 11.7h0m.6 36.2h0m.1-43.5h0m.2 37.2h0m.1-22.8h0m0-22.2h0m.1 51.5h0m.5 5.3h0m.1-2.3h0m0-40.7h0m.2-.1h0m.2 6.2h0m.1 24.1h0m.1-30.5h0m.6 10.3h0m.3-4.1h0m.6 21.6h0m.3-33.6h0m.1 7.9h0m0 4.9h0m.2-4.9h0m.3 7h0m.1-11.1h0m.3 30.1h0m.4 .6h0m.3 1.1h0m0 .8h0m.1 4.1h0m0 14.8h0m0-9.1h0m.1 3.9h0m0-.3h0m0-11.4h0m0-1.6h0m.1 7.5h0m0-6.5h0m0 .2h0m.1 17h0m0-17.2h0m0 22.3h0m.1-22.7h0m.1 0h0m.1 8.5h0m0-3.3h0m0 13.3h0m.1-19.8h0m0 7.4h0m.3-8.3h0m.6-28h0m0-5.4h0m.4 31.7h0m.4-29.1h0m.6-6.4h0m.5 1.1h0m.1-6h0m.3 39.2h0m.1 4.6h0m.4-48.7h0m.3 4.7h0m.1 15.6h0m0-1.9h0m.2 30.1h0m.2-32.6h0m0-.3h0m0 1.7h0m.1 4.1h0m.1-16h0m0 8.6h0m.1 4.3h0m.2-5.8h0m.1 36.3h0m.6 15.7h0m0-6.1h0m.1-6.9h0m0 3.8h0m.1-.4h0m0 11.4h0m0-11.9h0m0 14.9h0m0-18.7h0m.1-5.1h0m0 5h0m.1-5.3h0m0 6.9h0m0 19h0m0-17.5h0m.1 4h0m0 14.4h0m0-12.2h0m.1-6.7h0m0 4.6h0m0 2.9h0m0-5.4h0m.1 12.2h0m.1-19.9h0m.1 20h0m.1-12.7h0m.1 3h0m.1 .5h0m.1 1.6h0m.3 .9h0m.2-39.6h0m.2-10h0m.2 .7h0m.1 7h0m0-16.7h0m.1 12h0m.1-10.5h0m0 10.7h0m0-9.7h0m0 4.7h0m.1-12.5h0m0 15.4h0m.1 4.5h0m1.1 36.1h0m.1 2h0m0 6.8h0m.1-4.3h0m.2 3h0m0-8.8h0m.1 .2h0m.5 16.6h0m.8-54.5h0m.2-.9h0m0-5.4h0m.3 49h0m.1-44.1h0m0 43.7h0m.2 3.2h0m0-8.1h0m.2 7.9h0m.2-42.9h0m.4 39.4h0m0-52.1h0m1.6 47.5h0m.1 3.8h0m.2 1.5h0m.1-40.6h0m0 42h0m.1-5.1h0m0 2.3h0m0 2.2h0m0-6.8h0m0-1.9h0m.1 1.3h0m0-8.6h0m0 12.4h0m0-10.9h0m.1-.3h0m.2 2.3h0m.1-5h0m.1-25h0m.2 6.3h0m0 18.2h0m.1-25.2h0m0 18.9h0m.1-7.9h0m0 20.8h0m0-21.6h0m.1 .5h0m0-9.7h0m0 19.8h0m0-17.6h0m0-2.1h0m.1 6.7h0m0-13.3h0m.1 10.3h0m0-14.1h0m0 12.9h0m0-8.6h0m.1 9.8h0m.1 12.6h0m0-8.6h0m0 1h0m.1 7h0m0-3.6h0m0-.9h0m0-2.9h0m0 4.7h0m0 18h0m.3-8h0m0-1.9h0m0-4.1h0m3.4-5.8h0m0 6.1h0m0-1.1h0m0 7.6h0m.1-24.5h0m0 7.5h0m0-8h0m0 8.6h0m0-2.4h0m0-1.5h0m.1 11.5h0m0 10.1h0m0-19.1h0m0 .7h0m0 6h0m.1-10h0m.1-2.7h0m.2 9h0m.1-.1h0m0-22.9h0m0 23.9h0m0-13.2h0m.1 30.7h0m0-34.2h0m.1 2.5h0m.1 .6h0m.1 23.2h0m.1 .3h0m.2 4.2h0m.1 7.3h0m.2 26.5h0m0-23.8h0m0-.4h0m0 16.7h0m.1-13.8h0m0-9.5h0m0 12.5h0m0 .9h0m0 .4h0m0-6.4h0m0 11.5h0m0 4.1h0m.1-6.7h0m.1-11.2h0m0-1.7h0m.1 18.5h0m0-12h0m0 3.4h0m0-2.3h0m.1-17h0m0 16.4h0m.1-1.3h0m0-.3h0m.1-8.8h0m0 16.2h0m0-21.8h0m.8-27.6h0m.2 9.7h0m0 23.8h0m0-23.8h0m.2-8h0m0-13h0m.1 15.5h0m0 7.1h0m0-11.7h0m0 7.1h0m.2 39.7h0m0-11.5h0m.5-27h0m.5 46h0m.1-34.8h0m.1-1h0m.6 29.7h0m.2-40.4h0m0 43.2h0m.2 4.1h0m.2-37.9h0m.1-5.3h0m.4 9.3h0m.1-18.6h0m.1 9.9h0m.2 35.5h0m0 .5h0m.1 .4h0m0 9.8h0m0 3.8h0m.1-7.7h0m0 8.8h0m.3-1.3h0m.1-5.6h0m0-2.8h0m.1 .1h0m.1 10.6h0m.2-11.6h0m0 9.2h0m.1-.6h0m.1-10.4h0m.2-5.8h0m.1 18.9h0m.1-19.3h0m0-26.4h0m0-.5h0m.1 26.2h0m0-24.9h0m.6-7.5h0m.1-6.6h0m.1 37.7h0m.4-36.5h0m.2-16.6h0m.1 18.9h0m.3-12.3h0m0 13.6h0m.4 32.4h0m0-35.8h0m.7 .9h0m.4 35h0m0-53.9h0m.8 57.5h0m0-44.8h0m.2 47.3h0m.1 0h0m.5-3.3h0m0-36.2h0m0 36.4h0m.2-8.2h0m0-.1h0m0 .6h0m.2-1h0m0 22.5h0m0-17.8h0m0-4.4h0m.3 2.9h0m0-31h0m.3 30.5h0m0 3.1h0m0-42.7h0m1 50.4h0m.2-43.3h0m.2 28.9h0m0-31.5h0m0-10.4h0m.3 59.1h0m0-63h0m.1 8.3h0m.4 2.9h0m.2 2.9h0m.1 0h0m.1 .4h0m.1-5.3h0m0 1.7h0m.3-1h0m0 8h0m.1 30.4h0m0-32.4h0m.8 8.6h0m.1 24.1h0m.2-46.4h0m.2 51.7h0m0 1.3h0m0-35.5h0m.1 29.1h0m0-41.9h0m.4 46.1h0m.1 3.9h0m.4-7.6h0m.1 2.3h0m0 16.7h0m.1-11.6h0m0-29.8h0m.2 40.1h0m.1-6.8h0m.1 5.1h0m.2-54.5h0m0 49.6h0m.3-38.6h0m.1 1.6h0m0-3.8h0m.1-5.4h0m0 6.8h0m.1-1.7h0m0-4.7h0m0 2.7h0m1.4 41.2h0m.5-32.2h0m0 31.5h0m.7-5.7h0m0 5.3h0m.5-42.4h0m.1 3.8h0m.1-7.7h0m0 11.9h0m.1 1.8h0m.1-6.5h0m0-4.3h0m.1 8.7h0m.1-1.7h0m0 1.4h0m0-5.6h0m.1-6.2h0m0 2.4h0m.1 4h0m.2-3.8h0m0 .1h0m.5 40.9h0m.1 4.7h0m.1-8.8h0m0-29.9h0m.3-5.4h0m0-9h0m.4 26.8h0m.2-1.3h0m.1-15.2h0m.1 41.4h0m.2-27h0m.7-11.7h0m.3 15.3h0m.4-12.9h0m.1 8.8h0m0-17.3h0m.1 17.2h0m.1 25.1h0m0-2.3h0m.1-1.3h0m.1 2.1h0m.1 .9h0m.2 2.4h0m.1-4h0m.2-19.4h0m.2 23.5h0m.3-23.7h0m.3-.2h0m.1-8.6h0m0-2.4h0m0 .7h0m.2 9h0m.2-5.4h0m.1 5.5h0m.4 25.8h0m.5-4.3h0m.1 16.7h0m0-3h0m0-16.5h0m.1 9.5h0m.1 1.2h0m.2-11.2h0m.1 13.3h0m.2-13.9h0m.3-12.6h0m0 11.7h0m.1 8.9h0m0-4.1h0m0 15.3h0m0-20.7h0m.1-13.1h0m0 24h0m0 .5h0m0-10.1h0m0 3.3h0m.1 2.7h0m0-20.6h0m0 18h0m.1-18h0m0 13h0m.1 12.8h0m.2-8h0m.3-26.9h0m.1-1.4h0m.1-1.5h0m0-3.2h0m.1-18.6h0m.2 9.7h0m0 23.4h0m.2-12.5h0m.1-13.4h0m.1 10.4h0m0-3.4h0m0-4.3h0m.1-.8h0m0-8.8h0m1.2 35.6h0m0 27.1h0m.1-13.6h0m.1 1.1h0m0 1h0m0-4.8h0m.1 1.5h0m.2 3.2h0m.1 1.8h0m.3-37.8h0m.4-4.5h0m.1 36.6h0m.1-5.6h0m0-36.4h0m.1 7.1h0m0 .1h0m.1 42.5h0m0-4.7h0m.3-11.5h0m.1-35.2h0m.3 43h0m.2-2.4h0m.1-42.6h0m.1-1.3h0m.1-3.9h0m.1 1.3h0m.2 1.5h0m.2 7.4h0m0 1.8h0m.2 .2h0m0-5.5h0m0 5.3h0m.2-3.1h0m0-7.4h0m0 8h0m.1 38.7h0m.3-35.1h0m0 28.7h0m.1-37.9h0m.2 10.4h0m.2 .4h0m.5 1.9h0m0-14.3h0m.1 16.3h0m.5 23.7h0m0 2.6h0m.2 .1h0m.1-.8h0m.1 6.4h0m0-3.9h0m0-3.3h0m0 11.2h0m.1 2.2h0m0-7.6h0m.2 2.7h0m0 8.5h0m.2-3.7h0m.3-35.7h0m.2-1.6h0m.1 1.9h0m1-7.3h0m.5 51.2h0m.1-3.7h0m.1-3h0m.3-42.7h0m.2 6.4h0m0-10.8h0m.8 10.2h0m0-14.4h0m.2 11h0m0-2.9h0m.1 3.8h0m.5 37.7h0m.1-12.1h0m0 1.5h0m0 15.7h0m.1-4.3h0m.1 7.9h0m0-7.2h0m.2 2.7h0m.4-51h0m0-.6h0m.2 2.5h0m0 2.3h0m.4-2.2h0m.2-5.1h0m.5 8.4h0m.3 31.9h0m.2 7.5h0m.1-10.8h0m.7-35.2h0m0-10.1h0m.6 21.4h0m.1 5.2h0m0-6.5h0m0 1.8h0m.2-11.8h0m0 13.9h0m.2 32.7h0m.5-38.9h0m.3-8.1h0m.2 59.4h0m.2-10.2h0m.7-.6h0m.5-.2h0m.2-33.3h0m.1 42.2h0m.1-49.3h0m0-11h0m0 20.9h0m.7-2.9h0m.4-3.6h0m.6-.3h0m.3 44.6h0m0 1.6h0m0-9h0m.2-48h0m.1 39.9h0m.1-24.9h0m0 24.5h0m.1-.2h0m0 9.4h0m.1-9.7h0m0 2.7h0m0 3.6h0m0-.3h0m.1-.7h0m0 12.8h0m0-14.7h0m.1 10h0m0-1h0m0-5h0m.2 6.1h0m0-5.2h0m.1-35h0m.3-9.6h0m.3 56.5h0m.8-49.4h0m0 28.1h0m.3-30.3h0m.2-2.1h0m.5-7.8h0m.8 7h0m.1 44.8h0m.5-4.8h0m0-3.4h0m.5-.6h0m.1-2.2h0m0 12.4h0m0-11.7h0m.2 12.4h0m.1-5.6h0m0 1.5h0m.1 15.2h0m.1-19.9h0m0 13.2h0m.2-45.5h0m0-4.6h0m.1 6.2h0m.3 49.4h0m.1-54.1h0m0 2.3h0m.6-16.4h0m.7 56.5h0m.7-2.6h0m.5-34.6h0m.8-1.6h0m.1-.3h0m0-1.9h0m.1-.5h0m.1 1.7h0m0 3.5h0m0-3.5h0m.1-3.7h0m.1 4.3h0m0-8.7h0m0 1.4h0m.2-6.9h0m0 4.9h0m.3 2.6h0m.1 43.3h0m0-45.7h0m.1 7.1h0m0 7h0m.2 34.3h0m.3-61.4h0m.1 23.5h0m.1 3.8h0m.2 31.7h0m.6 5.4h0m0 4.1h0m.1-12.6h0m.2-33.3h0m.3 41.2h0m.1-36.9h0m1-1.4h0m.2 35.3h0m.1-4.5h0m.2-7.2h0m.2 5.5h0m.1-7.5h0m0 4h0m.6-29.9h0m.1-1.1h0m.1-2.3h0m.8-2.8h0m0-.5h0m.3 2.1h0m.3-2.7h0m.2 4.7h0m.1 49.8h0m.1-47h0m.1 28.1h0m0 3.4h0m0-6h0m.1 3.1h0m.2-26.9h0m.1 36.1h0m0 8.9h0m0-12.4h0m.2-5.2h0m.1-26.4h0m0 1.2h0m.3 30.8h0m.4-26.6h0m.5-13.9h0m0 45.8h0m.1-35.1h0m.7 33.8h0m.2-29.1h0m.5 33.8h0m.1-16.3h0m.1-28.8h0m0 27.1h0m0 2.5h0m.2-3.3h0m.1 10.8h0m.1-6.1h0m0 18.8h0m0-11.5h0m.1 5.2h0m1.4-37.3h0m0 4.3h0m.1-12.1h0m0 7.6h0m0-12.5h0m0 9.7h0m.1 .5h0m0 2.6h0m0 .2h0m0 3.1h0m0-14.6h0m0 8.7h0m.1 3.4h0m0 .1h0m0-5h0m0 .6h0m.1 6.3h0m.1-.4h0m0-4.1h0m0 3.5h0m.3-8.6h0m0 58.4h0m.2-31.9h0m.1 10.2h0m.3-7.3h0m0 .9h0m.1 2.7h0m.2-36.5h0m.1 30.8h0m.2 .4h0m.1 16.7h0m.1-6.9h0m.1 1.9h0m.1 1.4h0m.1 10h0m0-8.8h0m.1 4.9h0m.5-56.7h0m0 12h0m.1-6.4h0m.1 4.9h0m0-.2h0m.1-6.7h0m.1 .9h0m.2 61.3h0m.1-15.5h0m.1 7.6h0m.7 1.8h0m.3-2.7h0m0-2.9h0m.1-35.1h0m.2-9.9h0m0 .3h0m.1 3.5h0m.2 .8h0m.2 9.5h0m.1 34.4h0m0-57h0m0 23.7h0m.1-17.9h0m.1 20.3h0m.2-24.8h0m.2 29.3h0m.1-15.5h0m0-16.6h0m0 19.4h0m0 10.7h0m.1-7h0m.1 6.4h0m.1 34.2h0m0-1.4h0m0-9.7h0m0 .7h0m.3 12h0m0 1.5h0m.4 2h0m.1-3.6h0m0-8.6h0m.1-.6h0m.9 5.6h0m.1 2.4h0m.4-.5h0m.2-4.4h0m.2-26.5h0m0-14.1h0m0-4.5h0m.1 12.4h0m.2 29.8h0m0-30.2h0m0 37h0m.2-6h0m.1-3.3h0m0 .8h0m.1-25.9h0m0 1.5h0m.1-2.2h0m.1-5.7h0m.1-9.2h0m.1 8.1h0m0-.3h0m0 29.6h0m.1-.7h0m.2-6.3h0m0-19.7h0m.4 34.6h0m.1-6h0m0-11.4h0m.1-26.4h0m0 33.4h0m.1-2.4h0m.1-35.3h0m.1 4.6h0m.2 32.9h0m.3-39h0m.1 9.5h0m.2-2.6h0m.1-15.4h0m0 7.9h0m.2 8.1h0m.1-18.6h0m.2 6.2h0m.3 4.6h0m.1-7.9h0m.1 47.9h0m.2-5.9h0m.2-34.5h0m0 62.2h0m.3-24.2h0m.1 9.1h0m.2-15.5h0m.1 11.1h0m0 .8h0m.1 .4h0m0 2.9h0m0-1h0m.1-7.9h0m.1 8.2h0m.1 1h0m.1-12.4h0m.5-35h0m.1 1.8h0m.3-9.1h0m0 6.5h0m.6 42.7h0m.1-49h0m0 10.2h0m.1 46.1h0m.2-5.2h0m.1 5.2h0m.1 0h0m.1 5.2h0m.3-6.5h0m.1-50h0m.3 11h0m.1-17.7h0m.1 12.6h0m.1-4.3h0m0 7.2h0m1.2 33.9h0m.7 1.5h0m.3-35.9h0m.1-19.6h0m.1 9.7h0m.1-.5h0m0-3.7h0m0 3h0m0 13.9h0m.1-17.8h0m0 6.7h0m0 5.4h0m.1-1.7h0m.2 .5h0m.1 8.3h0m.2-14.2h0m0-9.2h0m0 2h0m0 2.1h0m0 6.6h0m.1-5.9h0m0 7h0m.2 2.5h0m0 .7h0m.8 11.1h0m0 36.2h0m.1-9.4h0m0 19.2h0m.4 2.5h0m.2-55.3h0m0-12h0m0 .6h0m.1 8h0m.3 39.8h0m0 5.5h0m.1-9.1h0m.8-27.8h0m0 .3h0m0-2.4h0m.2-10.4h0m.1 5.9h0m.1-17.3h0m.1 62.8h0m.6-10.2h0m.7-32.1h0m.5-14.5h0m.4 45.4h0m.2-37.2h0m.3 2.9h0m.1-4.2h0m0 6.3h0m.1-.1h0m.6 38.1h0m.1 8.9h0m.4-20.9h0m.4 13.4h0m.2-11.2h0m.3 8.4h0m.1 10.6h0m0 1.3h0m0-8.1h0m0 3.4h0m.1-7.7h0m0 2.1h0m0-3.6h0m0 9.1h0m.1-11.2h0m0 12.9h0m.6-52.5h0m.1-.3h0m.5 46.7h0m.2-4.8h0m0-3.7h0m0 2.7h0m.4-46.6h0m.1-6.6h0m0 45.1h0m.1-38.7h0m.4 4.6h0m.5-8.8h0m.2 56.2h0m.1-10.7h0m0-4h0m.4-13h0m0 21.4h0m.1-21.3h0m.1-1.2h0m.2-16.1h0m.1-3.3h0m.1 4.1h0m0 5.5h0m.1-3.4h0m.2 5.7h0m.2 2.9h0m0 22h0m.2 1.6h0m.1 5.3h0m0 13.6h0m0-14.2h0m0 6.5h0m.1-9.6h0m.1 7.8h0m.1 2.5h0m.1-14.8h0m0-13.3h0m.7-4.3h0m.2 26.1h0m.1 12.5h0m.1-1.9h0m0-39.6h0m0-4.8h0m0-15.4h0m.5 59.6h0m.2-8.2h0m.1-.9h0m.1 11.4h0m0-6.3h0m0 5h0m.1-8.3h0m.1-1.5h0m.1 2.4h0m.3-27h0m.2-20.2h0m.2 5.1h0m0 6.8h0m0 7.4h0m.3 32.6h0m.2-46.9h0m.1 1.8h0m.1 1.3h0m.4 32.5h0m.4 1.6h0m.3-40.6h0m.5 3.4h0m.4 34h0m.1 8.5h0m.3 10.2h0m.2-48.5h0m.2 4h0m0 2.3h0m.2-5.7h0m.3 .9h0m0 2.8h0m0-6.4h0m.2 44.8h0m.2-13.3h0m0 9.9h0m.1-42.9h0m.1 44.8h0m0-7.4h0m.6-25.1h0m.3 33.9h0m0-11h0m0 3.8h0m.1-.4h0m.2 1.8h0m0-13.8h0m.1-5.6h0m0 26.5h0m.2 4.8h0m0-9.8h0m0 5.4h0m.1-5.2h0m.1-9.4h0m.1 4h0m0-.7h0m.1 1.4h0m.1 6.5h0m.1-19.1h0m0 12.2h0m.1 2.3h0m.1 .6h0m0-8.6h0m.1 9.7h0m.1-6.6h0m0 13.7h0m.2 .4h0m0-29.7h0m0 3.3h0m.3-18.8h0m0 .1h0m0 .2h0m0 6.2h0m.1-4h0m.1-1.9h0m0 .7h0m0-2.1h0m.1 26.2h0m0-21.9h0m0-7.9h0m0 4.3h0m1.6 17.8h0m0 4.3h0m.2 5.8h0m0-18.6h0m0 15.3h0m.1 8h0m.4-9h0m0 13.8h0m0 6.5h0m.1 1.9h0m0-4.6h0m0-1.5h0m.1-4.4h0m0-2.1h0m.1-3.9h0m.2 12.1h0m0 4.5h0m.1-7.9h0m.1-8.2h0m0 .3h0m.2-24.7h0m0 35.5h0m.3 11.9h0m.1-59.3h0m.1-4.8h0m0 14.5h0m0-.8h0m.1-3.1h0m.4 10.4h0m.3-14h0m.2 5.1h0m0-17.8h0m0 17.3h0m.1-10.4h0m.1 17.1h0m.2-22.7h0m0 51.5h0m.1-26.9h0m.2 24.9h0m.1 4.7h0m.1-1.3h0m.1-35.4h0m.1-10h0m0-2.1h0m.1 7.3h0m.8 51.6h0m.1-51.4h0m0 4.9h0m.8 21.2h0m0 9.7h0m.1 5.6h0m.2-16.2h0m0 3h0m.5 1.7h0m0-28.3h0m.2 23.2h0m.4-26h0m.2 25.9h0m.1-21.8h0m.2 27.8h0m.2 .5h0m.1-34.3h0m.1-5.1h0m.1-4.4h0m.1 35.8h0m0 12.2h0m.7-40.2h0m.2-4.7h0m0-.1h0m.3 2.1h0m.5-6.8h0m.1 12.1h0m.1-9.9h0m0 11h0m0-8.3h0m.2-7.4h0m0 11.9h0m0 2h0m0 30.9h0m.1-33.9h0m0 5.2h0m0-5.1h0m.2-1.5h0m0 40.3h0m.1-8h0m.1-16.7h0m.2 18.4h0m.1-1.2h0m0 6.3h0m0-2.3h0m0 .3h0m0-3.7h0m0 3.2h0m0-2.6h0m.1 3h0m.2 9.6h0m.1-28.7h0m.6 24.7h0m.8-2.7h0m0 3.2h0m.1-44.8h0m.4 9.4h0m0 6.6h0m.5 3.6h0m.2-10.3h0m.2 31.6h0m0 12h0m.3-34.9h0m.1-16.4h0m.2 4.9h0m.4-3.1h0m0-3.7h0m.2-10.6h0m.3 15.4h0m.4 49.7h0m.1-12.2h0m.3 7.4h0m.7-6.9h0m.3-35.2h0m.1-7.3h0m0 4.4h0m.1 7.9h0m.1-2.7h0m0 2.8h0m.2-9.9h0m.1 7.7h0m.1 2.7h0m.1-9.2h0m0 4.3h0m0-11h0m1.1 47.7h0m.2 .4h0m.1 7.2h0m0-5.1h0m0-1.7h0m.1 2.1h0m.4 6.4h0m.1-5.2h0m0 .2h0m.6-35.8h0m0 38.8h0m.2-41.2h0m0-3.5h0m.1-6.2h0m.1 8.4h0m.8 41.3h0m.1 11h0m0-5.4h0m.8-47.8h0m.1 4.8h0m.2-1.3h0m1.3 38.8h0m.3 4.4h0m0-5.4h0m.1-1.4h0m.1 16.1h0m0-11h0m.1-11.1h0m0 8.5h0m0 9.4h0m.1-8.3h0m0-10.7h0m0-1.8h0m.1-36.2h0m.1-4.5h0m.3 44.4h0m0 1.7h0m.1 1.9h0m.1-.3h0m0-10h0m.4-26.3h0m.2 4.3h0m.1-2.7h0m0 .8h0m.1 1.2h0m.3 22.7h0m.5-34.2h0m.1 7.2h0m.2-1.6h0m.4 .5h0m.2 .1h0m0 32.3h0m.5-42.8h0m.2 3.2h0m.1 36.7h0m.1-25h0m.4 30.4h0m.2 .5h0m.1-35.7h0m.1 .3h0m0-5.6h0m.2 2.1h0m0-2h0m.2 7.3h0m.1 8h0m0-1.3h0m.2-2.6h0m.1-13.8h0m.1 15h0m.2 30h0m.1-25.8h0m.1 30.3h0m0-3.9h0m.1 6.7h0m.1 2.4h0m0-7.2h0m.1 5.4h0m1.2-42.4h0m.3 49.1h0m.1-53.6h0m.8 46.8h0m0-40.8h0m.1 37.8h0m0 10.4h0m0 4.1h0m.3-45.6h0m.5 37.6h0m.9-41.7h0m.1 33h0m.2-31.2h0m.2-7.4h0m1 2.6h0m.2 43.3h0m.3-47.5h0m0 4.6h0m.2 37.3h0m.2 3.3h0m0-3h0m.2-49.4h0m.2 3.8h0m0 47.9h0m.3-2.2h0m.4 3.8h0m.1 4.8h0m.1-54.3h0m.3 12.3h0m.1-7.3h0m.1-11h0m0 21.2h0m.1-5.9h0m.4 31.3h0m0 3.9h0m.4-5.5h0m.3 3.4h0m0-.7h0m.3-33.5h0m.7 7h0m.3 22.6h0m0 9.6h0m.3-3h0m.1 12.1h0m0-3.9h0m.1-45.6h0m0 6.2h0m.5-6.5h0m.1-3.6h0m.4-.7h0m.2 2.8h0m.3-3h0m.1-5.2h0m.3 59.7h0m.1-10.4h0m0-4.1h0m.1 1.2h0m0-1.6h0m0-4.4h0m.2 11.7h0m.1-56.1h0m.7 8.9h0m.1 49.2h0m1.1-6h0m.3-4.5h0m.1-1.5h0m0-37.3h0m.1 38.9h0m0 22.4h0m.4-20.8h0m.2-41.1h0m.1 1.8h0m.3-.8h0m.4 39.5h0m.6 10.4h0m0-39.2h0m.1-23h0m0 51.7h0m.3-47.8h0m.1 7.2h0m.1 44.6h0m0 5.1h0m.2-4.3h0m.1-5.9h0m.4-31.5h0m.2-4.2h0m.1 9.5h0m.1-3.5h0m0 11.9h0m.2 28.5h0m.1-54.6h0m0 43.5h0m.1-34.1h0m.1 33.9h0m.1-25.6h0m.1-14.7h0m0 2.6h0m.1-12.5h0m.1 32h0m0 11.5h0m.1-18.5h0m.1 20.3h0m.1-28.9h0m.2 25.8h0m.1-6.8h0m0-9.5h0m0-5.4h0m0-14h0m0 19.5h0m0 9.4h0m.2-12.9h0m1.3 .6h0m.1 4.6h0m.2 13.9h0m0 9.2h0m.1-4.6h0m0 9h0m.2-21.9h0m.1-23.3h0m.1 3.9h0m0-7.5h0m.2-2.6h0m0 6.6h0m0 7.6h0m.1-5.5h0m.3-6h0m.4 18.4h0m.1-14.7h0m.4 16.2h0m0-17.8h0m0 35.8h0m.2-4.7h0m0-27.3h0m.2 36.2h0m.2-33.5h0m.4 7.8h0m.1 31.1h0m.1-40.4h0m0 39.2h0m.2 1.5h0m.1-10.8h0m0-2.7h0m.1 14.5h0m.1-4.7h0m.1 4.9h0m0-29.2h0m.2-1.5h0m0-4.2h0m.3 40.9h0m.2-44.1h0m.2 2.4h0m0 .6h0m.1 35.6h0m.1 6.1h0m.3 .1h0m.3-2.4h0m.1 6.1h0m0-6.6h0m.2-1.6h0m.2-33.3h0m.3 35.3h0m.1 .2h0m0 12.6h0m.1-53.8h0m.1 9.1h0m.4 41.8h0m.1-17.9h0m.1 12.6h0m.1-37.1h0m0-4.5h0m.1 32.3h0m.7-47.8h0m.6 47.4h0m.7-40.4h0m.1 3.1h0m.1 3.4h0m1 33.3h0m0-2.6h0m0-1.4h0m.1-4.2h0m.8-30.7h0m.2 46.2h0m0-12.4h0m.4-1.1h0m0-30.8h0m.1 35.7h0m.3-35.4h0m.2 41.7h0m.1-59.2h0m.1-2.8h0m.6 46.9h0m.2 3.3h0m.1 2.2h0m.5-32.4h0m.1 25.9h0m.2 8.6h0m.2 5.7h0m.1-41.5h0m.1-5.5h0m0 .4h0m0 3.6h0m.1-6h0m0 4.9h0m.1-1.3h0m.2-4.9h0m.1 0h0m.3 5h0m.3 11h0m.1-20.5h0m0 5.3h0m0 2.4h0m.1 10.5h0m0-8.2h0m.1-11.6h0m0 15.2h0m0-6.9h0m.2-.5h0m.3 43.1h0m0-6.4h0m.3 14.2h0m0-9.2h0m.1 .3h0m0-.5h0m.2-4.1h0m0 .5h0m0 8.3h0m.3-7.8h0m.1 7.3h0m.3-5.7h0m0 17.8h0m.1-15.1h0m.4-1.2h0m.2-32.7h0m.2-4.3h0m0 8.5h0m0-2.2h0m.1 44.7h0m0-57.4h0m.1 48h0m.3-34.6h0m.1 26.7h0m0 7.3h0m.1 5.9h0m.1-42.7h0m.1-6.3h0m1.3 39.3h0m.3 22.3h0m0-25.5h0m.1 5.8h0m.1 7.6h0m0-15.4h0m0 10.1h0m.1-4.6h0m0 6.7h0m0-12.3h0m.2-2.3h0m0 2.9h0m.1 3.9h0m.1 9.8h0m0-1h0m0-10.2h0m.3-28.5h0m0-2.8h0m.1-4.8h0m0 1.4h0m0-7.5h0m.1 .4h0m0 2.7h0m0 2h0m0 6.3h0m.1-9.4h0m0 .1h0m.2 5.9h0m0-.3h0m1 34.1h0m1.4-4.9h0m.1-30.4h0m0 5.2h0m.3 0h0m.3 26.1h0m.1 2.6h0m0-1.5h0m.2 6.7h0m.1-3.1h0m.1 7.9h0m.1-6.9h0m.4 23h0m.4-19.3h0m.1-43.3h0m.1 6.3h0m0-12.8h0m.5 44.5h0m0 2.8h0m.2 .7h0m.1 4.8h0m.3-8.8h0m.8-2.7h0m.2 6.5h0m.1-43h0m.4 2.9h0m.1-.2h0m0 .8h0m0 5h0m.1-4.4h0m.2 1.2h0m.2 2.3h0m.1 28.1h0m1.3-37.6h0m0 .1h0m.2 1.2h0m.2 .8h0m0 56.6h0m.8-58.9h0m.2 36.7h0m.2 5.6h0m.9-37.4h0m.6 1.8h0m.1-12.6h0m.4 41.7h0m0-31.1h0m.2-3.5h0m0-2h0m.2 12.6h0m.3 30h0m.3 4.5h0m.1-8h0m0 5.7h0m0 14.9h0m0-19.4h0m.1 .5h0m.1 0h0m.4-35.7h0m.2-6.4h0m0 16h0m.1-4.2h0m0-1.5h0m.1-3.9h0m.3 42.8h0m0 1.6h0m.1 9.7h0m.1-9h0m.3-4.1h0m0-8.5h0m.1 10.1h0m.3-4.9h0m.1-.9h0m.1 7.8h0m.1-43.1h0m0 32.1h0m0-2.8h0m0-21h0m.5-12.8h0m.1 5.9h0m0-.5h0m.3 4.2h0m.1 11.6h0m.1 3.9h0m.1-22.8h0m.1 13.6h0m.1-.4h0m0 4.3h0m.1-4.9h0m0-6.5h0m0 14.5h0m0-6.7h0m0 8.3h0m.1-13.2h0m0 21.5h0m0-21.4h0m.1 2.2h0m0 3.4h0m.1 13.5h0m0 12.4h0m.1-11.4h0m0 0h0m0 7.2h0m0-9h0m.1-15.7h0m0 13.3h0m0 4.7h0m0-13.5h0m0 4.8h0m0 15h0m0-10.7h0m0 .2h0m0 9.3h0m.1 .5h0m0-.1h0m.1-.4h0m2.9-10.9h0m.1-2.7h0m0-1.8h0m0-5.6h0m.1-7.1h0m0 2.2h0m.1 19.5h0m0 9.6h0m0-8h0m0 29h0m.2-23.7h0m0-8.9h0m.1 8.3h0m0 4.8h0m0 2h0m.1-6.1h0m0-33.4h0m.1 56.1h0m0-3.1h0m.1-8.5h0m0-42.4h0m.1 14.1h0m0 13.7h0m.1-.1h0m0 1.4h0m0 9.1h0m0-8.8h0m0 13.3h0m0-15.1h0m.1-34.7h0m.1 20.6h0m0-.6h0m.1-.7h0m0-12.1h0m.2 8.5h0m0-13.5h0m0 11.6h0m0-10h0m.2-6h0m.2 19.4h0m.2-9.2h0m.1 9.5h0m0-7.3h0m0-9.3h0m.4-7.7h0m.1-.7h0m.2 58.4h0m0 .1h0m0 .7h0m.2 1.2h0m0-4.7h0m.3-3.7h0m0-7.3h0m.3-.9h0m0-1.1h0m.1-.3h0m.2-34h0m0 10.1h0m.2 41.6h0m.1-2.1h0m.1-16.4h0m0 16h0m.1-.7h0m0-32.3h0m.1-2.3h0m.2 19.1h0m0 10.7h0m0-5.4h0m.3 0h0m.2-44.4h0m0 14.5h0m.2 0h0m0-5.5h0m.1 3.7h0m0-.5h0m.1-7.5h0m.1 5.4h0m.1 1.1h0m.1 .7h0m0-11.7h0m0 9.5h0m.1-8.8h0m.1 10.3h0m.2-5.4h0m0 3.1h0m0 4.1h0m0-7.4h0m0 6.5h0m0-.1h0m.1 15h0m0-19.9h0m.2 14h0m.1 3h0m.3 40h0m.1-40.8h0m.1 16.5h0m0-24.1h0m.2 26.2h0m0 0h0m.3 15.8h0m0 2.8h0m.2-40.9h0m.1 33.6h0m0-2.8h0m0 15.7h0m0-15.2h0m0 2.3h0m0-2.4h0m.1 3.6h0m0 1.3h0m.1 2.9h0m.2 3.3h0m.9-1.8h0m0 5.3h0m.1-42.2h0m.1 2.5h0m.1-5.8h0m0-4.7h0m.8 43h0m.3 6.6h0m.3-47h0m.3 40h0m.8-34.7h0m0-12.7h0m.1 1h0m.1-3.7h0m0 3.3h0m.1 7.9h0m.1 1.6h0m0-19.9h0m.1 1.2h0m.4 63.6h0m.6-49.1h0m0-6.2h0m0 6.2h0m.2 43.3h0m0-.7h0m0 .8h0m0 10.6h0m.2 0h0m.3-10.3h0m.7-47.6h0m0 11.6h0m.4 35.4h0m0 10.5h0m.1-49.2h0m0 34.4h0m.2 1.4h0m0-32.7h0m.1 23.7h0m.2-26.1h0m.1 27.1h0m0-8.7h0m.2-25.2h0m.1-10.1h0m0 9.3h0m0 24.5h0m.1-19.4h0m0-7.3h0m.1-6.1h0m0 2.5h0m0 9.1h0m.2 28.8h0m.1 5.9h0m.1 2h0m0-11.9h0m.4 3.1h0m0-36.1h0m.1-11h0m.1 12h0m.2-8.1h0m.3 42.1h0m.1-1.7h0m.1-4.4h0m.1 12.1h0m.1 .6h0m.5-52.8h0m.1 1.9h0m.1 11h0m0-13.7h0m.3 5.3h0m0 7.7h0m0-1.4h0m.1-1.3h0m0 4.7h0m.1-6.1h0m.2 55.8h0m0-53.4h0m.1-4.8h0m.3 36.6h0m.2-20.6h0m0 21h0m0-19.9h0m.5-7.7h0m.4 30.5h0m0-.1h0m.2 14h0m.1 .4h0m.2-2.9h0m0-2.9h0m.1-.9h0m.1 9.9h0m.2-10.7h0m0-.3h0m.1 11.4h0m0-16.4h0m.3-26.7h0m.3 4h0m0-8.8h0m0 34.1h0m.2 22.1h0m.4-16.2h0m0 4.2h0m.1-5.4h0m0 5.6h0m.3-38.1h0m.9 48.5h0m.3-8.2h0m0-8.8h0m.6-41.9h0m0-7.1h0m.1 58.2h0m0-47.5h0m.4-1.9h0m0-6h0m.1 3.8h0m.1-5.6h0m0 3.6h0m.9-6.5h0m.1-4.4h0m.7 56.1h0m.5-2.8h0m.1 2.8h0m.1-6.1h0m1.1-44.2h0m0 42.6h0m.1-41.3h0m0-3.3h0m.7 4.4h0m.3 45h0m.1-49.4h0m.6 52.4h0m.2-.1h0m.1-7h0m.3 3.8h0m.1 15.6h0m.2-13.4h0m.2-5.1h0m0 15.1h0m.1-6.7h0m.3-31.1h0m.1 1.4h0m.4-21.3h0m0-4.1h0m.2 2.3h0m.2-2.2h0m0 22.5h0m.3-20.6h0m.2 3.8h0m0 3.1h0m0-8.9h0m.1 6.8h0m0-9.5h0m.1 3.9h0m0 5.8h0m0-7.3h0m.8 52.2h0m0 .4h0m0 5.3h0m0-9.7h0m.2 .5h0m.1 5.3h0m.1 11.1h0m0-9.2h0m.1 3.1h0m.2-6.3h0m.2-5.2h0m.1 23.9h0m.1-73.8h0m0 13.3h0m.1 15.3h0m.1-7.4h0m0 .1h0m0-1.6h0m.1 6.7h0m.2-.5h0m0-.1h0m.2 22.6h0m.3-22.9h0m.2-1.3h0m.4 28.9h0m.1-34.6h0m.2 10.2h0m.4-21.9h0m0 16.8h0m.1-1.4h0m0-8h0m.3 2.2h0m0 57.1h0m.1-16.7h0m.1-5.6h0m.1 12.2h0m.1-1.4h0m0-.4h0m.1-5.2h0m0 10.8h0m0-5.7h0m.1 2.1h0m0-6.2h0m0 4.7h0m.1-1h0m0-10.8h0m0 5.9h0m.1-6.3h0m.8-23.4h0m.2-26.7h0m.1 24.6h0m0-1.2h0m.1 27.2h0m0-41.6h0m.1 42.1h0m.2 3h0m.2-.8h0m.3-5.2h0m.3-29.6h0m.1-4.3h0m0 5.4h0m0 1.7h0m.1-10.6h0m0 4.3h0m0-10.2h0m.6-2.6h0m0 14.5h0m.1-5h0m0-3.1h0m.1-.2h0m.1 1.7h0m.3 8.1h0m.1-13.1h0m0 11.7h0m0 30.8h0m.1 5.1h0m0 18.3h0m.3-58.1h0m.1-1.5h0m.1 .5h0m0-10.7h0m.1 18.1h0m.4 30.1h0m.1-.8h0m0 1.6h0m.1 11h0m0-.3h0m.2 7.4h0m.1-6.8h0m0-14.6h0m0 9.8h0m.1-6.5h0m.1 4.8h0m.1 5.3h0m0 11.5h0m.3-20.2h0m0-6h0m.1 8.6h0m0-38.6h0m.4 5.7h0m.1 23.2h0m.1 4.3h0m0-6.3h0m.1 .5h0m.4 13.1h0m0-29.1h0m.2-12.5h0m.2 2.8h0m0-11h0m.1 7.3h0m0 9.2h0m.1-7.5h0m.1-4.7h0m0-10.2h0m0 12.2h0m.1 18.8h0m0 6.9h0m0-18h0m.1-4.1h0m0 1.8h0m.1 6.3h0m0-11.6h0m0 5.9h0m0 21.4h0m.1-22.5h0m0 3.9h0m0 0h0m0 7.5h0m0 12.5h0m.1-12.5h0m0 12.7h0m2.9-4h0m.1 5.2h0m0-10.9h0m0-2.1h0m.1 .8h0m0-2.3h0m0-5.5h0m0 4.5h0m.1-1h0m.1 13h0m0 6h0m0 .9h0m0-23.7h0m0-1.4h0m.1-4.9h0m0-6.2h0m.1 29.8h0m0 4.3h0m.1 8.2h0m.1-.3h0m0-10.3h0m.1 8.4h0m0 4.5h0m0 1.8h0m0-8h0m.1 10.6h0m0-6.9h0m0-1.3h0m0-2.8h0m.1-1.4h0m.1 7.7h0m.1 2.6h0m0-38.2h0m.2 6.9h0m.3 31.4h0m.3-6.3h0m.5-41h0m.6 10.6h0m0-5.4h0m0 .9h0m.1 4.8h0m.4-1.3h0m.3-1.3h0m0-14.2h0m.1 55.3h0m0-50.8h0m.1-1.8h0m.2 44.1h0m0-32h0m.2 4.7h0m.2 35.5h0m.5-5.8h0m.1 2.2h0m0 2.2h0m0 5.4h0m0-11.1h0m.1 .2h0m0 12.7h0m.1-11.1h0m.6-38.4h0m.4 7.7h0m1.1 40.9h0m0-47.2h0m.1 5.5h0m.3-.8h0m0 2.4h0m.2-1.4h0m.1 35.3h0m.4 .1h0m.2-32.6h0m0-8.8h0m.1 41.8h0m.2 6.4h0m0-49.8h0m.4 1.4h0m.6 36.8h0m.3 6.3h0m.4 15.1h0m.3-12.2h0m.1-37.1h0m.1 33.5h0m.2-3.7h0m0 12.1h0m.1-15.9h0m0 5.7h0m.1 3.7h0m.5-36.1h0m.1-20.8h0m0 12.9h0m.2 4.5h0m.5 2.5h0m0 25.7h0m.1-35.3h0m.1 8.2h0m.6-11.6h0m0 53.2h0m.1-9h0m.1-43h0m.1 7.5h0m0 .4h0m.3 39.9h0m.1-43.9h0m.2-16h0m.7 16.5h0m.5 34.9h0m.1-39.8h0m.4 7.1h0m.2-.1h0m.7 32.8h0m.4-45h0m.3 10h0m0 3.6h0m0-18.2h0m0 12.4h0m.1-14.4h0m.3 20.9h0m.2 .3h0m.1 33.7h0m.1-38.1h0m.2 34.4h0m.3 12.7h0m.6-39.7h0m.7-8.6h0m.6 42.2h0m0-5.2h0m.2 17.1h0m.1-12.5h0m.1-34.5h0m.1 38.7h0m0-4.4h0m0-3.2h0m.5 .5h0m.2-30.8h0m.2 31.9h0m.1-29.3h0m.2-4.7h0m.2 35.4h0m.3 5h0m.1-40.2h0m.1 32.4h0m0 14.7h0m.3-13.5h0m.1 15h0m.1-56.1h0m.1 56.1h0m.2-50.1h0m.2-2.7h0m0 .7h0m0-1.3h0m0 2.1h0m.1-8.3h0m0 9h0m0-9.8h0m.1 5.6h0m.8 42.4h0m0-6.2h0m.5-45.5h0m.2 9.9h0m.6-7.5h0m.4 59.7h0m.1-3.9h0m.2-8.2h0m.1-2.1h0m.6 5.4h0m.4-33.7h0m0-1.2h0m.1-7.1h0m.1-4.1h0m0 9.8h0m0-6.7h0m0 14.8h0m0-21.9h0m.1 .9h0m.1 2.2h0m.1-8.1h0m0 25.7h0m.1-10.5h0m0 3.4h0m0-8.7h0m0 18.4h0m.3 40.6h0m.5-12.2h0m.2 1.6h0m.6-35.9h0m.1 6.6h0m0 36.5h0m0-10.3h0m.2 9.2h0m0-3h0m.1-2.5h0m0 2.1h0m.1-3.8h0m.2-9.5h0m0-30.2h0m.5 33.8h0m.3-42h0m0 16.1h0m0-9h0m.3 2h0m.2 30.5h0m0-22.7h0m.1 1.6h0m.1 17.7h0m.1-34.5h0m0 3.1h0m.1-2.9h0m.1 10.6h0m.1 32.3h0m.4-3.5h0m.4-30.3h0m.3-11.6h0m0 2.2h0m.5 6.2h0m.1 .5h0m.3-2.1h0m0 4.4h0m0 .4h0m.1-24.3h0m.1 15.3h0m0 47.2h0m.2-40.1h0m.2 30h0m.1 5.9h0m.1-4.1h0m.1-4.4h0m.2-32h0m.1 57.5h0m.2-49.3h0m0 42.1h0m.5-4.7h0m.1-7.3h0m.2-47h0m.5 17.1h0m.1 30h0m0-48.8h0m.1 21.5h0m.2 34.3h0m0-50.8h0m0 16.9h0m.1 1.2h0m.1 29.8h0m0-32.3h0m0 40.1h0m.1-5.9h0m.2-59.6h0m1.3 70.1h0m0-8.3h0m0-7h0m.2 5.6h0m0 5.2h0m.2-9.9h0m.2 3.8h0m.8-36h0m.1 34.5h0m.2-30h0m.5-.2h0m.1 18.8h0m0-26.7h0m.1 5.1h0m.2-2.7h0m.1 26.6h0m0-.2h0m0 7.2h0m0 .3h0m.1-3.6h0m.1 .6h0m.2-2.8h0m0 6.4h0m0-6.5h0m.1-47.5h0m.3 14.7h0m.1-1.9h0m0-.6h0m.1-12.3h0m.1 10.3h0m.1 .1h0m.1 0h0m0-4.7h0m0 4.6h0m.2-4.4h0m0-.7h0m.1-6.4h0m0 5.6h0m.1-7.7h0m.1 3.8h0m0 2.1h0m.1 4.6h0m.1-3.3h0m0 13.4h0m.3 24.4h0m.1-32.2h0m0-6h0m.1-1h0m0 7.7h0m.1 8.7h0m.1-8.4h0m0 9.3h0m0-.7h0m0 3.3h0m.1-6.8h0m.4 8.9h0m.1 15.7h0m0-12.7h0m0-.8h0m0-5.1h0m0 6h0m0 16.9h0m.1-19.7h0m.1 17.9h0m.1-1.9h0m0 17.7h0m0-2.4h0m0-6.5h0m0-12.1h0m0 24h0m.1-22.7h0m0-10h0m0-15.6h0m.1 22.8h0m0-4.5h0m2.9 28.6h0m0-13.6h0m.1 4.7h0m0 3.9h0m0 3.6h0m.1-18.1h0m0 3.6h0m0-3h0m0 1.1h0m0-19.4h0m0 7.5h0m.1 3.8h0m.1 2.4h0m0 18.4h0m0-2.1h0m0-20.2h0m0 22.3h0m.1 2h0m.1-6.4h0m.1-12.8h0m0 .6h0m.1 22.6h0m0-13.1h0m0-26.9h0m0 7.2h0m.1 20.8h0m.1 17.7h0m.1-41h0m.2 41.4h0m.1-48.9h0m0 44.2h0m.1-7.8h0m0 11.5h0m.1 2.8h0m.1-2.7h0m.5-50.1h0m.2-10.5h0m.3 5.7h0m.6 38.9h0m.1 1.6h0m.1 3.5h0m.1 2.3h0m.1-45.6h0m.5 33h0m0 3.4h0m.1-3.6h0m.1 15.9h0m0-14h0m.2-44.6h0m.1 12.3h0m.1 28.3h0m0 11.9h0m0-40.6h0m0-6.7h0m.1-6.1h0m.2 8.9h0m0-6.1h0m.1 0h0m.1-9.8h0m.4 12.4h0m.1-7.6h0m.2 10.3h0m.3-6.1h0m.2-.3h0m.2 50.9h0m0-11.9h0m.1 7.1h0m0 10.5h0m.1-59.7h0m0-8.2h0m.2 23.5h0m.1-5.3h0m0 3.7h0m.1 10h0m.1-7.2h0m0-3.8h0m0 11h0m0-17.6h0m.2 19.8h0m0 1.3h0m0-1.7h0m.1-6.5h0m.1 3.3h0m0 4.9h0m0-9.5h0m0 26.9h0m.1-.9h0m0 11.3h0m0-10.3h0m.1 2.1h0m.1-11.8h0m.1-23.6h0m.2 48.9h0m.1-9.8h0m.1 2.5h0m.2 15.8h0m.2-17.9h0m.1 7.8h0m0-.9h0m.1 9.5h0m.1-3.7h0m0 .6h0m.1 1h0m.1 .6h0m.4-28.9h0m0-4.1h0m.2-4.4h0m.1-34.5h0m0 72.8h0m.6 1.9h0m0-4.1h0m.1-39.9h0m.3-10h0m0 10.1h0m.1 11.1h0m.1-1.5h0m.1 29.8h0m.2-55h0m.2 24.5h0m0-14.7h0m0 11.5h0m.1 3.2h0m0-14.7h0m.1 45h0m.6 4.1h0m.2-41.7h0m.2-12.2h0m.2 43.8h0m0 3h0m0 6.7h0m.3 .2h0m.5-61.3h0m.1 26.7h0m.1 14.9h0m.2-15.1h0m.1-1h0m0 18h0m0-24.6h0m.1-8h0m.2 34.3h0m.3-41.1h0m.2 11.4h0m0 31.5h0m0-2.6h0m.1 6.4h0m0-.9h0m.2-36.1h0m0 .1h0m.1 2.1h0m.2 24.3h0m.3-28.8h0m0 6.2h0m.2-10.9h0m.1-20h0m.3 21h0m.3-6.1h0m0 .5h0m.3 9.3h0m0 24.3h0m0 4.4h0m.1-46.4h0m.3 8h0m.1 .9h0m.2 31.4h0m.1-30.4h0m.4 5.9h0m.3 28.8h0m0 3.9h0m.1-9.8h0m.1 12h0m.1 12.8h0m0-8.3h0m0-10.6h0m0 9.1h0m.1 4.5h0m0-.5h0m0 9.6h0m.1-10.2h0m0-8.3h0m.1 8h0m0-11.7h0m.8-33.3h0m.2 35.4h0m.2-40.2h0m.3-7.8h0m.1-.8h0m0 40.9h0m.1-35.3h0m.5 43.4h0m.2-36.4h0m0-2h0m.2 .2h0m.1-11.6h0m.5 4.5h0m.5-3h0m0 2.1h0m.1-.5h0m0 7.8h0m.1-5.4h0m.1 20.7h0m0-3.1h0m.2-16h0m.2-8.4h0m.2 9.8h0m0 35h0m.2 7.4h0m.1-23.7h0m0 20.1h0m.2 17.9h0m0-2.9h0m.2-18.7h0m0 15h0m0-6.5h0m.2 .5h0m.1 11.8h0m.2-41.7h0m0-14.5h0m.3 36.5h0m.1-32.6h0m0 40.1h0m.3-7.4h0m.2-30h0m0 53h0m.1-9.7h0m0-40.8h0m.1 32.2h0m0-22.3h0m.2-5.6h0m0 40.4h0m.1 5.4h0m0-4.5h0m.1-5.8h0m.2-.8h0m0-30.7h0m0-2.1h0m.2 43h0m0-11h0m.2-.1h0m.1-34.9h0m.2 31.9h0m.2 5.2h0m.1-33.5h0m.1-5.1h0m.1 15.1h0m.2-22.2h0m.3 20.8h0m0-7h0m0-7.3h0m.1 7.8h0m.2 .8h0m0 8.6h0m.4-8.3h0m.2 32.4h0m0 5.8h0m.3-29.8h0m0-22.1h0m.2 21.9h0m.1 26h0m.2-25.9h0m.3-14.3h0m0 10.8h0m0 30.2h0m.1 7.6h0m.1-6.3h0m.3 8h0m.1-2.2h0m.2-12.7h0m.2 9.9h0m.4 3.9h0m0-6.2h0m.1-35.6h0m0 5.2h0m.2 31.3h0m.1-7.2h0m.3 4.6h0m0-4.8h0m.3-3.8h0m.2-34.3h0m.1 40.2h0m.1-55h0m0 22h0m.1 .1h0m.1-4.5h0m0-3.3h0m.1 5.3h0m0-.5h0m.2-1.3h0m0-15.3h0m0 12.9h0m0-5.4h0m0-4.6h0m.2-9.3h0m.2 14.5h0m.2-8.2h0m.1 8.9h0m.1-3.8h0m0 4.8h0m0-12.1h0m0 2h0m0-.4h0m0-4.4h0m.1 15.3h0m0-6.1h0m.1-10.3h0m0 .4h0m.1 13.7h0m.2 5.3h0m0-7.7h0m0-.3h0m0-9.2h0m.1 15.1h0m.1 12.7h0m.1-19.4h0m0 18.8h0m0-.8h0m.1 .2h0m.1 23.6h0m0 2.5h0m0 8.1h0m.1 .4h0m.3 6.4h0m0-17.1h0m0 2.8h0m.1 1.9h0m0 4.7h0m.2-45.7h0m.1-1.1h0m.1 16.9h0m0 34.9h0m.2-.6h0m0-7.5h0m.2-5.8h0m0-1.3h0m0 14.2h0m0-44.6h0m0 20.1h0m.1 28.1h0m.1-20.2h0m.1 6.2h0m.1-2.1h0m0-19.4h0m0 21.7h0m0-7.2h0m.1-13.2h0m0 9h0m0-5h0m.1-2.8h0m0 4.1h0m0-1.5h0m.1-6.8h0m0 12.9h0m0-17.8h0m0 20.6h0m.1-12.4h0m0 10.1h0m0-2.5h0m0-19h0m0 15.7h0m3.1 3.6h0m.1 5.8h0m0-13.5h0m.1-4.7h0m0 11.7h0m0-15.6h0m0 19h0m0 4.7h0m0-7.3h0m0 4.8h0m0-10.7h0m0-3.4h0m.1 13.3h0m0-42.3h0m0 36.9h0m0-5.5h0m0 1h0m0 18.3h0m.1-18.2h0m0 13.1h0m0-14.4h0m0 21.1h0m.1-20.7h0m0-3.6h0m0-4.9h0m0 10.6h0m0 13.1h0m.1-8h0m.1-6.1h0m0-8h0m.2 27h0m0-37.4h0m.1 6.6h0m0-6.9h0m.1 5.4h0m0 28.3h0m.2-12.2h0m.1-20.8h0m0-7.1h0m0 9.1h0m.1-18.1h0m0 19.6h0m0 23h0m.1-26.3h0m.1 .3h0m0-4.2h0m.1 1.7h0m.1-18.1h0m0 3.8h0m0 6h0m0 .3h0m0-13.2h0m0 3.1h0m.1 4.4h0m.1 3.5h0m0-3.9h0m.1 6.6h0m.1 3.4h0m.2-4.9h0m0 7.4h0m.3-14.2h0m0 10.8h0m.1 6.9h0m.1-2.5h0m.3 38.2h0m.3-33.1h0m.1 30.6h0m0-4.3h0m.2 0h0m0 1h0m0 12.7h0m.8-10.3h0m0 2.8h0m0-1h0m.4-42.5h0m.1 11.1h0m.3 34.7h0m.3-39.8h0m.3 27.4h0m0 6.8h0m0-44.3h0m0 12.1h0m.1 2.6h0m.3 31h0m0-37h0m.1 32.1h0m.5-34h0m0-1.1h0m.1-11.5h0m.1-3.6h0m.1 8.7h0m.3-.9h0m0 3.1h0m0 40.4h0m.1-38.9h0m0-11.1h0m.1 3.8h0m0 6h0m.4-.7h0m.3-2.6h0m.2-3.8h0m.1 42.9h0m.2-2.9h0m.1 .5h0m.1 4.7h0m0 16.5h0m.2-18h0m0-7.8h0m.1 2.8h0m0 3.6h0m.5-4.6h0m.3 26.6h0m.2-18.2h0m0-3h0m.2-47.6h0m0 13.8h0m.2 44.6h0m0-20.4h0m.2-33h0m0-4h0m0 2.2h0m.1 7.1h0m0 41.4h0m0-41.2h0m0-1.3h0m0-6.4h0m.1 7.1h0m0-9.1h0m.1 10.3h0m0 4.3h0m.1-9.7h0m0 9.4h0m.1 .5h0m.2 1.2h0m.1-11.2h0m0 .8h0m.2 54.1h0m.1-47.1h0m.3 4h0m.2-9h0m.1 34h0m.1 .2h0m0-2.2h0m.1 13.8h0m0-12.4h0m0-2.7h0m0 14.5h0m0-9.5h0m.1 10.7h0m0-13h0m0-2.4h0m0 18.3h0m.2-12.3h0m.3 14.7h0m.7-3.8h0m.3 6.9h0m.3-15.3h0m0-31.8h0m.3-15.3h0m.2 10.4h0m.1 4h0m.2 29.7h0m.2-45.2h0m.1 69.3h0m.2-54.5h0m0 1.8h0m.5-4.3h0m.1 6.2h0m0-9.7h0m.2 46.1h0m.1 5.7h0m.3 9.1h0m0-21.4h0m.8 11.8h0m.2-7.7h0m0 .7h0m0 5.3h0m.1 5.8h0m.2-44.8h0m.2-3.9h0m0 40.9h0m.3-42.7h0m.1-7h0m.2 3h0m.4 8.1h0m.1 35.9h0m.2-3.8h0m.3-37.9h0m.1 3.6h0m0 52.6h0m.3-46h0m.6 28.5h0m.2 23.4h0m.1-11.5h0m.1 .4h0m0-11.7h0m0 3.6h0m.1-1.6h0m0 9.1h0m.1-15.7h0m0 2.2h0m.1 8h0m.1-7.6h0m.2 4.5h0m.1-3.8h0m.2-43h0m.1 43.6h0m.5-46.6h0m.1 .9h0m0 10.5h0m.1-5.8h0m.1 3h0m.2 .1h0m0 .4h0m.1-1.3h0m.1 11.2h0m0-11.7h0m0 9.2h0m.1-18.2h0m0-.3h0m0-2.7h0m.1 9h0m0-10.2h0m0 12.4h0m.1-.9h0m0 2.8h0m0-3.2h0m.1 11.8h0m0-21.2h0m0 4.4h0m.1 41.2h0m.2-32.3h0m.3-10.8h0m.1 20.3h0m0-8.2h0m.2 41.8h0m.1 3.2h0m0-7.4h0m0-44h0m.2 49.8h0m.1-9.9h0m.1 1h0m.1-.6h0m.1 6.7h0m.1-36.6h0m.2 35.8h0m.1-3.2h0m0-.7h0m.1 12.1h0m0-11.9h0m.1 9.8h0m.3 5.2h0m0-45.6h0m.1-3.3h0m.3 8h0m.2-9.4h0m.4 5.1h0m1 46.4h0m.3-41.8h0m.1 3h0m.2 36.2h0m.2-1.9h0m.2 9.2h0m.3-40.3h0m.4 3h0m.1 12.4h0m.6-15.4h0m.1 18.5h0m.2 21.4h0m0-24.9h0m.2 19.1h0m0-4.8h0m1.6-26.4h0m.1-7.7h0m.1 34.3h0m0-31h0m0-2.9h0m0 2.6h0m0-11.5h0m0-2h0m.1 11.7h0m0 21.4h0m.1-24.3h0m.2 8.5h0m.5-9.9h0m.3-.6h0m.1 39.7h0m1-47.2h0m.1 2h0m.7 43.9h0m.4-37.7h0m.3 37.1h0m0-9.3h0m0 13.2h0m.7-38.6h0m.2-3.4h0m0 .4h0m0 3.4h0m0-5.1h0m.1-2.4h0m0-1.4h0m.7 37.9h0m.1 2.4h0m.1-4.2h0m.1-31.4h0m0-5.7h0m.1 1.1h0m.5 40.4h0m.3-39.3h0m.2 31.9h0m0-39.7h0m.1 15.7h0m.1 24.1h0m.5-28.9h0m0 30h0m.4-26.3h0m.5-6.4h0m0 35.1h0m.2-29.3h0m0-3.5h0m.1 35.1h0m0-41.7h0m.2 .7h0m.4 55.8h0m.2-13.4h0m.4-31.8h0m.3-2.6h0m.4 35.5h0m.1-46.7h0m0 53h0m.1-3.6h0m0-4.3h0m.1 5.3h0m.1-5h0m0 3.9h0m0-2.3h0m0 3.1h0m.1-5.7h0m0 10h0m.1-10.6h0m.1 3.7h0m.1-4.3h0m0 8.5h0m.1-.2h0m.1-8.5h0m.3-4h0m0 3h0m.3-5.4h0m.7 3.6h0m.1-5.2h0m0-22.4h0m.3-6.3h0m0 1.3h0m.1-9.3h0m0 8.2h0m0-10.5h0m.1 13h0m0 2.2h0m.1-.4h0m.1-5h0m0-7.3h0m0-5.4h0m.1 4h0m.1 7.4h0m.1 .4h0m.6-4.8h0m0-.1h0m.2-10h0m0-.5h0m0 12.2h0m.2 33.5h0m.6 3.9h0m.1-1.2h0m0 3.8h0m.2-44.2h0m.4-1.3h0m0-1.8h0m.9 4.9h0m0 3.4h0m.2 2.3h0m.3-.4h0m0-5.5h0m.2-10h0m.1 61.5h0m.3-7.5h0m.2 2.6h0m.1-.9h0m.6 6.3h0m.8-53.6h0m.1 48.3h0m.1-38.8h0m.4 35.9h0m.3-47h0m.3 44.1h0m0 7.4h0m.4-56.6h0m.2 9h0m.1-5.1h0m.1-6.1h0m0 14h0m.1-6.9h0m0 5h0m.1 1.2h0m.1-1.6h0m0-4.9h0m.1 9.4h0m0 .4h0m.3 52.1h0m.5-55.9h0m0 0h0m.4 38.8h0m.2 3.8h0m.1-2.1h0m.3 2.2h0m0-2h0m0 13.1h0m0-10.2h0m0 .3h0m.1 12.3h0m0-57.4h0m.3 40.4h0m.2-2h0m.2-33h0m.2 32.5h0m.6 3.6h0m0-4.6h0m.4 5.2h0m0 .4h0m.6-38.5h0m.7 30.9h0m.3 7.5h0m.1-8.4h0m1.7-37.4h0m0-.3h0m.1 0h0m.1 7.4h0m.4 52.2h0m0-23.6h0m.1-33h0m.1 29.2h0m.1 1.9h0m.1-5.1h0m.5-33.1h0m.1 2.4h0m.1 7.4h0m.1-16.3h0m.2 15.2h0m.7-3.2h0m.1-3.4h0m.3-1.7h0m.2 60.9h0m.1-14h0m.2-16h0m.2 11.3h0m.2-7.7h0m.1 1.3h0m0 4.1h0m.2-.5h0m.3-1.5h0m.5-31.8h0m.1 26.5h0m.3 9.4h0m0-35.9h0m.1 35.6h0m0 1.3h0m.3 8.6h0m0-8.1h0m0 1.1h0m.1 11.4h0m0-15h0m.1-4.6h0m.1 19.2h0m.2-52.3h0m.1-.3h0m.5-6.5h0m0 6.4h0m.5-9.1h0m.3 42.2h0m.2 4.5h0m.2-40.7h0m.1-3.1h0m.1 4.4h0m.2-.1h0m0-3.5h0m.4 40.4h0m0-.9h0m0 1.1h0m0 4h0m0 1.3h0m.1-5.9h0m0-32.9h0m.1 41.1h0m.3 15.8h0m0-16.4h0m.1 9.5h0m0-13.1h0m0 5.9h0m.1 2h0m.5-43.3h0m1.3 2.1h0m.5 36.5h0m.3-4.2h0m.4-27.3h0m.1-9.1h0m0 51.8h0m.3-51h0m.3 9.4h0m0-14.3h0m.1 8.3h0m.2 6.2h0m0-3.3h0m.2-14.6h0m.2 45h0m.1 7.4h0m.2-1.1h0m0 7h0m.1-3.8h0m.2-4.3h0m.1-1.7h0m.8 9h0m.1 7.9h0m0-18.3h0m.1 10.2h0m0-10.9h0m.2 7.5h0m.4-44.2h0m0-12.3h0m.3 15.9h0m.2-8h0m.1 12h0m0-.5h0m.1-1h0m.1-.9h0m.4-6.6h0m.1-1.9h0m0-2.6h0m0 2.1h0m0-1.7h0m.6 45.2h0m.2-.9h0m.1 .5h0m.2 3.1h0m.1-5.8h0m1.7-39.4h0m0-10.2h0m0 4.3h0m.1-3.1h0m.2 10.7h0m0 1.5h0m.2-9.1h0m0 2.2h0m.7 53.4h0m.1-3.8h0m.2-5.3h0m.3 .3h0m.1 .1h0m.2-36.4h0m.9 45.4h0m.1-.9h0m0-.1h0m.1-.7h0m.5-45h0m.5-3.8h0m.2 12.6h0m.1-2.5h0m.2 32.7h0m.3 .9h0m.3-40.9h0m1 42.3h0m.1-39.2h0m.3 1.1h0m.1 5.9h0m.4-10.4h0m.1 5.8h0m.1 1.8h0m.8-5.7h0m.1 .8h0m.1 4.6h0m0 3.2h0m.1-.2h0m.1 30.9h0m.3-33.5h0m.1 33.5h0m0-27h0m.3 38h0m.4-43h0m0 7.9h0m.5-3.7h0m.2-4.5h0m0-5.2h0m.1 9.1h0m.5 27.8h0m0 4.5h0m.1-.9h0m.4-3.4h0m.2 18.7h0m0-19.8h0m.1 10.1h0m.1-11.3h0m0-21.1h0m.3-.1h0m0 28.1h0m.2-35.3h0m0-5.9h0m.6 51h0m0-13h0m.2-26.6h0m.1-1.3h0m.3 22.6h0m.2-2.9h0m0-48.2h0m.2 57.7h0m0-6.8h0m0 10.1h0m.1-1.2h0m.1-37.9h0m.1-6.8h0m.1 2.1h0m0 1.9h0m0-4.9h0m.2 2.3h0m.1 5.1h0m0-12.6h0m0-.6h0m.3 33.6h0m.2-30.7h0m.1-1.1h0m.2-1.6h0m.2-9h0m.4 45.5h0m.2-36.6h0m.1 6h0m0-10.9h0m0 7.4h0m.2 2h0m.3 34.3h0m.2-29.6h0m.1 2.2h0m.3-3h0m0-11.2h0m.1 2.2h0m.1 12.6h0m.1 28.6h0m.2 10.4h0m.1-16h0m.4 18.1h0m.2-10.2h0m.1-1.2h0m0 4.5h0m.2-1.7h0m.3 1.7h0m.1 5.4h0m.5-49.8h0m0 39.7h0m0-.1h0m.3-33.1h0m0 .1h0m0-6.5h0m.1 11.8h0m.3 26h0m.3-41h0m.3 46.4h0m.2-.8h0m.2-41h0m0 7.5h0m0-6.2h0m.1 2.6h0m.1 4.4h0m.1-9.4h0m.1 1.5h0m.1-1.1h0m.2 10.5h0m.1 25.8h0m.3-31.9h0m.1 4h0m.1-.8h0m0 4.7h0m.3 39.6h0m1.4-48.1h0m0 9.8h0m.1-5.7h0m.1 35.4h0m.5-5.3h0m.1-45h0m.2 52.1h0m.2-4.9h0m0 8.5h0m0-1.9h0m0-.8h0m.1 0h0m0 3.8h0m0-.9h0m.5-6.6h0m.2-21.5h0m.1-.3h0m.1-3.8h0m0 2.7h0m.1 8h0m0-.1h0m0 1.4h0m.1-1.1h0m0-28.7h0m0 25.1h0m0-11.4h0m.2-.3h0m0 2.1h0m0 15.6h0m.2-.4h0m0-.6h0m.2-8.7h0m0 4.5h0m.2-13.5h0m.1 51.8h0m0-39.1h0m.2 31.8h0m.2-3.5h0m.1 1.8h0m.1 7.7h0m.1-3.8h0m.9 8.6h0m0-2.8h0m0-5.1h0m0 1.9h0m.3-3.1h0m.1 6.9h0m.1-8.8h0m0-.5h0m0 8h0m.3-2.9h0m.2-39.1h0m0 4.6h0m0-4h0m.1 8.3h0m.2-3.2h0m.1-15h0m0 7.5h0m.1 9.6h0m.1 .4h0m.1 23.6h0m0-2.3h0m.1-.2h0m.3-33.8h0m0-5.8h0m0-5.4h0m.2 43.3h0m0-57.1h0m.1 24.4h0m.2-2.9h0m.1 .4h0m0 1.7h0m0-5.8h0m.2 6.1h0m.1-16.5h0m.1 12.9h0m0-7.7h0m.6-2.2h0m0 10.6h0m.2 30.5h0m.2-43h0m.8 40.2h0m.1 10.9h0m.2-5h0m.2 1.2h0m.2-7.6h0m0 9.7h0m0-9.7h0m0 15.8h0m.1 5.6h0m.4-8.4h0m.1-1.1h0m0-42.5h0m.4 3.3h0m.2 32.2h0m.1-35.7h0m.1-5.8h0m0-.2h0m.1 7.4h0m0 33.1h0m.1-34.3h0m.4 33.6h0m0-33.4h0m.2-5.3h0m.1 36.5h0m0 10.1h0m.2-5.1h0m.7-6.2h0m.5-30.3h0m.3 33.1h0m.3-35.6h0m.1 31.4h0m.2-26.3h0m0-9.4h0m.2 11.3h0m0-3.2h0m.5 39.9h0m0-.2h0m.3 5.8h0m.1-9.1h0m.1-4.3h0m.1 5.7h0m0 2.8h0m0-1.8h0m.1-11.1h0m.4 13.6h0m0 2.6h0m.5-15.5h0m0-22.4h0m.4 38.9h0m0 7.9h0m.1 .6h0m.1-7h0m0 5.4h0m.4-22.3h0m.1 1.3h0m.2-.9h0m.3-28.2h0m.1 3.9h0m.1-15h0m.2 6.6h0m0 2.5h0m.1 5.8h0m0-12.8h0m.1 63.3h0m.8-12.3h0m.1-.9h0m.1 3.6h0m0-8.5h0m0 .9h0m.1-34.3h0m.4 41h0m.3-5.6h0m.6-37.2h0m.2-11h0m.1 9.5h0m0-.9h0m.1 1h0m.1-1.1h0m0-3h0m0 .3h0m.2-2h0m0-1.2h0m.1 5.3h0m.6 .5h0m0-8.5h0m.5 45.6h0m.1-1h0m.2-3.1h0m.3 1.1h0m0 1.2h0m.2-3.8h0m.2-27.1h0m0-.3h0m0-9.8h0m.5 1.7h0m0 5.4h0m.3-.2h0m0-.4h0m0 .4h0m0 19.8h0m.1 .5h0m0 2.5h0m0-12.4h0m0 8.9h0m.1 7.7h0m0 2.5h0m.1-7.3h0m0-12.3h0m0 16.7h0m.1-3.7h0m0 3.1h0m0 16.5h0m.1-38h0m0 3.8h0m0 3.2h0m.1 1h0m0 4.5h0m0 2h0m0-.6h0m0-2.3h0m0-10.5h0m.1 6.7h0m0 1.3h0m0 10.5h0m0-9.5h0m0-2.7h0m0 3.4h0m.1 .9h0m3.2-8.5h0m0 2.1h0m.1 11h0m0 3.8h0m0-11h0m.1 8.1h0m0-.1h0m0-21h0m.1 15.5h0m0-3.7h0m.1-1.2h0m0-7.5h0m0 36.3h0m0-7.9h0m0-18.1h0m0-1.1h0m0 11.3h0m.1-11.7h0m.1-7.1h0m0-4.2h0m.1 30.1h0m.1-12.1h0m0 11.3h0m.1-28.4h0m0 26.2h0m.1-1.7h0m.1-.2h0m0 14h0m.2-23.6h0m.2 1.9h0m0-26.7h0m.1 1.1h0m.1 41.1h0m.3-39.1h0m0 4h0m.5 40.3h0m.1-42.5h0m.4 57h0m0-9h0m0-9.6h0m.5-37.1h0m.1-6.8h0m.1 7.6h0m0-4.1h0m0 1.8h0m.5 38.9h0m.1 8.9h0m0-5.8h0m1.5-2.2h0m0-1.2h0m0 4.3h0m.1 1.1h0m0-6.3h0m0 10.3h0m0-9.7h0m.1 3.2h0m.1 5.7h0m0-9.9h0m.2 4.3h0m.4-39.1h0m.1 28.7h0m.2-28.8h0m.7-4.1h0m0-5.5h0m.4 9.5h0m.1-2.3h0m.1-6.9h0m0 6.4h0m.2-16h0m0 14.3h0m.1 .2h0m.1-6.1h0m0 1h0m.2 10.2h0m.1 33.4h0m0-39.2h0m.9 41.3h0m0-26.5h0m0 1.5h0m.2-1.4h0m0 19.9h0m.1-28.6h0m.1 8h0m0 32.6h0m0-14.5h0m0 20.9h0m.1-19.5h0m.1 4.9h0m1.6-17.7h0m0-8.8h0m.1 9.2h0m0-3.4h0m.1-4.4h0m0 7.5h0m.1-13.8h0m0 2.2h0m.1 8.9h0m0-6.7h0m.4 36.8h0m.1-6.9h0m.2 9.4h0m.1-10.6h0m0 7.4h0m.3-25.2h0m.2 28.2h0m.1 17.5h0m.2-25.5h0m.2-18.4h0m0 19.2h0m.2-19.9h0m.1 26.3h0m0 9.4h0m.1-33h0m0-8.1h0m.4 14.5h0m.1-3.1h0m0 16.8h0m.1-12.8h0m.2 12.7h0m0-1h0m.3 4.8h0m.1-22.1h0m.1 6.6h0m.1 23.1h0m.1-1h0m0 8.4h0m.1 .9h0m.1-31h0m0 25.9h0m.5-9h0m0-3.8h0m0 .3h0m.1-7.1h0m.1-1.7h0m.1-3.4h0m0 18h0m.1-1.6h0m0 14.7h0m.3-23.4h0m0 3.5h0m0 13.5h0m.1-22.7h0m.1 7.6h0m.1 14.4h0m.2 15.2h0m0-6.6h0m.2-4.8h0m.2-26.3h0m.1 40.4h0m.1-20.8h0m0 19.4h0m0-27.2h0m0 8.3h0m.1 11h0m.1 .4h0m0-13h0m.2-2.4h0m.1 2.6h0m0 11.3h0m0-16.4h0m.1-7h0m0 21.8h0m.1 5.9h0m0-7.8h0m0-1.6h0m.1 3.4h0m2.7-98.3h0m.1-23.8h0m0 34.2h0m0 12.1h0m0-49.8h0m0 34.3h0m0-27.5h0m0-17.1h0m.1 7h0m0 26.4h0m0-5.9h0m.1 32.8h0m0-35.5h0m0 22.7h0m.1-6.5h0m0-33h0m0 10.1h0m.1 2.5h0m0 29.5h0m.1-4.6h0m.2 23.4h0m0-45.4h0m0 43.9h0m.1-30.1h0m0 5.3h0m0 9.4h0m.3 12h0m.1-11.5h0m.1-57h0m0 43.1h0m.2 31h0m0-7.1h0m.3-63h0m.1 17.1h0m0 10.7h0m0 .9h0m.1 4.2h0m.1 15.6h0m.1-18.1h0m0 48.2h0m.2-18.7h0m.1 5.2h0m.1-9.7h0m.1 9h0m.2-44.1h0m0-5.6h0m.1 57.1h0m.2-56.5h0m0 29.2h0m.1-17.1h0m.2 24.8h0m.2-15.2h0m0 10.7h0m.1-13.1h0m.1-14.5h0m0 41h0m.2-34.1h0m.1-13.2h0m0 26.4h0m.1-5.7h0m.2 12.2h0m.2-33h0m.1 29.4h0m0-19.4h0m.1 28h0m0 3.3h0m.1-5h0m.1 25.9h0m0-35.5h0m.1 35.8h0m0-55.1h0m.1 43.4h0m0-9.7h0m.1-7.6h0m.1-28.6h0m0 22.4h0m.1-14.8h0m0-27.1h0m.1 15.9h0m0-9h0m.1 11.8h0m0-19h0m.1 2.9h0m.1 1.1h0m0 2.6h0m0 6.4h0m.1-2.5h0m.1-2.2h0m.1-15.9h0m0 3.9h0m.1 38.6h0m0-26.1h0m0 2.2h0m.1-12.1h0m.7 40.3h0m.2 6.5h0m.1 0h0m.1-49.8h0m0 7.2h0m0 44.7h0m0-45.8h0m.1 1.3h0m0-13.1h0m.3 9.7h0m0 36.6h0m.1-48.3h0m0 16.9h0m.2 50h0m.4-13h0m.2-36.4h0m0 41.7h0m.1 13.2h0m.2-17.2h0m0 15.8h0m.1-6.2h0m0-9.5h0m.2-39h0m0 4h0m.3-10.2h0m.1 12.3h0m.1 30.1h0m.1-63.9h0m0 64.5h0m.1-32.2h0m.1 11.9h0m.1-32h0m.2 6h0m.1 23.1h0m0-24.3h0m.1-7.8h0m0 9.5h0m.1 17.6h0m.1 28.9h0m.1 22.7h0m.1-6.4h0m0-5h0m0 19.6h0m.2-22.5h0m.1 7.5h0m0-12h0m.1 21.9h0m.2-9.4h0m0-3.8h0m0-16.1h0m.1 8.5h0m0 3.6h0m0-.6h0m.4-36.4h0m.1 8.3h0m.1-5.4h0m.2 32.5h0m.2 10.6h0m.4-.3h0m0-17.4h0m.2-43.1h0m.1 20.9h0m0 19.2h0m0 19.1h0m.1 3.5h0m.2 1.8h0m0-11.3h0m0 4h0m0-12.6h0m0 9.1h0m.1 27.3h0m.1-34.4h0m.1 9.3h0m.2-51.3h0m0 47.5h0m0-37.3h0m.2 28.8h0m.4 6.6h0m.1-3.1h0m.2-42.7h0m0 10.3h0m.1-30.3h0m0 33h0m.1-15.7h0m.2 41.3h0m.3-36.1h0m.1 .7h0m0 3.1h0m.1-16.5h0m.1-7.9h0m.1 35.3h0m.1-38h0m.1 71.8h0m.4-52.2h0m.2-1.7h0m.1 12.5h0m.1 5.2h0m.4 24.7h0m.4-28.9h0m.2 .9h0m.1 28.9h0m.2-.6h0m.1-.4h0m0 22.9h0m.1-17.7h0m0-8.6h0m0-23h0m.4 28.4h0m.1-37.3h0m.1-3.6h0m0 43.6h0m.3-51.6h0m0 52.7h0m.1-3.9h0m.1-38.2h0m.5-18.7h0m0 21.6h0m.7-7h0m0-11.9h0m.1 47.3h0m0 7.7h0m.4-4.4h0m.5-20.5h0m0-9.7h0m.3-5.2h0m0 17.9h0m.3-3.9h0m0-1.6h0m.2 28.8h0m0-28.2h0m0 40.4h0m0-6.2h0m.1 5.3h0m.1-14.1h0m.1-36.8h0m0 8.4h0m.1 33.1h0m.2-57.1h0m.2 19.4h0m0 39.2h0m.1-.8h0m0 .4h0m.2-36.4h0m.4 41.1h0m.3 12.3h0m0-2.1h0m.1 7.5h0m.1-16.3h0m.1 4.2h0m.2-36.1h0m.1-12.7h0m0 5.3h0m.3 5.3h0m0-13.1h0m.5 59.7h0m.1-12.1h0m.1 .8h0m.1-3.4h0m0 9.2h0m.1 6.8h0m.3 11.3h0m.1-23.9h0m.2 11.3h0m0-28.5h0m.1 25h0m0-4h0m.1 5.7h0m0-13.7h0m0-.3h0m.1 20.7h0m.1-2.1h0m.1-33.6h0m.2 36.9h0m.1-23.7h0m.2-27.6h0m.1 39.8h0m0 14.1h0m.1-13.5h0m.2-15.4h0m0-35.8h0m.2 45.5h0m.1-37.2h0m.2 20.3h0m0 17.5h0m.2-7h0m0-35.2h0m.2 8.5h0m.1-11.9h0m0-21.4h0m.1 11.2h0m.1 .4h0m.2 24.9h0m.1-38.5h0m.3 50.7h0m.1-3.6h0m.2-21.2h0m.1 38.8h0m0 24.6h0m0-12.3h0m.1-45.2h0m0 32.3h0m0 7.7h0m.1 18.5h0m0-18.2h0m.1-36.3h0m0 23.3h0m.4-26.8h0m.1 16.7h0m.1 26.5h0m0-34.9h0m.1-19.7h0m0 43h0m.2 17.5h0m.1-4.1h0m0-35h0m0 16.5h0m0-24.8h0m.2-3.8h0m.4 58.9h0m.1-26.7h0m.1-61.1h0m.1 24.8h0m.1 29.8h0m0 3.2h0m0-14.9h0m.2 15h0m0 25.6h0m.1-11.3h0m0-33.2h0m.2 45.5h0m0-15.7h0m0 9h0m.3 9.6h0m0-2.2h0m.1-4.9h0m.1-60.9h0m0 43.6h0m0-49.9h0m.1 23h0m0-8.5h0m.3 6.5h0m0-13.7h0m.1 32.5h0m.1-41.6h0m0-6.5h0m0 5.8h0m0 7.9h0m.1 8.1h0m0-8.5h0m0 4.3h0m0 6.5h0m.2 6.7h0m.1-1.4h0m.1-10.7h0m0-7h0m0 26h0m0-27.4h0m.1 37.8h0m.1-13.6h0m.1 36.7h0m0-8.6h0m.3-27.1h0m0 15.8h0m.2-42.1h0m0 15.5h0m.1 5.1h0m.1 45h0m0-7.6h0m0-6.6h0m.1-22h0m.1-10.5h0m.1 42.1h0m0-42.6h0m.1-12.6h0m.1 11.1h0m0-4.4h0m.1-21.1h0m.1 33.3h0m0 33.9h0m0-3.8h0m.4 .5h0m0 7.2h0m.2-6.1h0m.1 6h0m0-45.9h0m.1 41.8h0m.4-33.1h0m.1-17.5h0m0-1.2h0m.1 8.6h0m0 23.7h0m0-27.4h0m.1 11.8h0m.1-8h0m0-17.3h0m.2 18.4h0m0-36.3h0m.1 59.7h0m.1 3h0m0-31h0m.2 39.6h0m0-22.3h0m.1-3.1h0m.1-22.5h0m.3 50.2h0m.1-55.1h0m.3 12.8h0m.1 12h0m.5 2.4h0m.1 41h0m0-12.5h0m.1 4.3h0m0-33.1h0m0-3h0m0-37.4h0m.1 23.1h0m0 5.2h0m.2-12.9h0m0 6.2h0m0 18.2h0m0-42.8h0m.1 46.6h0m.1 30.5h0m.1-4.7h0m.1-6.7h0m.1-46.4h0m.3 18.4h0m0-2.8h0m.1-39.3h0m0 20.7h0m0 52.5h0m0-43.6h0m.4-2.3h0m.4-3.6h0m.1 13h0m0-2.5h0m.1-14.5h0m0 31.1h0m.1-44h0m0 66.6h0m.2-46.4h0m.1-1.9h0m0-4.8h0m.1 .4h0m.1-4.2h0m.1-17h0m0 9.5h0m0-.7h0m.1 16h0m0 15.1h0m.1-7.6h0m0 7.4h0m.2 7.6h0m0-5.1h0m.2-6.2h0m0-3.8h0m.2 38.8h0m.2-4h0m.2-17.2h0m.2 28.3h0m0-14.4h0m.2 13.6h0m.1-3.8h0m.2 3.8h0m.1-.2h0m.5-7.8h0m.2-10h0m.2-17.1h0m0 24.9h0m.1-5.4h0m0 1.3h0m.1 .2h0m.1-25.2h0m.1-5.7h0m0 7.8h0m.1-10.7h0m0 32.6h0m.3 .8h0m0-.5h0m.1 6.9h0m.1 3.9h0m0-15.2h0m.1 10.2h0m.4 4.1h0m.1-38.5h0m.1 2.1h0m0-10.7h0m.3 5.1h0m0-18.2h0m.8 25.2h0m.3-7.1h0m0 31.2h0m.2-7.5h0m0 6.6h0m.1-30.1h0m.3-9.5h0m.1 7.9h0m0-13.9h0m.2 18.5h0m0 19h0m.1-26.2h0m0 1.1h0m.3-14.1h0m.1 18.6h0m.1 24h0m.3-34.3h0m.1 6.7h0m.1-6.5h0m0-3h0m.2 8.6h0m0 8.5h0m.1-9.1h0m.1-10.8h0m0 19.7h0m.1-18.7h0m0-1.4h0m.1 1.3h0m0 8.5h0m.3-3.7h0m.1 1.5h0m0 .3h0m0 37h0m.2-29.9h0m.1-8.2h0m0 32.8h0m.1 6.5h0m0 10h0m0 .7h0m.2-34h0m0-18.5h0m.1 27.7h0m0-44.3h0m0 37.4h0m.3-30.2h0m0 37.6h0m0 4.9h0m.3-18.2h0m0 30.2h0m.1-20h0m0 17.4h0m.2 .5h0m.1-21.9h0m.1 23.4h0m0-5.2h0m.1 1.2h0m.1-28.1h0m0 16.5h0m0 10.2h0m.1 19.9h0m0-36.4h0m0 .2h0m.2 23.9h0m0 11.1h0m.1-16.3h0m0-.2h0m0 6.4h0m0 14.4h0m.1-14.1h0m0 3.1h0m.2 4.4h0m1.1-18h0m0 14.4h0m.2-37.4h0m0 11.6h0m.1 32.7h0m.1-31.8h0m.3-22.5h0m0 23.4h0m.1 18.8h0m0-79.6h0m0 50.5h0m0-1.9h0m0 3.5h0m.1-10.5h0m.1-19.1h0m0 30.8h0m0-14.2h0m.1 9.1h0m0 1.8h0m.3 28.4h0m0 5.2h0m.1-5.3h0m.2-6.6h0m0 1.5h0m.1-1.1h0m0-14.1h0m.2-3.3h0m0 36h0m.1-7.3h0m.1 5.7h0m0-9.7h0m.1-16.5h0m.2 13.1h0m.3 16.9h0m0-6.9h0m.1 9h0m.1-13.3h0m.3 11.6h0m0-12.8h0m.1 21.5h0m.3-13.1h0m0 4.8h0m.1-41.3h0m.1 47.2h0m.3-51.1h0m.1 8.1h0m.1-5.7h0m0-2.5h0m.1 12.6h0m.5 23.5h0m0-24.5h0m.1 22.2h0m.1-38.3h0m0-16.9h0m0 50h0m0-43.8h0m.1 47.4h0m0 5.4h0m.1-27.4h0m.3-27.4h0m0 7.8h0m.2-4.6h0m0 5.9h0m0-26.6h0m.1 26.3h0m0 6.2h0m.1-16.1h0m.1 59h0m0-.1h0m.5-9.5h0m.1-.2h0m.1-6.5h0m0 22.8h0m.8-52h0m.2-13.4h0m.1 8.2h0m0-10.3h0m0 11.2h0m.1-3.4h0m.1 38.5h0m0-34.1h0m0 4.7h0m.1 52.8h0m0-13.3h0m.1-14.2h0m0 21.6h0m.7-59.6h0m.3 27.3h0m.1-13.5h0m.2 34.4h0m0 .7h0m.1-46.8h0m0 27.3h0m.5-20.4h0m.1 32.5h0m0-1.4h0m.2 13.4h0m.1-52.4h0m.3 48.2h0m0-23.1h0m.1 27.1h0m.1 1.4h0m.1-41.8h0m.2 36.4h0m.1-36.6h0m0-2.3h0m0-3.1h0m0 4.9h0m.2-.3h0m0 18.1h0m0 19.6h0m0-6.4h0m.2 17.1h0m0-5.2h0m.1-7.7h0m.2-56.5h0m.4 4.8h0m0-.1h0m.2 14.9h0m.1-9.1h0m0-8.4h0m0-9h0m0-1.4h0m.1 1h0m0 22.4h0m0 21.6h0m.2 6h0m0 5.9h0m0-29.8h0m.2-18.1h0m.1 7.7h0m0 7.1h0m0-11.2h0m.1 56.5h0m.1-11h0m.2-27.9h0m.1 18.4h0m0 34.1h0m0-9.1h0m0-6.4h0m.2-34h0m0-7.2h0m.1 37h0m0 5.4h0m.2-37.6h0m0 30.2h0m0-17.2h0m.1-7.4h0m.1 10h0m0 26.9h0m0-59.1h0m.1 26.9h0m.1-4.7h0m0 4.2h0m0 1.3h0m.1 18h0m0 .5h0m.1 16.5h0m0-24.2h0m.1-4.3h0m0 32.8h0m0-1.3h0m.2-27.1h0m0 24.1h0m.1 5.4h0m.1 1.5h0m.2 4.3h0m.1-7.9h0m1-78.8h0m.2 37.1h0m0-36.2h0m0 13.4h0m.1-8.2h0m0 21.2h0m.1 5.9h0m0-8.2h0m0 7h0m.1-22.6h0m0 36.7h0m0 6.5h0m0 4.9h0m0-14.9h0m.1 12.6h0m0-6.3h0m0 20h0m.1-13.3h0m0 6.3h0m.1-20.3h0m0-4.9h0m0 35.8h0m.1-23.5h0m.2 8.7h0m0-3.7h0m0-10.8h0m.1-29.9h0m0 30.3h0m.1-2.5h0m.1-4.4h0m0-23.8h0m.2-17.6h0m0 17.4h0m.2 8.6h0m.2-6.3h0m0 3.1h0m.2-9.7h0m0 22.7h0m0 16.2h0m.1-24.3h0m0 17.8h0m0-30.3h0m.1 35h0m0-26.6h0m.1 4.1h0m.1-18.1h0m0 16.1h0m0-27.3h0m0 24.8h0m.1-22.7h0m.2 17.7h0m0-16h0m.2 31.3h0m0-25h0m0-2h0m.2 12.9h0m0 10.8h0m0 36.1h0m.1-19.9h0m0 31.1h0m.1-80.3h0m.2 45.5h0m.1-30.2h0m0 23.6h0m.1 22.4h0m.1-30h0m0-33.2h0m0 99.2h0m.1-37.9h0m.1 4.3h0m0 13h0m.1 13.8h0m0-19.7h0m.1-5h0m0 18.6h0m.1 4.8h0m0-36.5h0m0 22.7h0m0 4.4h0m.1 .2h0m.1-12.7h0m0-40.8h0m0 84h0m.1-24.9h0m0-10.6h0m0-15.4h0m.1-23.1h0m0 68.7h0m.1-52.9h0m.1 38.1h0m0-15.7h0m.2-19.5h0m0 21h0m.2 1.5h0m0-54.5h0m0 28h0m0 4.4h0m0-18.3h0m.1-12.6h0m0 49.5h0m0-55.5h0m0 17.8h0m.1 43.8h0m0-24.3h0m0 7.6h0m.2-44h0m0-11.9h0m0 27.6h0m0 22.5h0m.1-29.4h0m0 29.2h0m.3-16.9h0m0-5.5h0m0-8.3h0m0 5h0m.1 21.3h0m.2-36.9h0m0 9.3h0m.1 38.2h0m.2-64.9h0m0 21.8h0m0-17.1h0m.1-6.4h0m.1 26.6h0m0 5.5h0m.1-4.3h0m.1-13.4h0m0 8h0m.1-6.5h0m.1-15.2h0m.2 51.9h0m.1 9.2h0m0-29.6h0m.2 10.4h0m0-4.8h0m0-26h0m.4 72.5h0m0-8.2h0m0-20.3h0m.1-17.9h0m0 3.1h0m0 53.8h0m0-13.4h0m.1-23.7h0m.1 0h0m.1 26.1h0m0-16.1h0m.2-22.1h0m0-12.8h0m0 48.7h0m.1-8h0m.1 26.7h0m.3-24h0m.1 4.9h0m.1-10.2h0m0-11.5h0m0 1.5h0m0-14.7h0m.3-23.7h0m0 31.5h0m.1-3.7h0m0 0h0m0 24.3h0m.1 11.2h0m.1-65.2h0m0 59.2h0m.1 2.1h0m.3 4.1h0m0-5.3h0m.2-21h0m.1 9.4h0m0 29.4h0m.1-75.8h0m0 45.2h0m.2-27.5h0m0 46.6h0m0-53h0m0 45.5h0m.1-42.3h0m0-16.6h0m.1 71.7h0m.2 6.8h0m0-49.4h0m0 35.2h0m.1-54.1h0m0 41.9h0m0 4.2h0m.4-33.3h0m.1 11.3h0m.1-11.6h0m.1 1.2h0m.1-21h0m0 6.8h0m0-19.4h0m.1 60.5h0m0-26.6h0m0-11.1h0m0 13.9h0m.2-13.6h0m.1-15.7h0m.1 27.3h0m0 6.4h0m0-25.4h0m.1 46h0m.1 6.1h0m0-20.3h0m.2 8.4h0m0-4.9h0m.2-42.6h0m0 52h0m.1-34h0m.2 1.6h0m.3-37.5h0m0 12.7h0m0 15.9h0m0-12.4h0m.2 6.6h0m0 15.5h0m.3 18.6h0m0 17.1h0m.1-9.6h0m.1-9.7h0m0-10.2h0m0 11.8h0m.1-5.1h0m0-11.6h0m.1-14h0m0 43h0m.1-39.7h0m.3 12.6h0m0 37.8h0m.1-25.8h0m.1 7.6h0m0 15.6h0m0-35.4h0m0 33.1h0m0 .9h0m.1 7.4h0m0-39.1h0m.1-11.7h0m0 52.4h0m.1-50.9h0m.1 16.7h0m0-21.4h0m.1-8.2h0m0-2.3h0m.1 28.9h0m0 22.2h0m0-29.2h0m.1 33.9h0m.1 4.5h0m0-17.6h0m0 18.9h0m.1 12.5h0m.1-24.1h0m0 26.8h0m0-28.9h0m.1 16.7h0m.1-15.8h0m0 17.7h0m1-12.9h0m.4-20.6h0m0-.8h0m0 3.7h0m.1 5.9h0m.2 11.2h0m.2 14.4h0m0-26.8h0m.1-.7h0m0-11.7h0m0-20.3h0m.1 13.5h0m.1-.9h0m0 14.3h0m.1 3.4h0m0-15.8h0m0 26.8h0m0-18h0m.1 37.1h0m.6-48.4h0m.1-2.4h0m.2 8.4h0m.1-9.4h0m.2 6.8h0m.4 29.2h0m.1 4.9h0m.1-6.9h0m0 6.6h0m.3-.9h0m.3-1.2h0m.1 14.3h0m.3 3.9h0m.5-15.2h0m.1-36.3h0m0-1.1h0m.1-8h0m0 .2h0m.1 5.8h0m.4 40.3h0m.1 1.9h0m.3 .5h0m.1 .6h0m.2 4.1h0m.1 6.2h0m.1-15.5h0m0-1.5h0m.3-46.9h0m.1 8h0m.2 14.8h0m0 1.4h0m.3-22.6h0m.2 14.9h0m.1-4.5h0m0 31.8h0m0-2.2h0m.4-36.4h0m.1-18.6h0m0 10.4h0m.2 66.2h0m.3-18.4h0m0-18.5h0m.1-35.3h0m.1 72.3h0m.2-41.6h0m0 23.1h0m.1 4.7h0m0 18.7h0m0-59.6h0m0 31.7h0m.1 32.6h0m0-15.9h0m.1-2h0m0-5.6h0m.1 8.4h0m.1-12.8h0m0 17.8h0m.1-44.3h0m.1 36.1h0m.1-19.7h0m0 10.1h0m.1-36h0m0 0h0m.3 12.5h0m.1-6.8h0m0-10.7h0m.1 7.4h0m.1 7h0m.1-16.2h0m0 30.4h0m.1-7.2h0m.2 21.3h0m.2-12.9h0m.1-20.3h0m0 23.9h0m.1-14.9h0m0 11.3h0m0 22.8h0m.2 10.8h0m0-2.4h0m0 6.9h0m.1 2.9h0m.1-4.6h0m0-26.9h0m.1 9h0m0 21.3h0m0-15.7h0m.1 14.2h0m.1 .9h0m.1-57.4h0m0 12.2h0m0-4h0m.2 42.8h0m.1 .3h0m0-26.4h0m.1 26.7h0m.3-38.2h0m0 1.3h0m0 27.7h0m.2-43h0m0 14.7h0m.2-22.7h0m.1 46.8h0m.2-20.2h0m.1-15.1h0m.1 33.3h0m.1 12.3h0m0-28.7h0m0 2h0m0 5.5h0m.2-8h0m0-4.4h0m.1 25.2h0m0-55.2h0m0 16.4h0m.1 23.6h0m0-1.7h0m0-27.9h0m0-15.5h0m.1 4.4h0m.3 23.8h0m0 17.9h0m.1-.3h0m.1-35.9h0m.2 27.8h0m.1-1.2h0m0-34.9h0m0 8.4h0m0 6.7h0m.1-19.5h0m0 8.6h0m.1 8.2h0m.1 9.9h0m.1 25.3h0m0-20.3h0m.1-14.9h0m0-16.2h0m0 28.2h0m.1-.5h0m.1-23h0m0-11.4h0m0 33.4h0m0-15.5h0m.2 8h0m.1 1.5h0m0-.1h0m0 37.9h0m1.2-9.6h0m.1-14.8h0m0-13.3h0m0 11.1h0m0 13.8h0m.1 9.8h0m.1-12.9h0m.1 4.1h0m.1-4.4h0m.1-4.5h0m0 .1h0m0-14.1h0m.1-5h0m.3 45h0m.4-23.9h0m.1 25.9h0m.2-11.9h0m0 15.3h0m.1-6.3h0m.1-5.1h0m.1-29.4h0m.1-19.9h0m0 28.1h0m.1-7.2h0m0 1.7h0m.1-14.8h0m0 19h0m0 12.9h0m.2-23.4h0m.1 9.5h0m0-23h0m.1-6.4h0m0-7h0m.1 47.9h0m0-27.4h0m0-2.7h0m.2-4.3h0m.2 .2h0m0-9.1h0m0-.2h0m.1-5.8h0m0 24.8h0m0 5.1h0m.1-17.6h0m0 2.8h0m0 3.7h0m0 2.2h0m.1-.9h0m.4-1.6h0m.2 39h0m.2 5.3h0m.1-48.7h0m0 46.7h0m.3-36.1h0m.2 27.5h0m.2-3.5h0m0 5.9h0m.3-2.3h0m0-3.7h0m.2 9h0m.1-3.3h0m.2-2.1h0m0 9h0m.1 .7h0m.1 5.4h0m.2-15.5h0m.2 8.9h0m.1-2.2h0m0-36.5h0m.3-3.9h0m.3 31h0m.6-19.6h0m0 35.4h0m.1-42.1h0m0-18h0m.1 18h0m.2-9.1h0m.3 40.8h0m0-34.6h0m.1-4.9h0m.3 39.1h0m.1 9.5h0m0-16.3h0m.1 18.1h0m0-37.1h0m0 3.4h0m0 33.6h0m.1-5.6h0m.3-8.8h0m.1-.7h0m.1 0h0m0 16.8h0m.1-8.6h0m0 15.3h0m.2-20.7h0m0 7.7h0m.1-42.1h0m.1 33.6h0m0-1.8h0m.1-4.1h0m.1-39.6h0m.1 4.3h0m0 9.8h0m.1-8.5h0m0-8.1h0m0-8h0m0 31.4h0m.1-9.7h0m0-17.2h0m0 8.9h0m.1 23.4h0m0-8.3h0m.5-35h0m0 38.2h0m.1-37.6h0m.1-.7h0m0 32.5h0m0-27.2h0m0-7.7h0m.1 6.2h0m0 22.7h0m.2-3.2h0m0-9.7h0m.1 11.8h0m0-1.7h0m0-3.7h0m.1 18.1h0m.3-18.2h0m0 13.7h0m0-14h0m0 16.8h0m.2 20.7h0m.1 11.1h0m0-60.8h0m.2 70.2h0m.1-52.1h0m.1 2h0m0 31.1h0m.2-16.6h0m.1-9h0m0-6.8h0m.1 55h0m.1-40.9h0m.1-25h0m.1 7.6h0m0-9.5h0m.1-2.1h0m.1-2.2h0m0 21.2h0m0-12.7h0m.1 44.6h0m.1 8h0m.2-8.6h0m.1 12.7h0m.1 1.1h0m0-48.8h0m.1 65.1h0m0-11h0m0-16.4h0m.1 2.1h0m0-9.2h0m.2 19.8h0m.1 .1h0m.1-27.4h0m0-2.8h0m.1 24.9h0m0 7.9h0m.3-28.7h0m.2-41.1h0m.1 28.9h0m0 1.6h0m.2-18.5h0m.1 5.2h0m0 7h0m0-.8h0m0 21h0m.1 5.8h0m.2 8.8h0m0-1.8h0m.2 8.4h0m.1-8.9h0m0-21.5h0m.1 21.8h0m.1-7.3h0m0 21.2h0m0-20.8h0m.2 13.9h0m.1-30.2h0m.1 22.5h0m0-5.3h0m0 1.4h0m.1-7.1h0m0 6.8h0m0-4.7h0m0 7.3h0m.1-22.9h0m0 9.4h0m0 10.4h0m0-16.9h0m.1 59.5h0m0-77.6h0m.1 24.6h0m0-15.8h0m0 29.9h0" stroke="#000" stroke-width="3.4" stroke-linecap="round" fill="none"/><path d="M438.6 660.3h5.5l-2.75 5.5zM586.5 660.3h5.5l-2.75 5.5zM849.8 660.3h5.5l-2.75 5.5zM978.5 660.3h5.5l-2.75 5.5zM1070.5 660.3h5.5l-2.75 5.5zM1091.7 660.3h5.5l-2.75 5.5zM1189.5 660.3h5.5l-2.75 5.5zM1282.5 660.3h5.5l-2.75 5.5zM1282.5 660.3h5.5l-2.75 5.5zM1282.5 660.3h5.5l-2.75 5.5zM1282.5 660.3h5.5l-2.75 5.5zM1282.5 660.3h5.5l-2.75 5.5zM1282.8 660.3h5.5l-2.75 5.5z" fill="#ffa500"/></g>
<rect x="105.5" y="499" width="1255.5" height="49" fill="#f00" fill-opacity="0.1" stroke="#f00" stroke-opacity="0.1" stroke-width="1.11"/>
<rect x="162" y="514.0" width="1004" height="31.0" fill="#ffa500" fill-opacity="0.12"/>
<rect x="1166" y="536.9" width="7" height="33.0" fill="#ffa500" fill-opacity="0.12"/>
<rect x="1173" y="442.4" width="60" height="44" fill="#ffa500" fill-opacity="0.12"/>
<rect x="1233" y="442.7" width="17" height="49.0" fill="#ffa500" fill-opacity="0.12"/>
<rect x="1250" y="452" width="18" height="44" fill="#ffa500" fill-opacity="0.12"/>
<rect x="1268" y="448.6" width="17" height="46" fill="#ffa500" fill-opacity="0.12"/>
<rect x="1285" y="448.9" width="18" height="47.0" fill="#ffa500" fill-opacity="0.12"/>
<path d="M105.5 523H1361" stroke="#f00" stroke-width="2.08"/>
<path d="M162 529.5H1166M1166 553.4H1173M1173 464.4H1233M1233 467.2H1250M1250 474H1268M1268 471.6H1285M1285 472.4H1303" stroke="#ffa500" stroke-width="3.1" stroke-linecap="square"/>
<path d="M162 666.14V380.5M1166 666.14V380.5M1173 666.14V380.5M1233 666.14V380.5M1250 666.14V380.5M1268 666.14V380.5M1285 666.14V380.5M1303 666.14V380.5" stroke="#800080" stroke-width="2.08" stroke-dasharray="2.08 3.446" fill="none"/>
<rect x="105.5" y="380.5" width="1380.0" height="286.0" fill="none" stroke="#000" stroke-width="1.11"/>
<path d="M105.5 413.5h-4.86M105.5 452.5h-4.86M105.5 491.5h-4.86M105.5 531.5h-4.86M105.5 570.5h-4.86M105.5 609.5h-4.86M105.5 649.5h-4.86" stroke="#000" stroke-width="1.11"/>
<text x="65.27" y="417.90" font-size="14.72" textLength="30.32" lengthAdjust="spacingAndGlyphs" fill="#000">6.53</text>
<text x="65.55" y="456.90" font-size="14.72" textLength="30.15" lengthAdjust="spacingAndGlyphs" fill="#000">6.52</text>
<text x="65.44" y="495.90" font-size="14.72" textLength="30.22" lengthAdjust="spacingAndGlyphs" fill="#000">6.51</text>
<text x="65.09" y="535.90" font-size="14.72" textLength="30.42" lengthAdjust="spacingAndGlyphs" fill="#000">6.50</text>
<text x="65.16" y="574.90" font-size="14.72" textLength="30.47" lengthAdjust="spacingAndGlyphs" fill="#000">6.49</text>
<text x="65.12" y="613.90" font-size="14.72" textLength="30.46" lengthAdjust="spacingAndGlyphs" fill="#000">6.48</text>
<text x="65.37" y="653.90" font-size="14.72" textLength="30.33" lengthAdjust="spacingAndGlyphs" fill="#000">6.47</text>
<path d="M162.5 666.5v4.86M431.5 666.5v4.86M700.5 666.5v4.86M969.5 666.5v4.86M1238.5 666.5v4.86" stroke="#000" stroke-width="1.11"/>
<text x="159.31" y="687.00" font-size="14.72" textLength="8.27" lengthAdjust="spacingAndGlyphs" fill="#000">0</text>
<text x="413.29" y="687.00" font-size="14.72" textLength="34.07" lengthAdjust="spacingAndGlyphs" fill="#000">5000</text>
<text x="677.93" y="687.00" font-size="14.72" textLength="43.26" lengthAdjust="spacingAndGlyphs" fill="#000">10000</text>
<text x="947.04" y="687.00" font-size="14.72" textLength="43.16" lengthAdjust="spacingAndGlyphs" fill="#000">15000</text>
<text x="1214.96" y="687.00" font-size="14.72" textLength="44.15" lengthAdjust="spacingAndGlyphs" fill="#000">20000</text>
<text x="642.20" y="657.20" font-size="14.72" textLength="43.42" lengthAdjust="spacingAndGlyphs" fill="#000">10537</text>
<text x="1148.12" y="637.20" font-size="14.72" textLength="43.36" lengthAdjust="spacingAndGlyphs" fill="#000">47361</text>
<text x="1181.12" y="617.20" font-size="14.72" textLength="43.63" lengthAdjust="spacingAndGlyphs" fill="#000">24684</text>
<text x="1220.12" y="657.20" font-size="14.72" textLength="43.36" lengthAdjust="spacingAndGlyphs" fill="#000">43871</text>
<text x="1237.48" y="637.20" font-size="14.72" textLength="43.61" lengthAdjust="spacingAndGlyphs" fill="#000">43869</text>
<text x="1255.17" y="617.20" font-size="14.72" textLength="43.30" lengthAdjust="spacingAndGlyphs" fill="#000">43862</text>
<text x="1272.45" y="657.20" font-size="14.72" textLength="43.56" lengthAdjust="spacingAndGlyphs" fill="#000">43860</text>
<rect x="1365.6" y="387.6" width="113.10000000000014" height="48.0" rx="2.8" fill="#fff" fill-opacity="0.8" stroke="#ccc" stroke-width="1.11"/>
<path d="M1370.4 399.5h27.8" stroke="#ffa500" stroke-width="3.1" stroke-linecap="square"/><path d="M1370.4 421.7h27.8" stroke="#f00" stroke-width="2.08" stroke-linecap="square"/>
<text x="1409.61" y="403.90" font-size="14.72" textLength="31.40" lengthAdjust="spacingAndGlyphs" fill="#000">mag</text>
<text x="1440.25" y="405.90" font-size="10.30" textLength="31.27" lengthAdjust="spacingAndGlyphs" font-style="italic" fill="#000">OBSID</text>
<text x="1408.85" y="426.90" font-size="14.72" textLength="30.23" lengthAdjust="spacingAndGlyphs" fill="#000">mag</text>
<rect x="1348.5" y="613.5" width="130.20000000000005" height="45.700000000000045" rx="2.8" fill="#fff" fill-opacity="0.8" stroke="#ccc" stroke-width="1.11"/>
<circle cx="1367.4" cy="626.5" r="2.1" fill="#ffa500"/><circle cx="1367.4" cy="647.3" r="2.1" fill="#000"/>
<text x="1391.98" y="629.90" font-size="14.72" textLength="79.80" lengthAdjust="spacingAndGlyphs" fill="#000">Highlighted</text>
<text x="1392.87" y="650.90" font-size="14.72" textLength="19.20" lengthAdjust="spacingAndGlyphs" fill="#000">OK</text>
<path d="M163 1007h1142v1h-1142zM163 1008h537v1h-537zM163 1009h6v1h-6zM164 1006h4v1h-4zM165 1005h2v1h-2zM169 1006h37v1h-37zM170 1004h1v1h-1zM170 1005h4v1h-4zM171 1009h1v1h-1zM173 1009h1v1h-1zM176 1009h2v1h-2zM179 1009h4v1h-4zM184 1009h1v1h-1zM188 1009h7v1h-7zM191 1005h3v1h-3zM195 1005h1v1h-1zM197 1009h1v1h-1zM200 1009h3v1h-3zM202 1005h1v1h-1zM206 1009h2v1h-2zM208 1006h60v1h-60zM211 1009h17v1h-17zM217 1005h1v1h-1zM220 1005h1v1h-1zM226 1005h3v1h-3zM230 1009h1v1h-1zM234 1009h4v1h-4zM235 1005h1v1h-1zM240 1009h1v1h-1zM242 1009h2v1h-2zM246 1009h4v1h-4zM248 1005h1v1h-1zM252 1009h13v1h-13zM254 1005h1v1h-1zM263 1005h2v1h-2zM267 1009h1v1h-1zM269 1006h2v1h-2zM270 1009h1v1h-1zM272 1006h34v1h-34zM272 1009h8v1h-8zM275 1005h1v1h-1zM280 1005h1v1h-1zM282 1009h1v1h-1zM285 1009h1v1h-1zM287 1009h1v1h-1zM289 1009h11v1h-11zM301 1005h3v1h-3zM305 1009h1v1h-1zM309 1006h71v1h-71zM313 1009h1v1h-1zM314 1005h2v1h-2zM316 1009h3v1h-3zM317 1005h1v1h-1zM320 1009h3v1h-3zM324 1009h2v1h-2zM325 1005h1v1h-1zM328 1009h1v1h-1zM330 1009h2v1h-2zM331 1005h1v1h-1zM333 1009h3v1h-3zM337 1009h8v1h-8zM341 1005h3v1h-3zM347 1005h3v1h-3zM347 1009h4v1h-4zM352 1009h1v1h-1zM354 1009h22v1h-22zM356 1005h3v1h-3zM363 1005h1v1h-1zM369 1005h4v1h-4zM377 1009h3v1h-3zM381 1005h1v1h-1zM381 1006h24v1h-24zM382 1009h2v1h-2zM385 1009h1v1h-1zM387 1009h6v1h-6zM392 1005h2v1h-2zM394 1009h5v1h-5zM395 1005h1v1h-1zM402 1009h17v1h-17zM406 1006h10v1h-10zM408 1005h1v1h-1zM413 1005h2v1h-2zM414 1004h1v1h-1zM417 1006h157v1h-157zM425 1009h4v1h-4zM427 1005h2v1h-2zM430 1009h1v1h-1zM432 1009h17v1h-17zM440 1005h1v1h-1zM442 1005h1v1h-1zM445 1005h5v1h-5zM450 1009h2v1h-2zM452 1005h4v1h-4zM454 1009h12v1h-12zM458 1005h1v1h-1zM461 1005h3v1h-3zM465 1005h2v1h-2zM467 1009h7v1h-7zM468 1004h1v2h-1zM475 1005h1v1h-1zM478 1005h1v1h-1zM478 1009h2v1h-2zM480 1005h3v1h-3zM483 1009h2v1h-2zM484 1005h1v1h-1zM486 1009h2v1h-2zM487 1005h2v1h-2zM490 1009h4v1h-4zM494 1005h1v1h-1zM496 1009h2v1h-2zM500 1009h2v1h-2zM504 1009h2v1h-2zM507 1004h2v2h-2zM509 1009h10v1h-10zM516 1005h1v1h-1zM519 1004h1v1h-1zM519 1005h2v1h-2zM521 1009h3v1h-3zM525 1009h4v1h-4zM530 1005h1v1h-1zM531 1009h20v1h-20zM534 1005h1v1h-1zM539 1005h1v1h-1zM550 1005h1v1h-1zM554 1009h2v1h-2zM558 1009h2v1h-2zM562 1009h7v1h-7zM563 1005h3v1h-3zM570 1005h2v1h-2zM571 1009h10v1h-10zM575 1005h1v1h-1zM575 1006h12v1h-12zM578 1005h1v1h-1zM581 1005h4v1h-4zM584 1009h5v1h-5zM588 1006h18v1h-18zM591 1009h3v1h-3zM593 1005h2v1h-2zM595 1009h1v1h-1zM597 1004h1v2h-1zM597 1009h2v1h-2zM601 1005h1v1h-1zM601 1009h1v1h-1zM604 1009h1v1h-1zM607 1006h26v1h-26zM607 1009h5v1h-5zM609 1005h1v1h-1zM613 1009h13v1h-13zM615 1004h1v2h-1zM618 1005h2v1h-2zM626 1005h1v1h-1zM628 1009h9v1h-9zM635 1005h1v1h-1zM635 1006h13v1h-13zM637 1005h1v1h-1zM639 1009h1v1h-1zM641 1009h4v1h-4zM644 1005h1v1h-1zM647 1005h1v1h-1zM648 1009h15v1h-15zM650 1006h48v1h-48zM659 1005h1v1h-1zM662 1005h2v1h-2zM665 1009h8v1h-8zM666 1005h1v1h-1zM677 1005h4v1h-4zM677 1009h3v1h-3zM680 1004h1v1h-1zM682 1009h4v1h-4zM685 1005h1v1h-1zM688 1009h1v1h-1zM691 1005h1v1h-1zM691 1009h9v1h-9zM694 1004h3v2h-3zM699 1006h5v1h-5zM701 1008h36v1h-36zM705 1005h1v1h-1zM705 1006h15v1h-15zM708 1009h4v1h-4zM712 1005h2v1h-2zM716 1009h8v1h-8zM717 1005h1v1h-1zM721 1006h23v1h-23zM725 1005h1v1h-1zM725 1009h2v1h-2zM728 1009h2v1h-2zM729 1005h1v1h-1zM734 1005h1v1h-1zM734 1009h1v1h-1zM737 1005h1v1h-1zM738 1008h224v1h-224zM738 1009h1v1h-1zM739 1005h1v1h-1zM740 1009h5v1h-5zM745 1006h41v1h-41zM746 1009h1v1h-1zM748 1004h1v2h-1zM749 1009h1v1h-1zM750 1005h3v1h-3zM755 1005h1v1h-1zM755 1009h6v1h-6zM761 1005h1v1h-1zM762 1009h5v1h-5zM768 1009h4v1h-4zM774 1005h1v1h-1zM774 1009h2v1h-2zM776 1005h2v1h-2zM777 1009h7v1h-7zM781 1005h2v1h-2zM785 1009h4v1h-4zM787 1006h56v1h-56zM792 1009h1v1h-1zM795 1009h2v1h-2zM798 1009h12v1h-12zM803 1005h1v1h-1zM805 1005h3v1h-3zM810 1005h2v1h-2zM812 1009h3v1h-3zM815 1005h1v1h-1zM818 1009h1v1h-1zM821 1009h8v1h-8zM827 1005h1v1h-1zM830 1009h2v1h-2zM831 1005h2v1h-2zM834 1009h3v1h-3zM838 1005h1v1h-1zM838 1009h1v1h-1zM841 1009h2v1h-2zM844 1006h3v1h-3zM844 1009h1v1h-1zM846 1005h1v1h-1zM847 1009h2v1h-2zM849 1006h19v1h-19zM851 1005h2v1h-2zM852 1009h2v1h-2zM854 1005h1v1h-1zM855 1009h2v1h-2zM859 1009h9v1h-9zM863 1005h1v1h-1zM870 1006h14v1h-14zM870 1009h13v1h-13zM872 1005h2v1h-2zM875 1005h2v1h-2zM881 1005h2v1h-2zM884 1009h2v1h-2zM885 1006h31v1h-31zM886 1005h2v1h-2zM888 1009h2v1h-2zM892 1005h1v1h-1zM893 1009h10v1h-10zM895 1005h1v1h-1zM898 1005h1v1h-1zM904 1009h1v1h-1zM906 1005h4v1h-4zM908 1009h9v1h-9zM914 1005h1v1h-1zM917 1005h2v1h-2zM917 1006h19v1h-19zM919 1009h1v1h-1zM922 1009h6v1h-6zM929 1005h2v1h-2zM929 1009h2v1h-2zM932 1005h1v1h-1zM932 1009h1v1h-1zM936 1009h2v1h-2zM937 1006h2v1h-2zM939 1009h1v1h-1zM940 1006h24v1h-24zM942 1009h5v1h-5zM943 1005h1v1h-1zM949 1009h2v1h-2zM955 1009h1v1h-1zM957 1005h3v1h-3zM957 1009h3v1h-3zM963 1008h229v1h-229zM965 1006h40v1h-40zM966 1009h1v1h-1zM967 1005h1v1h-1zM968 1009h3v1h-3zM971 1005h1v1h-1zM972 1009h3v1h-3zM973 1005h2v1h-2zM977 1005h1v1h-1zM977 1009h1v1h-1zM979 1009h1v1h-1zM982 1009h3v1h-3zM983 1005h3v1h-3zM987 1009h1v1h-1zM989 1009h4v1h-4zM991 1005h1v1h-1zM993 1005h2v1h-2zM997 1009h2v1h-2zM1003 1005h1v1h-1zM1005 1009h4v1h-4zM1007 1006h48v1h-48zM1014 1009h1v1h-1zM1018 1005h1v1h-1zM1018 1009h7v1h-7zM1022 1005h2v1h-2zM1026 1005h1v1h-1zM1027 1009h2v1h-2zM1028 1004h1v1h-1zM1028 1005h2v1h-2zM1031 1009h1v1h-1zM1033 1009h3v1h-3zM1035 1005h2v1h-2zM1037 1009h15v1h-15zM1041 1005h1v1h-1zM1050 1005h2v1h-2zM1054 1009h2v1h-2zM1057 1006h14v1h-14zM1057 1009h3v1h-3zM1061 1009h7v1h-7zM1064 1005h3v1h-3zM1072 1006h19v1h-19zM1075 1005h1v1h-1zM1076 1009h7v1h-7zM1077 1005h1v1h-1zM1081 1005h4v1h-4zM1085 1009h1v1h-1zM1088 1005h1v1h-1zM1088 1009h1v1h-1zM1090 1009h1v1h-1zM1092 1006h1v1h-1zM1094 1006h3v1h-3zM1094 1009h3v1h-3zM1095 1005h2v1h-2zM1098 1005h2v1h-2zM1098 1006h11v1h-11zM1100 1009h2v1h-2zM1102 1005h1v1h-1zM1103 1009h4v1h-4zM1105 1005h1v1h-1zM1108 1009h2v1h-2zM1111 1005h1v1h-1zM1111 1006h25v1h-25zM1111 1009h2v1h-2zM1116 1009h2v1h-2zM1117 1005h1v1h-1zM1123 1009h2v1h-2zM1127 1005h4v1h-4zM1127 1009h2v1h-2zM1130 1004h1v1h-1zM1130 1009h2v1h-2zM1133 1009h16v1h-16zM1134 1005h1v1h-1zM1137 1006h2v1h-2zM1140 1006h14v1h-14zM1143 1004h1v2h-1zM1146 1005h1v1h-1zM1150 1009h5v1h-5zM1151 1005h3v1h-3zM1157 1006h147v1h-147zM1157 1009h4v1h-4zM1166 1004h2v1h-2zM1166 1005h21v1h-21zM1167 1009h1v1h-1zM1171 1009h1v1h-1zM1173 1009h1v1h-1zM1175 1009h1v1h-1zM1176 1004h1v1h-1zM1181 1009h1v1h-1zM1183 1009h3v1h-3zM1188 1005h3v1h-3zM1188 1009h2v1h-2zM1189 1004h2v1h-2zM1193 1008h9v1h-9zM1194 1005h2v1h-2zM1197 1004h1v1h-1zM1197 1005h5v1h-5zM1198 1009h1v1h-1zM1203 1004h1v1h-1zM1203 1005h17v1h-17zM1203 1008h31v1h-31zM1205 1009h3v1h-3zM1214 1004h4v1h-4zM1214 1009h2v1h-2zM1219 1009h7v1h-7zM1221 1004h2v1h-2zM1221 1005h14v1h-14zM1227 1004h2v1h-2zM1228 1009h1v1h-1zM1231 1004h1v1h-1zM1231 1009h1v1h-1zM1234 1004h1v1h-1zM1236 1008h24v1h-24zM1236 1009h2v1h-2zM1237 1005h8v1h-8zM1246 1005h2v1h-2zM1247 1009h3v1h-3zM1250 1005h7v1h-7zM1251 1009h2v1h-2zM1256 1004h1v1h-1zM1259 1004h1v1h-1zM1259 1005h5v1h-5zM1261 1004h1v1h-1zM1261 1008h44v1h-44zM1264 1009h1v1h-1zM1265 1005h12v1h-12zM1267 1004h1v1h-1zM1271 1009h2v1h-2zM1275 1004h1v1h-1zM1278 1005h2v1h-2zM1282 1005h4v1h-4zM1283 1009h2v1h-2zM1287 1005h5v1h-5zM1287 1009h6v1h-6zM1289 1004h2v1h-2zM1293 1005h1v1h-1zM1295 1005h6v1h-6zM1296 1009h1v1h-1zM1302 1009h1v1h-1zM1303 1004h1v2h-1z" fill="#000"/><path d="M163 1009h0m.2-1.3h0m.3-.1h0m.1 1.2h0m.7-2.1h0m.3-.3h0m.4 2.9h0m.6-3.7h0m.3 3.4h0m.6-.2h0m.4-2.9h0m.5 2.7h0m.3-1.8h0m.7 2.7h0m1.4-.9h0m.2-2h0m.1-.1h0m.1-1.7h0m1.1 4.3h0m.6-3.3h0m.8-.7h0m.8 3.5h0m.1-.2h0m.1 .6h0m.6-2.5h0m.1 1.6h0m.1-.1h0m.5-1.2h0m.2-.1h0m.5 1.1h0m.5-1.2h0m.2 1.4h0m.1 .2h0m.2 1.3h0m.2-3.1h0m.2-.1h0m.7 2.1h0m.1 .1h0m.3-2h0m.3 0h0m.1 2.1h0m.5 .2h0m.5 .1h0m.1-2.4h0m.3 2.5h0m.5 0h0m.6-2.7h0m.7 2.6h0m.3-2.8h0m.6 2.6h0m.2-1.9h0m.4-.1h0m.5 1.9h0m.1-.2h0m0 .2h0m.3-1.9h0m.6 2.2h0m.4-2.3h0m.8 1.7h0m.1-1.5h0m.1 1.3h0m.8-1.6h0m.6-.3h0m.1 2.4h0m.2-2.4h0m.1 2.7h0m.4 0h0m.3-2.7h0m1.2-.3h0m0 2.9h0m.4 .3h0m1.4 .3h0m.1-3.6h0m1.3 3.1h0m0-3.1h0m1 .9h0m.2 2.7h0m1.1-3.5h0m0 2.5h0m1.2-2.2h0m.5 2.7h0m.5-.3h0m.3-2.3h0m.6 .2h0m.2 2.1h0m.9-.2h0m.3-2.4h0m.7 3.1h0m.8-2.9h0m.5 2.6h0m.3-.1h0m.5-3h0m1.1 3h0m.2-.1h0m.1-.1h0m.7-2.3h0m.1 2.4h0m.7-2.2h0m.7 3.1h0m.6-.5h0m.4-1.2h0m.3 .6h0m.1 .2h0m.4-1.7h0m.2 0h0m.3 1.7h0m1-2.1h0m0 1.8h0m.8 .1h0m0-2.1h0m.3 0h0m.4 .2h0m.1 1.8h0m.3 .1h0m.4 .9h0m.3-3h0m1.1 2.9h0m.3 0h0m.6-2.9h0m.9 2.5h0m.4-2.1h0m.2 0h0m.2 2.1h0m.9 .4h0m.4-3.1h0m1.1 2.8h0m.4 .1h0m0-3.1h0m.5 3.1h0m1.3-.1h0m.4-3.1h0m.4 3.7h0m.1-2.9h0m.4 2.4h0m.1-2.4h0m1.6 2.6h0m.3-3.1h0m.6 2.9h0m1.3-2.8h0m.5-.1h0m.3 3.3h0m.9-.8h0m.6-3.1h0m.8 2.9h0m1.2-1.9h0m0-.2h0m.2 2.7h0m.8-.1h0m.6-2h0m.2 1.6h0m.1 0h0m.8-.1h0m.6-1.9h0m1.1-.1h0m.2 2.5h0m.4-2.7h0m.2-.5h0m0 3.8h0m0-3.6h0m.1 .2h0m.1 3.3h0m.3-3.7h0m1.4 .8h0m.4 2.7h0m.3-.2h0m.7-2.4h0m.4 0h0m.3 2h0m.6 .1h0m.3-1.8h0m.4 0h0m.1 1.9h0m.4-.4h0m0 .2h0m.1 0h0m.3-2.4h0m1.1 .4h0m.2 .1h0m.4 2.5h0m.1-.8h0m.5-1.4h0m.3-.1h0m.2-.1h0m.6 0h0m.1 1.5h0m1.1-2.4h0m.2 2.3h0m.7 1.2h0m.5-2.9h0m.9 2.5h0m.2-2.9h0m.1 2.8h0m.4-2.6h0m.4 2.9h0m.6-2.9h0m.9-.4h0m.8 2.7h0m.9-1.8h0m.8 2.3h0m.6-2.6h0m.1 3h0m.2-3.8h0m.6 .4h0m.3 3.3h0m.4-2.8h0m.2 .2h0m0 2.6h0m.2-2.8h0m.2 .2h0m.4-.1h0m.1 2.2h0m.1-2.2h0m.5 2.2h0m1.1-2.3h0m0 2.8h0m.1-3h0m.8 .1h0m.6 0h0m.1 0h0m.1 2.3h0m.7 .4h0m.1-2.5h0m1 2.3h0m.4-2.4h0m.1 2.6h0m.8 .2h0m.1-3.3h0m1.1 2.9h0m.2-2.9h0m.1 2.8h0m1.3-2.8h0m.2 .5h0m.6 2.1h0m.6 .2h0m.3-2.2h0m1.2 1.8h0m.5-1.4h0m.6 1.9h0m.3-.2h0m.1-2h0m.3 1.8h0m.3-1.4h0m0 0h0m.6 1h0m1-1.3h0m.1 2.1h0m0-2.5h0m.5 .6h0m.2-.2h0m.7 2.6h0m.4-2.9h0m.2 .2h0m0 2.2h0m.2-3.1h0m.7 .5h0m.7 .6h0m.5 2.5h0m.7-2.5h0m.5 1.9h0m.1-1.9h0m.4 .1h0m.2-.2h0m.1 1.9h0m.7-2.2h0m0 2.2h0m.1-2.3h0m0 2.3h0m0-2.3h0m.7-.9h0m.1 2.8h0m0-2.3h0m1.5 .4h0m0 2.4h0m.1-.2h0m.5-2.3h0m.2-.2h0m.6 .5h0m.4 1.9h0m.6-1.7h0m.4 0h0m.1 1.5h0m.1-1.3h0m.2 1.6h0m.5 0h0m.3 .4h0m.4-2h0m.8-.3h0m.2 1.7h0m0-2h0m.2 2.3h0m0-.1h0m.9-2.2h0m.4-.4h0m.4 2.8h0m.5-2.6h0m.1-.4h0m.4 3.2h0m.9-2.3h0m.5 2.7h0m.6-3.1h0m.6 2.6h0m1.1-.3h0m0-2.3h0m1-.5h0m.2 3.1h0m.3 .5h0m1.2-3h0m.2 0h0m.3 2.4h0m.2-2.8h0m.5 3.4h0m.5-2.9h0m.9 2.6h0m.2-2.4h0m.1 2.1h0m0-.3h0m.8-.2h0m.1 .1h0m.1-2.2h0m.1-.3h0m.6 2.4h0m.4-2.4h0m.5 2.8h0m.2-2.8h0m1 2.6h0m.4-2.8h0m.6 2.7h0m.2-1.6h0m.6 2.1h0m.3 0h0m0-2h0m.5 .2h0m.1 .3h0m.1-.2h0m.9 .9h0m.2 .1h0m.2-.5h0m.2-.3h0m.4-.1h0m.2 .8h0m0-.8h0m.2 .8h0m.4 .4h0m.7-2.4h0m.5 1.8h0m.7-1.7h0m.5 1.8h0m.4 .3h0m0-2h0m.7-.1h0m.5 0h0m0 2.3h0m0 0h0m.4 .7h0m.4-3h0m.5 2.1h0m.1-2.4h0m.8-.1h0m.2 2.7h0m.7 .2h0m.6-.1h0m.2-2.4h0m.8-.4h0m.4 .9h0m0 2.4h0m.9-2.1h0m.2 1.3h0m.7-1.8h0m.4-.3h0m.1 2.4h0m.2-2.4h0m.7 2.9h0m.8-.4h0m.1-2.3h0m.3-.2h0m.6 2.5h0m1.3-2.5h0m0 2.3h0m.1-2.1h0m0 2.1h0m.6 .9h0m.3-3.8h0m.5 .1h0m.1 2.8h0m1.6-.1h0m0-.1h0m.2-2h0m.1 2.1h0m.4 .2h0m.2-.3h0m.8-.3h0m.3-1.6h0m.5-.4h0m.6 3.4h0m.1-.6h0m.7-2.9h0m.1 2.6h0m1.5-1.8h0m.6 1.8h0m.5-2.7h0m.7 3.3h0m.7 .1h0m.5-2.4h0m1.5 2.1h0m0-2.8h0m1.4 3.3h0m.2-3.3h0m.5 .2h0m.1 .1h0m.7 3h0m.3-.5h0m.8-3.2h0m.9-.1h0m.1 3.3h0m1.4-3.3h0m.2 3.4h0m.5-3h0m.9 2.4h0m.7-2.1h0m.8 1.8h0m.5 .6h0m.3-3h0m.6 3.2h0m.7-3.4h0m.5 3.9h0m.6-3.3h0m.3 2.5h0m.1-.1h0m.5 .1h0m.3-.2h0m.4-2.4h0m.7 .5h0m0 2.1h0m.4-2h0m.1 .1h0m.5 .1h0m0 1.3h0m.5-1.2h0m.7-.4h0m.3 2.4h0m.2-2.7h0m.3 3.1h0m1-4.2h0m.3 3.8h0m.8 .5h0m.2-3.8h0m.8 .3h0m.1 3.3h0m.4-3.1h0m.2 .4h0m.9 .4h0m0 2.1h0m.3-2h0m.7 2.2h0m.1-2.4h0m.3 2.6h0m.1-2.4h0m.2 2.4h0m.3-2.5h0m.7 2.5h0m.2-2.7h0m.6-1.1h0m.1 .3h0m.5 3.5h0m.6-3.4h0m.4 3.3h0m.5-2.7h0m.6 2.8h0m1.1-2.8h0m.1 2.2h0m.8 .2h0m1-3.2h0m.4 3.1h0m.2 .3h0m.6-3.8h0m.2 4h0m.5-.3h0m.7-.2h0m.3-3h0m1.1 .3h0m.8 3.2h0m.5-2.9h0m.6 2.5h0m.2-.6h0m.1-2.2h0m.9 .4h0m.1 1.2h0m.9-1.8h0m.3 3.4h0m1.2-2.5h0m.4 0h0m0 0h0m.1 2.4h0m.7-.8h0m1.1-2.7h0m.3 .9h0m.4 2.1h0m0-.4h0m.3 .4h0m.3-2h0m.3 0h0m.8-.5h0m0 3.1h0m1.2-2.9h0m.7 .1h0m.1 2h0m.2-1.9h0m.6-.1h0m.2 1.8h0m.6-1.8h0m.1 1.8h0m.1 .3h0m.3-2.2h0m.3 .1h0m.7 2.4h0m.5-2.5h0m.1 0h0m.7 2.9h0m.1-3h0m.7-.2h0m1.1-.3h0m0 3.2h0m.7-.2h0m.5-4.1h0m1.2 3.5h0m.4 .6h0m.2-.1h0m.2-2.7h0m.2-.3h0m.2-.4h0m.8 3.6h0m1.3-3h0m.1 3.4h0m1.1-.9h0m.1-.2h0m.4-1.8h0m0 0h0m.3-.4h0m.8 2.3h0m.3-1.9h0m1 1.7h0m.4-2.2h0m.2 2.7h0m.1 0h0m1.2-2.9h0m.1 2.9h0m.4-1.8h0m.1 2.2h0m1.2 .3h0m.5-2.7h0m.8 2.1h0m.4-2.4h0m.4 .1h0m.4 2.6h0m.5-3.3h0m.7 3.2h0m1 .4h0m.2-2.9h0m.3-.6h0m1.1 3h0m.6 .5h0m.2-2.7h0m.2-.1h0m.2-.1h0m.2 2.5h0m0-2.9h0m.6 2.8h0m.1-2.9h0m.2-1.3h0m.7 1.5h0m.7 3.2h0m.3-2.2h0m.3 2.2h0m.9-2.5h0m.5-.9h0m.2 .4h0m.6 2.8h0m1-2.9h0m.6 2.1h0m.1-2.6h0m.9 2.7h0m.4-2h0m1 .4h0m.1 1.4h0m.3 0h0m.3-1.6h0m.2-.4h0m.1 1.8h0m.6-1.8h0m.8 .2h0m.1-.4h0m.3 2.6h0m.7 0h0m.3 .3h0m.2-.1h0m0-2.3h0m.4-.5h0m.5 3.3h0m.9-4h0m.6 3.8h0m.8-.9h0m.2-1.9h0m1 2.1h0m.1-1.9h0m.9 1.6h0m.4-1.6h0m0 1.5h0m.4-2h0m.4 2.7h0m.5 .6h0m.9-3.2h0m.6 2.6h0m.9 0h0m.1-2.5h0m1.5 3.1h0m.1-2.7h0m.3 2.2h0m.5-2.7h0m.4 2.6h0m.1-2.3h0m.7-.2h0m.7-.2h0m0-.1h0m.4 3.3h0m1.3 .1h0m0-3.1h0m.9-.8h0m.9 3.2h0m.3 .1h0m.6 .4h0m.1-3h0m.6-.8h0m.1 3.2h0m.4-3h0m1.1 3.3h0m.9-3.5h0m.2 4h0m1.2-4.1h0m1.1 1h0m0 2.5h0m.2-2.4h0m.3 .4h0m.8 2.6h0m.1-2.5h0m.4-.1h0m.6-.3h0m.3 1.9h0m.1-3.1h0m0 3.1h0m.7 .1h0m.2-3.4h0m0 3.4h0m.4 .1h0m.3 .2h0m.6 .6h0m.1-3.9h0m.6 1h0m0 2.1h0m.2 0h0m.5-2h0m.6 2h0m.4 0h0m.7 .2h0m.3-2.8h0m.6 .5h0m.5 2.8h0m1.4-.1h0m.2-3.8h0m1.3 3.8h0m.4-3.7h0m.9 .9h0m.1 2.5h0m.2-.1h0m1.4 0h0m.3-2.5h0m0-1.1h0m.3 .7h0m.1 2.6h0m1-2.3h0m.1 2.5h0m.7-2.9h0m.3-1.1h0m.5 4.7h0m0-3h0m.1-.3h0m1.1 .8h0m.3 2h0m.5-2.2h0m.8 2.3h0m0-2.5h0m.6-.4h0m.1 2.5h0m.1 .1h0m.2-2h0m0 1.8h0m.6-1.9h0m.2 2.2h0m.1-2.2h0m.1 1.5h0m0 .1h0m.6-1.6h0m.7 1.2h0m.1-1.8h0m.2 1.9h0m.1 .3h0m.6 0h0m.5-1.9h0m.4 1.8h0m.4-2.1h0m.2 2h0m.6 .9h0m.1-3h0m.4 .3h0m.8 .2h0m.1 2.5h0m.9-3.4h0m1.2 2.8h0m.7-2.3h0m.2 0h0m.7 2.6h0m.8 .5h0m.2-.5h0m.2-2.6h0m1.1 2.3h0m.2-1.4h0m.2 1.4h0m.4 .3h0m.2-1.8h0m.4 2.3h0m.7-3.5h0m0 3h0m.7-2.8h0m.2 2.3h0m.5 .2h0m.6-1.8h0m.4 .1h0m.3 1.9h0m.2-.2h0m.4 1h0m.8-2.5h0m.1 2h0m0-2.5h0m.9 2.6h0m.1-.1h0m.1-.3h0m1.1 .1h0m.1-2.9h0m.1 2.4h0m.1 .3h0m.3-2.5h0m.5 1.9h0m0-.9h0m.9 0h0m.3 1.4h0m.4 1.1h0m.6-3.1h0m.7-.1h0m.3 2.1h0m0-1.8h0m.2 1.6h0m.9-.3h0m.1-1.4h0m1.1 2.5h0m.2-2.9h0m.1 .1h0m.7 .4h0m.4 2.3h0m1.2-1h0m.2-1.5h0m.6 .2h0m.6 2.4h0m.3-2.5h0m.1 2.7h0m1.5-.6h0m.2-2.1h0m0-.3h0m.1 .2h0m0 0h0m1-1.6h0m.7 0h0m.2 3.7h0m.2-1.5h0m.1 1.5h0m.1 .7h0m1.4 0h0m.2-3h0m.2 .3h0m.4 2.9h0m.1 .1h0m.6-2.9h0m.8-.5h0m.3 3.1h0m1.5-2.6h0m.1 .2h0m.2 2.2h0m.1 .1h0m.2-.2h0m.4-2.7h0m.7-.5h0m.8 3.6h0m.9-.2h0m.3-2.9h0m1.5-1.4h0m.1 3.8h0m1.3 0h0m0-2h0m.4-.1h0m.3 .5h0m.1 0h0m.1 2.5h0m.6 0h0m.2-2.5h0m.3 1.4h0m0-1.5h0m.3 .2h0m.1 1.3h0m.1-1.6h0m0-.2h0m0 1.7h0m.8-1.7h0m.8 2.2h0m.3-2h0m.2 2.7h0m1.2-3.1h0m0-.1h0m.3 2.4h0m.8 .6h0m.2-.5h0m.5-.6h0m.3-1.4h0m.2-.2h0m1 1.8h0m.1-2.4h0m1.5 .1h0m.1 3.2h0m.7 .1h0m1.5-3h0m0 2.9h0m.6-3.5h0m.2 3.4h0m1.1-2.8h0m.8 2.8h0m.4 .3h0m.3-3.3h0m.4 2.5h0m.1 .2h0m.7-2.6h0m.3-.2h0m.1-.1h0m.1 2.6h0m.6 .4h0m0-2.8h0m.9 .7h0m.1 2.2h0m.8-2.3h0m.8 2.7h0m.2-3.3h0m.2-.2h0m.4 .3h0m.6 2.3h0m1.1 .6h0m.1-3h0m.6-.3h0m.1 3.5h0m.2-3.1h0m1.5 .1h0m0 2.3h0m1 .4h0m.8-2.5h0m.9 2.9h0m.1-3.7h0m1.7 2.4h0m0 .1h0m.1 .1h0m.1-2.2h0m.4 2.1h0m.6-.4h0m.9-1.7h0m.1 1.9h0m.4 1.1h0m.8-2.3h0m0 2.1h0m0-1.9h0m.3 0h0m.2 1.6h0m.5-1.7h0m.3 1.3h0m.7-.1h0m.1-1.7h0m.1-.1h0m.6-.3h0m.2 2.6h0m0 .2h0m.8-.5h0m.1 .4h0m.2-.3h0m0-2.2h0m.5 1.9h0m.7-.1h0m.5-2h0m.1 1.9h0m.5 .5h0m1.1-2.4h0m.1 3.2h0m.2-3.5h0m1.5 2.9h0m.2-.1h0m.4-3.4h0m.9 3.7h0m.3-2.3h0m.5 0h0m.2 0h0m0 2.1h0m.4-2.5h0m.6 3h0m.7-.5h0m.7-2.1h0m.6 1.9h0m.5 0h0m0-3.1h0m.8 3.8h0m.8-3h0m.4 .3h0m.4 .3h0m0 .1h0m.4 2.4h0m1.1-.3h0m.4-1.9h0m.2-1.2h0m.4 .4h0m0 3.2h0m.4-3.1h0m.3 .2h0m.2 2.9h0m.2-2.8h0m.8 .3h0m0 2h0m.5-.1h0m.6-2.1h0m0 2.3h0m0-3.3h0m.6 3.1h0m.3 .3h0m.1-2.5h0m1.2 2.4h0m.2-2.6h0m.4-.7h0m.5 .1h0m.6 2.6h0m.2-.4h0m.3 0h0m.1-2.1h0m.4 0h0m.2 2h0m.8 .6h0m.1 .6h0m.1-3.2h0m.1 .3h0m.4 .3h0m.2 2.7h0m.1-.4h0m.2-2.4h0m.5 0h0m1.1 2.4h0m.1-1.6h0m1.2 1.4h0m.2-2.2h0m.8 1.9h0m.5-2.1h0m.2 2h0m.2 0h0m.2-.1h0m.1-1.9h0m.6 2.1h0m.7 .8h0m.2 .3h0m.7-2.9h0m0-.4h0m.1 3.2h0m.1-3.8h0m.8 3.1h0m.8-2.9h0m.2 .4h0m.8 2.7h0m1-2.1h0m.3-2h0m.6 4h0m.4 .6h0m.1-2.8h0m.3 .2h0m.3 1.8h0m1.1-1.9h0m0 1.5h0m.4-1.4h0m.8-1.1h0m.2 3.5h0m.4-.2h0m.6-2.5h0m.9 0h0m.6 0h0m.3 2.1h0m.6 .1h0m.5-2.1h0m.4 2h0m1-.1h0m.1-1.3h0m.3-.2h0m.5-.5h0m0 2.2h0m1.1 0h0m.8-2.8h0m.2 2.8h0m.4-1.8h0m.1 1.9h0m.5-1.7h0m.1-.1h0m0 0h0m.1 1.6h0m.6 .3h0m.2-.5h0m.1 0h0m.1-1.8h0m.3-.6h0m1 2.8h0m.1-2.5h0m.4 2.5h0m.8 .1h0m.7-1.8h0m.2 2h0m.3-4.3h0m.2 4.5h0m.1-2.7h0m.4 2.3h0m.9-2h0m.6 2.6h0m.2-3.7h0m.5 3.6h0m1-3.4h0m.6 .3h0m.2 2.7h0m1-.3h0m.2-2.4h0m.3 2.3h0m.8 .4h0m.6-2.3h0m.2-.2h0m0 0h0m.5 3h0m.2-3.2h0m.8 0h0m.2 2.9h0m.9-3.5h0m1.2 2.4h0m.7 .7h0m0-2.3h0m.3 2.4h0m.4-.2h0m.1 .2h0m.3-2.5h0m.2-.2h0m1 3h0m.8-2.2h0m.9-.1h0m.1 .1h0m.3 2.5h0m.2-3.1h0m.7 .9h0m.3 1.7h0m.2-1.8h0m.5 .1h0m.6 1.8h0m.2-.4h0m.4-3.5h0m.8 3.8h0m1.1-2.8h0m.1-.1h0m.1 2.4h0m.4-2.2h0m.3 .4h0m.6 1.8h0m.2-1.6h0m.5 1.7h0m.1-1.6h0m0 1.5h0m.2 .1h0m.9-1.7h0m.2 .1h0m.2 1.6h0m.4-1.7h0m1.2 0h0m.1 2.2h0m.4-.2h0m.3-2h0m.5-1.1h0m0 .2h0m.4 2.7h0m.1 .4h0m.3-2.7h0m1 2.2h0m.4-.6h0m0-1.7h0m1.2 .3h0m.1-1.4h0m.1 3.1h0m.3 .8h0m.7 .3h0m.1 .1h0m.1-2.3h0m.6 1.4h0m.3-1.7h0m.3 1.8h0m.6-1.9h0m.3-.1h0m.2 2h0m0 .1h0m.8 .5h0m.3-2.9h0m.4-.1h0m.5-.1h0m.7 2.7h0m.4-1.9h0m.3 2.1h0m.4-2.1h0m.4-.3h0m0-.1h0m.1 .1h0m.3 2.6h0m.3-2.7h0m.7 2.9h0m.2-3h0m.9 2.4h0m1-2.5h0m.2 2.5h0m.3-2.8h0m.7 .2h0m.4 3.2h0m.4-2.8h0m.7 2.1h0m.1-2.3h0m.6 2.2h0m.5 .4h0m.3-3.7h0m.2 3h0m1.1 .2h0m.2-.1h0m0-2h0m0 0h0m.5 2.4h0m.3-2.4h0m.3-.1h0m.1 2.7h0m.2-.2h0m.1-2.8h0m.4-.6h0m.5 .7h0m.1 .4h0m0 2.3h0m.3-.1h0m1.1 0h0m.1-2.2h0m.3 .3h0m.4-.1h0m.5 2.3h0m.2-2.2h0m.6-.8h0m.2 3.3h0m1-2.6h0m.3-.1h0m.1 .3h0m.4 2.1h0m.2-2.2h0m.5 1.4h0m.3-.1h0m.9-1.7h0m.3 1.8h0m.7-1.7h0m.5 2h0m.3-1.9h0m1.1-.2h0m.2-1h0m.1 4h0m.8-.5h0m1-3.2h0m0 3h0m.7-3.7h0m.9 2.9h0m.2-1.6h0m.6 1.8h0m.4-1.6h0m.6 2.8h0m.4-3h0m.1 2.7h0m1-.1h0m.2-2.4h0m.3-.4h0m.3 2.9h0m.5-3.9h0m.3 3.2h0m.3-2.1h0m1.1 .4h0m.2 1.9h0m.7 .1h0m.1 .1h0m.3-.4h0m.5 .2h0m0-2.5h0m.7 2.7h0m.8-2h0m.3-.3h0m.4 2.1h0m.1-2.6h0m.5 2.9h0m.1 .6h0m1.1-3h0m0 2.2h0m.5-2.3h0m.8 3.1h0m.4-4.7h0m1 4.5h0m.4-4.5h0m.6 4.5h0m.7-.4h0m0-2.3h0m.2 2.1h0m1.3-.6h0m.1 .8h0m0 .6h0m.6-2.6h0m.2-1h0m.1 .4h0m.2 1.2h0m.3-1.1h0m.5 1h0m.6 .5h0m0 .4h0m.1-2.1h0m.1 .1h0m.2 0h0m0-.4h0m.2 2.5h0m.4 .5h0m.3-2.1h0m1.1 .4h0m.3 0h0m0 0h0m.3 1.3h0m.8-.1h0m.1-2.4h0m.1 2.5h0m.3 .4h0m.2-2.6h0m.8 2.1h0m.3-2h0m.1 2h0m0-1.8h0m.2 1.9h0m1.1 .3h0m.8-2.6h0m.2 2.6h0m.1 .1h0m.3-2h0m0-.1h0m.8 .1h0m.2 2h0m.3 .2h0m.4-3.1h0m1.4 2.4h0m.1-2.7h0m1 2.9h0m.3-2.3h0m.6 2.1h0m.8-1.8h0m.2 2.3h0m.3-.2h0m.7-2.2h0m.6-.9h0m.4 3.5h0m.3-2.2h0m.1 1.9h0m.1-.2h0m.8-1.7h0m.9 2.3h0m1-.1h0m.1-2.3h0m.4-.7h0m.4 3h0m1 0h0m0-2h0m1-.6h0m.2 1.9h0m.5-2.3h0m.8-.3h0m.2 3.5h0m.6-.5h0m.2-.2h0m1-.1h0m.1-2.5h0m1.2 3.5h0m.4 0h0m.1-3.7h0m1 2.5h0m.1-2.1h0m0 2.1h0m.7-.2h0m.1-2h0m1 .7h0m.6 .1h0m0 1.2h0m.9 .6h0m.3-3h0m.1 3.7h0m.4-1h0m.3-1.6h0m.6 0h0m.4 1.3h0m.5-1.1h0m.2 .5h0m.5-.1h0m.6-1.6h0m.6 2h0m0 1.1h0m.3-.5h0m.7-2.5h0m.1 2.5h0m.3-2.4h0m.3 2.5h0m.1 .4h0m.5-2.4h0m.2 .3h0m.4 0h0m0 2.2h0m.3 .4h0m.1 0h0m.1 .1h0m.4-2.8h0m.7 .2h0m.3 .2h0m.3 2.4h0m.9-2.1h0m.2 1.2h0m.4 .1h0m.1-1.3h0m.6-1.1h0m.4 2.1h0m.7 .7h0m.5-2.4h0m.9-1.6h0m.2 3.3h0m.3 0h0m.5 .5h0m.5-.3h0m0-2.4h0m1.1 2.4h0m0-2.8h0m.6 2.6h0m.1-.1h0m.2-.3h0m.5-2.4h0m.7 2.4h0m.2-.1h0m.6-1.1h0m.1 1.4h0m.3 .3h0m.3-.2h0m.3 0h0m.3-1.7h0m.9-.8h0m0 3.4h0m.9 .2h0m1-3.4h0m.1 .2h0m.9 .9h0m.1 2.4h0m.2-2.6h0m.9 .1h0m.6 1.8h0m.2-2.4h0m.4-.4h0m1.1 1.1h0m.4 2.4h0m.1-2.4h0m1-.5h0m1.1 2.5h0m.1 0h0m.1-2.4h0m.1-.1h0m.7 2.8h0m.7-2.8h0m1.1-.5h0m.1 2.2h0m.7-1.8h0m0 2h0m.2 .7h0m1.2 .3h0m.4 0h0m.1-3.3h0m.6-.2h0m.3 3.4h0m.5-1.1h0m1-.4h0m.1-1.6h0m.3 1.6h0m0-1.5h0m.3 1.9h0m0 0h0m.1 .3h0m.8-3h0m.3 3.9h0m.3 0h0m.9-1.5h0m.2 .1h0m.2 0h0m.2-2h0m.7 2.2h0m.6-2.5h0m0 3.1h0m.9-2.1h0m.4 2.1h0m.2-2.2h0m1.1 2.4h0m.6-3.3h0m.4 3.1h0m.5-3.4h0m.6 .6h0m.4 3.1h0m.6-2.1h0m.3 1.5h0m.2-.1h0m1.1-1.7h0m.6 .4h0m.2 2h0m.3-1.6h0m.7 0h0m.5-.6h0m.4-.6h0m.2 2.8h0m.2 .3h0m.4-.8h0m.3-2.1h0m.3 1.8h0m1.1-.2h0m.1-1.5h0m.6 1.5h0m.4-1.4h0m.6-.5h0m.5 2.3h0m.4 .5h0m.7-2.5h0m.3 .2h0m.3 1.7h0m.3-1.7h0m1.2 2.4h0m.2-2.5h0m1.2-.4h0m.5 1.8h0m0-2.2h0m.8 3h0m.4 .2h0m.5-.2h0m.1-2.2h0m.4 2.2h0m1.2-2.7h0m.7 .4h0m.1 2.9h0m1.1-.6h0m0-3h0m1.2 3h0m1.1 .1h0m0-3.3h0m1.8-.1h0m.1 3.6h0m1.5-2.9h0m.4 .4h0m.1 2.2h0m.9-2.2h0m.3 1.3h0m.1 .1h0m.5-2.7h0m.6 3.1h0m.1 .1h0m1 .3h0m.5-3h0m0 3.1h0m.6 .5h0m1-1.1h0m0-1.9h0m.4 2.1h0m.3-2.7h0m.5 2.7h0m.2-.1h0m.2-2h0m.3 1.8h0m.3-1.9h0m.1 1.8h0m.7 0h0m0 .1h0m.4-1.9h0m.3 2.9h0m.2-.4h0m0-2.7h0m.3 2.2h0m.9-1.9h0m.9-.1h0m.2 2.1h0m.1-2h0m.6 .1h0m.1 2.5h0m.4-2.2h0m.1 1.8h0m1 0h0m.5-2h0m.2 2.5h0m.5-3h0m0 2.9h0m.9-2.8h0m1.2 2.9h0m.8-3.1h0m.6 0h0m.4 3h0m.1-.5h0m1-2.1h0m.9 2.2h0m0-1.8h0m.3 2h0m.6 .6h0m.8-3.3h0m.1-.8h0m.5 .4h0m.6 2.6h0m.9 1.1h0m.1 0h0m.2-3.3h0m.7 .7h0m0 2.3h0m.4-2.1h0m.1 2.2h0m.6 .2h0m.4-2.8h0m.3-.5h0m.4 2.1h0m.7-2.4h0m.4 2.8h0m.7-2.6h0m.2 2.1h0m.2 .1h0m.4 .1h0m.1-1.7h0m.7 1.9h0m.4 .4h0m.2 0h0m.3-2h0m.3-.2h0m.2 2.1h0m1.2-1.7h0m.4 1.6h0m.5-1.5h0m.1 1.8h0m.4-2.5h0m.5-.3h0m.3 2.3h0m1-2.9h0m.6 2.2h0m.1 1.2h0m.1-1.2h0m.4 0h0m.4-.1h0m.1 1.6h0m.4-.6h0m0-1.4h0m.3-.4h0m.9-.7h0m.2 1.9h0m.1-1.9h0m.1 2h0m.2-.1h0m.4-2.1h0m.4 2.5h0m.5-3.4h0m0 3.5h0m1.2-2h0m.1 2.3h0m.4-.2h0m.3-.1h0m.3-2.2h0m.4-.4h0m1.2 2.7h0m0-2.3h0m.6 3h0m.4-3.1h0m0 2h0m.1-2.1h0m.3 1.9h0m.5-1.7h0m.3-.1h0m.7 0h0m.2 2.4h0m.1-2.7h0m.8 2.9h0m.6-1.9h0m.3 2.4h0m.4-.3h0m.5-2.5h0m.6-.5h0m.7 2.8h0m.5-3h0m.1 3.1h0m.1-3.1h0m0 3.5h0m.3-3.6h0m1.2 2.8h0m0-2.2h0m1.5 2.5h0m0-2.2h0m.3 2.1h0m.7-2.5h0m.1 0h0m.2 2.6h0m.3-2.1h0m.7 .4h0m.2 1.2h0m1.6-1.7h0m0 1.6h0m.3 .6h0m.9 .4h0m.5-3.4h0m.8 0h0m.1-.2h0m.7 3.3h0m.2 .1h0m.8-2.7h0m.4 2.2h0m.4-3.3h0m.6 .2h0m.1 3.1h0m.4 .6h0m.2-3.7h0m.9 .7h0m.6 3.1h0m.2-2.9h0m0 3h0m.4-2.8h0m.2 2.7h0m.8-2.7h0m.3 2.7h0m.2-3.1h0m.5-.6h0m.4 .1h0m0 3.1h0m.5-.2h0m.1 .2h0m.2-.6h0m.1 .2h0m.6-2.6h0m.1 .2h0m.7 1.4h0m.1 .1h0m.6 .5h0m.2-.1h0m.1 1.1h0m1.1-.4h0m0-1.7h0m.1-.3h0m0 2.1h0m0-.2h0m.4-2.2h0m.2 1.9h0m.5-2.8h0m0 2.8h0m1.7 .9h0m0-2.9h0m.2 .2h0m.3 0h0m.2 2.4h0m0-.1h0m.7-2h0m.3-.1h0m.2 1.7h0m.8 .1h0m.2-2h0m.4-.2h0m.4-.3h0m.4 0h0m.3 3.5h0m0 0h0m.5-.6h0m1-2.5h0m.4 2.8h0m.4-3.3h0m.1 3h0m1.3-2.1h0m.1 2.1h0m.8-2.1h0m.5-.2h0m0 2.6h0m.2-3.2h0m.4 .2h0m0 2.4h0m1.2 .4h0m.7 .5h0m.1-2.9h0m.7 0h0m.4 2.4h0m.1-2.7h0m0 2.6h0m.7-2.3h0m.4 1.8h0m.8-1.8h0m0 2.5h0m.4-2.4h0m.3-.2h0m.2 2.3h0m.2-.3h0m.5-1.9h0m.6 1.6h0m.6-.3h0m0-1.5h0m.3 1.7h0m0-2.6h0m.8 2.9h0m.3-2.5h0m.9 3.5h0m0-3.5h0m1.2 2.8h0m.4-2.1h0m.2 0h0m.5 2.1h0m.1 .2h0m1.3-2.5h0m.7 2.8h0m.7-3.3h0m.5 .1h0m.6 .3h0m.1 2.7h0m0-2.4h0m.5 2.6h0m.2-.4h0m.6-1.6h0m.1 1.3h0m0 .1h0m.2-1.3h0m.2 1h0m.6-1.5h0m.3-1.2h0m.3 0h0m.3 2.9h0m.3-2.3h0m0 2.3h0m.7 .3h0m0 .1h0m.1-.2h0m.4-2.4h0m.1 1.9h0m0 .1h0m.9-.3h0m.4-1.4h0m.5 1.7h0m.6 1.2h0m1.1-3.4h0m.1 3.2h0m.5 .1h0m.4 .1h0m.5-2.9h0m.8 0h0m.1 2.9h0m.9-3.3h0m.3 2.6h0m.1-.3h0m0-1.7h0m.1 1.6h0m.5 .1h0m.5-1.8h0m.9 2.7h0m.1-3.7h0m.6 3.2h0m.1-2.9h0m.1 3.1h0m1-.6h0m.8-2.3h0m.2 2.6h0m0-2.9h0m.4 3.1h0m.5-2.7h0m0 2.2h0m.7 0h0m.6-1.5h0m.6 1.8h0m.1-2h0m.5 .4h0m.1 1.2h0m.2 .2h0m.8-1.4h0m.3 2h0m.7-2.8h0m.5 .9h0m.1 1.3h0m.4-1.1h0m.7 1.2h0m.5-.5h0m0 0h0m.5-2h0m.4 .4h0m.4 .2h0m0 1.5h0m.4-1.2h0m.1 1.4h0m.2 .4h0m.3 .2h0m.2-.4h0m.6-2.1h0m.4-.4h0m.1-.3h0m.4 3h0m1 .6h0m.1-3h0m.1 3h0m.3-2.7h0m0 0h0m.2-.2h0m.1 2.7h0m.4-2.2h0m1 1.3h0m0 .2h0m.1-1.6h0m1-.4h0m.5 2.1h0m.9-2.5h0m0 2.6h0m.1-.1h0m.6-2h0m.3 2h0m.2-1.9h0m1.2 1.7h0m.3-2h0m.5 2.4h0m.1-.5h0m.4-2.2h0m1.3 2.3h0m.6 .5h0m.5-2.5h0m1 1.9h0m.5 .7h0m0-3.7h0m1 3.6h0m0-3.6h0m.9 3.9h0m.2-3.3h0m.8 2.2h0m0-1.7h0m1.1 1.7h0m.1 .3h0m.3-.8h0m.2-1.1h0m.5 1h0m.5-.2h0m.4-1.1h0m.6 .7h0m0 .8h0m0 .4h0m.4 0h0m0-.8h0m.1-.2h0m.7-.3h0m.4 1.5h0m.4-1.9h0m.4 2.7h0m.1-3h0m.1 2.3h0m1-2.4h0m0 2.1h0m.7-1.4h0m0-.1h0m.8 2.8h0m.1 0h0m.1-2.8h0m1.5 2.4h0m.4-3.1h0m.3-.3h0m1 1.3h0m.4 2h0m.4-.3h0m.1-1.7h0m.6-1.8h0m.7 3.9h0m1.2-2.7h0m.1 2.1h0m.1-.1h0m.1-2.1h0m.9 2.8h0m.3-.3h0m.1-.1h0m.2-2.8h0m.2-.2h0m.7 2.8h0m.5-2h0m.4 3h0m.6-1.1h0m.1-1.7h0m.8 1.2h0m.5-1.3h0m.3-.7h0m.3 2.5h0m.2-2.1h0m.8 3.2h0m.1-3.3h0m.1 2.9h0m.5-3.3h0m.2 2.9h0m.8 .1h0m.8-3h0m.4 .8h0m.1 1.8h0m.4 .1h0m0-1.7h0m.5 1.7h0m.6 .3h0m.1-.1h0m.6-2.6h0m.6 .2h0m.5 .4h0m.2 2.4h0m.9 .4h0m.7-.1h0m.1-3.6h0m.5 .3h0m.2 .1h0m.6 2.5h0m.2-2.2h0m.3 2.1h0m.2-.3h0m.7-3h0m.6 3h0m.1-2.1h0m1 2.5h0m.2-.1h0m.8-2.3h0m.8 .3h0m.3 2.3h0m.3-2.1h0m.2 2.2h0m1-.5h0m.3-1.7h0m.2 1.2h0m1.1 0h0m.1-1.9h0m.7 2.5h0m.8-2.3h0m.1 2.2h0m.7-2.4h0m.2 2.2h0m1.1-1.3h0m.7 2.3h0m.1-1.9h0m.4-.2h0m1.2 2.3h0m.1-2.4h0m.3-.1h0m.7 1.8h0m.3-2.5h0m.5 2.5h0m.3-2.8h0m.4 2.3h0m.5-.1h0m.6-1.1h0m.2 1.5h0m.3-2.1h0m.6 2h0m0-2.2h0m.3 2.3h0m.4-2h0m1.1 .2h0m.3 2h0m.4-2.2h0m.5 0h0m.1 2h0m.9-2.4h0m.2 .4h0m.3 .1h0m.1 1.8h0m.3 0h0m0-1.8h0m.4 0h0m.7 1.8h0m.5-2.8h0m.4 3.8h0m.2-3.4h0m.9 3.4h0m.2-3h0m.9 .2h0m.7 2.2h0m.4-.3h0m.2-3h0m.1 3.2h0m.9-3.4h0m.3 3.6h0m.5-2.8h0m.2 3.3h0m.6-.9h0m.4-.4h0m.1-2.1h0m.7 .1h0m.5-.3h0m.3 2.4h0m.6-1.7h0m.3 1.9h0m.2 .6h0m.4 .4h0m.4-1.2h0m.1-3.4h0m.4 1.1h0m1 2.1h0m0-1.4h0m.1 1.5h0m0-.1h0m.1 .1h0m.5 .4h0m0-1.7h0m.6 1.9h0m.4-2.1h0m.8-.5h0m.2 2h0m.6 .6h0m.1-.3h0m.6-1.7h0m.6 2.5h0m.7-3.8h0m.1 3.1h0m.5-3.1h0m.7 3.3h0m1 .7h0m.3-3.2h0m1.1 .1h0m.5 3.1h0m.4-3h0m0 .1h0m1.2-1h0m.1 3.9h0m1-2.6h0m.5 1.8h0m.2 0h0m.6-1.8h0m.6 1.9h0m.3-2.5h0m.8 .6h0m.2 2.1h0m1.3-2.6h0m.2 3.1h0m.4-3.4h0m.3 3.4h0m0-3.1h0m.3 2.9h0m.8-3h0m.5 3h0m.9-3.3h0m0 3h0m0-.1h0m.8 .6h0m.4-.1h0m.2-3.8h0m0 2.8h0m.7-.2h0m.6-1.4h0m.2 1.4h0m.3-1.4h0m.4 1.4h0m.2-1.6h0m.4 2.9h0m.3-2.6h0m.2 2.6h0m.1-2.4h0m.1 .2h0m1.1 1.3h0m.2-1h0m.1 .9h0m.5 .4h0m.4-1.8h0m.1 2.4h0m.4-2.8h0m.9 2.2h0m0-2.4h0m.6 2.3h0m.2-2.5h0m0 2.1h0m1.5-2.3h0m.1 2.8h0m.1-.1h0m.1-2.5h0m.9 2.4h0m.5-2.1h0m.1 2.6h0m.7-2.8h0m1.1-.7h0m.6 3.8h0m.1-3.5h0m1.3-.2h0m.2 3.7h0m.7-3h0m.6 1.8h0m0 0h0m.2-1.8h0m.4-.3h0m.5 .1h0m.5 2.2h0m.2-1.8h0m.4 0h0m0 1.5h0m.2-1.5h0m.4 1.6h0m.2 .1h0m.3-1.2h0m.6 .1h0m0 .5h0m.4-.9h0m.2 .8h0m0 .1h0m.8-1.1h0m.3-.4h0m.2-.1h0m.6 2.1h0m.3-2.7h0m.1 2.9h0m.8-.1h0m.1 .4h0m.6 .3h0m.7-.4h0m.1-2.7h0m.3 .2h0m.6 2.6h0m.2-.1h0m.3-1.7h0m1-.1h0m.2 2.5h0m.8-.5h0m.8-2.8h0m.5 2.9h0m.6 .5h0m.2-3.7h0m0 3.2h0m1.2-3.6h0m.3 3.2h0m1 .3h0m.5-1.9h0m.5 1.4h0m.1-.2h0m.1-2h0m.7 1.7h0m0 .1h0m.1 0h0m.1-1.8h0m.9-.2h0m.3 2.8h0m.4-.3h0m.2-2.1h0m.4 .7h0m.3-.1h0m.5 2h0m.1-1.9h0m1 1.2h0m.2-.1h0m.3-.9h0m.1-.2h0m.3 .8h0m.3-.5h0m.9 .7h0m.1-1h0m.2 1.4h0m.1-1.8h0m0 0h0m.2 2.5h0m.7-3.3h0m.9-.8h0m.5 4.3h0m0-2.4h0m1.3 1.1h0m.5-1.8h0m.2-.5h0m.6 2.6h0m.1 .1h0m.5-2.4h0m1.2 3.4h0m.2 0h0m.2-.2h0m0-3h0m1.2-.3h0m1.3 3.1h0m.6-2.8h0m.6-.3h0m.3 0h0m.2 3h0m.9-2.3h0m.4 2.1h0m0 0h0m.8-2.2h0m.2 0h0m.6 2.2h0m.4-1.8h0m.2 2.5h0m.1-2.5h0m.8 2h0m.1-.3h0m0-.6h0m.5-.2h0m.3 .1h0m.4-2h0m.2 1.4h0m.3 1.3h0m.2-.1h0m.1-2.7h0m.4 3.2h0m.2-.1h0m.4-2.8h0m.5 2.3h0m.1-.3h0m.3-1.3h0m.7 0h0m.2 1.3h0m1.3 .4h0m.4-2.1h0m0 1.9h0m.4 .7h0m.5 .4h0m0-3.8h0m.5 2.5h0m1.3-1.2h0m.2 1.2h0m0-1.4h0m.5-.2h0m.8 2h0m.7-1.9h0m.1 1.2h0m.6-.2h0m.1 0h0m.7-1.5h0m.1 .2h0m.1 2.4h0m0-.1h0m.1 .2h0m1.2-2.4h0m.1 3h0m1.4-3.3h0m.3 2h0m.7 .3h0m.4 .2h0m.2 0h0m.3 .2h0m.1 .5h0m.1-4.4h0m.3 3.8h0m.6-2.8h0m0 2h0m.3 .1h0m1.2-3.2h0m.5 4.4h0m.9-2.4h0m1 1.7h0m.3-1.8h0m.2 .1h0m.3 2.6h0m.1-3.1h0m.4 2.9h0m.2-3.4h0m0-.2h0m.1 3.2h0m.2 0h0m.7-2.6h0m.5 2.3h0m1.1 .4h0m.1-1.6h0m.7-.7h0m.4-.1h0m.2 .2h0m.4 .4h0m.1 2.3h0m0-2.3h0m.1-.1h0m.2 .2h0m.1 0h0m0 1.9h0m.7-.5h0m.3-1.8h0m.3 0h0m.7-.2h0m.1 2.1h0m1.5 .7h0m.1-3.3h0m.6-1.4h0m.3 4.7h0m.1-2.9h0m.3 .1h0m.7 2.7h0m1-3.2h0m.7-.5h0m.2 3.7h0m1.1 0h0m.4-.5h0m.1-2.1h0m.4 0h0m.2-.3h0m.1 2.1h0m.3-2h0m.6 2.3h0m1-2.1h0m.2 2.3h0m.1-2.5h0m.7-1.3h0m.8 3.8h0m.1-4h0m.2 4.4h0m.6-3.8h0m0 .4h0m.1 .9h0m.2 2h0m.3-.2h0m.1-1.5h0m0-.2h0m.1 .1h0m.9 1.4h0m.1-.1h0m.5-1h0m.8 1.1h0m0-1.7h0m.1 .2h0m.1 0h0m.8-.2h0m.3 2.3h0m.5-2.9h0m.5-.1h0m0 0h0m.2 .4h0m.7 2.6h0m1.1-2.1h0m.1 1.6h0m.5-2.3h0m0-.1h0m1-.1h0m0 2.1h0m.4 .4h0m.7-.3h0m.2 0h0m.2 0h0m.6 .3h0m.1-2.4h0m1.9-.6h0m0 2.4h0m.5-3.9h0m.2 4.4h0m.8 .1h0m.2-.1h0m.2-2.7h0m.7 .1h0m.5-.6h0m0 3.1h0m1.6 .5h0m.4-3.2h0m1.6 2.9h0m.5-3.5h0m.7 3.2h0m.5 .6h0m.2-3.2h0m.6 3.1h0m.2-4.2h0m.7 1.2h0m.2 2.4h0m.5-.2h0m.5-.2h0m.1 .1h0m.4-2.4h0m.8 2.1h0m.5 .4h0m.8-2.5h0m.4 3.1h0m.7 0h0m.1-2.8h0m.5-.1h0m.7-.6h0m.3 .3h0m.5 2.9h0m.3 .7h0m.5-3.2h0m1.1-.4h0m.1 3.2h0m.1 .1h0m.7-2.8h0m.1 2.2h0m.2-2.1h0m.3 .2h0m.1 .1h0m.5 1.6h0m.6-2h0m.1-.8h0m.1 3.7h0m.7-.1h0m.2-.5h0m0 .2h0m.5-4h0m.4 1.3h0m.6 2h0m.1 .3h0m.5-1.9h0m1.3 1.6h0m.2-1.2h0m.3 1.7h0m.1 .2h0m.2-2.1h0m.1-.2h0m.4 1.9h0m.1 .1h0m.6-2.4h0m.5 .1h0m0 2.5h0m.2-2.2h0m.1 0h0m.1 2.3h0m.3 .2h0m.1-2.2h0m.3-.1h0m.4 1.7h0m.2-.2h0m.3-1.6h0m.2-.1h0m0-.1h0m.3-.4h0m0-1h0m.6 4.2h0m.8-3.4h0m.4 .1h0m.1 2.9h0m1.1 0h0m.3-3.6h0m.6 1h0m.1 1.5h0m.6-.2h0m.3 .1h0m1.1 1.1h0m0-.1h0m0-3.6h0m1.2 3.9h0m.3 .1h0m.5-3.5h0m0 3.5h0m.5 0h0m.7-3.2h0m.2 3.2h0m.9-3.1h0m.7 2.8h0m.5-2.3h0m.9-.5h0m.3 3h0m.5-.2h0m.4-2.5h0m1.1 2.7h0m.1-2.6h0m.5-.3h0m1.1 3.2h0m0-3.5h0m.9-1.5h0m.1 5.1h0m1.2-.6h0m.5-4.5h0m.7 3.8h0m.2 .1h0m.7-2.4h0m0 2.9h0m.1 .1h0m.5-2.8h0m.5 3.5h0m.3-2.3h0m.3 1.9h0m.6 .1h0m.6 0h0m0-3.8h0m.2 3.9h0m.7-4.2h0m.4 4h0m0-3.3h0m.1 3.3h0m.5-2.6h0m.4 2.5h0m1-3h0m.1 3.7h0m.8-3.6h0m.1 3.2h0m.2-3h0m1.2-.1h0m.9 3.3h0m0-4.6h0m1.2 1.5h0m.1 2.5h0m1.6-3.6h0m.2 0h0m.2 4.4h0m1.3-3.9h0m.1 2.9h0m0-.1h0m.7-.2h0m.3 .1h0m.6-3.3h0m.7 1.7h0m.4 1h0m.3-1h0m.5 1.8h0m.1-2h0m.3 1.9h0m.4 1.1h0m.3-3.4h0m.5 1.7h0m.1-1.9h0m.1 2.2h0m.7-.3h0m0-2.3h0m.9 3.2h0m.4 0h0m.7 0h0m.1-2.9h0m.9 2.9h0m.5-2.5h0m.4-.1h0m.3 2.8h0m.9-2.9h0m1 3h0m.1-3h0m1.6 2.1h0m0-1.8h0m.4-.3h0m0-.1h0m.6 .4h0m.1-.2h0m0 2.9h0m.1 .2h0m1 .4h0m.2-2.8h0m.7 0h0m.1 0h0m0-.2h0m.7-.3h0m.6-.7h0m0 2.9h0m.1 .1h0m.5 .3h0m.5 .6h0m.1-.6h0m.4 0h0m0-3h0m.4 2.8h0m.2 0h0m.9-.1h0m.4-3.2h0m1.2 3.6h0m.4-3.3h0m.3-.4h0m.6 3.1h0m1.1-.3h0m.1-1.6h0m.5 1.8h0m.3-.1h0m.1-2.1h0m.2-.9h0m.2 3.2h0m1.2-3.2h0m.1 2.6h0m.9-2.5h0m.2 3.3h0m0-3.1h0m1-.1h0m.3 3.1h0m.4 .4h0m.9 .4h0m.5-3.3h0m.2 .3h0m.8 2.5h0m1.1-1h0m0-2.6h0m.2-.2h0m.4 3.1h0m1.1 .1h0m.2-1.9h0m.9 2.1h0m.2-2.1h0m.3 2.2h0m.7 .2h0m.2-2.5h0m.3 3.2h0m.2-3.3h0m.3 3.1h0m.6-.4h0m.4-3.3h0m.4 3.1h0m1.4 .3h0m.1-3.9h0m.7 .6h0m.5 3h0m.3-2.1h0m.1 2h0m.6-2h0m.7 2h0m.1-2.5h0m.7 3.1h0m.2-3.4h0m.3 0h0m.4 3.1h0m.4-2.4h0m.9 .6h0m.3 1.1h0m.9-1.5h0m.2-.6h0m.7 2.2h0m.5 .2h0m.3-2.1h0m.3 3.1h0m.8-3.2h0m.6 2.3h0m.2-2.5h0m.6 2.4h0m.1 0h0m.5 .4h0m.1-.2h0m.1 .7h0m.5-3.4h0m.3 3.1h0m1.4-3.2h0m.2 3.9h0m.3-4.9h0m.3-.4h0m.3 .1h0m.7 1.5h0m.1 3.3h0m.2-3h0m1 3.4h0m.4-.7h0m.8-2.8h0m1.2 2.4h0m.3-2.2h0m.6-1.1h0m.4 4h0m1-1.2h0m.1 .2h0m.2-2.8h0m1 3.2h0m.3-3.2h0m1.2 .4h0m.2 2.6h0m.3 0h0m0-2.8h0m.1 2.7h0m.2 .4h0m.7-2.3h0m.4 0h0m.6 2.7h0m.8-3.7h0m.3-.5h0m.3 2.4h0m.1 1h0m0-.8h0" stroke="#000" stroke-width="2.4" stroke-linecap="round" fill="none"/>
<path d="M852.5 1004.3h0m316.9-1.8h0m23.1-4.1h0" stroke="#000" stroke-width="2.4" stroke-linecap="round" fill="none"/>
<path d="M162.3 763.5H165.7M1166.5 763.5H1169.5M1173.5 763.5H1178.5M1233.4 763.5H1235.9M1250.4 763.5H1253.9M1268.4 763.5H1271.9M1285.9 763.5H1288.9" stroke="#000" stroke-width="2.7" stroke-linecap="round"/>
<circle cx="1242" cy="802.5" r="1.35"/><circle cx="852.5" cy="840.5" r="1.35"/><circle cx="1192.3" cy="840.5" r="1.35"/><circle cx="852.5" cy="878.5" r="1.35"/><circle cx="1192.3" cy="878.5" r="1.35"/><circle cx="1242" cy="878.5" r="1.35"/>
<g fill="#fff" fill-opacity="0.55"><circle cx="1242" cy="802.5" r="0.4"/><circle cx="852.5" cy="840.5" r="0.4"/><circle cx="1192.3" cy="840.5" r="0.4"/><circle cx="852.5" cy="878.5" r="0.4"/><circle cx="1192.3" cy="878.5" r="0.4"/><circle cx="1242" cy="878.5" r="0.4"/></g>
<path d="M160.3 959.4h4.2l-2.1-3.9zM161.9 959.4h4.2l-2.1-3.9zM163.5 959.4h4.2l-2.1-3.9zM1164.4 959.4h4.2l-2.1-3.9zM1165.7 959.4h4.2l-2.1-3.9zM1167.0 959.4h4.2l-2.1-3.9zM1168.3 959.4h4.2l-2.1-3.9zM1169.6 959.4h4.2l-2.1-3.9zM1170.9 959.4h4.2l-2.1-3.9zM1172.2 959.4h4.2l-2.1-3.9zM1173.5 959.4h4.2l-2.1-3.9zM1174.8 959.4h4.2l-2.1-3.9zM1176.1 959.4h4.2l-2.1-3.9zM850.4 959.4h4.2l-2.1-3.9zM1190.2 959.4h4.2l-2.1-3.9zM1231.1 959.4h4.2l-2.1-3.9zM1232.4 959.4h4.2l-2.1-3.9zM1233.8 959.4h4.2l-2.1-3.9zM1235.1 959.4h4.2l-2.1-3.9zM1240.6 959.4h4.2l-2.1-3.9zM1248.9 959.4h4.2l-2.1-3.9zM1250.1 959.4h4.2l-2.1-3.9zM1251.3 959.4h4.2l-2.1-3.9zM1252.5 959.4h4.2l-2.1-3.9zM1266.9 959.4h4.2l-2.1-3.9zM1268.2 959.4h4.2l-2.1-3.9zM1269.6 959.4h4.2l-2.1-3.9zM1270.9 959.4h4.2l-2.1-3.9zM1284.1 959.4h4.2l-2.1-3.9zM1285.4 959.4h4.2l-2.1-3.9zM1286.6 959.4h4.2l-2.1-3.9zM1287.9 959.4h4.2l-2.1-3.9z" fill="none" stroke="#f00" stroke-width="1.25" stroke-linejoin="round"/>
<path d="M105.5 763.5H1485.5M105.5 802.5H1485.5M105.5 840.5H1485.5M105.5 878.5H1485.5M105.5 916.5H1485.5M105.5 957.5H1485.5M105.5 983.5H1485.5M105.5 1009.5H1485.5" stroke="#b0b0b0" stroke-width="1.11" stroke-dasharray="1.11 1.83"/>
<path d="M162 954.30V725.5M1166 954.30V725.5M1173 954.30V725.5M1233 954.30V725.5M1250 954.30V725.5M1268 954.30V725.5M1285 954.30V725.5M1303 954.30V725.5" stroke="#800080" stroke-width="2.08" stroke-dasharray="2.08 3.446" fill="none"/>
<path d="M162 1011.14V954.5M1166 1011.14V954.5M1173 1011.14V954.5M1233 1011.14V954.5M1250 1011.14V954.5M1268 1011.14V954.5M1285 1011.14V954.5M1303 1011.14V954.5" stroke="#800080" stroke-width="2.08" stroke-dasharray="2.08 3.446" fill="none"/>
<rect x="105.5" y="725.5" width="1380.0" height="286.0" fill="none" stroke="#000" stroke-width="1.11"/>
<path d="M105.5 954.5H1485.5" stroke="#000" stroke-width="1.11"/>
<path d="M105.5 763.5h-4.86M105.5 802.5h-4.86M105.5 840.5h-4.86M105.5 878.5h-4.86M105.5 916.5h-4.86M105.5 957.5h-4.86M105.5 983.5h-4.86M105.5 1009.5h-4.86M105.5 970.5h-2.78M105.5 996.5h-2.78" stroke="#000" stroke-width="1.11"/>
<text x="16.71" y="768.80" font-size="14.72" textLength="78.89" lengthAdjust="spacingAndGlyphs" fill="#000">not Kalman</text>
<text x="32.99" y="807.80" font-size="14.72" textLength="62.31" lengthAdjust="spacingAndGlyphs" fill="#000">not track</text>
<text x="38.52" y="845.80" font-size="14.72" textLength="57.68" lengthAdjust="spacingAndGlyphs" fill="#000">Ion. rad.</text>
<text x="52.71" y="883.80" font-size="14.72" textLength="43.26" lengthAdjust="spacingAndGlyphs" fill="#000">dr &gt; 5</text>
<text x="14.46" y="921.80" font-size="14.72" textLength="81.02" lengthAdjust="spacingAndGlyphs" fill="#000">OBS not OK</text>
<text x="78.61" y="961.90" font-size="14.72" textLength="17.00" lengthAdjust="spacingAndGlyphs" fill="#000">10</text>
<text x="87.88" y="987.90" font-size="14.72" textLength="7.68" lengthAdjust="spacingAndGlyphs" fill="#000">5</text>
<text x="87.40" y="1013.90" font-size="14.72" textLength="8.17" lengthAdjust="spacingAndGlyphs" fill="#000">0</text>
<g transform="rotate(-90)"><text x="-990.47" y="69.00" font-size="14.72" textLength="13.93" lengthAdjust="spacingAndGlyphs" fill="#000">dr</text></g>
<path d="M162.5 1011.5v4.86M431.5 1011.5v4.86M700.5 1011.5v4.86M969.5 1011.5v4.86M1238.5 1011.5v4.86" stroke="#000" stroke-width="1.11"/>
<text x="159.31" y="1032.00" font-size="14.72" textLength="8.27" lengthAdjust="spacingAndGlyphs" fill="#000">0</text>
<text x="413.29" y="1032.00" font-size="14.72" textLength="34.07" lengthAdjust="spacingAndGlyphs" fill="#000">5000</text>
<text x="677.93" y="1032.00" font-size="14.72" textLength="43.26" lengthAdjust="spacingAndGlyphs" fill="#000">10000</text>
<text x="947.04" y="1032.00" font-size="14.72" textLength="43.16" lengthAdjust="spacingAndGlyphs" fill="#000">15000</text>
<text x="1214.96" y="1032.00" font-size="14.72" textLength="44.15" lengthAdjust="spacingAndGlyphs" fill="#000">20000</text>
</svg></body></html>
